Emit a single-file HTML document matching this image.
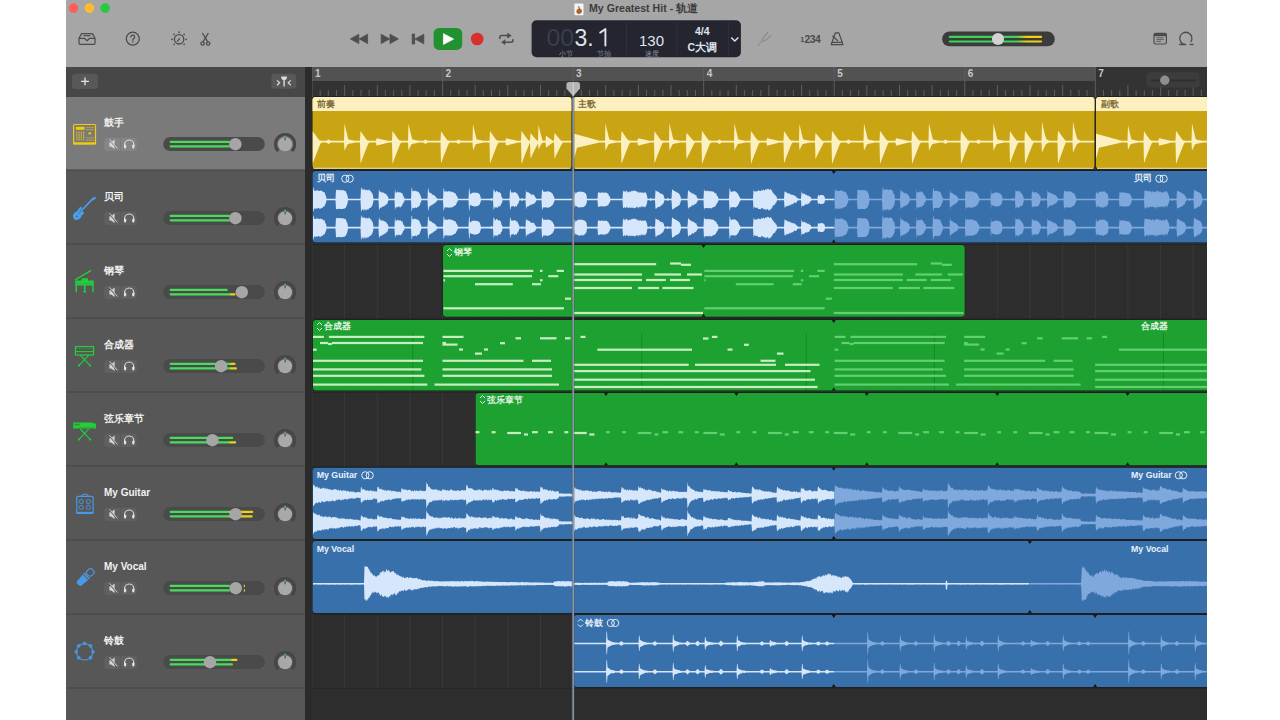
<!DOCTYPE html><html><head><meta charset="utf-8"><style>
*{margin:0;padding:0;box-sizing:border-box}
html,body{width:1280px;height:720px;overflow:hidden;background:#fff;font-family:"Liberation Sans",sans-serif}
.a{position:absolute}
</style></head><body>
<svg class="a" style="left:0;top:0" width="1280" height="720" viewBox="0 0 1280 720" font-family="Liberation Sans, sans-serif">
<defs><clipPath id="win"><rect x="66" y="0" width="1141" height="720"/></clipPath><clipPath id="arr"><rect x="312" y="67" width="895" height="653"/></clipPath></defs>
<g clip-path="url(#win)">
<rect x="66" y="0" width="1141" height="67" fill="#a6a6a6"/>
<rect x="66" y="67" width="239" height="653" fill="#575757"/>
<rect x="66" y="67" width="239" height="30" fill="#474747"/>
<rect x="305" y="67" width="7" height="653" fill="#2b2b2b"/>
<rect x="312" y="67" width="895" height="653" fill="#2d2d2d"/>
<circle cx="73.5" cy="8.1" r="4.8" fill="#fe5f57"/>
<circle cx="89.4" cy="8.1" r="4.8" fill="#febc2e"/>
<circle cx="105.1" cy="8.1" r="4.8" fill="#28c840"/>
<rect x="574.4" y="3.5" width="9.1" height="11.7" rx="1" fill="#f4f4f4"/>
<path d="M576.5 10.5Q576 13.5 578.5 14Q581.5 14 582 11Q582 9 580 8.5L579 6L578 6.2L578.6 8.8Q576.8 9.3 576.5 10.5Z" fill="#a8642a"/>
<text x="589" y="11.8" font-size="10.6" font-weight="bold" fill="#3c3c3c">My Greatest Hit - 轨道</text>
<g fill="none" stroke="#4b4b4b" stroke-width="1.25" stroke-linejoin="round"><path d="M81.6 33.6H92.4L95 38.3V43.2Q95 44.4 93.8 44.4H80.2Q79 44.4 79 43.2V38.3Z"/><path d="M79 38.3H84.3L87 40.8L89.7 38.3H95"/><path d="M83.5 35.6H90.5"/></g>
<circle cx="132.8" cy="38.7" r="6.5" fill="none" stroke="#4b4b4b" stroke-width="1.3"/>
<path d="M130.9 37.1Q130.9 35.1 132.8 35.1Q134.7 35.1 134.7 36.9Q134.7 38 133.5 38.7Q132.8 39.2 132.8 40.2" fill="none" stroke="#4b4b4b" stroke-width="1.2" stroke-linecap="round"/><circle cx="132.8" cy="41.9" r="0.75" fill="#4b4b4b"/>
<circle cx="179.1" cy="39.3" r="4.7" fill="none" stroke="#4b4b4b" stroke-width="1.3"/>
<path d="M179.8 38.5L176.9 41.6" stroke="#4b4b4b" stroke-width="1.2"/>
<circle cx="179.10" cy="32.20" r="0.85" fill="#4b4b4b"/>
<circle cx="174.08" cy="34.28" r="0.85" fill="#4b4b4b"/>
<circle cx="184.12" cy="34.28" r="0.85" fill="#4b4b4b"/>
<circle cx="172.00" cy="39.30" r="0.85" fill="#4b4b4b"/>
<circle cx="186.20" cy="39.30" r="0.85" fill="#4b4b4b"/>
<circle cx="174.08" cy="44.32" r="0.85" fill="#4b4b4b"/>
<circle cx="184.12" cy="44.32" r="0.85" fill="#4b4b4b"/>
<g fill="none" stroke="#4b4b4b" stroke-width="1.25"><path d="M202.4 33L207.6 41.6M208.4 33L203.2 41.6"/><circle cx="202.6" cy="43.5" r="1.7"/><circle cx="208.2" cy="43.5" r="1.7"/></g>
<g fill="#4e4e4e" stroke="#4e4e4e" stroke-width="0.8" stroke-linejoin="round"><path d="M350.4 38.9L358.8 34.2V43.6Z"/><path d="M359.2 38.9L367.6 34.2V43.6Z"/><path d="M398.4 38.9L390 34.2V43.6Z"/><path d="M389.6 38.9L381.2 34.2V43.6Z"/><path d="M412.2 34H414.6V44H412.2Z"/><path d="M415 39L423.8 34.2V43.8Z"/></g>
<rect x="433.6" y="27.9" width="28.6" height="22" rx="5.5" fill="#21922f"/>
<path d="M443.4 33.6L453.7 39.1L443.4 44.6Z" fill="#ffffff" stroke="#fff" stroke-width="0.6" stroke-linejoin="round"/>
<circle cx="477.2" cy="39" r="6.3" fill="#d8302a"/>
<g fill="none" stroke="#4e4e4e" stroke-width="1.5" stroke-linecap="round"><path d="M499.8 38.4V37.6Q499.8 35.6 501.8 35.6H508"/><path d="M513 39.6V40.2Q513 42.2 511 42.2H504.5"/></g>
<path d="M507.6 33.2L511.2 35.6L507.6 38Z M505 39.8L501.6 42.2L505 44.6Z" fill="#4e4e4e" stroke="#4e4e4e" stroke-width="0.6" stroke-linejoin="round"/>
<rect x="531.6" y="20.3" width="209.3" height="36.9" rx="5" fill="#24252f"/>
<rect x="626" y="22" width="1" height="33" fill="#30313b"/><rect x="676.3" y="22" width="1" height="33" fill="#30313b"/><rect x="727.8" y="22" width="1" height="33" fill="#30313b"/>
<text x="546.5" y="45.6" font-size="23" fill="#3a3d4d" textLength="27.5" lengthAdjust="spacingAndGlyphs">00</text>
<text x="574.5" y="45.6" font-size="23" fill="#dfe5ee">3.</text>
<path d="M605.4 29V45.6M600.2 32.6L605.2 29.2" fill="none" stroke="#dfe5ee" stroke-width="1.9" stroke-linecap="round"/>
<text x="566" y="56" font-size="6.5" fill="#8a90a0" text-anchor="middle">小节</text>
<text x="604" y="56" font-size="6.5" fill="#8a90a0" text-anchor="middle">节拍</text>
<text x="651.5" y="45.6" font-size="15" fill="#dfe5ee" text-anchor="middle">130</text>
<text x="651.5" y="56" font-size="6.5" fill="#8a90a0" text-anchor="middle">速度</text>
<text x="702.2" y="35.3" font-size="10.5" font-weight="bold" fill="#dfe5ee" text-anchor="middle">4/4</text>
<text x="702.2" y="51.2" font-size="10.5" font-weight="bold" fill="#dfe5ee" text-anchor="middle">C大调</text>
<path d="M731.2 37.4L734.8 41L738.4 37.4" fill="none" stroke="#dfe2ea" stroke-width="1.4"/>
<g fill="none" stroke="#8a8a8a" stroke-width="1.1" stroke-linecap="round"><path d="M758 45.5L762.3 40.6"/><path d="M767.6 32.6L762.8 38.4Q761.8 40.4 763.8 41Q765.2 41.2 766.4 39.6L771 35.6"/></g>
<text x="800.2" y="41.6" font-size="7.5" font-weight="bold" fill="#4b4b4b">1</text><text x="804.4" y="42.8" font-size="10.4" font-weight="bold" fill="#4b4b4b" letter-spacing="-0.5">234</text>
<g fill="none" stroke="#4b4b4b" stroke-width="1.2" stroke-linejoin="round"><path d="M835.4 32.8H838.8L843 44.6H831.2Z"/><path d="M831.6 42.4H842.6"/><path d="M832.4 35.8L838 41"/></g>
<rect x="942.1" y="31.6" width="112.7" height="14.7" rx="7.35" fill="#3b3b3b"/>
<defs><linearGradient id="gy" x1="948.7" x2="1042" gradientUnits="userSpaceOnUse"><stop offset="0.72" stop-color="#3fd25a"/><stop offset="0.84" stop-color="#f3cd16"/></linearGradient></defs>
<rect x="948.7" y="35.8" width="93.4" height="2.2" rx="1.1" fill="url(#gy)"/><rect x="948.7" y="40.4" width="93.4" height="2.2" rx="1.1" fill="url(#gy)"/>
<circle cx="998" cy="39" r="6.1" fill="#d2d2d2"/>
<g fill="none" stroke="#4b4b4b" stroke-width="1.2"><rect x="1154" y="33.4" width="12.4" height="10.6" rx="1.8"/></g>
<rect x="1154" y="33.4" width="12.4" height="2.8" fill="#4b4b4b"/>
<path d="M1156.4 37.8H1163.8M1156.4 39.6H1163.8M1156.4 41.4H1161" stroke="#4b4b4b" stroke-width="0.8"/>
<g fill="none" stroke="#4b4b4b" stroke-width="1.3"><path d="M1179.2 44.5H1186.2A6.1 6.1 0 1 1 1190.6 42.2"/><path d="M1189.6 44.5H1193.6"/></g>
<rect x="72" y="73.8" width="26" height="15.2" rx="3.5" fill="#585858"/>
<path d="M85 77.5V85.3M81.1 81.4H88.9" stroke="#e6e6e6" stroke-width="1.3"/>
<rect x="271.3" y="73.8" width="25" height="15" rx="3.5" fill="#585858"/>
<path d="M277 80.4L279.6 82.8L277 85.2M290.8 80.4L288.2 82.8L290.8 85.2" fill="none" stroke="#dcdcdc" stroke-width="1.2"/>
<path d="M281.2 76.4H287Q287 79.6 284.8 80.1V86.4H283.4V80.1Q281.2 79.6 281.2 76.4Z" fill="#dcdcdc"/>
<rect x="66" y="97" width="239" height="73" fill="#7a7a7a"/>
<rect x="66" y="169.5" width="239" height="1" fill="#454545"/>
<rect x="66" y="243.5" width="239" height="1" fill="#454545"/>
<rect x="66" y="317.5" width="239" height="1" fill="#454545"/>
<rect x="66" y="391.5" width="239" height="1" fill="#454545"/>
<rect x="66" y="465.5" width="239" height="1" fill="#454545"/>
<rect x="66" y="539.5" width="239" height="1" fill="#454545"/>
<rect x="66" y="613.5" width="239" height="1" fill="#454545"/>
<rect x="66" y="687.5" width="239" height="1" fill="#454545"/>
<text x="104" y="126" font-size="10" font-weight="bold" fill="#f2f2f2">鼓手</text>
<rect x="104.3" y="137.7" width="32.4" height="13.3" rx="3" fill="#858585"/>
<rect x="120.1" y="137.7" width="0.7" height="13.3" fill="#7a7a7a"/>
<path d="M109.4 142.2H111.2L114.6 139.6V149L111.2 146.4H109.4Z" fill="#e4e4e4" opacity="0.9"/>
<path d="M109.2 139.6L117.2 148.8" stroke="#858585" stroke-width="1.6"/><path d="M109.6 139.4L117.4 148.4" stroke="#e4e4e4" stroke-width="0.8"/>
<path d="M124.6 146.6V144.6A4.6 4.6 0 0 1 133.8 144.6V146.6" fill="none" stroke="#e4e4e4" stroke-width="1.1"/>
<rect x="124" y="144.8" width="2.2" height="3.6" rx="0.8" fill="#e4e4e4"/><rect x="132.2" y="144.8" width="2.2" height="3.6" rx="0.8" fill="#e4e4e4"/>
<rect x="163.2" y="137" width="101.6" height="14" rx="7" fill="#4a4a4a"/>
<rect x="169.6" y="140.8" width="60.4" height="2.3" rx="1.1" fill="#48db5c"/>
<rect x="169.6" y="145.3" width="60.4" height="2.3" rx="1.1" fill="#48db5c"/>
<circle cx="235.4" cy="144.2" r="6.2" fill="#a6a6a6"/>
<path d="M278.3 151.0A9.6 9.6 0 1 1 291.9 151.0" fill="none" stroke="#464646" stroke-width="3"/>
<circle cx="285.1" cy="144.2" r="7" fill="#a8a8a8"/>
<rect x="284.6" y="137.5" width="1" height="2.8" fill="#3a3a3a"/><circle cx="285.1" cy="136.5" r="0.9" fill="#40c050"/>
<text x="104" y="200" font-size="10" font-weight="bold" fill="#f2f2f2">贝司</text>
<rect x="104.3" y="211.7" width="32.4" height="13.3" rx="3" fill="#606060"/>
<rect x="120.1" y="211.7" width="0.7" height="13.3" fill="#575757"/>
<path d="M109.4 216.2H111.2L114.6 213.6V223L111.2 220.4H109.4Z" fill="#e4e4e4" opacity="0.9"/>
<path d="M109.2 213.6L117.2 222.8" stroke="#606060" stroke-width="1.6"/><path d="M109.6 213.4L117.4 222.4" stroke="#e4e4e4" stroke-width="0.8"/>
<path d="M124.6 220.6V218.6A4.6 4.6 0 0 1 133.8 218.6V220.6" fill="none" stroke="#e4e4e4" stroke-width="1.1"/>
<rect x="124" y="218.8" width="2.2" height="3.6" rx="0.8" fill="#e4e4e4"/><rect x="132.2" y="218.8" width="2.2" height="3.6" rx="0.8" fill="#e4e4e4"/>
<rect x="163.2" y="211" width="101.6" height="14" rx="7" fill="#4a4a4a"/>
<rect x="169.6" y="214.8" width="60.4" height="2.3" rx="1.1" fill="#48db5c"/>
<rect x="169.6" y="219.3" width="60.4" height="2.3" rx="1.1" fill="#48db5c"/>
<circle cx="235.4" cy="218.2" r="6.2" fill="#a6a6a6"/>
<path d="M278.3 225.0A9.6 9.6 0 1 1 291.9 225.0" fill="none" stroke="#464646" stroke-width="3"/>
<circle cx="285.1" cy="218.2" r="7" fill="#a8a8a8"/>
<rect x="284.6" y="211.5" width="1" height="2.8" fill="#3a3a3a"/><circle cx="285.1" cy="210.5" r="0.9" fill="#40c050"/>
<text x="104" y="274" font-size="10" font-weight="bold" fill="#f2f2f2">钢琴</text>
<rect x="104.3" y="285.7" width="32.4" height="13.3" rx="3" fill="#606060"/>
<rect x="120.1" y="285.7" width="0.7" height="13.3" fill="#575757"/>
<path d="M109.4 290.2H111.2L114.6 287.6V297L111.2 294.4H109.4Z" fill="#e4e4e4" opacity="0.9"/>
<path d="M109.2 287.6L117.2 296.8" stroke="#606060" stroke-width="1.6"/><path d="M109.6 287.4L117.4 296.4" stroke="#e4e4e4" stroke-width="0.8"/>
<path d="M124.6 294.6V292.6A4.6 4.6 0 0 1 133.8 292.6V294.6" fill="none" stroke="#e4e4e4" stroke-width="1.1"/>
<rect x="124" y="292.8" width="2.2" height="3.6" rx="0.8" fill="#e4e4e4"/><rect x="132.2" y="292.8" width="2.2" height="3.6" rx="0.8" fill="#e4e4e4"/>
<rect x="163.2" y="285" width="101.6" height="14" rx="7" fill="#4a4a4a"/>
<rect x="169.6" y="288.8" width="58.2" height="2.3" rx="1.1" fill="#48db5c"/>
<rect x="169.6" y="293.3" width="61.4" height="2.3" rx="1.1" fill="#48db5c"/>
<rect x="230.0" y="293.3" width="5.6" height="2.3" rx="1.1" fill="#e9d21a"/>
<circle cx="241.8" cy="292.2" r="6.2" fill="#a6a6a6"/>
<path d="M278.3 299.0A9.6 9.6 0 1 1 291.9 299.0" fill="none" stroke="#464646" stroke-width="3"/>
<circle cx="285.1" cy="292.2" r="7" fill="#a8a8a8"/>
<rect x="284.6" y="285.5" width="1" height="2.8" fill="#3a3a3a"/><circle cx="285.1" cy="284.5" r="0.9" fill="#40c050"/>
<text x="104" y="348" font-size="10" font-weight="bold" fill="#f2f2f2">合成器</text>
<rect x="104.3" y="359.7" width="32.4" height="13.3" rx="3" fill="#606060"/>
<rect x="120.1" y="359.7" width="0.7" height="13.3" fill="#575757"/>
<path d="M109.4 364.2H111.2L114.6 361.6V371L111.2 368.4H109.4Z" fill="#e4e4e4" opacity="0.9"/>
<path d="M109.2 361.6L117.2 370.8" stroke="#606060" stroke-width="1.6"/><path d="M109.6 361.4L117.4 370.4" stroke="#e4e4e4" stroke-width="0.8"/>
<path d="M124.6 368.6V366.6A4.6 4.6 0 0 1 133.8 366.6V368.6" fill="none" stroke="#e4e4e4" stroke-width="1.1"/>
<rect x="124" y="366.8" width="2.2" height="3.6" rx="0.8" fill="#e4e4e4"/><rect x="132.2" y="366.8" width="2.2" height="3.6" rx="0.8" fill="#e4e4e4"/>
<rect x="163.2" y="359" width="101.6" height="14" rx="7" fill="#4a4a4a"/>
<rect x="169.6" y="362.8" width="61.4" height="2.3" rx="1.1" fill="#48db5c"/>
<rect x="230.0" y="362.8" width="5.6" height="2.3" rx="1.1" fill="#e9d21a"/>
<rect x="169.6" y="367.3" width="61.4" height="2.3" rx="1.1" fill="#48db5c"/>
<rect x="230.0" y="367.3" width="7.0" height="2.3" rx="1.1" fill="#e9d21a"/>
<circle cx="221.1" cy="366.2" r="6.2" fill="#a6a6a6"/>
<path d="M278.3 373.0A9.6 9.6 0 1 1 291.9 373.0" fill="none" stroke="#464646" stroke-width="3"/>
<circle cx="285.1" cy="366.2" r="7" fill="#a8a8a8"/>
<rect x="284.6" y="359.5" width="1" height="2.8" fill="#3a3a3a"/><circle cx="285.1" cy="358.5" r="0.9" fill="#40c050"/>
<text x="104" y="422" font-size="10" font-weight="bold" fill="#f2f2f2">弦乐章节</text>
<rect x="104.3" y="433.7" width="32.4" height="13.3" rx="3" fill="#606060"/>
<rect x="120.1" y="433.7" width="0.7" height="13.3" fill="#575757"/>
<path d="M109.4 438.2H111.2L114.6 435.6V445L111.2 442.4H109.4Z" fill="#e4e4e4" opacity="0.9"/>
<path d="M109.2 435.6L117.2 444.8" stroke="#606060" stroke-width="1.6"/><path d="M109.6 435.4L117.4 444.4" stroke="#e4e4e4" stroke-width="0.8"/>
<path d="M124.6 442.6V440.6A4.6 4.6 0 0 1 133.8 440.6V442.6" fill="none" stroke="#e4e4e4" stroke-width="1.1"/>
<rect x="124" y="440.8" width="2.2" height="3.6" rx="0.8" fill="#e4e4e4"/><rect x="132.2" y="440.8" width="2.2" height="3.6" rx="0.8" fill="#e4e4e4"/>
<rect x="163.2" y="433" width="101.6" height="14" rx="7" fill="#4a4a4a"/>
<rect x="169.6" y="436.8" width="63.7" height="2.3" rx="1.1" fill="#48db5c"/>
<rect x="169.6" y="441.3" width="60.4" height="2.3" rx="1.1" fill="#48db5c"/>
<rect x="229.0" y="441.3" width="7.2" height="2.3" rx="1.1" fill="#e9d21a"/>
<circle cx="212.4" cy="440.2" r="6.2" fill="#a6a6a6"/>
<path d="M278.3 447.0A9.6 9.6 0 1 1 291.9 447.0" fill="none" stroke="#464646" stroke-width="3"/>
<circle cx="285.1" cy="440.2" r="7" fill="#a8a8a8"/>
<rect x="284.6" y="433.5" width="1" height="2.8" fill="#3a3a3a"/><circle cx="285.1" cy="432.5" r="0.9" fill="#40c050"/>
<text x="104" y="496" font-size="10" font-weight="bold" fill="#f2f2f2">My Guitar</text>
<rect x="104.3" y="507.7" width="32.4" height="13.3" rx="3" fill="#606060"/>
<rect x="120.1" y="507.7" width="0.7" height="13.3" fill="#575757"/>
<path d="M109.4 512.2H111.2L114.6 509.6V519L111.2 516.4H109.4Z" fill="#e4e4e4" opacity="0.9"/>
<path d="M109.2 509.6L117.2 518.8" stroke="#606060" stroke-width="1.6"/><path d="M109.6 509.4L117.4 518.4" stroke="#e4e4e4" stroke-width="0.8"/>
<path d="M124.6 516.6V514.6A4.6 4.6 0 0 1 133.8 514.6V516.6" fill="none" stroke="#e4e4e4" stroke-width="1.1"/>
<rect x="124" y="514.8" width="2.2" height="3.6" rx="0.8" fill="#e4e4e4"/><rect x="132.2" y="514.8" width="2.2" height="3.6" rx="0.8" fill="#e4e4e4"/>
<rect x="163.2" y="507" width="101.6" height="14" rx="7" fill="#4a4a4a"/>
<rect x="169.6" y="510.8" width="60.4" height="2.3" rx="1.1" fill="#48db5c"/>
<rect x="229.0" y="510.8" width="24.3" height="2.3" rx="1.1" fill="#e9d21a"/>
<rect x="169.6" y="515.3" width="60.4" height="2.3" rx="1.1" fill="#48db5c"/>
<rect x="229.0" y="515.3" width="23.7" height="2.3" rx="1.1" fill="#e9d21a"/>
<circle cx="235.6" cy="514.2" r="6.2" fill="#a6a6a6"/>
<path d="M278.3 521.0A9.6 9.6 0 1 1 291.9 521.0" fill="none" stroke="#464646" stroke-width="3"/>
<circle cx="285.1" cy="514.2" r="7" fill="#a8a8a8"/>
<rect x="284.6" y="507.5" width="1" height="2.8" fill="#3a3a3a"/><circle cx="285.1" cy="506.5" r="0.9" fill="#40c050"/>
<text x="104" y="570" font-size="10" font-weight="bold" fill="#f2f2f2">My Vocal</text>
<rect x="104.3" y="581.7" width="32.4" height="13.3" rx="3" fill="#606060"/>
<rect x="120.1" y="581.7" width="0.7" height="13.3" fill="#575757"/>
<path d="M109.4 586.2H111.2L114.6 583.6V593L111.2 590.4H109.4Z" fill="#e4e4e4" opacity="0.9"/>
<path d="M109.2 583.6L117.2 592.8" stroke="#606060" stroke-width="1.6"/><path d="M109.6 583.4L117.4 592.4" stroke="#e4e4e4" stroke-width="0.8"/>
<path d="M124.6 590.6V588.6A4.6 4.6 0 0 1 133.8 588.6V590.6" fill="none" stroke="#e4e4e4" stroke-width="1.1"/>
<rect x="124" y="588.8" width="2.2" height="3.6" rx="0.8" fill="#e4e4e4"/><rect x="132.2" y="588.8" width="2.2" height="3.6" rx="0.8" fill="#e4e4e4"/>
<rect x="163.2" y="581" width="101.6" height="14" rx="7" fill="#4a4a4a"/>
<rect x="169.6" y="584.8" width="60.4" height="2.3" rx="1.1" fill="#48db5c"/>
<rect x="169.6" y="589.3" width="60.4" height="2.3" rx="1.1" fill="#48db5c"/>
<rect x="243.8" y="584.8" width="1.2" height="2.3" fill="#e9c21a"/><rect x="243.8" y="589.3" width="1.2" height="2.3" fill="#e9c21a"/>
<circle cx="235.75" cy="588.2" r="6.2" fill="#a6a6a6"/>
<path d="M278.3 595.0A9.6 9.6 0 1 1 291.9 595.0" fill="none" stroke="#464646" stroke-width="3"/>
<circle cx="285.1" cy="588.2" r="7" fill="#a8a8a8"/>
<rect x="284.6" y="581.5" width="1" height="2.8" fill="#3a3a3a"/><circle cx="285.1" cy="580.5" r="0.9" fill="#40c050"/>
<text x="104" y="644" font-size="10" font-weight="bold" fill="#f2f2f2">铃鼓</text>
<rect x="104.3" y="655.7" width="32.4" height="13.3" rx="3" fill="#606060"/>
<rect x="120.1" y="655.7" width="0.7" height="13.3" fill="#575757"/>
<path d="M109.4 660.2H111.2L114.6 657.6V667L111.2 664.4H109.4Z" fill="#e4e4e4" opacity="0.9"/>
<path d="M109.2 657.6L117.2 666.8" stroke="#606060" stroke-width="1.6"/><path d="M109.6 657.4L117.4 666.4" stroke="#e4e4e4" stroke-width="0.8"/>
<path d="M124.6 664.6V662.6A4.6 4.6 0 0 1 133.8 662.6V664.6" fill="none" stroke="#e4e4e4" stroke-width="1.1"/>
<rect x="124" y="662.8" width="2.2" height="3.6" rx="0.8" fill="#e4e4e4"/><rect x="132.2" y="662.8" width="2.2" height="3.6" rx="0.8" fill="#e4e4e4"/>
<rect x="163.2" y="655" width="101.6" height="14" rx="7" fill="#4a4a4a"/>
<rect x="169.6" y="658.8" width="62.4" height="2.3" rx="1.1" fill="#48db5c"/>
<rect x="231.0" y="658.8" width="6.5" height="2.3" rx="1.1" fill="#e9d21a"/>
<rect x="169.6" y="663.3" width="63.4" height="2.3" rx="1.1" fill="#48db5c"/>
<circle cx="210" cy="662.2" r="6.2" fill="#a6a6a6"/>
<path d="M278.3 669.0A9.6 9.6 0 1 1 291.9 669.0" fill="none" stroke="#464646" stroke-width="3"/>
<circle cx="285.1" cy="662.2" r="7" fill="#a8a8a8"/>
<rect x="284.6" y="655.5" width="1" height="2.8" fill="#3a3a3a"/><circle cx="285.1" cy="654.5" r="0.9" fill="#40c050"/>
<rect x="73.6" y="124.5" width="21.9" height="19.3" rx="1" fill="none" stroke="#f2cc0c" stroke-width="1.2"/>
<rect x="73" y="142.3" width="23.1" height="2.1" fill="#f2cc0c"/>
<rect x="75.9" y="126.8" width="8.6" height="3" fill="#f2cc0c"/>
<rect x="76.2" y="131.6" width="1.2" height="1.1" fill="#f2cc0c"/><rect x="78.5" y="131.6" width="1.2" height="1.1" fill="#f2cc0c"/><rect x="80.8" y="131.6" width="1.2" height="1.1" fill="#f2cc0c"/><rect x="83.1" y="131.6" width="1.2" height="1.1" fill="#f2cc0c"/><rect x="76.2" y="133.5" width="1.2" height="1.1" fill="#f2cc0c"/><rect x="78.5" y="133.5" width="1.2" height="1.1" fill="#f2cc0c"/><rect x="80.8" y="133.5" width="1.2" height="1.1" fill="#f2cc0c"/><rect x="83.1" y="133.5" width="1.2" height="1.1" fill="#f2cc0c"/><rect x="76.2" y="135.4" width="1.2" height="1.1" fill="#f2cc0c"/><rect x="78.5" y="135.4" width="1.2" height="1.1" fill="#f2cc0c"/><rect x="80.8" y="135.4" width="1.2" height="1.1" fill="#f2cc0c"/><rect x="83.1" y="135.4" width="1.2" height="1.1" fill="#f2cc0c"/><rect x="76.2" y="137.3" width="1.2" height="1.1" fill="#f2cc0c"/><rect x="78.5" y="137.3" width="1.2" height="1.1" fill="#f2cc0c"/><rect x="80.8" y="137.3" width="1.2" height="1.1" fill="#f2cc0c"/><rect x="83.1" y="137.3" width="1.2" height="1.1" fill="#f2cc0c"/><rect x="76.2" y="139.2" width="1.2" height="1.1" fill="#f2cc0c"/><rect x="78.5" y="139.2" width="1.2" height="1.1" fill="#f2cc0c"/><rect x="80.8" y="139.2" width="1.2" height="1.1" fill="#f2cc0c"/><rect x="83.1" y="139.2" width="1.2" height="1.1" fill="#f2cc0c"/><rect x="86.6" y="126.9" width="1" height="1" fill="#f2cc0c"/><rect x="86.6" y="137.4" width="1" height="1" fill="#f2cc0c"/><rect x="88.6" y="126.9" width="1" height="1" fill="#f2cc0c"/><rect x="88.6" y="137.4" width="1" height="1" fill="#f2cc0c"/><rect x="90.6" y="126.9" width="1" height="1" fill="#f2cc0c"/><rect x="90.6" y="137.4" width="1" height="1" fill="#f2cc0c"/><rect x="92.6" y="126.9" width="1" height="1" fill="#f2cc0c"/><rect x="92.6" y="137.4" width="1" height="1" fill="#f2cc0c"/><rect x="86.6" y="129.2" width="1" height="1" fill="#f2cc0c"/><rect x="86.6" y="139.7" width="1" height="1" fill="#f2cc0c"/><rect x="88.6" y="129.2" width="1" height="1" fill="#f2cc0c"/><rect x="88.6" y="139.7" width="1" height="1" fill="#f2cc0c"/><rect x="90.6" y="129.2" width="1" height="1" fill="#f2cc0c"/><rect x="90.6" y="139.7" width="1" height="1" fill="#f2cc0c"/><rect x="92.6" y="129.2" width="1" height="1" fill="#f2cc0c"/><rect x="92.6" y="139.7" width="1" height="1" fill="#f2cc0c"/>
<ellipse cx="89.8" cy="133.3" rx="1.6" ry="1.1" fill="#f2cc0c"/>
<path d="M80.8 211.2L93.2 198.4" stroke="#4aa0f0" stroke-width="1.6" stroke-linecap="round"/>
<path d="M92 199.2L94.6 196.8Q96.4 196.4 95.6 198.4L93.4 200.4Z" fill="#4aa0f0"/>
<path d="M80.4 206.8L82.2 207.8L79.6 210.8L83.8 212L84.2 213.2L81.6 215.4Q80.4 219.8 76.4 220Q72.8 219.6 73 215.4Q73.6 212.4 76.6 211.4Q78.4 210.4 78.8 208.6Z" fill="#4aa0f0"/>
<circle cx="76.8" cy="216.3" r="0.9" fill="#575757"/><path d="M78.4 213.6L80.8 211.8" stroke="#575757" stroke-width="0.8"/>
<path d="M75.6 279.6L90.8 270.6" stroke="#22cf3a" stroke-width="1.3" stroke-linecap="round"/>
<path d="M75.2 280.4H81.6V278.2H88V280.4H93.8V285.4H75.2Z" fill="#22cf3a"/>
<rect x="75.5" y="285" width="1.5" height="7.3" fill="#22cf3a"/><rect x="84" y="285" width="1.5" height="6.6" fill="#22cf3a"/><rect x="83.2" y="291" width="3.1" height="1.4" rx="0.6" fill="#22cf3a"/><rect x="92.2" y="285" width="1.4" height="7.3" fill="#22cf3a"/>
<rect x="76.3" y="283.2" width="16.4" height="0.6" fill="#3aa04a"/>
<rect x="75.5" y="346.6" width="18" height="8.4" fill="none" stroke="#22cf3a" stroke-width="1.2"/>
<path d="M76 351.6H93" stroke="#22cf3a" stroke-width="1"/><path d="M76.6 348.4H92.4" stroke="#22cf3a" stroke-width="0.6" stroke-dasharray="1 1.2"/>
<path d="M80.4 355.3L90.3 365.6M88.6 355.3L78.8 365.6" stroke="#22cf3a" stroke-width="1.1" stroke-linecap="round"/>
<circle cx="78.9" cy="365.5" r="1" fill="#22cf3a"/><circle cx="90.2" cy="365.5" r="1" fill="#22cf3a"/>
<path d="M73.2 422.6H91.4L96 423.8V428.6H73.2Z" fill="#22cf3a"/>
<path d="M74.4 423.8H80.6L78.8 425.6H74.4Z" fill="#3c8a46"/><path d="M79 427.6H94.6" stroke="#3c8a46" stroke-width="0.6"/>
<path d="M80.4 429L90.3 439.6M88.6 429L78.8 439.6" stroke="#22cf3a" stroke-width="1.1" stroke-linecap="round"/>
<circle cx="78.9" cy="439.5" r="1" fill="#22cf3a"/><circle cx="90.2" cy="439.5" r="1" fill="#22cf3a"/>
<rect x="76.8" y="496.3" width="16.3" height="17" rx="1.2" fill="none" stroke="#4a98e6" stroke-width="1.2"/>
<rect x="76.3" y="511.8" width="17.2" height="2" fill="#4a98e6"/>
<path d="M81 496.2Q84.8 491.8 88.6 496.2" fill="none" stroke="#4a98e6" stroke-width="1.1"/>
<circle cx="81.2" cy="501.6" r="2.1" fill="none" stroke="#4a98e6" stroke-width="0.9"/>
<circle cx="81.2" cy="507.4" r="2.1" fill="none" stroke="#4a98e6" stroke-width="0.9"/>
<circle cx="88.4" cy="501.6" r="2.1" fill="none" stroke="#4a98e6" stroke-width="0.9"/>
<circle cx="88.4" cy="507.4" r="2.1" fill="none" stroke="#4a98e6" stroke-width="0.9"/>
<g transform="rotate(45 85 577.5)"><rect x="81.8" y="566.6" width="6.6" height="7.2" rx="2.6" fill="none" stroke="#4a98e6" stroke-width="1.1"/><rect x="81" y="574.6" width="8.2" height="1.6" fill="#4a98e6"/><path d="M81.2 577H89L88.2 586.4Q85.1 588.6 82 586.4Z" fill="#4a98e6"/></g>
<circle cx="84.6" cy="651.8" r="8.2" fill="none" stroke="#4a98e6" stroke-width="1.1"/>
<ellipse cx="84.60" cy="643.40" rx="1.9" ry="1.9" fill="#4a98e6" opacity="0.85"/>
<ellipse cx="90.54" cy="645.86" rx="1.9" ry="1.9" fill="#4a98e6" opacity="0.85"/>
<ellipse cx="78.66" cy="645.86" rx="1.9" ry="1.9" fill="#4a98e6" opacity="0.85"/>
<ellipse cx="93.00" cy="651.80" rx="1.9" ry="1.9" fill="#4a98e6" opacity="0.85"/>
<ellipse cx="76.20" cy="651.80" rx="1.9" ry="1.9" fill="#4a98e6" opacity="0.85"/>
<ellipse cx="90.54" cy="657.74" rx="1.9" ry="1.9" fill="#4a98e6" opacity="0.85"/>
<ellipse cx="78.66" cy="657.74" rx="1.9" ry="1.9" fill="#4a98e6" opacity="0.85"/>
</g>
<g clip-path="url(#arr)">
<rect x="312" y="67" width="895" height="14" fill="#333333"/>
<rect x="312" y="67" width="783.3" height="14" fill="#525252"/>
<rect x="312" y="81" width="895" height="16" fill="#333333"/>
<path d="M312.0 67V97 M320.2 90V96 M328.3 90V96 M336.5 90V96 M344.6 85V96 M352.8 90V96 M361.0 90V96 M369.1 90V96 M377.3 85V96 M385.4 90V96 M393.6 90V96 M401.8 90V96 M409.9 85V96 M418.1 90V96 M426.2 90V96 M434.4 90V96 M442.6 67V97 M450.7 90V96 M458.9 90V96 M467.0 90V96 M475.2 85V96 M483.3 90V96 M491.5 90V96 M499.7 90V96 M507.8 85V96 M516.0 90V96 M524.1 90V96 M532.3 90V96 M540.5 85V96 M548.6 90V96 M556.8 90V96 M564.9 90V96 M573.1 67V97 M581.3 90V96 M589.4 90V96 M597.6 90V96 M605.7 85V96 M613.9 90V96 M622.1 90V96 M630.2 90V96 M638.4 85V96 M646.5 90V96 M654.7 90V96 M662.9 90V96 M671.0 85V96 M679.2 90V96 M687.3 90V96 M695.5 90V96 M703.7 67V97 M711.8 90V96 M720.0 90V96 M728.1 90V96 M736.3 85V96 M744.4 90V96 M752.6 90V96 M760.8 90V96 M768.9 85V96 M777.1 90V96 M785.2 90V96 M793.4 90V96 M801.6 85V96 M809.7 90V96 M817.9 90V96 M826.0 90V96 M834.2 67V97 M842.4 90V96 M850.5 90V96 M858.7 90V96 M866.8 85V96 M875.0 90V96 M883.2 90V96 M891.3 90V96 M899.5 85V96 M907.6 90V96 M915.8 90V96 M924.0 90V96 M932.1 85V96 M940.3 90V96 M948.4 90V96 M956.6 90V96 M964.8 67V97 M972.9 90V96 M981.1 90V96 M989.2 90V96 M997.4 85V96 M1005.5 90V96 M1013.7 90V96 M1021.9 90V96 M1030.0 85V96 M1038.2 90V96 M1046.3 90V96 M1054.5 90V96 M1062.7 85V96 M1070.8 90V96 M1079.0 90V96 M1087.1 90V96 M1095.3 67V97 M1103.5 90V96 M1111.6 90V96 M1119.8 90V96 M1127.9 85V96 M1136.1 90V96 M1144.3 90V96 M1152.4 90V96 M1160.6 85V96 M1168.7 90V96 M1176.9 90V96 M1185.1 90V96 M1193.2 85V96 M1201.4 90V96 M1209.5 90V96" stroke="#5e5e5e" stroke-width="1"/>
<text x="315.0" y="77" font-size="10" font-weight="bold" fill="#c8c8c8">1</text>
<text x="445.6" y="77" font-size="10" font-weight="bold" fill="#c8c8c8">2</text>
<text x="576.1" y="77" font-size="10" font-weight="bold" fill="#c8c8c8">3</text>
<text x="706.7" y="77" font-size="10" font-weight="bold" fill="#c8c8c8">4</text>
<text x="837.2" y="77" font-size="10" font-weight="bold" fill="#c8c8c8">5</text>
<text x="967.8" y="77" font-size="10" font-weight="bold" fill="#c8c8c8">6</text>
<text x="1098.3" y="77" font-size="10" font-weight="bold" fill="#c8c8c8">7</text>
<path d="M312.0 97V689 M344.6 97V689 M377.3 97V689 M409.9 97V689 M442.6 97V689 M475.2 97V689 M507.8 97V689 M540.5 97V689 M573.1 97V689 M605.7 97V689 M638.4 97V689 M671.0 97V689 M703.7 97V689 M736.3 97V689 M768.9 97V689 M801.6 97V689 M834.2 97V689 M866.8 97V689 M899.5 97V689 M932.1 97V689 M964.8 97V689 M997.4 97V689 M1030.0 97V689 M1062.7 97V689 M1095.3 97V689 M1127.9 97V689 M1160.6 97V689 M1193.2 97V689" stroke="#3a3a3a" stroke-width="1"/>
<rect x="312" y="170" width="895" height="1" fill="#262626"/>
<rect x="312" y="244" width="895" height="1" fill="#262626"/>
<rect x="312" y="318" width="895" height="1" fill="#262626"/>
<rect x="312" y="392" width="895" height="1" fill="#262626"/>
<rect x="312" y="466" width="895" height="1" fill="#262626"/>
<rect x="312" y="540" width="895" height="1" fill="#262626"/>
<rect x="312" y="614" width="895" height="1" fill="#262626"/>
<rect x="312" y="688" width="895" height="1" fill="#262626"/>
<rect x="312.0" y="96.5" width="260.0" height="72.8" rx="3.5" fill="#151515"/>
<rect x="312.5" y="97.0" width="259.0" height="71.8" rx="3" fill="#c9a514"/>
<path d="M315.5 97H568.5Q571.5 97 571.5 100V111H312.5V100Q312.5 97 315.5 97Z" fill="#fdf0c0"/>
<rect x="313.5" y="167.8" width="257.0" height="1" fill="#f0e3a8"/>
<text x="317.0" y="107" font-size="8.8" font-weight="bold" fill="#7c6c34">前奏</text>
<clipPath id="dc312"><rect x="312.5" y="111" width="259.0" height="57"/></clipPath>
<path clip-path="url(#dc312)" d="M312.5 130.7L313 131.5L313.5 132.2L314 132.9L314.5 133.7L315 134.4L315.5 135.1L316 135.9L316.5 136.6L317 137.3L317.5 138L318 138.6L318.5 139.3L319 140L319.5 140.3L320 140.4L320.5 140.5L321 140.6L321.5 140.7L322 140.7L322.5 140.8L323 140.8L323.5 140.8L324 140.8L324.5 140.8L325 140.8L325.5 140.8L326 140.8L326.5 140.7L327 140.4L327.5 140.1L328 139.7L328.5 139.4L329 139.7L329.5 140.1L330 140.4L330.5 140.7L331 140.8L331.5 140.8L332 140.8L332.5 140.8L333 140.8L333.5 140.8L334 140.8L334.5 140.8L335 140.8L335.5 140.8L336 140.8L336.5 140.8L337 140.8L337.5 140.8L338 140.8L338.5 140.8L339 140.8L339.5 140.8L340 140.8L340.5 140.8L341 140.8L341.5 140.8L342 140.8L342.5 140.8L343 140.8L343.5 140.8L344 140.8L344.5 123.2L345 125.4L345.5 127.7L346 129.9L346.5 132L347 134.1L347.5 136.2L348 138.2L348.5 139.5L349 139.6L349.5 139.7L350 139.8L350.5 139.9L351 140L351.5 140.1L352 140.2L352.5 140.3L353 140.4L353.5 140.5L354 140.6L354.5 140.7L355 140.8L355.5 140.8L356 140.8L356.5 140.8L357 140.8L357.5 140.8L358 140.8L358.5 140.8L359 140.8L359.5 140.8L360 140.8L360.5 131L361 131.8L361.5 132.5L362 133.2L362.5 134L363 134.7L363.5 135.4L364 136.1L364.5 136.8L365 137.5L365.5 138.2L366 138.9L366.5 139.6L367 140.2L367.5 140.3L368 140.4L368.5 140.5L369 140.6L369.5 140.7L370 140.8L370.5 140.8L371 140.8L371.5 140.8L372 140.8L372.5 140.8L373 140.8L373.5 140.8L374 140.8L374.5 140.8L375 140.8L375.5 140.8L376 140.8L376.5 138.3L377 138.4L377.5 138.5L378 138.6L378.5 138.7L379 138.8L379.5 138.9L380 139L380.5 139.1L381 139.2L381.5 139.4L382 139.5L382.5 139.6L383 139.7L383.5 139.8L384 139.9L384.5 140L385 140.1L385.5 140.2L386 140.3L386.5 140.5L387 140.6L387.5 140.7L388 140.8L388.5 140.8L389 140.8L389.5 140.8L390 140.8L390.5 140.8L391 140.8L391.5 140.8L392 140.8L392.5 130.9L393 131.6L393.5 132.4L394 133.1L394.5 133.8L395 134.6L395.5 135.3L396 136L396.5 136.7L397 137.4L397.5 138.1L398 138.8L398.5 139.4L399 140.1L399.5 140.3L400 140.4L400.5 140.5L401 140.6L401.5 140.7L402 140.8L402.5 140.8L403 140.8L403.5 140.8L404 140.8L404.5 140.8L405 140.8L405.5 140.8L406 140.8L406.5 140.8L407 140.8L407.5 140.8L408 140.8L408.5 123.7L409 125.9L409.5 128.1L410 130.3L410.5 132.4L411 134.5L411.5 136.6L412 138.6L412.5 139.5L413 139.6L413.5 139.7L414 139.8L414.5 139.9L415 140L415.5 140.1L416 140.2L416.5 140.3L417 140.4L417.5 140.5L418 140.6L418.5 140.7L419 140.8L419.5 140.8L420 140.8L420.5 140.8L421 140.8L421.5 140.8L422 140.8L422.5 140.8L423 140.8L423.5 140.7L424 140.4L424.5 140.1L425 139.7L425.5 139.4L426 139.7L426.5 140.1L427 140.4L427.5 140.7L428 140.8L428.5 140.8L429 140.8L429.5 140.8L430 140.8L430.5 140.8L431 140.8L431.5 140.8L432 140.8L432.5 140.8L433 140.8L433.5 140.8L434 140.8L434.5 140.8L435 140.8L435.5 140.8L436 140.8L436.5 140.8L437 140.8L437.5 140.8L438 140.8L438.5 140.8L439 140.8L439.5 140.8L440 140.8L440.5 140.8L441 131.2L441.5 131.9L442 132.6L442.5 133.4L443 134.1L443.5 134.9L444 135.6L444.5 136.3L445 137L445.5 137.7L446 138.4L446.5 139L447 139.7L447.5 140.3L448 140.4L448.5 140.5L449 140.5L449.5 140.6L450 140.7L450.5 140.8L451 140.8L451.5 140.8L452 140.8L452.5 140.8L453 140.8L453.5 140.8L454 140.8L454.5 140.8L455 140.8L455.5 140.8L456 140.8L456.5 140.7L457 140.4L457.5 140.1L458 139.7L458.5 139.4L459 139.7L459.5 140.1L460 140.4L460.5 140.7L461 140.8L461.5 140.8L462 140.8L462.5 140.8L463 140.8L463.5 140.8L464 140.8L464.5 140.8L465 140.8L465.5 140.8L466 140.8L466.5 140.8L467 140.8L467.5 140.8L468 140.8L468.5 140.8L469 140.8L469.5 140.8L470 140.8L470.5 140.8L471 140.8L471.5 140.8L472 140.8L472.5 140.8L473 124.1L473.5 126.3L474 128.5L474.5 130.7L475 132.9L475.5 134.9L476 137L476.5 138.9L477 139.5L477.5 139.6L478 139.7L478.5 139.8L479 139.9L479.5 140L480 140.1L480.5 140.2L481 140.3L481.5 140.4L482 140.5L482.5 140.6L483 140.7L483.5 140.8L484 140.8L484.5 140.8L485 140.8L485.5 140.8L486 140.8L486.5 140.8L487 140.8L487.5 140.8L488 140.8L488.5 140.8L489 140.8L489.5 140.8L490 131L490.5 131.8L491 132.5L491.5 133.2L492 134L492.5 134.7L493 135.4L493.5 136.1L494 136.8L494.5 137.5L495 138.2L495.5 138.9L496 139.6L496.5 140.2L497 140.3L497.5 140.4L498 140.5L498.5 140.6L499 140.7L499.5 140.8L500 140.8L500.5 140.8L501 140.8L501.5 140.8L502 140.8L502.5 140.8L503 140.8L503.5 140.8L504 140.8L504.5 140.8L505 140.8L505.5 140.8L506 138.3L506.5 138.4L507 138.5L507.5 138.6L508 138.7L508.5 138.8L509 138.9L509.5 139.1L510 139.2L510.5 139.3L511 139.4L511.5 139.5L512 139.6L512.5 139.7L513 139.8L513.5 139.9L514 140L514.5 140.1L515 140.3L515.5 140.4L516 140.5L516.5 140.6L517 140.7L517.5 140.8L518 140.8L518.5 140.8L519 140.8L519.5 140.8L520 140.8L520.5 140.8L521 140.8L521.5 130.7L522 131.5L522.5 132.2L523 132.9L523.5 133.7L524 134.4L524.5 135.1L525 135.9L525.5 136.6L526 137.3L526.5 138L527 138.6L527.5 139.3L528 140L528.5 140.3L529 140.4L529.5 140.5L530 140.6L530.5 133.1L531 133.7L531.5 134.3L532 134.9L532.5 135.5L533 136.1L533.5 136.7L534 137.3L534.5 137.8L535 138.4L535.5 139L536 139.5L536.5 140.1L537 140.6L537.5 140.8L538 140.8L538.5 125.1L539 127.2L539.5 129.2L540 131.2L540.5 133.2L541 135.1L541.5 137L542 138.8L542.5 140.5L543 140.6L543.5 140.8L544 140.8L544.5 140.8L545 140.8L545.5 140.8L546 135.7L546.5 136.1L547 136.4L547.5 136.8L548 137.2L548.5 137.6L549 137.9L549.5 138.3L550 138.7L550.5 139.1L551 139.4L551.5 139.8L552 140.2L552.5 140.6L553 140.8L553.5 140.8L554 140.8L554.5 132.9L555 133.6L555.5 134.2L556 134.8L556.5 135.4L557 136L557.5 136.6L558 137.2L558.5 137.7L559 138.3L559.5 138.9L560 139.4L560.5 140L561 140.5L561.5 140.8L562 140.8L562.5 140.8L563 140.8L563.5 140.8L564 140.8L564.5 140.8L565 140.8L565.5 140.8L566 140.8L566.5 140.8L567 140.8L567.5 140.8L568 140.8L568.5 140.8L569 140.8L569.5 140.8L570 140.8L570.5 140.8L571 140.8L571.5 140.8L571.5 142.6L571 142.6L570.5 142.6L570 142.6L569.5 142.6L569 142.6L568.5 142.6L568 142.6L567.5 142.6L567 142.6L566.5 142.6L566 142.6L565.5 142.6L565 142.6L564.5 142.6L564 142.6L563.5 142.6L563 142.6L562.5 142.9L562 143.8L561.5 144.7L561 145.6L560.5 146.5L560 147.5L559.5 148.5L559 149.5L558.5 150.5L558 151.5L557.5 152.5L557 153.5L556.5 154.6L556 155.6L555.5 156.7L555 157.7L554.5 158.8L554 142.6L553.5 142.6L553 142.6L552.5 142.8L552 143.2L551.5 143.6L551 143.9L550.5 144.3L550 144.7L549.5 145.1L549 145.4L548.5 145.8L548 146.2L547.5 146.6L547 146.9L546.5 147.3L546 147.7L545.5 142.6L545 142.6L544.5 142.6L544 142.6L543.5 142.6L543 142.8L542.5 142.9L542 143.1L541.5 143.9L541 144.8L540.5 145.7L540 146.6L539.5 147.6L539 148.5L538.5 149.5L538 143.6L537.5 144.5L537 145.4L536.5 146.4L536 147.3L535.5 148.3L535 149.3L534.5 150.3L534 151.3L533.5 152.3L533 153.3L532.5 154.3L532 155.4L531.5 156.4L531 157.5L530.5 158.6L530 142.8L529.5 143.7L529 144.8L528.5 146L528 147.2L527.5 148.4L527 149.7L526.5 150.9L526 152.2L525.5 153.5L525 154.8L524.5 156.1L524 157.4L523.5 158.8L523 160.1L522.5 161.5L522 162.8L521.5 164.2L521 142.6L520.5 142.6L520 142.6L519.5 142.6L519 142.6L518.5 142.6L518 142.6L517.5 142.7L517 142.8L516.5 143L516 143.1L515.5 143.2L515 143.3L514.5 143.5L514 143.6L513.5 143.7L513 143.8L512.5 144L512 144.1L511.5 144.2L511 144.3L510.5 144.5L510 144.6L509.5 144.7L509 144.8L508.5 145L508 145.1L507.5 145.2L507 145.3L506.5 145.5L506 145.6L505.5 142.6L505 142.6L504.5 142.6L504 142.6L503.5 142.6L503 142.6L502.5 142.6L502 142.6L501.5 142.6L501 142.6L500.5 142.6L500 142.6L499.5 142.6L499 142.7L498.5 142.8L498 143.3L497.5 144.4L497 145.5L496.5 146.7L496 147.9L495.5 149.2L495 150.4L494.5 151.7L494 153L493.5 154.3L493 155.6L492.5 156.9L492 158.2L491.5 159.6L491 160.9L490.5 162.3L490 163.7L489.5 142.6L489 142.6L488.5 142.6L488 142.6L487.5 142.6L487 142.6L486.5 142.6L486 142.6L485.5 142.6L485 142.6L484.5 142.6L484 142.6L483.5 142.6L483 142.7L482.5 142.8L482 142.9L481.5 143L481 143.1L480.5 143.2L480 143.3L479.5 143.4L479 143.5L478.5 143.6L478 143.7L477.5 143.8L477 143.9L476.5 144L476 144.1L475.5 145L475 146L474.5 147L474 148.1L473.5 149.2L473 150.3L472.5 142.6L472 142.6L471.5 142.6L471 142.6L470.5 142.6L470 142.6L469.5 142.6L469 142.6L468.5 142.6L468 142.6L467.5 142.6L467 142.6L466.5 142.6L466 142.6L465.5 142.6L465 142.6L464.5 142.6L464 142.6L463.5 142.6L463 142.6L462.5 142.6L462 142.6L461.5 142.6L461 142.6L460.5 142.7L460 143L459.5 143.3L459 143.7L458.5 144L458 143.7L457.5 143.3L457 143L456.5 142.7L456 142.6L455.5 142.6L455 142.6L454.5 142.6L454 142.6L453.5 142.6L453 142.6L452.5 142.6L452 142.6L451.5 142.6L451 142.6L450.5 142.6L450 142.7L449.5 142.8L449 143.1L448.5 144.2L448 145.3L447.5 146.5L447 147.7L446.5 148.9L446 150.2L445.5 151.4L445 152.7L444.5 154L444 155.3L443.5 156.6L443 158L442.5 159.3L442 160.7L441.5 162L441 163.4L440.5 142.6L440 142.6L439.5 142.6L439 142.6L438.5 142.6L438 142.6L437.5 142.6L437 142.6L436.5 142.6L436 142.6L435.5 142.6L435 142.6L434.5 142.6L434 142.6L433.5 142.6L433 142.6L432.5 142.6L432 142.6L431.5 142.6L431 142.6L430.5 142.6L430 142.6L429.5 142.6L429 142.6L428.5 142.6L428 142.6L427.5 142.7L427 143L426.5 143.3L426 143.7L425.5 144L425 143.7L424.5 143.3L424 143L423.5 142.7L423 142.6L422.5 142.6L422 142.6L421.5 142.6L421 142.6L420.5 142.6L420 142.6L419.5 142.6L419 142.6L418.5 142.7L418 142.8L417.5 142.9L417 143L416.5 143.1L416 143.2L415.5 143.3L415 143.4L414.5 143.5L414 143.6L413.5 143.7L413 143.8L412.5 143.9L412 144L411.5 144.2L411 145.2L410.5 146.2L410 147.3L409.5 148.3L409 149.4L408.5 150.5L408 142.6L407.5 142.6L407 142.6L406.5 142.6L406 142.6L405.5 142.6L405 142.6L404.5 142.6L404 142.6L403.5 142.6L403 142.6L402.5 142.6L402 142.6L401.5 142.7L401 142.8L400.5 143.5L400 144.6L399.5 145.8L399 147L398.5 148.2L398 149.4L397.5 150.7L397 151.9L396.5 153.2L396 154.5L395.5 155.8L395 157.2L394.5 158.5L394 159.8L393.5 161.2L393 162.6L392.5 163.9L392 142.6L391.5 142.6L391 142.6L390.5 142.6L390 142.6L389.5 142.6L389 142.6L388.5 142.6L388 142.8L387.5 142.9L387 143L386.5 143.1L386 143.2L385.5 143.4L385 143.5L384.5 143.6L384 143.8L383.5 143.9L383 144L382.5 144.1L382 144.2L381.5 144.4L381 144.5L380.5 144.6L380 144.8L379.5 144.9L379 145L378.5 145.1L378 145.2L377.5 145.4L377 145.5L376.5 145.6L376 142.6L375.5 142.6L375 142.6L374.5 142.6L374 142.6L373.5 142.6L373 142.6L372.5 142.6L372 142.6L371.5 142.6L371 142.6L370.5 142.6L370 142.6L369.5 142.7L369 142.8L368.5 143.3L368 144.4L367.5 145.5L367 146.7L366.5 147.9L366 149.2L365.5 150.4L365 151.7L364.5 153L364 154.3L363.5 155.6L363 156.9L362.5 158.2L362 159.6L361.5 160.9L361 162.3L360.5 163.7L360 142.6L359.5 142.6L359 142.6L358.5 142.6L358 142.6L357.5 142.6L357 142.6L356.5 142.6L356 142.6L355.5 142.6L355 142.6L354.5 142.7L354 142.8L353.5 142.9L353 143L352.5 143.1L352 143.2L351.5 143.3L351 143.4L350.5 143.5L350 143.6L349.5 143.7L349 143.8L348.5 143.9L348 144L347.5 144.4L347 145.4L346.5 146.4L346 147.5L345.5 148.5L345 149.6L344.5 150.7L344 142.6L343.5 142.6L343 142.6L342.5 142.6L342 142.6L341.5 142.6L341 142.6L340.5 142.6L340 142.6L339.5 142.6L339 142.6L338.5 142.6L338 142.6L337.5 142.6L337 142.6L336.5 142.6L336 142.6L335.5 142.6L335 142.6L334.5 142.6L334 142.6L333.5 142.6L333 142.6L332.5 142.6L332 142.6L331.5 142.6L331 142.6L330.5 142.7L330 143L329.5 143.3L329 143.7L328.5 144L328 143.7L327.5 143.3L327 143L326.5 142.7L326 142.6L325.5 142.6L325 142.6L324.5 142.6L324 142.6L323.5 142.6L323 142.6L322.5 142.6L322 142.7L321.5 142.7L321 142.8L320.5 143.7L320 144.8L319.5 146L319 147.2L318.5 148.4L318 149.7L317.5 150.9L317 152.2L316.5 153.5L316 154.8L315.5 156.1L315 157.4L314.5 158.8L314 160.1L313.5 161.5L313 162.8L312.5 164.2Z" fill="#fdf0c0"/>
<rect x="573.0" y="96.5" width="522.0" height="72.8" rx="3.5" fill="#151515"/>
<rect x="573.5" y="97.0" width="521.0" height="71.8" rx="3" fill="#c9a514"/>
<path d="M576.5 97H1091.5Q1094.5 97 1094.5 100V111H573.5V100Q573.5 97 576.5 97Z" fill="#fdf0c0"/>
<rect x="574.5" y="167.8" width="519.0" height="1" fill="#f0e3a8"/>
<text x="578.0" y="107" font-size="8.8" font-weight="bold" fill="#7c6c34">主歌</text>
<clipPath id="dc573"><rect x="573.5" y="111" width="521.0" height="57"/></clipPath>
<path clip-path="url(#dc573)" d="M573.5 140.8L574 133.7L574.5 133.8L575 134L575.5 134.1L576 134.3L576.5 134.4L577 134.5L577.5 134.7L578 134.8L578.5 134.9L579 135.1L579.5 135.2L580 135.4L580.5 135.5L581 135.6L581.5 135.8L582 135.9L582.5 136L583 136.2L583.5 136.3L584 136.5L584.5 136.6L585 136.7L585.5 136.9L586 137L586.5 137.1L587 137.3L587.5 137.4L588 137.6L588.5 137.7L589 137.8L589.5 138L590 138.1L590.5 138.3L591 138.4L591.5 138.5L592 138.7L592.5 138.8L593 138.9L593.5 139.1L594 139.2L594.5 139.4L595 139.5L595.5 139.6L596 139.8L596.5 139.9L597 140L597.5 140.2L598 140.3L598.5 140.5L599 140.6L599.5 140.7L600 140.8L600.5 140.8L601 140.8L601.5 140.8L602 140.8L602.5 140.8L603 140.8L603.5 140.8L604 140.8L604.5 140.8L605 140.8L605.5 123.2L606 125.4L606.5 127.7L607 129.9L607.5 132L608 134.1L608.5 136.2L609 138.2L609.5 139.5L610 139.6L610.5 139.7L611 139.8L611.5 139.9L612 140L612.5 140.1L613 140.2L613.5 140.3L614 140.4L614.5 140.5L615 140.6L615.5 140.7L616 140.8L616.5 140.8L617 140.8L617.5 140.8L618 140.8L618.5 140.8L619 140.8L619.5 140.8L620 140.8L620.5 140.8L621 140.8L621.5 130.9L622 131.6L622.5 132.4L623 133.1L623.5 133.8L624 134.6L624.5 135.3L625 136L625.5 136.7L626 137.4L626.5 138.1L627 138.8L627.5 139.4L628 140.1L628.5 140.3L629 140.4L629.5 140.5L630 140.6L630.5 140.7L631 140.8L631.5 140.8L632 140.8L632.5 140.8L633 140.8L633.5 140.8L634 140.8L634.5 140.8L635 140.8L635.5 140.8L636 140.8L636.5 140.8L637 140.8L637.5 140.8L638 138.2L638.5 138.4L639 138.5L639.5 138.6L640 138.7L640.5 138.8L641 138.9L641.5 139L642 139.1L642.5 139.2L643 139.3L643.5 139.4L644 139.6L644.5 139.7L645 139.8L645.5 139.9L646 140L646.5 140.1L647 140.2L647.5 140.3L648 140.4L648.5 140.5L649 140.7L649.5 140.8L650 140.8L650.5 140.8L651 140.8L651.5 140.8L652 140.8L652.5 140.8L653 140.8L653.5 140.8L654 140.8L654.5 131.2L655 131.9L655.5 132.6L656 133.4L656.5 134.1L657 134.9L657.5 135.6L658 136.3L658.5 137L659 137.7L659.5 138.4L660 139L660.5 139.7L661 140.3L661.5 140.4L662 140.5L662.5 140.5L663 140.6L663.5 140.7L664 140.8L664.5 140.8L665 140.8L665.5 140.8L666 140.8L666.5 140.8L667 140.8L667.5 140.8L668 140.8L668.5 140.8L669 140.8L669.5 123.2L670 125.4L670.5 127.7L671 129.9L671.5 132L672 134.1L672.5 136.2L673 138.2L673.5 139.5L674 139.6L674.5 139.7L675 139.8L675.5 139.9L676 140L676.5 140.1L677 140.2L677.5 140.3L678 140.4L678.5 140.5L679 140.6L679.5 140.7L680 140.8L680.5 140.8L681 140.8L681.5 140.8L682 140.8L682.5 140.8L683 140.8L683.5 140.8L684 140.8L684.5 140.8L685 140.8L685.5 140.8L686 140.8L686.5 132.7L687 133.3L687.5 133.9L688 134.5L688.5 135.1L689 135.7L689.5 136.3L690 136.9L690.5 137.5L691 138.1L691.5 138.6L692 139.2L692.5 139.7L693 140.3L693.5 140.8L694 140.8L694.5 140.8L695 140.8L695.5 140.8L696 140.8L696.5 140.8L697 140.8L697.5 140.8L698 140.8L698.5 140.8L699 140.8L699.5 140.8L700 140.8L700.5 140.8L701 140.8L701.5 140.8L702 130.7L702.5 131.5L703 132.2L703.5 132.9L704 133.7L704.5 134.4L705 135.1L705.5 135.9L706 136.6L706.5 137.3L707 138L707.5 138.6L708 139.3L708.5 140L709 140.3L709.5 140.4L710 140.5L710.5 140.6L711 140.7L711.5 140.7L712 140.8L712.5 140.8L713 140.8L713.5 140.8L714 140.8L714.5 140.8L715 140.8L715.5 140.8L716 140.8L716.5 140.8L717 140.8L717.5 140.7L718 140.4L718.5 140.1L719 139.7L719.5 139.4L720 139.7L720.5 140.1L721 140.4L721.5 140.7L722 140.8L722.5 140.8L723 140.8L723.5 140.8L724 140.8L724.5 140.8L725 140.8L725.5 140.8L726 140.8L726.5 140.8L727 140.8L727.5 140.8L728 140.8L728.5 140.8L729 140.8L729.5 140.8L730 140.8L730.5 140.8L731 140.8L731.5 140.8L732 140.8L732.5 140.8L733 140.8L733.5 140.8L734 140.8L734.5 123.2L735 125.4L735.5 127.7L736 129.9L736.5 132L737 134.1L737.5 136.2L738 138.2L738.5 139.5L739 139.6L739.5 139.7L740 139.8L740.5 139.9L741 140L741.5 140.1L742 140.2L742.5 140.3L743 140.4L743.5 140.5L744 140.6L744.5 140.7L745 140.8L745.5 140.8L746 140.8L746.5 140.8L747 140.8L747.5 140.8L748 140.8L748.5 140.8L749 140.8L749.5 140.8L750 140.8L750.5 140.8L751 130.9L751.5 131.6L752 132.4L752.5 133.1L753 133.8L753.5 134.6L754 135.3L754.5 136L755 136.7L755.5 137.4L756 138.1L756.5 138.8L757 139.4L757.5 140.1L758 140.3L758.5 140.4L759 140.5L759.5 140.6L760 140.7L760.5 140.8L761 140.8L761.5 140.8L762 140.8L762.5 140.8L763 140.8L763.5 140.8L764 140.8L764.5 140.8L765 140.8L765.5 140.8L766 140.8L766.5 140.8L767 138.2L767.5 138.3L768 138.4L768.5 138.5L769 138.6L769.5 138.7L770 138.9L770.5 139L771 139.1L771.5 139.2L772 139.3L772.5 139.4L773 139.5L773.5 139.6L774 139.7L774.5 139.8L775 139.9L775.5 140.1L776 140.2L776.5 140.3L777 140.4L777.5 140.5L778 140.6L778.5 140.7L779 140.8L779.5 140.8L780 140.8L780.5 140.8L781 140.8L781.5 140.8L782 140.8L782.5 140.8L783 140.8L783.5 140.8L784 131.2L784.5 131.9L785 132.6L785.5 133.4L786 134.1L786.5 134.9L787 135.6L787.5 136.3L788 137L788.5 137.7L789 138.4L789.5 139L790 139.7L790.5 140.3L791 140.4L791.5 140.5L792 140.5L792.5 140.6L793 140.7L793.5 140.8L794 140.8L794.5 140.8L795 140.8L795.5 140.8L796 140.8L796.5 140.8L797 140.8L797.5 140.8L798 140.8L798.5 140.8L799 140.8L799.5 124.1L800 126.3L800.5 128.5L801 130.7L801.5 132.9L802 134.9L802.5 137L803 138.9L803.5 139.5L804 139.6L804.5 139.7L805 139.8L805.5 139.9L806 140L806.5 140.1L807 140.2L807.5 140.3L808 140.4L808.5 140.5L809 140.6L809.5 140.7L810 140.8L810.5 140.8L811 140.8L811.5 140.8L812 140.8L812.5 140.8L813 140.8L813.5 140.8L814 140.8L814.5 140.8L815 140.8L815.5 132.8L816 133.4L816.5 134.1L817 134.7L817.5 135.3L818 135.9L818.5 136.5L819 137L819.5 137.6L820 138.2L820.5 138.8L821 139.3L821.5 139.8L822 140.4L822.5 140.8L823 140.8L823.5 140.8L824 140.8L824.5 140.8L825 140.8L825.5 140.8L826 140.8L826.5 140.8L827 140.8L827.5 140.8L828 140.8L828.5 140.8L829 140.8L829.5 140.8L830 140.8L830.5 140.8L831 140.8L831.5 140.8L832 130.7L832.5 131.5L833 132.2L833.5 132.9L834 133.7L834.5 134.4L835 135.1L835.5 135.9L836 136.6L836.5 137.3L837 138L837.5 138.6L838 139.3L838.5 140L839 140.3L839.5 140.4L840 140.5L840.5 140.6L841 140.7L841.5 140.7L842 140.8L842.5 140.8L843 140.8L843.5 140.8L844 140.8L844.5 140.8L845 140.8L845.5 140.8L846 140.8L846.5 140.7L847 140.4L847.5 140.1L848 139.7L848.5 139.4L849 139.7L849.5 140.1L850 140.4L850.5 140.7L851 140.8L851.5 140.8L852 140.8L852.5 140.8L853 140.8L853.5 140.8L854 140.8L854.5 140.8L855 140.8L855.5 140.8L856 140.8L856.5 140.8L857 140.8L857.5 140.8L858 140.8L858.5 140.8L859 140.8L859.5 140.8L860 140.8L860.5 140.8L861 140.8L861.5 140.8L862 140.8L862.5 140.8L863 140.8L863.5 140.8L864 123.2L864.5 125.4L865 127.7L865.5 129.9L866 132L866.5 134.1L867 136.2L867.5 138.2L868 139.5L868.5 139.6L869 139.7L869.5 139.8L870 139.9L870.5 140L871 140.1L871.5 140.2L872 140.3L872.5 140.4L873 140.5L873.5 140.6L874 140.7L874.5 140.8L875 140.8L875.5 140.8L876 140.8L876.5 140.8L877 140.8L877.5 140.8L878 140.8L878.5 140.8L879 140.8L879.5 140.8L880 130.7L880.5 131.5L881 132.2L881.5 132.9L882 133.7L882.5 134.4L883 135.1L883.5 135.9L884 136.6L884.5 137.3L885 138L885.5 138.6L886 139.3L886.5 140L887 140.3L887.5 140.4L888 140.5L888.5 140.6L889 140.7L889.5 140.7L890 140.8L890.5 140.8L891 140.8L891.5 140.8L892 140.8L892.5 140.8L893 140.8L893.5 140.8L894 140.8L894.5 140.8L895 140.8L895.5 140.8L896 138.2L896.5 138.3L897 138.4L897.5 138.5L898 138.6L898.5 138.7L899 138.9L899.5 139L900 139.1L900.5 139.2L901 139.3L901.5 139.4L902 139.5L902.5 139.6L903 139.7L903.5 139.8L904 139.9L904.5 140.1L905 140.2L905.5 140.3L906 140.4L906.5 140.5L907 140.6L907.5 140.7L908 140.8L908.5 140.8L909 140.8L909.5 140.8L910 140.8L910.5 140.8L911 140.8L911.5 140.8L912 130.7L912.5 131.5L913 132.2L913.5 132.9L914 133.7L914.5 134.4L915 135.1L915.5 135.9L916 136.6L916.5 137.3L917 138L917.5 138.6L918 139.3L918.5 140L919 140.3L919.5 140.4L920 140.5L920.5 140.6L921 140.7L921.5 140.7L922 140.8L922.5 140.8L923 140.8L923.5 140.8L924 140.8L924.5 140.8L925 140.8L925.5 140.8L926 140.8L926.5 140.8L927 140.8L927.5 140.8L928 140.8L928.5 140.8L929 123.2L929.5 125.4L930 127.7L930.5 129.9L931 132L931.5 134.1L932 136.2L932.5 138.2L933 139.5L933.5 139.6L934 139.7L934.5 139.8L935 139.9L935.5 140L936 140.1L936.5 140.2L937 140.3L937.5 140.4L938 140.5L938.5 140.6L939 140.7L939.5 140.8L940 140.8L940.5 140.8L941 140.8L941.5 140.8L942 140.8L942.5 140.8L943 140.8L943.5 140.7L944 140.4L944.5 140.1L945 139.7L945.5 139.4L946 139.7L946.5 140.1L947 140.4L947.5 140.7L948 140.8L948.5 140.8L949 140.8L949.5 140.8L950 140.8L950.5 140.8L951 140.8L951.5 140.8L952 140.8L952.5 140.8L953 140.8L953.5 140.8L954 140.8L954.5 140.8L955 140.8L955.5 140.8L956 140.8L956.5 140.8L957 140.8L957.5 140.8L958 140.8L958.5 140.8L959 140.8L959.5 140.8L960 140.8L960.5 140.8L961 130.7L961.5 131.5L962 132.2L962.5 132.9L963 133.7L963.5 134.4L964 135.1L964.5 135.9L965 136.6L965.5 137.3L966 138L966.5 138.6L967 139.3L967.5 140L968 140.3L968.5 140.4L969 140.5L969.5 140.6L970 140.7L970.5 140.7L971 140.8L971.5 140.8L972 140.8L972.5 140.8L973 140.8L973.5 140.8L974 140.8L974.5 140.8L975 140.8L975.5 140.8L976 140.8L976.5 140.7L977 140.4L977.5 140.1L978 139.7L978.5 139.4L979 139.7L979.5 140.1L980 140.4L980.5 140.7L981 140.8L981.5 140.8L982 140.8L982.5 140.8L983 140.8L983.5 140.8L984 140.8L984.5 140.8L985 140.8L985.5 140.8L986 140.8L986.5 140.8L987 140.8L987.5 140.8L988 140.8L988.5 140.8L989 140.8L989.5 140.8L990 140.8L990.5 140.8L991 140.8L991.5 140.8L992 140.8L992.5 140.8L993 140.8L993.5 123.2L994 125.4L994.5 127.7L995 129.9L995.5 132L996 134.1L996.5 136.2L997 138.2L997.5 139.5L998 139.6L998.5 139.7L999 139.8L999.5 139.9L1000 140L1000.5 140.1L1001 140.2L1001.5 140.3L1002 140.4L1002.5 140.5L1003 140.6L1003.5 140.7L1004 140.8L1004.5 140.8L1005 140.8L1005.5 140.8L1006 140.8L1006.5 140.8L1007 140.8L1007.5 140.8L1008 140.8L1008.5 140.8L1009 140.8L1009.5 140.8L1010 131.3L1010.5 132.1L1011 132.8L1011.5 133.5L1012 134.3L1012.5 135L1013 135.7L1013.5 136.4L1014 137.1L1014.5 137.8L1015 138.5L1015.5 139.2L1016 139.8L1016.5 140.3L1017 140.4L1017.5 140.5L1018 140.6L1018.5 140.6L1019 140.7L1019.5 140.8L1020 140.8L1020.5 140.8L1021 140.8L1021.5 140.8L1022 140.8L1022.5 140.8L1023 140.8L1023.5 140.8L1024 140.8L1024.5 140.8L1025 130.7L1025.5 131.5L1026 132.2L1026.5 132.9L1027 133.7L1027.5 134.4L1028 135.1L1028.5 135.9L1029 136.6L1029.5 137.3L1030 138L1030.5 138.6L1031 139.3L1031.5 140L1032 140.3L1032.5 140.4L1033 140.5L1033.5 140.6L1034 140.7L1034.5 140.7L1035 140.8L1035.5 140.8L1036 140.8L1036.5 140.8L1037 140.8L1037.5 140.8L1038 140.8L1038.5 140.8L1039 140.8L1039.5 140.8L1040 140.8L1040.5 140.8L1041 140.8L1041.5 140.8L1042 121.7L1042.5 124.1L1043 126.4L1043.5 128.7L1044 130.8L1044.5 132.9L1045 134.8L1045.5 136.5L1046 138.1L1046.5 139.2L1047 139.5L1047.5 139.8L1048 140L1048.5 140.3L1049 140.6L1049.5 140.8L1050 140.8L1050.5 140.8L1051 140.8L1051.5 140.8L1052 140.8L1052.5 140.8L1053 140.8L1053.5 140.8L1054 140.8L1054.5 140.8L1055 140.8L1055.5 140.8L1056 140.8L1056.5 140.8L1057 140.8L1057.5 140.8L1058 130.7L1058.5 131.4L1059 132.1L1059.5 132.8L1060 133.4L1060.5 134.1L1061 134.8L1061.5 135.5L1062 136.2L1062.5 136.9L1063 137.6L1063.5 138.3L1064 138.9L1064.5 139.6L1065 140.3L1065.5 140.8L1066 140.8L1066.5 140.8L1067 140.8L1067.5 140.8L1068 140.8L1068.5 140.8L1069 140.8L1069.5 140.8L1070 140.8L1070.5 140.8L1071 140.8L1071.5 140.8L1072 140.8L1072.5 140.8L1073 121.7L1073.5 124.1L1074 126.4L1074.5 128.7L1075 130.8L1075.5 132.9L1076 134.8L1076.5 136.5L1077 138.1L1077.5 139.2L1078 139.5L1078.5 139.8L1079 140L1079.5 140.3L1080 140.6L1080.5 140.8L1081 140.8L1081.5 140.8L1082 140.8L1082.5 140.8L1083 140.8L1083.5 140.8L1084 140.8L1084.5 140.8L1085 140.8L1085.5 140.8L1086 140.8L1086.5 140.8L1087 140.8L1087.5 140.8L1088 140.8L1088.5 140.8L1089 140.8L1089.5 140.8L1090 140.8L1090.5 140.8L1091 140.8L1091.5 140.8L1092 140.8L1092.5 140.8L1093 140.8L1093.5 140.8L1094 140.8L1094.5 140.8L1094.5 142.6L1094 142.6L1093.5 142.6L1093 142.6L1092.5 142.6L1092 142.6L1091.5 142.6L1091 142.6L1090.5 142.6L1090 142.6L1089.5 142.6L1089 142.6L1088.5 142.6L1088 142.6L1087.5 142.6L1087 142.6L1086.5 142.6L1086 142.6L1085.5 142.6L1085 142.6L1084.5 142.6L1084 142.6L1083.5 142.6L1083 142.6L1082.5 142.6L1082 142.6L1081.5 142.6L1081 142.6L1080.5 142.6L1080 142.6L1079.5 142.8L1079 143L1078.5 143.3L1078 143.5L1077.5 143.7L1077 144.3L1076.5 145.1L1076 146L1075.5 147L1075 148.1L1074.5 149.2L1074 150.3L1073.5 151.5L1073 152.7L1072.5 142.6L1072 142.6L1071.5 142.6L1071 142.6L1070.5 142.6L1070 142.6L1069.5 142.6L1069 142.6L1068.5 142.6L1068 142.6L1067.5 142.6L1067 142.6L1066.5 142.6L1066 142.6L1065.5 143.1L1065 144.4L1064.5 145.8L1064 147.2L1063.5 148.6L1063 149.9L1062.5 151.3L1062 152.7L1061.5 154.1L1061 155.4L1060.5 156.8L1060 158.2L1059.5 159.6L1059 160.9L1058.5 162.3L1058 163.7L1057.5 142.6L1057 142.6L1056.5 142.6L1056 142.6L1055.5 142.6L1055 142.6L1054.5 142.6L1054 142.6L1053.5 142.6L1053 142.6L1052.5 142.6L1052 142.6L1051.5 142.6L1051 142.6L1050.5 142.6L1050 142.6L1049.5 142.6L1049 142.6L1048.5 142.8L1048 143L1047.5 143.3L1047 143.5L1046.5 143.7L1046 144.3L1045.5 145.1L1045 146L1044.5 147L1044 148.1L1043.5 149.2L1043 150.3L1042.5 151.5L1042 152.7L1041.5 142.6L1041 142.6L1040.5 142.6L1040 142.6L1039.5 142.6L1039 142.6L1038.5 142.6L1038 142.6L1037.5 142.6L1037 142.6L1036.5 142.6L1036 142.6L1035.5 142.6L1035 142.6L1034.5 142.7L1034 142.7L1033.5 142.8L1033 143.7L1032.5 144.8L1032 146L1031.5 147.2L1031 148.4L1030.5 149.7L1030 150.9L1029.5 152.2L1029 153.5L1028.5 154.8L1028 156.1L1027.5 157.4L1027 158.8L1026.5 160.1L1026 161.5L1025.5 162.8L1025 164.2L1024.5 142.6L1024 142.6L1023.5 142.6L1023 142.6L1022.5 142.6L1022 142.6L1021.5 142.6L1021 142.6L1020.5 142.6L1020 142.6L1019.5 142.6L1019 142.7L1018.5 142.8L1018 142.8L1017.5 143.9L1017 145.1L1016.5 146.2L1016 147.4L1015.5 148.7L1015 149.9L1014.5 151.2L1014 152.5L1013.5 153.7L1013 155.1L1012.5 156.4L1012 157.7L1011.5 159L1011 160.4L1010.5 161.7L1010 163.1L1009.5 142.6L1009 142.6L1008.5 142.6L1008 142.6L1007.5 142.6L1007 142.6L1006.5 142.6L1006 142.6L1005.5 142.6L1005 142.6L1004.5 142.6L1004 142.6L1003.5 142.7L1003 142.8L1002.5 142.9L1002 143L1001.5 143.1L1001 143.2L1000.5 143.3L1000 143.4L999.5 143.5L999 143.6L998.5 143.7L998 143.8L997.5 143.9L997 144L996.5 144.4L996 145.4L995.5 146.4L995 147.5L994.5 148.5L994 149.6L993.5 150.7L993 142.6L992.5 142.6L992 142.6L991.5 142.6L991 142.6L990.5 142.6L990 142.6L989.5 142.6L989 142.6L988.5 142.6L988 142.6L987.5 142.6L987 142.6L986.5 142.6L986 142.6L985.5 142.6L985 142.6L984.5 142.6L984 142.6L983.5 142.6L983 142.6L982.5 142.6L982 142.6L981.5 142.6L981 142.6L980.5 142.7L980 143L979.5 143.3L979 143.7L978.5 144L978 143.7L977.5 143.3L977 143L976.5 142.7L976 142.6L975.5 142.6L975 142.6L974.5 142.6L974 142.6L973.5 142.6L973 142.6L972.5 142.6L972 142.6L971.5 142.6L971 142.6L970.5 142.7L970 142.7L969.5 142.8L969 143.7L968.5 144.8L968 146L967.5 147.2L967 148.4L966.5 149.7L966 150.9L965.5 152.2L965 153.5L964.5 154.8L964 156.1L963.5 157.4L963 158.8L962.5 160.1L962 161.5L961.5 162.8L961 164.2L960.5 142.6L960 142.6L959.5 142.6L959 142.6L958.5 142.6L958 142.6L957.5 142.6L957 142.6L956.5 142.6L956 142.6L955.5 142.6L955 142.6L954.5 142.6L954 142.6L953.5 142.6L953 142.6L952.5 142.6L952 142.6L951.5 142.6L951 142.6L950.5 142.6L950 142.6L949.5 142.6L949 142.6L948.5 142.6L948 142.6L947.5 142.7L947 143L946.5 143.3L946 143.7L945.5 144L945 143.7L944.5 143.3L944 143L943.5 142.7L943 142.6L942.5 142.6L942 142.6L941.5 142.6L941 142.6L940.5 142.6L940 142.6L939.5 142.6L939 142.7L938.5 142.8L938 142.9L937.5 143L937 143.1L936.5 143.2L936 143.3L935.5 143.4L935 143.5L934.5 143.6L934 143.7L933.5 143.8L933 143.9L932.5 144L932 144.4L931.5 145.4L931 146.4L930.5 147.5L930 148.5L929.5 149.6L929 150.7L928.5 142.6L928 142.6L927.5 142.6L927 142.6L926.5 142.6L926 142.6L925.5 142.6L925 142.6L924.5 142.6L924 142.6L923.5 142.6L923 142.6L922.5 142.6L922 142.6L921.5 142.7L921 142.7L920.5 142.8L920 143.7L919.5 144.8L919 146L918.5 147.2L918 148.4L917.5 149.7L917 150.9L916.5 152.2L916 153.5L915.5 154.8L915 156.1L914.5 157.4L914 158.8L913.5 160.1L913 161.5L912.5 162.8L912 164.2L911.5 142.6L911 142.6L910.5 142.6L910 142.6L909.5 142.6L909 142.6L908.5 142.6L908 142.7L907.5 142.8L907 142.9L906.5 143.1L906 143.2L905.5 143.3L905 143.4L904.5 143.6L904 143.7L903.5 143.8L903 143.9L902.5 144.1L902 144.2L901.5 144.3L901 144.4L900.5 144.6L900 144.7L899.5 144.8L899 144.9L898.5 145.1L898 145.2L897.5 145.3L897 145.4L896.5 145.6L896 145.7L895.5 142.6L895 142.6L894.5 142.6L894 142.6L893.5 142.6L893 142.6L892.5 142.6L892 142.6L891.5 142.6L891 142.6L890.5 142.6L890 142.6L889.5 142.7L889 142.7L888.5 142.8L888 143.7L887.5 144.8L887 146L886.5 147.2L886 148.4L885.5 149.7L885 150.9L884.5 152.2L884 153.5L883.5 154.8L883 156.1L882.5 157.4L882 158.8L881.5 160.1L881 161.5L880.5 162.8L880 164.2L879.5 142.6L879 142.6L878.5 142.6L878 142.6L877.5 142.6L877 142.6L876.5 142.6L876 142.6L875.5 142.6L875 142.6L874.5 142.6L874 142.7L873.5 142.8L873 142.9L872.5 143L872 143.1L871.5 143.2L871 143.3L870.5 143.4L870 143.5L869.5 143.6L869 143.7L868.5 143.8L868 143.9L867.5 144L867 144.4L866.5 145.4L866 146.4L865.5 147.5L865 148.5L864.5 149.6L864 150.7L863.5 142.6L863 142.6L862.5 142.6L862 142.6L861.5 142.6L861 142.6L860.5 142.6L860 142.6L859.5 142.6L859 142.6L858.5 142.6L858 142.6L857.5 142.6L857 142.6L856.5 142.6L856 142.6L855.5 142.6L855 142.6L854.5 142.6L854 142.6L853.5 142.6L853 142.6L852.5 142.6L852 142.6L851.5 142.6L851 142.6L850.5 142.7L850 143L849.5 143.3L849 143.7L848.5 144L848 143.7L847.5 143.3L847 143L846.5 142.7L846 142.6L845.5 142.6L845 142.6L844.5 142.6L844 142.6L843.5 142.6L843 142.6L842.5 142.6L842 142.6L841.5 142.7L841 142.7L840.5 142.8L840 143.7L839.5 144.8L839 146L838.5 147.2L838 148.4L837.5 149.7L837 150.9L836.5 152.2L836 153.5L835.5 154.8L835 156.1L834.5 157.4L834 158.8L833.5 160.1L833 161.5L832.5 162.8L832 164.2L831.5 142.6L831 142.6L830.5 142.6L830 142.6L829.5 142.6L829 142.6L828.5 142.6L828 142.6L827.5 142.6L827 142.6L826.5 142.6L826 142.6L825.5 142.6L825 142.6L824.5 142.6L824 142.6L823.5 143.1L823 144L822.5 144.9L822 145.8L821.5 146.7L821 147.7L820.5 148.7L820 149.7L819.5 150.7L819 151.7L818.5 152.7L818 153.7L817.5 154.8L817 155.8L816.5 156.9L816 157.9L815.5 159L815 142.6L814.5 142.6L814 142.6L813.5 142.6L813 142.6L812.5 142.6L812 142.6L811.5 142.6L811 142.6L810.5 142.6L810 142.6L809.5 142.7L809 142.8L808.5 142.9L808 143L807.5 143.1L807 143.2L806.5 143.3L806 143.4L805.5 143.5L805 143.6L804.5 143.7L804 143.8L803.5 143.9L803 144L802.5 144.1L802 145L801.5 146L801 147L800.5 148.1L800 149.2L799.5 150.3L799 142.6L798.5 142.6L798 142.6L797.5 142.6L797 142.6L796.5 142.6L796 142.6L795.5 142.6L795 142.6L794.5 142.6L794 142.6L793.5 142.6L793 142.7L792.5 142.8L792 143.1L791.5 144.2L791 145.3L790.5 146.5L790 147.7L789.5 148.9L789 150.2L788.5 151.4L788 152.7L787.5 154L787 155.3L786.5 156.6L786 158L785.5 159.3L785 160.7L784.5 162L784 163.4L783.5 142.6L783 142.6L782.5 142.6L782 142.6L781.5 142.6L781 142.6L780.5 142.6L780 142.6L779.5 142.6L779 142.7L778.5 142.8L778 142.9L777.5 143.1L777 143.2L776.5 143.3L776 143.4L775.5 143.6L775 143.7L774.5 143.8L774 143.9L773.5 144.1L773 144.2L772.5 144.3L772 144.4L771.5 144.6L771 144.7L770.5 144.8L770 144.9L769.5 145.1L769 145.2L768.5 145.3L768 145.4L767.5 145.6L767 145.7L766.5 142.6L766 142.6L765.5 142.6L765 142.6L764.5 142.6L764 142.6L763.5 142.6L763 142.6L762.5 142.6L762 142.6L761.5 142.6L761 142.6L760.5 142.6L760 142.7L759.5 142.8L759 143.5L758.5 144.6L758 145.8L757.5 147L757 148.2L756.5 149.4L756 150.7L755.5 151.9L755 153.2L754.5 154.5L754 155.8L753.5 157.2L753 158.5L752.5 159.8L752 161.2L751.5 162.6L751 163.9L750.5 142.6L750 142.6L749.5 142.6L749 142.6L748.5 142.6L748 142.6L747.5 142.6L747 142.6L746.5 142.6L746 142.6L745.5 142.6L745 142.6L744.5 142.7L744 142.8L743.5 142.9L743 143L742.5 143.1L742 143.2L741.5 143.3L741 143.4L740.5 143.5L740 143.6L739.5 143.7L739 143.8L738.5 143.9L738 144L737.5 144.4L737 145.4L736.5 146.4L736 147.5L735.5 148.5L735 149.6L734.5 150.7L734 142.6L733.5 142.6L733 142.6L732.5 142.6L732 142.6L731.5 142.6L731 142.6L730.5 142.6L730 142.6L729.5 142.6L729 142.6L728.5 142.6L728 142.6L727.5 142.6L727 142.6L726.5 142.6L726 142.6L725.5 142.6L725 142.6L724.5 142.6L724 142.6L723.5 142.6L723 142.6L722.5 142.6L722 142.6L721.5 142.7L721 143L720.5 143.3L720 143.7L719.5 144L719 143.7L718.5 143.3L718 143L717.5 142.7L717 142.6L716.5 142.6L716 142.6L715.5 142.6L715 142.6L714.5 142.6L714 142.6L713.5 142.6L713 142.6L712.5 142.6L712 142.6L711.5 142.7L711 142.7L710.5 142.8L710 143.7L709.5 144.8L709 146L708.5 147.2L708 148.4L707.5 149.7L707 150.9L706.5 152.2L706 153.5L705.5 154.8L705 156.1L704.5 157.4L704 158.8L703.5 160.1L703 161.5L702.5 162.8L702 164.2L701.5 142.6L701 142.6L700.5 142.6L700 142.6L699.5 142.6L699 142.6L698.5 142.6L698 142.6L697.5 142.6L697 142.6L696.5 142.6L696 142.6L695.5 142.6L695 142.6L694.5 143.3L694 144.1L693.5 145L693 146L692.5 146.9L692 147.9L691.5 148.9L691 149.9L690.5 150.9L690 151.9L689.5 152.9L689 153.9L688.5 155L688 156L687.5 157.1L687 158.1L686.5 159.2L686 142.6L685.5 142.6L685 142.6L684.5 142.6L684 142.6L683.5 142.6L683 142.6L682.5 142.6L682 142.6L681.5 142.6L681 142.6L680.5 142.6L680 142.6L679.5 142.7L679 142.8L678.5 142.9L678 143L677.5 143.1L677 143.2L676.5 143.3L676 143.4L675.5 143.5L675 143.6L674.5 143.7L674 143.8L673.5 143.9L673 144L672.5 144.4L672 145.4L671.5 146.4L671 147.5L670.5 148.5L670 149.6L669.5 150.7L669 142.6L668.5 142.6L668 142.6L667.5 142.6L667 142.6L666.5 142.6L666 142.6L665.5 142.6L665 142.6L664.5 142.6L664 142.6L663.5 142.7L663 142.8L662.5 143.1L662 144.2L661.5 145.3L661 146.5L660.5 147.7L660 148.9L659.5 150.2L659 151.4L658.5 152.7L658 154L657.5 155.3L657 156.6L656.5 158L656 159.3L655.5 160.7L655 162L654.5 163.4L654 142.6L653.5 142.6L653 142.6L652.5 142.6L652 142.6L651.5 142.6L651 142.6L650.5 142.6L650 142.6L649.5 142.8L649 142.9L648.5 143L648 143.1L647.5 143.3L647 143.4L646.5 143.5L646 143.6L645.5 143.8L645 143.9L644.5 144L644 144.1L643.5 144.3L643 144.4L642.5 144.5L642 144.6L641.5 144.8L641 144.9L640.5 145L640 145.1L639.5 145.3L639 145.4L638.5 145.5L638 145.6L637.5 142.6L637 142.6L636.5 142.6L636 142.6L635.5 142.6L635 142.6L634.5 142.6L634 142.6L633.5 142.6L633 142.6L632.5 142.6L632 142.6L631.5 142.6L631 142.6L630.5 142.7L630 142.8L629.5 143.5L629 144.6L628.5 145.8L628 147L627.5 148.2L627 149.4L626.5 150.7L626 151.9L625.5 153.2L625 154.5L624.5 155.8L624 157.2L623.5 158.5L623 159.8L622.5 161.2L622 162.6L621.5 163.9L621 142.6L620.5 142.6L620 142.6L619.5 142.6L619 142.6L618.5 142.6L618 142.6L617.5 142.6L617 142.6L616.5 142.6L616 142.6L615.5 142.7L615 142.8L614.5 142.9L614 143L613.5 143.1L613 143.2L612.5 143.3L612 143.4L611.5 143.5L611 143.6L610.5 143.7L610 143.8L609.5 143.9L609 144L608.5 144.4L608 145.4L607.5 146.4L607 147.5L606.5 148.5L606 149.6L605.5 150.7L605 142.6L604.5 142.6L604 142.6L603.5 142.6L603 142.6L602.5 142.6L602 142.6L601.5 142.6L601 142.6L600.5 142.6L600 142.6L599.5 142.6L599 142.6L598.5 142.7L598 142.9L597.5 143L597 143.1L596.5 143.2L596 143.3L595.5 143.4L595 143.5L594.5 143.7L594 143.8L593.5 143.9L593 144L592.5 144.1L592 144.2L591.5 144.4L591 144.5L590.5 144.6L590 144.7L589.5 144.8L589 144.9L588.5 145L588 145.2L587.5 145.3L587 145.4L586.5 145.5L586 145.6L585.5 145.7L585 145.9L584.5 146L584 146.1L583.5 146.2L583 146.3L582.5 146.4L582 146.5L581.5 146.7L581 146.8L580.5 146.9L580 147L579.5 147.1L579 147.2L578.5 147.4L578 147.5L577.5 147.6L577 147.7L576.5 149.5L576 151.4L575.5 153.2L575 155L574.5 156.9L574 158.7L573.5 142.6Z" fill="#fdf0c0"/>
<rect x="1095.5" y="96.5" width="205.0" height="72.8" rx="3.5" fill="#151515"/>
<rect x="1096.0" y="97.0" width="204.0" height="71.8" rx="3" fill="#c9a514"/>
<path d="M1099 97H1297Q1300 97 1300 100V111H1096V100Q1096 97 1099 97Z" fill="#fdf0c0"/>
<rect x="1097" y="167.8" width="202" height="1" fill="#f0e3a8"/>
<text x="1100.5" y="107" font-size="8.8" font-weight="bold" fill="#7c6c34">副歌</text>
<clipPath id="dc1096"><rect x="1096" y="111" width="204" height="57"/></clipPath>
<path clip-path="url(#dc1096)" d="M1096 133.7L1096.5 133.8L1097 134L1097.5 134.1L1098 134.3L1098.5 134.4L1099 134.5L1099.5 134.7L1100 134.8L1100.5 134.9L1101 135.1L1101.5 135.2L1102 135.4L1102.5 135.5L1103 135.6L1103.5 135.8L1104 135.9L1104.5 136L1105 136.2L1105.5 136.3L1106 136.5L1106.5 136.6L1107 136.7L1107.5 136.9L1108 137L1108.5 137.1L1109 137.3L1109.5 137.4L1110 137.6L1110.5 137.7L1111 137.8L1111.5 138L1112 138.1L1112.5 138.3L1113 138.4L1113.5 138.5L1114 138.7L1114.5 138.8L1115 138.9L1115.5 139.1L1116 139.2L1116.5 139.4L1117 139.5L1117.5 139.6L1118 139.8L1118.5 139.9L1119 140L1119.5 140.2L1120 140.3L1120.5 140.5L1121 140.6L1121.5 140.7L1122 140.8L1122.5 140.8L1123 140.8L1123.5 140.8L1124 140.8L1124.5 140.8L1125 140.8L1125.5 140.8L1126 140.8L1126.5 140.8L1127 140.8L1127.5 140.8L1128 125L1128.5 127.2L1129 129.4L1129.5 131.6L1130 133.7L1130.5 135.8L1131 137.8L1131.5 139.5L1132 139.6L1132.5 139.7L1133 139.8L1133.5 139.9L1134 140L1134.5 140.1L1135 140.2L1135.5 140.3L1136 140.4L1136.5 140.5L1137 140.6L1137.5 140.7L1138 140.8L1138.5 140.8L1139 140.8L1139.5 140.8L1140 140.8L1140.5 140.8L1141 140.8L1141.5 140.8L1142 140.8L1142.5 140.8L1143 140.8L1143.5 140.8L1144 131.3L1144.5 132.1L1145 132.8L1145.5 133.5L1146 134.3L1146.5 135L1147 135.7L1147.5 136.4L1148 137.1L1148.5 137.8L1149 138.5L1149.5 139.2L1150 139.8L1150.5 140.3L1151 140.4L1151.5 140.5L1152 140.6L1152.5 140.6L1153 140.7L1153.5 140.8L1154 140.8L1154.5 140.8L1155 140.8L1155.5 140.8L1156 140.8L1156.5 140.8L1157 140.8L1157.5 140.8L1158 140.8L1158.5 140.8L1159 138.2L1159.5 138.3L1160 138.4L1160.5 138.5L1161 138.6L1161.5 138.7L1162 138.9L1162.5 139L1163 139.1L1163.5 139.2L1164 139.3L1164.5 139.4L1165 139.5L1165.5 139.6L1166 139.7L1166.5 139.8L1167 139.9L1167.5 140.1L1168 140.2L1168.5 140.3L1169 140.4L1169.5 140.5L1170 140.6L1170.5 140.7L1171 140.8L1171.5 140.8L1172 140.8L1172.5 140.8L1173 140.8L1173.5 140.8L1174 140.8L1174.5 140.8L1175 140.8L1175.5 140.8L1176 130.7L1176.5 131.5L1177 132.2L1177.5 132.9L1178 133.7L1178.5 134.4L1179 135.1L1179.5 135.9L1180 136.6L1180.5 137.3L1181 138L1181.5 138.6L1182 139.3L1182.5 140L1183 140.3L1183.5 140.4L1184 140.5L1184.5 140.6L1185 140.7L1185.5 140.7L1186 140.8L1186.5 140.8L1187 140.8L1187.5 140.8L1188 140.8L1188.5 140.8L1189 140.8L1189.5 140.8L1190 140.8L1190.5 140.8L1191 140.8L1191.5 140.8L1192 123.2L1192.5 125.4L1193 127.7L1193.5 129.9L1194 132L1194.5 134.1L1195 136.2L1195.5 138.2L1196 139.5L1196.5 139.6L1197 139.7L1197.5 139.8L1198 139.9L1198.5 140L1199 140.1L1199.5 140.2L1200 140.3L1200.5 140.4L1201 140.5L1201.5 140.6L1202 140.7L1202.5 140.8L1203 140.8L1203.5 140.8L1204 140.8L1204.5 140.8L1205 140.8L1205.5 140.8L1206 140.8L1206.5 140.8L1207 140.8L1207.5 140.8L1208 140.8L1208.5 140.8L1209 140.8L1209.5 140.8L1210 140.8L1210 142.6L1209.5 142.6L1209 142.6L1208.5 142.6L1208 142.6L1207.5 142.6L1207 142.6L1206.5 142.6L1206 142.6L1205.5 142.6L1205 142.6L1204.5 142.6L1204 142.6L1203.5 142.6L1203 142.6L1202.5 142.6L1202 142.7L1201.5 142.8L1201 142.9L1200.5 143L1200 143.1L1199.5 143.2L1199 143.3L1198.5 143.4L1198 143.5L1197.5 143.6L1197 143.7L1196.5 143.8L1196 143.9L1195.5 144L1195 144.4L1194.5 145.4L1194 146.4L1193.5 147.5L1193 148.5L1192.5 149.6L1192 150.7L1191.5 142.6L1191 142.6L1190.5 142.6L1190 142.6L1189.5 142.6L1189 142.6L1188.5 142.6L1188 142.6L1187.5 142.6L1187 142.6L1186.5 142.6L1186 142.6L1185.5 142.7L1185 142.7L1184.5 142.8L1184 143.7L1183.5 144.8L1183 146L1182.5 147.2L1182 148.4L1181.5 149.7L1181 150.9L1180.5 152.2L1180 153.5L1179.5 154.8L1179 156.1L1178.5 157.4L1178 158.8L1177.5 160.1L1177 161.5L1176.5 162.8L1176 164.2L1175.5 142.6L1175 142.6L1174.5 142.6L1174 142.6L1173.5 142.6L1173 142.6L1172.5 142.6L1172 142.6L1171.5 142.6L1171 142.7L1170.5 142.8L1170 142.9L1169.5 143.1L1169 143.2L1168.5 143.3L1168 143.4L1167.5 143.6L1167 143.7L1166.5 143.8L1166 143.9L1165.5 144.1L1165 144.2L1164.5 144.3L1164 144.4L1163.5 144.6L1163 144.7L1162.5 144.8L1162 144.9L1161.5 145.1L1161 145.2L1160.5 145.3L1160 145.4L1159.5 145.6L1159 145.7L1158.5 142.6L1158 142.6L1157.5 142.6L1157 142.6L1156.5 142.6L1156 142.6L1155.5 142.6L1155 142.6L1154.5 142.6L1154 142.6L1153.5 142.6L1153 142.7L1152.5 142.8L1152 142.8L1151.5 143.9L1151 145.1L1150.5 146.2L1150 147.4L1149.5 148.7L1149 149.9L1148.5 151.2L1148 152.5L1147.5 153.7L1147 155.1L1146.5 156.4L1146 157.7L1145.5 159L1145 160.4L1144.5 161.7L1144 163.1L1143.5 142.6L1143 142.6L1142.5 142.6L1142 142.6L1141.5 142.6L1141 142.6L1140.5 142.6L1140 142.6L1139.5 142.6L1139 142.6L1138.5 142.6L1138 142.6L1137.5 142.7L1137 142.8L1136.5 142.9L1136 143L1135.5 143.1L1135 143.2L1134.5 143.3L1134 143.4L1133.5 143.5L1133 143.6L1132.5 143.7L1132 143.8L1131.5 143.9L1131 144L1130.5 144.6L1130 145.6L1129.5 146.6L1129 147.7L1128.5 148.7L1128 149.8L1127.5 142.6L1127 142.6L1126.5 142.6L1126 142.6L1125.5 142.6L1125 142.6L1124.5 142.6L1124 142.6L1123.5 142.6L1123 142.6L1122.5 142.6L1122 142.6L1121.5 142.6L1121 142.6L1120.5 142.7L1120 142.9L1119.5 143L1119 143.1L1118.5 143.2L1118 143.3L1117.5 143.4L1117 143.5L1116.5 143.7L1116 143.8L1115.5 143.9L1115 144L1114.5 144.1L1114 144.2L1113.5 144.4L1113 144.5L1112.5 144.6L1112 144.7L1111.5 144.8L1111 144.9L1110.5 145L1110 145.2L1109.5 145.3L1109 145.4L1108.5 145.5L1108 145.6L1107.5 145.7L1107 145.9L1106.5 146L1106 146.1L1105.5 146.2L1105 146.3L1104.5 146.4L1104 146.5L1103.5 146.7L1103 146.8L1102.5 146.9L1102 147L1101.5 147.1L1101 147.2L1100.5 147.4L1100 147.5L1099.5 147.6L1099 147.7L1098.5 149.5L1098 151.4L1097.5 153.2L1097 155L1096.5 156.9L1096 158.7Z" fill="#fdf0c0"/>
<rect x="312.0" y="170.5" width="988.5" height="72.5" rx="3.5" fill="#151515"/>
<rect x="312.5" y="171.0" width="987.5" height="71.5" rx="3" fill="#3770aa"/>
<clipPath id="bc"><rect x="312.5" y="186" width="895" height="56"/></clipPath>
<path clip-path="url(#bc)" d="M313 187.5L313.5 187.5L314 190.5L314.5 190.9L315 190.3L315.5 191L316 191L316.5 190.3L317 189.9L317.5 190.3L318 190.9L318.5 190.5L319 190.9L319.5 191.1L320 190.6L320.5 190.5L321 190.8L321.5 191.1L322 190.7L322.5 191.2L323 192L323.5 192.3L324 192L324.5 192.3L325 193.4L325.5 195.6L326 195.5L326.5 198.7L327 198.7L327.5 198.7L328 198.7L328.5 198.7L329 198.7L329.5 198.7L330 198.7L330.5 198.7L331 198.7L331.5 198.7L332 198.7L332.5 198.7L333 198.7L333.5 198.7L334 198.7L334.5 198.7L335 198.7L335.5 198.7L336 189.5L336.5 190.3L337 189.8L337.5 190.2L338 189.7L338.5 190.2L339 190.2L339.5 189.8L340 190L340.5 190.2L341 190.2L341.5 190.2L342 190.2L342.5 189.8L343 190.3L343.5 190.5L344 190.3L344.5 190.9L345 190.9L345.5 190.7L346 191.8L346.5 193.2L347 194.4L347.5 195.5L348 198.7L348.5 198.7L349 198.7L349.5 198.7L350 198.7L350.5 198.7L351 198.7L351.5 198.7L352 198.7L352.5 198.7L353 198.7L353.5 198.7L354 198.7L354.5 198.7L355 198.7L355.5 198.7L356 198.7L356.5 198.7L357 198.7L357.5 198.7L358 198.7L358.5 198.7L359 198.7L359.5 198.7L360 198.7L360.5 198.7L361 187.5L361.5 187.5L362 190.3L362.5 188.5L363 190.1L363.5 188.9L364 190.2L364.5 188.6L365 189.7L365.5 190.6L366 190.1L366.5 190.1L367 189.3L367.5 190.3L368 190.7L368.5 189.7L369 189.8L369.5 189.2L370 191.6L370.5 190.7L371 191.5L371.5 192L372 193.8L372.5 193.5L373 195.4L373.5 198.7L374 198.7L374.5 198.7L375 198.7L375.5 198.7L376 198.7L376.5 198.7L377 198.7L377.5 198.7L378 198.7L378.5 198.7L379 188.5L379.5 191.7L380 190.9L380.5 192.3L381 191.8L381.5 192.3L382 193L382.5 192.2L383 192.4L383.5 192.6L384 193.5L384.5 192.9L385 194L385.5 193.5L386 194.2L386.5 194.5L387 196L387.5 195.5L388 196.8L388.5 198.7L389 198.7L389.5 198.7L390 198.7L390.5 198.7L391 198.7L391.5 198.7L392 198.7L392.5 198.7L393 198.7L393.5 198.7L394 198.7L394.5 198.7L395 188.5L395.5 192.1L396 192.8L396.5 192.9L397 192L397.5 191.6L398 191.8L398.5 192.5L399 192.4L399.5 192.6L400 191.3L400.5 192.5L401 193.1L401.5 193.6L402 192.7L402.5 193.7L403 195.3L403.5 197.1L404 196.6L404.5 198.7L405 198.7L405.5 198.7L406 198.7L406.5 198.7L407 198.7L407.5 198.7L408 198.7L408.5 198.7L409 198.7L409.5 198.7L410 198.7L410.5 198.7L411 198.7L411.5 188L412 188L412.5 191.1L413 191.3L413.5 190.8L414 191.2L414.5 190.4L415 191.5L415.5 190.6L416 190.7L416.5 191.2L417 191.8L417.5 191.5L418 191.4L418.5 192.5L419 192.2L419.5 193.4L420 194.4L420.5 195.6L421 196.8L421.5 198.7L422 198.7L422.5 198.7L423 198.7L423.5 198.7L424 198.7L424.5 198.7L425 198.7L425.5 198.7L426 198.7L426.5 198.7L427 198.7L427.5 198.7L428 188.5L428.5 188.5L429 192.4L429.5 192.3L430 192.7L430.5 193.3L431 193.1L431.5 193.4L432 194.5L432.5 194.4L433 195L433.5 194.8L434 195.1L434.5 195.7L435 195.9L435.5 196.4L436 197.6L436.5 197.5L437 198.5L437.5 198.7L438 198.7L438.5 198.7L439 198.7L439.5 198.7L440 198.7L440.5 198.7L441 198.7L441.5 198.7L442 198.7L442.5 198.7L443 198.7L443.5 188.5L444 188.5L444.5 191.8L445 191.5L445.5 191.5L446 191.3L446.5 191.3L447 191.6L447.5 191.8L448 191.5L448.5 191.2L449 191.1L449.5 191.1L450 191.7L450.5 191.7L451 191.4L451.5 191.4L452 192L452.5 191.8L453 192.6L453.5 192.2L454 192.8L454.5 193L455 193.2L455.5 193.2L456 194.7L456.5 195.5L457 196.3L457.5 197.2L458 198.7L458.5 198.7L459 198.7L459.5 198.7L460 198.7L460.5 198.7L461 198.7L461.5 198.7L462 198.7L462.5 198.7L463 198.7L463.5 198.7L464 198.7L464.5 198.7L465 198.7L465.5 198.7L466 198.7L466.5 198.7L467 198.7L467.5 198.7L468 198.7L468.5 198.7L469 188.5L469.5 188.5L470 194.8L470.5 193.8L471 193.6L471.5 193.5L472 192.8L472.5 192.7L473 192.9L473.5 192.5L474 192.6L474.5 192.7L475 192.7L475.5 192.7L476 192.6L476.5 192.8L477 192.8L477.5 193.2L478 193.1L478.5 193.3L479 193.7L479.5 194.3L480 195L480.5 197.1L481 198.7L481.5 198.7L482 198.7L482.5 198.7L483 198.7L483.5 198.7L484 198.7L484.5 198.7L485 198.7L485.5 198.7L486 198.7L486.5 198.7L487 198.7L487.5 198.7L488 198.7L488.5 198.7L489 198.7L489.5 198.7L490 198.7L490.5 198.7L491 198.2L491.5 198L492 198.5L492.5 198.7L493 198.7L493.5 189.5L494 189.5L494.5 190.8L495 191.7L495.5 192.7L496 191.1L496.5 190.4L497 191.5L497.5 191.5L498 192.2L498.5 192.6L499 191.8L499.5 192L500 193.2L500.5 192.8L501 193.7L501.5 196.9L502 196.9L502.5 198.7L503 198.7L503.5 198.7L504 198.7L504.5 198.7L505 198.7L505.5 198.7L506 198.7L506.5 198.7L507 198.7L507.5 198.7L508 198.7L508.5 198.7L509 198.7L509.5 198.7L510 189.5L510.5 189.5L511 192.3L511.5 192.2L512 193L512.5 192.1L513 193L513.5 192.5L514 191.9L514.5 192.2L515 192.3L515.5 192.6L516 192.2L516.5 193.7L517 193.1L517.5 194L518 194.9L518.5 196.1L519 196.8L519.5 198.7L520 198.7L520.5 198.7L521 198.7L521.5 198.3L522 198L522.5 198.3L523 198.7L523.5 198.7L524 198.7L524.5 198.7L525 198.7L525.5 198.7L526 189.5L526.5 192.2L527 192L527.5 192.2L528 192.6L528.5 192.3L529 192.9L529.5 192.8L530 193.4L530.5 194.1L531 194.6L531.5 194.4L532 194.8L532.5 194.7L533 194.4L533.5 194.6L534 195.1L534.5 195.6L535 196.8L535.5 197.4L536 198.1L536.5 198.7L537 198.7L537.5 198.7L538 198.7L538.5 198.7L539 198.7L539.5 198.7L540 198.7L540.5 198.7L541 198.7L541.5 198.7L542 189.5L542.5 189.5L543 191.5L543.5 191.6L544 191.4L544.5 191.7L545 191.7L545.5 191.7L546 191.8L546.5 191.6L547 191.3L547.5 191.1L548 191.8L548.5 191.6L549 191.2L549.5 191.8L550 192L550.5 192L551 192.6L551.5 192.8L552 193.4L552.5 193.6L553 194.7L553.5 195.7L554 196.5L554.5 198.7L555 198.7L555.5 198.7L556 198.7L556.5 198.7L557 198.7L557.5 198.7L558 198.7L558.5 198.7L559 198.7L559.5 198.7L560 198.7L560.5 198.7L561 198.7L561.5 198.7L562 198.7L562.5 198.7L563 198.7L563.5 198.7L564 198.7L564.5 198.7L565 198.7L565.5 198.7L566 198.7L566.5 198.7L567 198.7L567.5 198.7L568 198.7L568.5 198.7L569 198.7L569.5 198.7L570 198.7L570.5 198.7L571 198.7L571.5 198.7L572 198.7L572.5 198.7L573 198.7L573.5 198.7L574 198.7L574.5 191.5L575 191.5L575.5 193.6L576 193.6L576.5 192.5L577 192.6L577.5 192L578 191.9L578.5 191.5L579 191.9L579.5 191.2L580 192L580.5 191.7L581 191.4L581.5 191.5L582 192L582.5 191.7L583 192L583.5 192.3L584 192L584.5 193L585 192.6L585.5 193.2L586 194.2L586.5 194.9L587 198.7L587.5 198.7L588 198.7L588.5 198.7L589 198.7L589.5 198.7L590 198.7L590.5 198.7L591 198.7L591.5 198.7L592 198.7L592.5 198.7L593 198.7L593.5 198.7L594 198.7L594.5 198.7L595 198.7L595.5 198.7L596 198.7L596.5 198.7L597 198.7L597.5 198.7L598 192L598.5 192.7L599 192.2L599.5 192.6L600 193L600.5 193L601 192.4L601.5 192.3L602 192.2L602.5 192.8L603 193L603.5 192.2L604 192.8L604.5 192.7L605 192.8L605.5 192.6L606 192.5L606.5 192.7L607 193L607.5 193.8L608 193.2L608.5 194.7L609 195.4L609.5 196.3L610 197.3L610.5 198.7L611 198.7L611.5 198.7L612 198.7L612.5 198.7L613 198.7L613.5 198.7L614 198.7L614.5 198.7L615 198.7L615.5 198.7L616 198.7L616.5 198.7L617 198.7L617.5 198.7L618 198.7L618.5 198.7L619 198.7L619.5 198.7L620 198.7L620.5 198.7L621 198.7L621.5 198.7L622 198.7L622.5 198.7L623 190.5L623.5 190.7L624 192.3L624.5 190.6L625 192.6L625.5 191.4L626 190.4L626.5 190.8L627 191.4L627.5 192.5L628 190.9L628.5 192.5L629 192.4L629.5 191.1L630 192.2L630.5 191.4L631 191.8L631.5 190.4L632 191.5L632.5 191L633 190.5L633.5 190.7L634 190.7L634.5 190.7L635 190.4L635.5 191.4L636 190.8L636.5 191.7L637 191L637.5 191.9L638 192.4L638.5 192.2L639 192.8L639.5 192.7L640 191.2L640.5 192.9L641 191.7L641.5 193.1L642 192.8L642.5 192.7L643 191.9L643.5 192.9L644 193L644.5 192.7L645 191.5L645.5 193.1L646 192.6L646.5 194.4L647 195.6L647.5 198.7L648 198.7L648.5 198.7L649 198.7L649.5 198.7L650 198.7L650.5 198L651 198.1L651.5 198.7L652 198.7L652.5 198.7L653 198.7L653.5 198.7L654 198.7L654.5 198.7L655 198.7L655.5 190L656 191.1L656.5 191L657 190.9L657.5 191.8L658 191.9L658.5 191.6L659 192.1L659.5 192.9L660 193.3L660.5 193.8L661 193.1L661.5 194.3L662 193.8L662.5 194.4L663 194.3L663.5 195.4L664 196.5L664.5 198.7L665 198.7L665.5 198.7L666 198.7L666.5 198.7L667 198.7L667.5 198L668 198.1L668.5 198.7L669 198.7L669.5 198.7L670 198.7L670.5 198.7L671 198.7L671.5 198.7L672 189.5L672.5 189.5L673 190.1L673.5 190.5L674 191L674.5 191L675 190.9L675.5 191.9L676 191.6L676.5 192L677 192.7L677.5 192.4L678 192.8L678.5 193.3L679 193.6L679.5 194.2L680 195.5L680.5 196.2L681 198.7L681.5 198.7L682 198.7L682.5 198.7L683 198.7L683.5 198.7L684 198.7L684.5 198.7L685 198.7L685.5 198.7L686 198.7L686.5 198.7L687 198.7L687.5 198.7L688 190.5L688.5 190.5L689 190.7L689.5 192.1L690 191.5L690.5 192.6L691 191.9L691.5 193.4L692 193.6L692.5 193.5L693 192.9L693.5 193.9L694 193.8L694.5 194.7L695 195L695.5 195.3L696 194.7L696.5 195.9L697 197.8L697.5 198L698 198.7L698.5 198.7L699 198.7L699.5 198.7L700 198.7L700.5 198.7L701 198.7L701.5 198.7L702 198.7L702.5 198.7L703 198.7L703.5 198.7L704 188.5L704.5 191L705 190.7L705.5 191.3L706 190.6L706.5 191.1L707 191.4L707.5 190.5L708 190.8L708.5 191.3L709 190.9L709.5 191.4L710 190.9L710.5 191.2L711 191.1L711.5 191.4L712 191.6L712.5 191.5L713 191.7L713.5 191.6L714 192L714.5 193L715 193.1L715.5 193.4L716 193.1L716.5 194.4L717 195.9L717.5 195.9L718 197.1L718.5 198.7L719 198.7L719.5 198.7L720 198.7L720.5 198.7L721 198.7L721.5 198.7L722 198.7L722.5 198.7L723 198.7L723.5 198.7L724 198.7L724.5 198.7L725 198.7L725.5 198.7L726 198.7L726.5 198.7L727 198.7L727.5 198.7L728 198.7L728.5 198.7L729 198.7L729.5 188.5L730 188.5L730.5 191.1L731 191.9L731.5 191.9L732 191.4L732.5 191.5L733 191.4L733.5 191.3L734 191.3L734.5 190.9L735 191.5L735.5 191.6L736 191.8L736.5 192.6L737 192.6L737.5 193.5L738 193.7L738.5 194.9L739 196.1L739.5 197.1L740 197.4L740.5 198.7L741 198.7L741.5 198.7L742 198.7L742.5 198.7L743 198.7L743.5 198.7L744 198.7L744.5 198.7L745 198.7L745.5 198.7L746 198.7L746.5 198.7L747 198.7L747.5 198.7L748 198.7L748.5 198.7L749 198.7L749.5 198.7L750 198.7L750.5 198.7L751 198.7L751.5 198.7L752 198.7L752.5 198.7L753 198.7L753.5 189.5L754 190.9L754.5 191.1L755 192L755.5 191.1L756 192L756.5 191L757 191.3L757.5 191.4L758 190L758.5 190.4L759 190.8L759.5 191.1L760 190.4L760.5 191.2L761 191.1L761.5 189.4L762 190.7L762.5 190.5L763 189.3L763.5 190.2L764 189.7L764.5 190.8L765 190.1L765.5 188.8L766 189.7L766.5 190L767 188.7L767.5 188.7L768 189.4L768.5 188.5L769 189.8L769.5 189.7L770 189.9L770.5 188.9L771 189.2L771.5 190.2L772 190.8L772.5 192L773 193L773.5 192.7L774 194.4L774.5 194L775 195.3L775.5 194.9L776 196.8L776.5 196L777 198.7L777.5 198.7L778 198.7L778.5 198.7L779 198.7L779.5 198.7L780 198.7L780.5 198.7L781 198.7L781.5 198.7L782 198.7L782.5 198.7L783 198.7L783.5 198.7L784 198.7L784.5 191.5L785 191.5L785.5 192.1L786 192.2L786.5 192.3L787 193L787.5 193.5L788 192.7L788.5 193.6L789 194L789.5 193L790 194L790.5 194.4L791 194.4L791.5 194.5L792 195.1L792.5 194.6L793 195.3L793.5 195.2L794 195L794.5 195.5L795 196L795.5 196.5L796 196.1L796.5 197.2L797 197.8L797.5 197.9L798 198.3L798.5 198.7L799 198.7L799.5 198.7L800 198.7L800.5 198.7L801 198.7L801.5 190.5L802 193.3L802.5 193.8L803 193.3L803.5 193.8L804 194.3L804.5 193.7L805 193.6L805.5 194.8L806 195.2L806.5 194.5L807 195.2L807.5 195.7L808 195.8L808.5 196L809 195.2L809.5 196.6L810 196.9L810.5 196.6L811 198L811.5 198.7L812 198.7L812.5 198.7L813 198.7L813.5 198.7L814 198.7L814.5 198.7L815 198.7L815.5 198.7L816 198.7L816.5 198.7L817 198.7L817.5 198.7L818 195L818.5 195L819 195.9L819.5 195.5L820 195.3L820.5 195.1L821 195L821.5 195L822 195L822.5 195.1L823 195.3L823.5 195.5L824 195.9L824.5 196.5L825 198.7L825.5 198.7L826 198.7L826.5 198.7L827 198.7L827.5 198.7L828 198.7L828.5 198.7L829 198.7L829.5 198.7L830 198.7L830.5 198.7L831 198.7L831.5 198.7L832 198.7L832.5 198.7L833 198.7L833.5 198.7L834 198.7L834 200.3L833.5 200.3L833 200.3L832.5 200.3L832 200.3L831.5 200.3L831 200.3L830.5 200.3L830 200.3L829.5 200.3L829 200.3L828.5 200.3L828 200.3L827.5 200.3L827 200.3L826.5 200.3L826 200.3L825.5 200.3L825 200.3L824.5 202.5L824 203.1L823.5 203.5L823 203.7L822.5 203.9L822 204L821.5 204L821 204L820.5 203.9L820 203.7L819.5 203.5L819 203.1L818.5 204L818 204L817.5 200.3L817 200.3L816.5 200.3L816 200.3L815.5 200.3L815 200.3L814.5 200.3L814 200.3L813.5 200.3L813 200.3L812.5 200.3L812 200.3L811.5 200.3L811 201.4L810.5 200.9L810 201.9L809.5 203L809 203.8L808.5 203.8L808 203.3L807.5 204.4L807 204.3L806.5 204.4L806 204.3L805.5 204.5L805 204.5L804.5 205.2L804 206L803.5 206.1L803 205.7L802.5 206L802 205.6L801.5 208.5L801 200.3L800.5 200.3L800 200.3L799.5 200.3L799 200.3L798.5 200.3L798 200.9L797.5 200.3L797 201.8L796.5 202.2L796 202.9L795.5 203.1L795 202.4L794.5 202.5L794 202.8L793.5 203.5L793 204.3L792.5 204L792 204.4L791.5 204.6L791 204.1L790.5 205.5L790 205.4L789.5 204.5L789 206.1L788.5 205.8L788 205.5L787.5 205.8L787 206.8L786.5 206.2L786 206.1L785.5 207.1L785 207.5L784.5 207.5L784 200.3L783.5 200.3L783 200.3L782.5 200.3L782 200.3L781.5 200.3L781 200.3L780.5 200.3L780 200.3L779.5 200.3L779 200.3L778.5 200.3L778 200.3L777.5 200.3L777 200.3L776.5 202.4L776 202.3L775.5 203.5L775 204.3L774.5 205.2L774 204.7L773.5 205.3L773 206.1L772.5 206.3L772 208.7L771.5 207.7L771 209.8L770.5 209.3L770 209.2L769.5 210.7L769 210.1L768.5 210.7L768 209L767.5 209.3L767 208.9L766.5 210.3L766 208.8L765.5 210.3L765 209.2L764.5 210L764 208.2L763.5 208.7L763 209.6L762.5 208L762 208.4L761.5 207.7L761 208.7L760.5 209.2L760 209.3L759.5 208.9L759 209L758.5 209L758 209.1L757.5 207.3L757 207.9L756.5 207.5L756 208.3L755.5 207.6L755 207.7L754.5 206.8L754 207.2L753.5 209.5L753 200.3L752.5 200.3L752 200.3L751.5 200.3L751 200.3L750.5 200.3L750 200.3L749.5 200.3L749 200.3L748.5 200.3L748 200.3L747.5 200.3L747 200.3L746.5 200.3L746 200.3L745.5 200.3L745 200.3L744.5 200.3L744 200.3L743.5 200.3L743 200.3L742.5 200.3L742 200.3L741.5 200.3L741 200.3L740.5 200.3L740 201.8L739.5 201.6L739 203.5L738.5 204.1L738 205.7L737.5 205.5L737 206.4L736.5 207L736 207.2L735.5 207.5L735 207.4L734.5 207.6L734 207.1L733.5 206.9L733 207.3L732.5 207.2L732 207.1L731.5 207.4L731 207.5L730.5 206.9L730 210.5L729.5 210.5L729 200.3L728.5 200.3L728 200.3L727.5 200.3L727 200.3L726.5 200.3L726 200.3L725.5 200.3L725 200.3L724.5 200.3L724 200.3L723.5 200.3L723 200.3L722.5 200.3L722 200.3L721.5 200.3L721 200.3L720.5 200.3L720 200.3L719.5 200.3L719 200.3L718.5 200.3L718 201.6L717.5 203L717 203.2L716.5 204.1L716 205.3L715.5 205.9L715 206.5L714.5 206.7L714 206.8L713.5 207.4L713 207L712.5 207.6L712 208.2L711.5 208.5L711 208L710.5 208.4L710 208.2L709.5 207.7L709 207.7L708.5 208.4L708 208.3L707.5 208L707 208.2L706.5 208L706 208L705.5 208.3L705 208.1L704.5 208.3L704 210.5L703.5 200.3L703 200.3L702.5 200.3L702 200.3L701.5 200.3L701 200.3L700.5 200.3L700 200.3L699.5 200.3L699 200.3L698.5 200.3L698 200.3L697.5 201.5L697 201.7L696.5 203L696 204L695.5 204.2L695 203.4L694.5 204.2L694 205.3L693.5 205.3L693 205.3L692.5 205L692 205.4L691.5 205.9L691 206.8L690.5 206.8L690 207.5L689.5 206.9L689 207.2L688.5 208.5L688 208.5L687.5 200.3L687 200.3L686.5 200.3L686 200.3L685.5 200.3L685 200.3L684.5 200.3L684 200.3L683.5 200.3L683 200.3L682.5 200.3L682 200.3L681.5 200.3L681 200.3L680.5 202.5L680 203.4L679.5 205L679 205.4L678.5 205.8L678 205.9L677.5 206.1L677 207.1L676.5 206.9L676 207L675.5 207.4L675 207.9L674.5 208.5L674 208.3L673.5 208.8L673 209.1L672.5 209.5L672 209.5L671.5 200.3L671 200.3L670.5 200.3L670 200.3L669.5 200.3L669 200.3L668.5 200.3L668 200.9L667.5 201L667 200.3L666.5 200.3L666 200.3L665.5 200.3L665 200.3L664.5 200.3L664 202.1L663.5 202.9L663 204.3L662.5 204.6L662 204.4L661.5 204.9L661 205.9L660.5 206.2L660 206.4L659.5 206.4L659 207.3L658.5 207L658 207L657.5 207.2L657 208L656.5 208.5L656 208.4L655.5 209L655 200.3L654.5 200.3L654 200.3L653.5 200.3L653 200.3L652.5 200.3L652 200.3L651.5 200.3L651 200.9L650.5 201L650 200.3L649.5 200.3L649 200.3L648.5 200.3L648 200.3L647.5 200.3L647 202.8L646.5 205.5L646 205.1L645.5 207.4L645 206.7L644.5 206.9L644 207.4L643.5 206.3L643 206.2L642.5 207.5L642 206.3L641.5 206.1L641 208.1L640.5 207L640 206.4L639.5 207.6L639 206.8L638.5 208.4L638 207.2L637.5 206.6L637 208.6L636.5 206.6L636 207.3L635.5 208L635 207.8L634.5 208.4L634 208.2L633.5 207.9L633 207.3L632.5 208L632 207.6L631.5 207.9L631 207.1L630.5 208.1L630 208.1L629.5 206.9L629 208.1L628.5 207.8L628 208.5L627.5 206.5L627 208.2L626.5 206.5L626 207.9L625.5 207.7L625 207.5L624.5 207L624 208.1L623.5 207.7L623 208.5L622.5 200.3L622 200.3L621.5 200.3L621 200.3L620.5 200.3L620 200.3L619.5 200.3L619 200.3L618.5 200.3L618 200.3L617.5 200.3L617 200.3L616.5 200.3L616 200.3L615.5 200.3L615 200.3L614.5 200.3L614 200.3L613.5 200.3L613 200.3L612.5 200.3L612 200.3L611.5 200.3L611 200.3L610.5 200.3L610 202.1L609.5 202.7L609 203.6L608.5 204.5L608 205.8L607.5 205.3L607 205.4L606.5 205.7L606 206.5L605.5 206.3L605 205.9L604.5 206.8L604 206.1L603.5 206.7L603 206.3L602.5 206.7L602 206L601.5 206.3L601 206.5L600.5 206L600 207L599.5 206.3L599 207L598.5 206.6L598 207L597.5 200.3L597 200.3L596.5 200.3L596 200.3L595.5 200.3L595 200.3L594.5 200.3L594 200.3L593.5 200.3L593 200.3L592.5 200.3L592 200.3L591.5 200.3L591 200.3L590.5 200.3L590 200.3L589.5 200.3L589 200.3L588.5 200.3L588 200.3L587.5 200.3L587 200.3L586.5 203.6L586 204.6L585.5 205.3L585 206.2L584.5 206.1L584 207.1L583.5 206.8L583 207.1L582.5 207.4L582 207.6L581.5 207L581 207.1L580.5 207.4L580 207L579.5 207.8L579 207.8L578.5 206.9L578 207.2L577.5 206.9L577 206.3L576.5 206.3L576 206.2L575.5 204.9L575 207.5L574.5 207.5L574 200.3L573.5 200.3L573 200.3L572.5 200.3L572 200.3L571.5 200.3L571 200.3L570.5 200.3L570 200.3L569.5 200.3L569 200.3L568.5 200.3L568 200.3L567.5 200.3L567 200.3L566.5 200.3L566 200.3L565.5 200.3L565 200.3L564.5 200.3L564 200.3L563.5 200.3L563 200.3L562.5 200.3L562 200.3L561.5 200.3L561 200.3L560.5 200.3L560 200.3L559.5 200.3L559 200.3L558.5 200.3L558 200.3L557.5 200.3L557 200.3L556.5 200.3L556 200.3L555.5 200.3L555 200.3L554.5 200.3L554 202.4L553.5 203.1L553 204.4L552.5 205.1L552 205.4L551.5 206L551 206L550.5 206.9L550 206.8L549.5 207.5L549 207.2L548.5 207.5L548 207.8L547.5 207.9L547 207.1L546.5 207.8L546 207.7L545.5 207.1L545 207.1L544.5 207.7L544 207.5L543.5 207.3L543 207.6L542.5 209.5L542 209.5L541.5 200.3L541 200.3L540.5 200.3L540 200.3L539.5 200.3L539 200.3L538.5 200.3L538 200.3L537.5 200.3L537 200.3L536.5 200.3L536 201.3L535.5 202L535 203.3L534.5 203.6L534 203L533.5 204L533 204.1L532.5 204.3L532 205L531.5 204.2L531 204.6L530.5 205.1L530 205.7L529.5 205.1L529 206.2L528.5 206.3L528 206.2L527.5 206.7L527 206.6L526.5 207.6L526 209.5L525.5 200.3L525 200.3L524.5 200.3L524 200.3L523.5 200.3L523 200.3L522.5 200.7L522 201L521.5 200.7L521 200.3L520.5 200.3L520 200.3L519.5 200.3L519 201.6L518.5 203L518 204.1L517.5 204.3L517 205.9L516.5 206.4L516 206.5L515.5 206.2L515 206.3L514.5 207.1L514 207L513.5 205.7L513 206L512.5 206.3L512 206.4L511.5 207.1L511 205.7L510.5 209.5L510 209.5L509.5 200.3L509 200.3L508.5 200.3L508 200.3L507.5 200.3L507 200.3L506.5 200.3L506 200.3L505.5 200.3L505 200.3L504.5 200.3L504 200.3L503.5 200.3L503 200.3L502.5 200.3L502 202.8L501.5 204.3L501 203.3L500.5 206.5L500 205.8L499.5 206L499 207.1L498.5 206.2L498 206.5L497.5 207.9L497 208.1L496.5 206.6L496 208.5L495.5 206.8L495 207.9L494.5 206.6L494 209.5L493.5 209.5L493 200.3L492.5 200.3L492 200.5L491.5 201L491 200.8L490.5 200.3L490 200.3L489.5 200.3L489 200.3L488.5 200.3L488 200.3L487.5 200.3L487 200.3L486.5 200.3L486 200.3L485.5 200.3L485 200.3L484.5 200.3L484 200.3L483.5 200.3L483 200.3L482.5 200.3L482 200.3L481.5 200.3L481 200.3L480.5 202.3L480 203.7L479.5 204.8L479 204.9L478.5 205.6L478 205.8L477.5 206.1L477 206L476.5 206.3L476 206.4L475.5 206.3L475 206.5L474.5 206.6L474 206.5L473.5 206.3L473 206.1L472.5 205.9L472 205.7L471.5 205.8L471 205.3L470.5 205.3L470 204.4L469.5 210.5L469 210.5L468.5 200.3L468 200.3L467.5 200.3L467 200.3L466.5 200.3L466 200.3L465.5 200.3L465 200.3L464.5 200.3L464 200.3L463.5 200.3L463 200.3L462.5 200.3L462 200.3L461.5 200.3L461 200.3L460.5 200.3L460 200.3L459.5 200.3L459 200.3L458.5 200.3L458 200.3L457.5 201.7L457 202.2L456.5 203.5L456 204.7L455.5 205.5L455 205.3L454.5 205.9L454 205.9L453.5 206.4L453 206.9L452.5 207.2L452 207L451.5 207.4L451 207.5L450.5 207.7L450 207.5L449.5 207.2L449 207.5L448.5 207.7L448 207.7L447.5 207.2L447 207.7L446.5 207.2L446 207.2L445.5 207.1L445 207.7L444.5 207.5L444 210.5L443.5 210.5L443 200.3L442.5 200.3L442 200.3L441.5 200.3L441 200.3L440.5 200.3L440 200.3L439.5 200.3L439 200.3L438.5 200.3L438 200.3L437.5 200.3L437 200.8L436.5 201.5L436 202.1L435.5 202.7L435 203.2L434.5 202.9L434 203.5L433.5 204.1L433 204.2L432.5 204.9L432 204.8L431.5 205.4L431 205.1L430.5 206.1L430 206.4L429.5 206.5L429 206.7L428.5 210.5L428 210.5L427.5 200.3L427 200.3L426.5 200.3L426 200.3L425.5 200.3L425 200.3L424.5 200.3L424 200.3L423.5 200.3L423 200.3L422.5 200.3L422 200.3L421.5 200.3L421 201.8L420.5 202.8L420 204.8L419.5 205.6L419 206.6L418.5 206.4L418 206.9L417.5 206.9L417 207.4L416.5 208.3L416 208.1L415.5 207.4L415 207.4L414.5 207.9L414 208.4L413.5 208L413 207.9L412.5 207.7L412 211L411.5 211L411 200.3L410.5 200.3L410 200.3L409.5 200.3L409 200.3L408.5 200.3L408 200.3L407.5 200.3L407 200.3L406.5 200.3L406 200.3L405.5 200.3L405 200.3L404.5 200.3L404 202.4L403.5 202.6L403 203.2L402.5 204.3L402 206.5L401.5 205.8L401 206.6L400.5 207.4L400 207.2L399.5 206.3L399 207.4L398.5 206L398 207.8L397.5 207L397 206.5L396.5 207.2L396 207.5L395.5 207.7L395 210.5L394.5 200.3L394 200.3L393.5 200.3L393 200.3L392.5 200.3L392 200.3L391.5 200.3L391 200.3L390.5 200.3L390 200.3L389.5 200.3L389 200.3L388.5 200.3L388 201.6L387.5 203.3L387 203.9L386.5 204.6L386 204.5L385.5 205L385 205.6L384.5 206L384 206L383.5 206.6L383 206.5L382.5 207.1L382 206.8L381.5 207.8L381 207.6L380.5 207.7L380 208.5L379.5 208.7L379 210.5L378.5 200.3L378 200.3L377.5 200.3L377 200.3L376.5 200.3L376 200.3L375.5 200.3L375 200.3L374.5 200.3L374 200.3L373.5 200.3L373 203.3L372.5 204.7L372 206.5L371.5 206L371 207.9L370.5 207.4L370 208L369.5 208.1L369 208.4L368.5 210L368 208.7L367.5 210L367 209L366.5 210.3L366 210L365.5 210.6L365 208.5L364.5 209.7L364 210.6L363.5 210.6L363 208.8L362.5 210.3L362 208.7L361.5 211.5L361 211.5L360.5 200.3L360 200.3L359.5 200.3L359 200.3L358.5 200.3L358 200.3L357.5 200.3L357 200.3L356.5 200.3L356 200.3L355.5 200.3L355 200.3L354.5 200.3L354 200.3L353.5 200.3L353 200.3L352.5 200.3L352 200.3L351.5 200.3L351 200.3L350.5 200.3L350 200.3L349.5 200.3L349 200.3L348.5 200.3L348 200.3L347.5 203.5L347 204.8L346.5 206L346 207L345.5 208L345 208.1L344.5 208.7L344 208.6L343.5 208.6L343 209L342.5 209.1L342 208.9L341.5 209L341 209.1L340.5 209.1L340 209L339.5 208.8L339 208.7L338.5 208.8L338 209.2L337.5 208.9L337 208.9L336.5 209.1L336 209.5L335.5 200.3L335 200.3L334.5 200.3L334 200.3L333.5 200.3L333 200.3L332.5 200.3L332 200.3L331.5 200.3L331 200.3L330.5 200.3L330 200.3L329.5 200.3L329 200.3L328.5 200.3L328 200.3L327.5 200.3L327 200.3L326.5 200.3L326 202.9L325.5 203.6L325 205.5L324.5 206.1L324 206.6L323.5 206.4L323 206.9L322.5 207.7L322 208.3L321.5 207.7L321 208.4L320.5 208.6L320 208.9L319.5 208.5L319 208.2L318.5 208L318 207.9L317.5 208.6L317 209.1L316.5 208L316 208.9L315.5 208.3L315 208.9L314.5 208.5L314 208.6L313.5 211.5L313 211.5Z" fill="#d6e6fb"/>
<path clip-path="url(#bc)" d="M834 198.7L834.5 198.7L835 187.5L835.5 190.3L836 191.1L836.5 190.8L837 190.3L837.5 190.4L838 190.9L838.5 190.9L839 191L839.5 191L840 190.7L840.5 190.1L841 191L841.5 190.5L842 189.9L842.5 191.2L843 191.5L843.5 191.1L844 191.3L844.5 192.2L845 192.1L845.5 192.1L846 192.6L846.5 193.4L847 194.2L847.5 196L848 196.6L848.5 198.7L849 198.7L849.5 198.7L850 198.7L850.5 198.7L851 198.7L851.5 198.7L852 198.7L852.5 198.7L853 198.7L853.5 198.7L854 198.7L854.5 198.7L855 198.7L855.5 198.7L856 198.7L856.5 198.7L857 198.7L857.5 189.5L858 190.1L858.5 189.8L859 190.3L859.5 190L860 190.2L860.5 190.1L861 190.2L861.5 190.2L862 190.3L862.5 190.1L863 190.3L863.5 190.2L864 190L864.5 190.2L865 190.5L865.5 190.5L866 190.4L866.5 191L867 190.7L867.5 191.6L868 193L868.5 193.7L869 195.2L869.5 198.7L870 198.7L870.5 198.7L871 198.7L871.5 198.7L872 198.7L872.5 198.7L873 198.7L873.5 198.7L874 198.7L874.5 198.7L875 198.7L875.5 198.7L876 198.7L876.5 198.7L877 198.7L877.5 198.7L878 198.7L878.5 198.7L879 198.7L879.5 198.7L880 198.7L880.5 198.7L881 198.7L881.5 198.7L882 198.7L882.5 187.5L883 187.5L883.5 190.1L884 189.6L884.5 190.1L885 188.6L885.5 190L886 190L886.5 189.5L887 189L887.5 190L888 189.1L888.5 190.4L889 189.7L889.5 189.8L890 189.7L890.5 189L891 189.6L891.5 190.2L892 189.9L892.5 191.1L893 191.3L893.5 194.3L894 193.5L894.5 194.7L895 198.7L895.5 198.7L896 198.7L896.5 198.7L897 198.7L897.5 198.7L898 198.7L898.5 198.7L899 198.7L899.5 198.7L900 198.7L900.5 188.5L901 191.1L901.5 191.4L902 190.7L902.5 191.6L903 192.6L903.5 191.9L904 192.9L904.5 193L905 193.6L905.5 193.6L906 193.1L906.5 193.1L907 194.8L907.5 194.4L908 194.3L908.5 195.6L909 195.4L909.5 197.2L910 198.7L910.5 198.7L911 198.7L911.5 198.7L912 198.7L912.5 198.7L913 198.7L913.5 198.7L914 198.7L914.5 198.7L915 198.7L915.5 198.7L916 198.7L916.5 188.5L917 192.6L917.5 192L918 192.7L918.5 191.8L919 192.5L919.5 191.3L920 192.5L920.5 191.5L921 191.7L921.5 191.1L922 192L922.5 192.2L923 193L923.5 193.6L924 194.8L924.5 195.7L925 195.6L925.5 196.2L926 198.7L926.5 198.7L927 198.7L927.5 198.7L928 198.7L928.5 198.7L929 198.7L929.5 198.7L930 198.7L930.5 198.7L931 198.7L931.5 198.7L932 198.7L932.5 198.7L933 188L933.5 188L934 191.4L934.5 190.6L935 190.7L935.5 190.9L936 191.1L936.5 191.1L937 190.6L937.5 191.4L938 190.4L938.5 191.7L939 191L939.5 191.9L940 192.2L940.5 191.9L941 193.7L941.5 195.1L942 196.2L942.5 197L943 198.7L943.5 198.7L944 198.7L944.5 198.7L945 198.7L945.5 198.7L946 198.7L946.5 198.7L947 198.7L947.5 198.7L948 198.7L948.5 198.7L949 198.7L949.5 198.7L950 188.5L950.5 192.4L951 192.1L951.5 193.2L952 193.1L952.5 193.4L953 193.5L953.5 194L954 194.3L954.5 194.9L955 194.9L955.5 195L956 195.4L956.5 195.6L957 196.5L957.5 197L958 197.5L958.5 198.7L959 198.7L959.5 198.7L960 198.7L960.5 198.7L961 198.7L961.5 198.7L962 198.7L962.5 198.7L963 198.7L963.5 198.7L964 198.7L964.5 198.7L965 198.7L965.5 188.5L966 191.9L966.5 191.8L967 191.4L967.5 191.1L968 191.1L968.5 191.7L969 191.5L969.5 191.3L970 191.5L970.5 191.7L971 191.4L971.5 191.1L972 191.2L972.5 191.7L973 191.5L973.5 192.2L974 192.1L974.5 192L975 192.7L975.5 192.5L976 193L976.5 193.2L977 193.6L977.5 194.5L978 195.6L978.5 195.9L979 197.3L979.5 198.7L980 198.7L980.5 198.7L981 198.7L981.5 198.7L982 198.7L982.5 198.7L983 198.7L983.5 198.7L984 198.7L984.5 198.7L985 198.7L985.5 198.7L986 198.7L986.5 198.7L987 198.7L987.5 198.7L988 198.7L988.5 198.7L989 198.7L989.5 198.7L990 198.7L990.5 198.7L991 188.5L991.5 194.6L992 194.1L992.5 193.6L993 193.4L993.5 192.8L994 192.9L994.5 192.9L995 192.8L995.5 192.6L996 192.2L996.5 192.6L997 192.6L997.5 192.5L998 192.6L998.5 192.9L999 192.7L999.5 193.4L1000 193.6L1000.5 194L1001 194.2L1001.5 195L1002 196.1L1002.5 198.7L1003 198.7L1003.5 198.7L1004 198.7L1004.5 198.7L1005 198.7L1005.5 198.7L1006 198.7L1006.5 198.7L1007 198.7L1007.5 198.7L1008 198.7L1008.5 198.7L1009 198.7L1009.5 198.7L1010 198.7L1010.5 198.7L1011 198.7L1011.5 198.7L1012 198.7L1012.5 198.3L1013 198L1013.5 198.3L1014 198.7L1014.5 198.7L1015 198.7L1015.5 189.5L1016 191L1016.5 191.1L1017 191L1017.5 192L1018 190.6L1018.5 191.8L1019 190.5L1019.5 190.7L1020 192.1L1020.5 192.1L1021 193.2L1021.5 192.9L1022 194.3L1022.5 194.8L1023 195.4L1023.5 197.5L1024 198.7L1024.5 198.7L1025 198.7L1025.5 198.7L1026 198.7L1026.5 198.7L1027 198.7L1027.5 198.7L1028 198.7L1028.5 198.7L1029 198.7L1029.5 198.7L1030 198.7L1030.5 198.7L1031 198.7L1031.5 198.7L1032 189.5L1032.5 191.8L1033 192.7L1033.5 191.8L1034 192.4L1034.5 192.9L1035 191.8L1035.5 192.3L1036 192L1036.5 192.3L1037 193.5L1037.5 193.2L1038 193.9L1038.5 193.4L1039 193.8L1039.5 195.2L1040 195.7L1040.5 196.4L1041 198.7L1041.5 198.7L1042 198.7L1042.5 198.7L1043 198.5L1043.5 198L1044 198.2L1044.5 198.7L1045 198.7L1045.5 198.7L1046 198.7L1046.5 198.7L1047 198.7L1047.5 189.5L1048 191.8L1048.5 191.9L1049 192.2L1049.5 192.8L1050 193.3L1050.5 192.5L1051 193.2L1051.5 193L1052 194.1L1052.5 193.6L1053 194.6L1053.5 194.3L1054 194.6L1054.5 194.6L1055 194.9L1055.5 195.1L1056 196L1056.5 195.9L1057 197.3L1057.5 197.7L1058 198.7L1058.5 198.7L1059 198.7L1059.5 198.7L1060 198.7L1060.5 198.7L1061 198.7L1061.5 198.7L1062 198.7L1062.5 198.7L1063 198.7L1063.5 198.7L1064 189.5L1064.5 191.5L1065 191.2L1065.5 191.2L1066 191.2L1066.5 191.6L1067 191.4L1067.5 191.7L1068 191.1L1068.5 191.8L1069 191.2L1069.5 191.1L1070 191.6L1070.5 191.7L1071 191.4L1071.5 192L1072 192.6L1072.5 193L1073 192.9L1073.5 192.8L1074 193.3L1074.5 194.3L1075 195.1L1075.5 196.3L1076 197.5L1076.5 198.7L1077 198.7L1077.5 198.7L1078 198.7L1078.5 198.7L1079 198.7L1079.5 198.7L1080 198.7L1080.5 198.7L1081 198.7L1081.5 198.7L1082 198.7L1082.5 198.7L1083 198.7L1083.5 198.7L1084 198.7L1084.5 198.7L1085 198.7L1085.5 198.7L1086 198.7L1086.5 198.7L1087 198.7L1087.5 198.7L1088 198.7L1088.5 198.7L1089 198.7L1089.5 198.7L1090 198.7L1090.5 198.7L1091 198.7L1091.5 198.7L1092 198.7L1092.5 198.7L1093 198.7L1093.5 198.7L1094 198.7L1094.5 198.7L1095 198.7L1095.5 198.7L1096 191.5L1096.5 191.5L1097 194.3L1097.5 193.5L1098 192.7L1098.5 192.6L1099 192.5L1099.5 191.6L1100 191.7L1100.5 191.7L1101 191.8L1101.5 191.9L1102 191.3L1102.5 191.1L1103 191.9L1103.5 191.5L1104 191.6L1104.5 191.3L1105 191.6L1105.5 192.4L1106 192.8L1106.5 193.1L1107 193.7L1107.5 193.5L1108 194.8L1108.5 198.7L1109 198.7L1109.5 198.7L1110 198.7L1110.5 198.7L1111 198.7L1111.5 198.7L1112 198.7L1112.5 198.7L1113 198.7L1113.5 198.7L1114 198.7L1114.5 198.7L1115 198.7L1115.5 198.7L1116 198.7L1116.5 198.7L1117 198.7L1117.5 198.7L1118 198.7L1118.5 198.7L1119 198.7L1119.5 192L1120 192L1120.5 192.9L1121 192L1121.5 192.2L1122 192.7L1122.5 192.6L1123 192.1L1123.5 193L1124 192.7L1124.5 192L1125 192.7L1125.5 192.9L1126 192.8L1126.5 192.9L1127 193.3L1127.5 193.4L1128 192.9L1128.5 193.4L1129 193.6L1129.5 193.2L1130 194.6L1130.5 194.9L1131 196.3L1131.5 196.8L1132 198.7L1132.5 198.7L1133 198.7L1133.5 198.7L1134 198.7L1134.5 198.7L1135 198.7L1135.5 198.7L1136 198.7L1136.5 198.7L1137 198.7L1137.5 198.7L1138 198.7L1138.5 198.7L1139 198.7L1139.5 198.7L1140 198.7L1140.5 198.7L1141 198.7L1141.5 198.7L1142 198.7L1142.5 198.7L1143 198.7L1143.5 198.7L1144 198.7L1144.5 190.5L1145 190.5L1145.5 191.1L1146 190.5L1146.5 191L1147 191L1147.5 190.6L1148 191.6L1148.5 190.9L1149 192L1149.5 191L1150 190.6L1150.5 191.8L1151 191L1151.5 192.4L1152 192.4L1152.5 190.3L1153 191.6L1153.5 192L1154 192.4L1154.5 192.1L1155 192.4L1155.5 191L1156 190.7L1156.5 192.2L1157 190.3L1157.5 191L1158 190.8L1158.5 192.5L1159 190.5L1159.5 192.6L1160 191.1L1160.5 191.8L1161 192.5L1161.5 192L1162 192.7L1162.5 192.8L1163 192L1163.5 191.4L1164 191.6L1164.5 192.9L1165 192.3L1165.5 191.3L1166 191.1L1166.5 191.1L1167 191.4L1167.5 192.7L1168 194L1168.5 194.5L1169 196.2L1169.5 198.7L1170 198.7L1170.5 198.7L1171 198.7L1171.5 198.7L1172 198.1L1172.5 198L1173 198.7L1173.5 198.7L1174 198.7L1174.5 198.7L1175 198.7L1175.5 198.7L1176 198.7L1176.5 198.7L1177 190L1177.5 191L1178 191.1L1178.5 191.5L1179 190.9L1179.5 192L1180 192.1L1180.5 192.6L1181 192.7L1181.5 192.8L1182 192.6L1182.5 194L1183 194.2L1183.5 193.7L1184 194.1L1184.5 194.7L1185 195.7L1185.5 196.4L1186 197.3L1186.5 198.7L1187 198.7L1187.5 198.7L1188 198.7L1188.5 198.7L1189 198.1L1189.5 198L1190 198.7L1190.5 198.7L1191 198.7L1191.5 198.7L1192 198.7L1192.5 198.7L1193 198.7L1193.5 198.7L1194 189.5L1194.5 189.9L1195 190.3L1195.5 190.7L1196 191.2L1196.5 191.5L1197 191.3L1197.5 191.7L1198 192.2L1198.5 191.9L1199 192.6L1199.5 192.6L1200 192.9L1200.5 193.4L1201 193.8L1201.5 194.9L1202 196.5L1202.5 198.7L1203 198.7L1203.5 198.7L1204 198.7L1204.5 198.7L1205 198.7L1205.5 198.7L1206 198.7L1206.5 198.7L1207 198.7L1207.5 198.7L1208 198.7L1208 200.3L1207.5 200.3L1207 200.3L1206.5 200.3L1206 200.3L1205.5 200.3L1205 200.3L1204.5 200.3L1204 200.3L1203.5 200.3L1203 200.3L1202.5 200.3L1202 202.7L1201.5 203.8L1201 205L1200.5 205.3L1200 206L1199.5 206.4L1199 206.4L1198.5 206.5L1198 206.8L1197.5 207.4L1197 207.4L1196.5 208L1196 208.5L1195.5 208.2L1195 208.9L1194.5 208.6L1194 209.5L1193.5 200.3L1193 200.3L1192.5 200.3L1192 200.3L1191.5 200.3L1191 200.3L1190.5 200.3L1190 200.3L1189.5 201L1189 200.9L1188.5 200.3L1188 200.3L1187.5 200.3L1187 200.3L1186.5 200.3L1186 201.7L1185.5 201.8L1185 203.5L1184.5 204.5L1184 204.8L1183.5 204.7L1183 205.8L1182.5 206.1L1182 206.4L1181.5 206.4L1181 207L1180.5 207L1180 207L1179.5 207.5L1179 207.6L1178.5 208L1178 208.4L1177.5 208.1L1177 209L1176.5 200.3L1176 200.3L1175.5 200.3L1175 200.3L1174.5 200.3L1174 200.3L1173.5 200.3L1173 200.3L1172.5 201L1172 200.9L1171.5 200.3L1171 200.3L1170.5 200.3L1170 200.3L1169.5 200.3L1169 202.4L1168.5 203.8L1168 204.6L1167.5 205.8L1167 207.8L1166.5 205.7L1166 207.2L1165.5 205.7L1165 205.8L1164.5 206.7L1164 208L1163.5 207.6L1163 206L1162.5 206L1162 207L1161.5 206.4L1161 207.2L1160.5 206.4L1160 207L1159.5 206.4L1159 207.7L1158.5 206.8L1158 207.6L1157.5 206.6L1157 207.9L1156.5 206.6L1156 208.1L1155.5 208.7L1155 208.5L1154.5 206.4L1154 207.3L1153.5 207.1L1153 207.2L1152.5 206.3L1152 207.8L1151.5 206.5L1151 206.7L1150.5 207.1L1150 207.1L1149.5 206.4L1149 207L1148.5 208.3L1148 208L1147.5 206.7L1147 206.5L1146.5 207.9L1146 207.2L1145.5 208.4L1145 208.5L1144.5 208.5L1144 200.3L1143.5 200.3L1143 200.3L1142.5 200.3L1142 200.3L1141.5 200.3L1141 200.3L1140.5 200.3L1140 200.3L1139.5 200.3L1139 200.3L1138.5 200.3L1138 200.3L1137.5 200.3L1137 200.3L1136.5 200.3L1136 200.3L1135.5 200.3L1135 200.3L1134.5 200.3L1134 200.3L1133.5 200.3L1133 200.3L1132.5 200.3L1132 200.3L1131.5 201.6L1131 203.4L1130.5 204.4L1130 204.6L1129.5 205.9L1129 206L1128.5 206.3L1128 206.3L1127.5 206.1L1127 206.4L1126.5 206.6L1126 207L1125.5 206L1125 207.1L1124.5 205.9L1124 206.9L1123.5 206.1L1123 206.5L1122.5 207L1122 206.1L1121.5 206.1L1121 205.9L1120.5 206L1120 207L1119.5 207L1119 200.3L1118.5 200.3L1118 200.3L1117.5 200.3L1117 200.3L1116.5 200.3L1116 200.3L1115.5 200.3L1115 200.3L1114.5 200.3L1114 200.3L1113.5 200.3L1113 200.3L1112.5 200.3L1112 200.3L1111.5 200.3L1111 200.3L1110.5 200.3L1110 200.3L1109.5 200.3L1109 200.3L1108.5 200.3L1108 204L1107.5 205.4L1107 205.4L1106.5 205.7L1106 206.9L1105.5 206.8L1105 206.6L1104.5 207.2L1104 207L1103.5 207.6L1103 207.9L1102.5 207.2L1102 207.5L1101.5 207.2L1101 207.5L1100.5 207L1100 206.8L1099.5 207.1L1099 207.2L1098.5 206.4L1098 206.2L1097.5 206.2L1097 205.2L1096.5 207.5L1096 207.5L1095.5 200.3L1095 200.3L1094.5 200.3L1094 200.3L1093.5 200.3L1093 200.3L1092.5 200.3L1092 200.3L1091.5 200.3L1091 200.3L1090.5 200.3L1090 200.3L1089.5 200.3L1089 200.3L1088.5 200.3L1088 200.3L1087.5 200.3L1087 200.3L1086.5 200.3L1086 200.3L1085.5 200.3L1085 200.3L1084.5 200.3L1084 200.3L1083.5 200.3L1083 200.3L1082.5 200.3L1082 200.3L1081.5 200.3L1081 200.3L1080.5 200.3L1080 200.3L1079.5 200.3L1079 200.3L1078.5 200.3L1078 200.3L1077.5 200.3L1077 200.3L1076.5 200.3L1076 201.7L1075.5 202.7L1075 203.8L1074.5 204.7L1074 205.5L1073.5 205.9L1073 206.4L1072.5 206.1L1072 206.4L1071.5 206.9L1071 207.5L1070.5 207.1L1070 207.8L1069.5 207.7L1069 207.6L1068.5 207.4L1068 207.2L1067.5 207.2L1067 207.7L1066.5 207.8L1066 207.1L1065.5 207.4L1065 207.3L1064.5 207.9L1064 209.5L1063.5 200.3L1063 200.3L1062.5 200.3L1062 200.3L1061.5 200.3L1061 200.3L1060.5 200.3L1060 200.3L1059.5 200.3L1059 200.3L1058.5 200.3L1058 200.3L1057.5 201.2L1057 202.2L1056.5 202.8L1056 202.8L1055.5 203.5L1055 203.6L1054.5 204.5L1054 204.5L1053.5 204.3L1053 204.7L1052.5 205.6L1052 205.6L1051.5 205.5L1051 205.3L1050.5 205.5L1050 205.6L1049.5 205.9L1049 206.5L1048.5 207.3L1048 207.5L1047.5 209.5L1047 200.3L1046.5 200.3L1046 200.3L1045.5 200.3L1045 200.3L1044.5 200.3L1044 200.8L1043.5 201L1043 200.5L1042.5 200.3L1042 200.3L1041.5 200.3L1041 200.3L1040.5 201.2L1040 202.6L1039.5 203.7L1039 205.3L1038.5 205.6L1038 206.5L1037.5 205.9L1037 206.3L1036.5 206.4L1036 207L1035.5 206L1035 205.9L1034.5 206.6L1034 207L1033.5 206.9L1033 206L1032.5 206.5L1032 209.5L1031.5 200.3L1031 200.3L1030.5 200.3L1030 200.3L1029.5 200.3L1029 200.3L1028.5 200.3L1028 200.3L1027.5 200.3L1027 200.3L1026.5 200.3L1026 200.3L1025.5 200.3L1025 200.3L1024.5 200.3L1024 200.3L1023.5 201.7L1023 204.4L1022.5 204.4L1022 206.4L1021.5 205.8L1021 205.9L1020.5 206L1020 206.8L1019.5 207.3L1019 206.7L1018.5 208.6L1018 208.2L1017.5 206.4L1017 207.2L1016.5 207.8L1016 207.5L1015.5 209.5L1015 200.3L1014.5 200.3L1014 200.3L1013.5 200.7L1013 201L1012.5 200.7L1012 200.3L1011.5 200.3L1011 200.3L1010.5 200.3L1010 200.3L1009.5 200.3L1009 200.3L1008.5 200.3L1008 200.3L1007.5 200.3L1007 200.3L1006.5 200.3L1006 200.3L1005.5 200.3L1005 200.3L1004.5 200.3L1004 200.3L1003.5 200.3L1003 200.3L1002.5 200.3L1002 202.6L1001.5 204L1001 204.8L1000.5 205L1000 205.8L999.5 205.8L999 206.1L998.5 206.4L998 206.1L997.5 206.2L997 206.5L996.5 206.6L996 206.4L995.5 206.4L995 206.3L994.5 206.2L994 206.1L993.5 205.8L993 205.6L992.5 205.3L992 205L991.5 204.1L991 210.5L990.5 200.3L990 200.3L989.5 200.3L989 200.3L988.5 200.3L988 200.3L987.5 200.3L987 200.3L986.5 200.3L986 200.3L985.5 200.3L985 200.3L984.5 200.3L984 200.3L983.5 200.3L983 200.3L982.5 200.3L982 200.3L981.5 200.3L981 200.3L980.5 200.3L980 200.3L979.5 200.3L979 201.8L978.5 202.9L978 203.7L977.5 204.7L977 205.3L976.5 205.8L976 205.7L975.5 206.6L975 206.4L974.5 206.9L974 207.1L973.5 206.9L973 207.5L972.5 207.8L972 207.4L971.5 207.7L971 207.9L970.5 207.2L970 207.4L969.5 207.4L969 207.3L968.5 207.8L968 207.1L967.5 207.7L967 207.9L966.5 207.6L966 207.3L965.5 210.5L965 200.3L964.5 200.3L964 200.3L963.5 200.3L963 200.3L962.5 200.3L962 200.3L961.5 200.3L961 200.3L960.5 200.3L960 200.3L959.5 200.3L959 200.3L958.5 200.3L958 200.8L957.5 202.1L957 202.5L956.5 203.1L956 203.4L955.5 203.6L955 203.7L954.5 204.2L954 204.5L953.5 204.9L953 205.2L952.5 205.7L952 205.8L951.5 206.4L951 206.7L950.5 206.7L950 210.5L949.5 200.3L949 200.3L948.5 200.3L948 200.3L947.5 200.3L947 200.3L946.5 200.3L946 200.3L945.5 200.3L945 200.3L944.5 200.3L944 200.3L943.5 200.3L943 200.3L942.5 202.7L942 203L941.5 204.3L941 206.1L940.5 207.1L940 206.6L939.5 207.6L939 207.9L938.5 208.3L938 208L937.5 207.7L937 207.6L936.5 207.9L936 207.9L935.5 207.7L935 207.9L934.5 208.1L934 208.2L933.5 211L933 211L932.5 200.3L932 200.3L931.5 200.3L931 200.3L930.5 200.3L930 200.3L929.5 200.3L929 200.3L928.5 200.3L928 200.3L927.5 200.3L927 200.3L926.5 200.3L926 200.3L925.5 202.1L925 202.4L924.5 202.8L924 204.9L923.5 205L923 205.8L922.5 206L922 206.3L921.5 207L921 207.3L920.5 206.8L920 207.1L919.5 207.7L919 206.9L918.5 207.7L918 206.9L917.5 207.4L917 207.8L916.5 210.5L916 200.3L915.5 200.3L915 200.3L914.5 200.3L914 200.3L913.5 200.3L913 200.3L912.5 200.3L912 200.3L911.5 200.3L911 200.3L910.5 200.3L910 200.3L909.5 201.6L909 202.1L908.5 203.6L908 204.2L907.5 204.2L907 204.9L906.5 205L906 205.7L905.5 206.1L905 205.3L904.5 206.6L904 206.4L903.5 206.6L903 207.1L902.5 207.5L902 207.9L901.5 207.5L901 207.4L900.5 210.5L900 200.3L899.5 200.3L899 200.3L898.5 200.3L898 200.3L897.5 200.3L897 200.3L896.5 200.3L896 200.3L895.5 200.3L895 200.3L894.5 204.3L894 205.3L893.5 206.3L893 207.3L892.5 207.9L892 208.6L891.5 209.6L891 208.6L890.5 210.1L890 209.5L889.5 210.5L889 208.9L888.5 210.4L888 210L887.5 208.9L887 208.8L886.5 210L886 210.6L885.5 210.4L885 208.7L884.5 210.6L884 209.8L883.5 209.6L883 211.5L882.5 211.5L882 200.3L881.5 200.3L881 200.3L880.5 200.3L880 200.3L879.5 200.3L879 200.3L878.5 200.3L878 200.3L877.5 200.3L877 200.3L876.5 200.3L876 200.3L875.5 200.3L875 200.3L874.5 200.3L874 200.3L873.5 200.3L873 200.3L872.5 200.3L872 200.3L871.5 200.3L871 200.3L870.5 200.3L870 200.3L869.5 200.3L869 203.5L868.5 205.3L868 206.3L867.5 207.2L867 208L866.5 208.1L866 208.7L865.5 208.4L865 208.9L864.5 209.1L864 209.2L863.5 208.9L863 209L862.5 209.1L862 208.9L861.5 209.1L861 209L860.5 209.2L860 209L859.5 209L859 209.2L858.5 209L858 209L857.5 209.5L857 200.3L856.5 200.3L856 200.3L855.5 200.3L855 200.3L854.5 200.3L854 200.3L853.5 200.3L853 200.3L852.5 200.3L852 200.3L851.5 200.3L851 200.3L850.5 200.3L850 200.3L849.5 200.3L849 200.3L848.5 200.3L848 202.4L847.5 203L847 204.4L846.5 205.9L846 205.9L845.5 206.7L845 206.9L844.5 207.6L844 207L843.5 207.3L843 207.8L842.5 208.1L842 209L841.5 208L841 209L840.5 207.9L840 208.4L839.5 208.7L839 208.9L838.5 209L838 208.4L837.5 208.7L837 208.6L836.5 208.9L836 208.3L835.5 208.1L835 211.5L834.5 200.3L834 200.3Z" fill="#7fa8dc"/>
<path clip-path="url(#bc)" d="M313 215.6L313.5 215.6L314 218.6L314.5 219L315 218.4L315.5 219.1L316 219.1L316.5 218.4L317 218L317.5 218.4L318 219L318.5 218.6L319 219L319.5 219.2L320 218.7L320.5 218.6L321 218.9L321.5 219.2L322 218.8L322.5 219.3L323 220.1L323.5 220.4L324 220.1L324.5 220.4L325 221.5L325.5 223.7L326 223.6L326.5 226.8L327 226.8L327.5 226.8L328 226.8L328.5 226.8L329 226.8L329.5 226.8L330 226.8L330.5 226.8L331 226.8L331.5 226.8L332 226.8L332.5 226.8L333 226.8L333.5 226.8L334 226.8L334.5 226.8L335 226.8L335.5 226.8L336 217.6L336.5 218.4L337 217.9L337.5 218.3L338 217.8L338.5 218.3L339 218.3L339.5 217.9L340 218.1L340.5 218.3L341 218.3L341.5 218.3L342 218.3L342.5 217.9L343 218.4L343.5 218.6L344 218.4L344.5 219L345 219L345.5 218.8L346 219.9L346.5 221.3L347 222.5L347.5 223.6L348 226.8L348.5 226.8L349 226.8L349.5 226.8L350 226.8L350.5 226.8L351 226.8L351.5 226.8L352 226.8L352.5 226.8L353 226.8L353.5 226.8L354 226.8L354.5 226.8L355 226.8L355.5 226.8L356 226.8L356.5 226.8L357 226.8L357.5 226.8L358 226.8L358.5 226.8L359 226.8L359.5 226.8L360 226.8L360.5 226.8L361 215.6L361.5 215.6L362 218.4L362.5 216.6L363 218.2L363.5 217L364 218.3L364.5 216.7L365 217.8L365.5 218.7L366 218.2L366.5 218.2L367 217.4L367.5 218.4L368 218.8L368.5 217.8L369 217.9L369.5 217.3L370 219.7L370.5 218.8L371 219.6L371.5 220.1L372 221.9L372.5 221.6L373 223.5L373.5 226.8L374 226.8L374.5 226.8L375 226.8L375.5 226.8L376 226.8L376.5 226.8L377 226.8L377.5 226.8L378 226.8L378.5 226.8L379 216.6L379.5 219.8L380 219L380.5 220.4L381 219.9L381.5 220.4L382 221.1L382.5 220.3L383 220.5L383.5 220.7L384 221.6L384.5 221L385 222.1L385.5 221.6L386 222.3L386.5 222.6L387 224.1L387.5 223.6L388 224.9L388.5 226.8L389 226.8L389.5 226.8L390 226.8L390.5 226.8L391 226.8L391.5 226.8L392 226.8L392.5 226.8L393 226.8L393.5 226.8L394 226.8L394.5 226.8L395 216.6L395.5 220.2L396 220.9L396.5 221L397 220.1L397.5 219.7L398 219.9L398.5 220.6L399 220.5L399.5 220.7L400 219.4L400.5 220.6L401 221.2L401.5 221.7L402 220.8L402.5 221.8L403 223.4L403.5 225.2L404 224.7L404.5 226.8L405 226.8L405.5 226.8L406 226.8L406.5 226.8L407 226.8L407.5 226.8L408 226.8L408.5 226.8L409 226.8L409.5 226.8L410 226.8L410.5 226.8L411 226.8L411.5 216.1L412 216.1L412.5 219.2L413 219.4L413.5 218.9L414 219.3L414.5 218.5L415 219.6L415.5 218.7L416 218.8L416.5 219.3L417 219.9L417.5 219.6L418 219.5L418.5 220.6L419 220.3L419.5 221.5L420 222.5L420.5 223.7L421 224.9L421.5 226.8L422 226.8L422.5 226.8L423 226.8L423.5 226.8L424 226.8L424.5 226.8L425 226.8L425.5 226.8L426 226.8L426.5 226.8L427 226.8L427.5 226.8L428 216.6L428.5 216.6L429 220.5L429.5 220.4L430 220.8L430.5 221.4L431 221.2L431.5 221.5L432 222.6L432.5 222.5L433 223.1L433.5 222.9L434 223.2L434.5 223.8L435 224L435.5 224.5L436 225.7L436.5 225.6L437 226.6L437.5 226.8L438 226.8L438.5 226.8L439 226.8L439.5 226.8L440 226.8L440.5 226.8L441 226.8L441.5 226.8L442 226.8L442.5 226.8L443 226.8L443.5 216.6L444 216.6L444.5 219.9L445 219.6L445.5 219.6L446 219.4L446.5 219.4L447 219.7L447.5 219.9L448 219.6L448.5 219.3L449 219.2L449.5 219.2L450 219.8L450.5 219.8L451 219.5L451.5 219.5L452 220.1L452.5 219.9L453 220.7L453.5 220.3L454 220.9L454.5 221.1L455 221.3L455.5 221.3L456 222.8L456.5 223.6L457 224.4L457.5 225.3L458 226.8L458.5 226.8L459 226.8L459.5 226.8L460 226.8L460.5 226.8L461 226.8L461.5 226.8L462 226.8L462.5 226.8L463 226.8L463.5 226.8L464 226.8L464.5 226.8L465 226.8L465.5 226.8L466 226.8L466.5 226.8L467 226.8L467.5 226.8L468 226.8L468.5 226.8L469 216.6L469.5 216.6L470 222.9L470.5 221.9L471 221.7L471.5 221.6L472 220.9L472.5 220.8L473 221L473.5 220.6L474 220.7L474.5 220.8L475 220.8L475.5 220.8L476 220.7L476.5 220.9L477 220.9L477.5 221.3L478 221.2L478.5 221.4L479 221.8L479.5 222.4L480 223.1L480.5 225.2L481 226.8L481.5 226.8L482 226.8L482.5 226.8L483 226.8L483.5 226.8L484 226.8L484.5 226.8L485 226.8L485.5 226.8L486 226.8L486.5 226.8L487 226.8L487.5 226.8L488 226.8L488.5 226.8L489 226.8L489.5 226.8L490 226.8L490.5 226.8L491 226.3L491.5 226.1L492 226.6L492.5 226.8L493 226.8L493.5 217.6L494 217.6L494.5 218.9L495 219.8L495.5 220.8L496 219.2L496.5 218.5L497 219.6L497.5 219.6L498 220.3L498.5 220.7L499 219.9L499.5 220.1L500 221.3L500.5 220.9L501 221.8L501.5 225L502 225L502.5 226.8L503 226.8L503.5 226.8L504 226.8L504.5 226.8L505 226.8L505.5 226.8L506 226.8L506.5 226.8L507 226.8L507.5 226.8L508 226.8L508.5 226.8L509 226.8L509.5 226.8L510 217.6L510.5 217.6L511 220.4L511.5 220.3L512 221.1L512.5 220.2L513 221.1L513.5 220.6L514 220L514.5 220.3L515 220.4L515.5 220.7L516 220.3L516.5 221.8L517 221.2L517.5 222.1L518 223L518.5 224.2L519 224.9L519.5 226.8L520 226.8L520.5 226.8L521 226.8L521.5 226.4L522 226.1L522.5 226.4L523 226.8L523.5 226.8L524 226.8L524.5 226.8L525 226.8L525.5 226.8L526 217.6L526.5 220.3L527 220.1L527.5 220.3L528 220.7L528.5 220.4L529 221L529.5 220.9L530 221.5L530.5 222.2L531 222.7L531.5 222.5L532 222.9L532.5 222.8L533 222.5L533.5 222.7L534 223.2L534.5 223.7L535 224.9L535.5 225.5L536 226.2L536.5 226.8L537 226.8L537.5 226.8L538 226.8L538.5 226.8L539 226.8L539.5 226.8L540 226.8L540.5 226.8L541 226.8L541.5 226.8L542 217.6L542.5 217.6L543 219.6L543.5 219.7L544 219.5L544.5 219.8L545 219.8L545.5 219.8L546 219.9L546.5 219.7L547 219.4L547.5 219.2L548 219.9L548.5 219.7L549 219.3L549.5 219.9L550 220.1L550.5 220.1L551 220.7L551.5 220.9L552 221.5L552.5 221.7L553 222.8L553.5 223.8L554 224.6L554.5 226.8L555 226.8L555.5 226.8L556 226.8L556.5 226.8L557 226.8L557.5 226.8L558 226.8L558.5 226.8L559 226.8L559.5 226.8L560 226.8L560.5 226.8L561 226.8L561.5 226.8L562 226.8L562.5 226.8L563 226.8L563.5 226.8L564 226.8L564.5 226.8L565 226.8L565.5 226.8L566 226.8L566.5 226.8L567 226.8L567.5 226.8L568 226.8L568.5 226.8L569 226.8L569.5 226.8L570 226.8L570.5 226.8L571 226.8L571.5 226.8L572 226.8L572.5 226.8L573 226.8L573.5 226.8L574 226.8L574.5 219.6L575 219.6L575.5 221.7L576 221.7L576.5 220.6L577 220.7L577.5 220.1L578 220L578.5 219.6L579 220L579.5 219.3L580 220.1L580.5 219.8L581 219.5L581.5 219.6L582 220.1L582.5 219.8L583 220.1L583.5 220.4L584 220.1L584.5 221.1L585 220.7L585.5 221.3L586 222.3L586.5 223L587 226.8L587.5 226.8L588 226.8L588.5 226.8L589 226.8L589.5 226.8L590 226.8L590.5 226.8L591 226.8L591.5 226.8L592 226.8L592.5 226.8L593 226.8L593.5 226.8L594 226.8L594.5 226.8L595 226.8L595.5 226.8L596 226.8L596.5 226.8L597 226.8L597.5 226.8L598 220.1L598.5 220.8L599 220.3L599.5 220.7L600 221.1L600.5 221.1L601 220.5L601.5 220.4L602 220.3L602.5 220.9L603 221.1L603.5 220.3L604 220.9L604.5 220.8L605 220.9L605.5 220.7L606 220.6L606.5 220.8L607 221.1L607.5 221.9L608 221.3L608.5 222.8L609 223.5L609.5 224.4L610 225.4L610.5 226.8L611 226.8L611.5 226.8L612 226.8L612.5 226.8L613 226.8L613.5 226.8L614 226.8L614.5 226.8L615 226.8L615.5 226.8L616 226.8L616.5 226.8L617 226.8L617.5 226.8L618 226.8L618.5 226.8L619 226.8L619.5 226.8L620 226.8L620.5 226.8L621 226.8L621.5 226.8L622 226.8L622.5 226.8L623 218.6L623.5 218.8L624 220.4L624.5 218.7L625 220.7L625.5 219.5L626 218.5L626.5 218.9L627 219.5L627.5 220.6L628 219L628.5 220.6L629 220.5L629.5 219.2L630 220.3L630.5 219.5L631 219.9L631.5 218.5L632 219.6L632.5 219.1L633 218.6L633.5 218.8L634 218.8L634.5 218.8L635 218.5L635.5 219.5L636 218.9L636.5 219.8L637 219.1L637.5 220L638 220.5L638.5 220.3L639 220.9L639.5 220.8L640 219.3L640.5 221L641 219.8L641.5 221.2L642 220.9L642.5 220.8L643 220L643.5 221L644 221.1L644.5 220.8L645 219.6L645.5 221.2L646 220.7L646.5 222.5L647 223.7L647.5 226.8L648 226.8L648.5 226.8L649 226.8L649.5 226.8L650 226.8L650.5 226.1L651 226.2L651.5 226.8L652 226.8L652.5 226.8L653 226.8L653.5 226.8L654 226.8L654.5 226.8L655 226.8L655.5 218.1L656 219.2L656.5 219.1L657 219L657.5 219.9L658 220L658.5 219.7L659 220.2L659.5 221L660 221.4L660.5 221.9L661 221.2L661.5 222.4L662 221.9L662.5 222.5L663 222.4L663.5 223.5L664 224.6L664.5 226.8L665 226.8L665.5 226.8L666 226.8L666.5 226.8L667 226.8L667.5 226.1L668 226.2L668.5 226.8L669 226.8L669.5 226.8L670 226.8L670.5 226.8L671 226.8L671.5 226.8L672 217.6L672.5 217.6L673 218.2L673.5 218.6L674 219.1L674.5 219.1L675 219L675.5 220L676 219.7L676.5 220.1L677 220.8L677.5 220.5L678 220.9L678.5 221.4L679 221.7L679.5 222.3L680 223.6L680.5 224.3L681 226.8L681.5 226.8L682 226.8L682.5 226.8L683 226.8L683.5 226.8L684 226.8L684.5 226.8L685 226.8L685.5 226.8L686 226.8L686.5 226.8L687 226.8L687.5 226.8L688 218.6L688.5 218.6L689 218.8L689.5 220.2L690 219.6L690.5 220.7L691 220L691.5 221.5L692 221.7L692.5 221.6L693 221L693.5 222L694 221.9L694.5 222.8L695 223.1L695.5 223.4L696 222.8L696.5 224L697 225.9L697.5 226.1L698 226.8L698.5 226.8L699 226.8L699.5 226.8L700 226.8L700.5 226.8L701 226.8L701.5 226.8L702 226.8L702.5 226.8L703 226.8L703.5 226.8L704 216.6L704.5 219.1L705 218.8L705.5 219.4L706 218.7L706.5 219.2L707 219.5L707.5 218.6L708 218.9L708.5 219.4L709 219L709.5 219.5L710 219L710.5 219.3L711 219.2L711.5 219.5L712 219.7L712.5 219.6L713 219.8L713.5 219.7L714 220.1L714.5 221.1L715 221.2L715.5 221.5L716 221.2L716.5 222.5L717 224L717.5 224L718 225.2L718.5 226.8L719 226.8L719.5 226.8L720 226.8L720.5 226.8L721 226.8L721.5 226.8L722 226.8L722.5 226.8L723 226.8L723.5 226.8L724 226.8L724.5 226.8L725 226.8L725.5 226.8L726 226.8L726.5 226.8L727 226.8L727.5 226.8L728 226.8L728.5 226.8L729 226.8L729.5 216.6L730 216.6L730.5 219.2L731 220L731.5 220L732 219.5L732.5 219.6L733 219.5L733.5 219.4L734 219.4L734.5 219L735 219.6L735.5 219.7L736 219.9L736.5 220.7L737 220.7L737.5 221.6L738 221.8L738.5 223L739 224.2L739.5 225.2L740 225.5L740.5 226.8L741 226.8L741.5 226.8L742 226.8L742.5 226.8L743 226.8L743.5 226.8L744 226.8L744.5 226.8L745 226.8L745.5 226.8L746 226.8L746.5 226.8L747 226.8L747.5 226.8L748 226.8L748.5 226.8L749 226.8L749.5 226.8L750 226.8L750.5 226.8L751 226.8L751.5 226.8L752 226.8L752.5 226.8L753 226.8L753.5 217.6L754 219L754.5 219.2L755 220.1L755.5 219.2L756 220.1L756.5 219.1L757 219.4L757.5 219.5L758 218.1L758.5 218.5L759 218.9L759.5 219.2L760 218.5L760.5 219.3L761 219.2L761.5 217.5L762 218.8L762.5 218.6L763 217.4L763.5 218.3L764 217.8L764.5 218.9L765 218.2L765.5 216.9L766 217.8L766.5 218.1L767 216.8L767.5 216.8L768 217.5L768.5 216.6L769 217.9L769.5 217.8L770 218L770.5 217L771 217.3L771.5 218.3L772 218.9L772.5 220.1L773 221.1L773.5 220.8L774 222.5L774.5 222.1L775 223.4L775.5 223L776 224.9L776.5 224.1L777 226.8L777.5 226.8L778 226.8L778.5 226.8L779 226.8L779.5 226.8L780 226.8L780.5 226.8L781 226.8L781.5 226.8L782 226.8L782.5 226.8L783 226.8L783.5 226.8L784 226.8L784.5 219.6L785 219.6L785.5 220.2L786 220.3L786.5 220.4L787 221.1L787.5 221.6L788 220.8L788.5 221.7L789 222.1L789.5 221.1L790 222.1L790.5 222.5L791 222.5L791.5 222.6L792 223.2L792.5 222.7L793 223.4L793.5 223.3L794 223.1L794.5 223.6L795 224.1L795.5 224.6L796 224.2L796.5 225.3L797 225.9L797.5 226L798 226.4L798.5 226.8L799 226.8L799.5 226.8L800 226.8L800.5 226.8L801 226.8L801.5 218.6L802 221.4L802.5 221.9L803 221.4L803.5 221.9L804 222.4L804.5 221.8L805 221.7L805.5 222.9L806 223.3L806.5 222.6L807 223.3L807.5 223.8L808 223.9L808.5 224.1L809 223.3L809.5 224.7L810 225L810.5 224.7L811 226.1L811.5 226.8L812 226.8L812.5 226.8L813 226.8L813.5 226.8L814 226.8L814.5 226.8L815 226.8L815.5 226.8L816 226.8L816.5 226.8L817 226.8L817.5 226.8L818 223.1L818.5 223.1L819 224L819.5 223.6L820 223.4L820.5 223.2L821 223.1L821.5 223.1L822 223.1L822.5 223.2L823 223.4L823.5 223.6L824 224L824.5 224.6L825 226.8L825.5 226.8L826 226.8L826.5 226.8L827 226.8L827.5 226.8L828 226.8L828.5 226.8L829 226.8L829.5 226.8L830 226.8L830.5 226.8L831 226.8L831.5 226.8L832 226.8L832.5 226.8L833 226.8L833.5 226.8L834 226.8L834 228.4L833.5 228.4L833 228.4L832.5 228.4L832 228.4L831.5 228.4L831 228.4L830.5 228.4L830 228.4L829.5 228.4L829 228.4L828.5 228.4L828 228.4L827.5 228.4L827 228.4L826.5 228.4L826 228.4L825.5 228.4L825 228.4L824.5 230.6L824 231.2L823.5 231.6L823 231.8L822.5 232L822 232.1L821.5 232.1L821 232.1L820.5 232L820 231.8L819.5 231.6L819 231.2L818.5 232.1L818 232.1L817.5 228.4L817 228.4L816.5 228.4L816 228.4L815.5 228.4L815 228.4L814.5 228.4L814 228.4L813.5 228.4L813 228.4L812.5 228.4L812 228.4L811.5 228.4L811 229.5L810.5 229L810 230L809.5 231.1L809 231.9L808.5 231.9L808 231.4L807.5 232.5L807 232.4L806.5 232.5L806 232.4L805.5 232.6L805 232.6L804.5 233.3L804 234.1L803.5 234.2L803 233.8L802.5 234.1L802 233.7L801.5 236.6L801 228.4L800.5 228.4L800 228.4L799.5 228.4L799 228.4L798.5 228.4L798 229L797.5 228.4L797 229.9L796.5 230.3L796 231L795.5 231.2L795 230.5L794.5 230.6L794 230.9L793.5 231.6L793 232.4L792.5 232.1L792 232.5L791.5 232.7L791 232.2L790.5 233.6L790 233.5L789.5 232.6L789 234.2L788.5 233.9L788 233.6L787.5 233.9L787 234.9L786.5 234.3L786 234.2L785.5 235.2L785 235.6L784.5 235.6L784 228.4L783.5 228.4L783 228.4L782.5 228.4L782 228.4L781.5 228.4L781 228.4L780.5 228.4L780 228.4L779.5 228.4L779 228.4L778.5 228.4L778 228.4L777.5 228.4L777 228.4L776.5 230.5L776 230.4L775.5 231.6L775 232.4L774.5 233.3L774 232.8L773.5 233.4L773 234.2L772.5 234.4L772 236.8L771.5 235.8L771 237.9L770.5 237.4L770 237.3L769.5 238.8L769 238.2L768.5 238.8L768 237.1L767.5 237.4L767 237L766.5 238.4L766 236.9L765.5 238.4L765 237.3L764.5 238.1L764 236.3L763.5 236.8L763 237.7L762.5 236.1L762 236.5L761.5 235.8L761 236.8L760.5 237.3L760 237.4L759.5 237L759 237.1L758.5 237.1L758 237.2L757.5 235.4L757 236L756.5 235.6L756 236.4L755.5 235.7L755 235.8L754.5 234.9L754 235.3L753.5 237.6L753 228.4L752.5 228.4L752 228.4L751.5 228.4L751 228.4L750.5 228.4L750 228.4L749.5 228.4L749 228.4L748.5 228.4L748 228.4L747.5 228.4L747 228.4L746.5 228.4L746 228.4L745.5 228.4L745 228.4L744.5 228.4L744 228.4L743.5 228.4L743 228.4L742.5 228.4L742 228.4L741.5 228.4L741 228.4L740.5 228.4L740 229.9L739.5 229.7L739 231.6L738.5 232.2L738 233.8L737.5 233.6L737 234.5L736.5 235.1L736 235.3L735.5 235.6L735 235.5L734.5 235.7L734 235.2L733.5 235L733 235.4L732.5 235.3L732 235.2L731.5 235.5L731 235.6L730.5 235L730 238.6L729.5 238.6L729 228.4L728.5 228.4L728 228.4L727.5 228.4L727 228.4L726.5 228.4L726 228.4L725.5 228.4L725 228.4L724.5 228.4L724 228.4L723.5 228.4L723 228.4L722.5 228.4L722 228.4L721.5 228.4L721 228.4L720.5 228.4L720 228.4L719.5 228.4L719 228.4L718.5 228.4L718 229.7L717.5 231.1L717 231.3L716.5 232.2L716 233.4L715.5 234L715 234.6L714.5 234.8L714 234.9L713.5 235.5L713 235.1L712.5 235.7L712 236.3L711.5 236.6L711 236.1L710.5 236.5L710 236.3L709.5 235.8L709 235.8L708.5 236.5L708 236.4L707.5 236.1L707 236.3L706.5 236.1L706 236.1L705.5 236.4L705 236.2L704.5 236.4L704 238.6L703.5 228.4L703 228.4L702.5 228.4L702 228.4L701.5 228.4L701 228.4L700.5 228.4L700 228.4L699.5 228.4L699 228.4L698.5 228.4L698 228.4L697.5 229.6L697 229.8L696.5 231.1L696 232.1L695.5 232.3L695 231.5L694.5 232.3L694 233.4L693.5 233.4L693 233.4L692.5 233.1L692 233.5L691.5 234L691 234.9L690.5 234.9L690 235.6L689.5 235L689 235.3L688.5 236.6L688 236.6L687.5 228.4L687 228.4L686.5 228.4L686 228.4L685.5 228.4L685 228.4L684.5 228.4L684 228.4L683.5 228.4L683 228.4L682.5 228.4L682 228.4L681.5 228.4L681 228.4L680.5 230.6L680 231.5L679.5 233.1L679 233.5L678.5 233.9L678 234L677.5 234.2L677 235.2L676.5 235L676 235.1L675.5 235.5L675 236L674.5 236.6L674 236.4L673.5 236.9L673 237.2L672.5 237.6L672 237.6L671.5 228.4L671 228.4L670.5 228.4L670 228.4L669.5 228.4L669 228.4L668.5 228.4L668 229L667.5 229.1L667 228.4L666.5 228.4L666 228.4L665.5 228.4L665 228.4L664.5 228.4L664 230.2L663.5 231L663 232.4L662.5 232.7L662 232.5L661.5 233L661 234L660.5 234.3L660 234.5L659.5 234.5L659 235.4L658.5 235.1L658 235.1L657.5 235.3L657 236.1L656.5 236.6L656 236.5L655.5 237.1L655 228.4L654.5 228.4L654 228.4L653.5 228.4L653 228.4L652.5 228.4L652 228.4L651.5 228.4L651 229L650.5 229.1L650 228.4L649.5 228.4L649 228.4L648.5 228.4L648 228.4L647.5 228.4L647 230.9L646.5 233.6L646 233.2L645.5 235.5L645 234.8L644.5 235L644 235.5L643.5 234.4L643 234.3L642.5 235.6L642 234.4L641.5 234.2L641 236.2L640.5 235.1L640 234.5L639.5 235.7L639 234.9L638.5 236.5L638 235.3L637.5 234.7L637 236.7L636.5 234.7L636 235.4L635.5 236.1L635 235.9L634.5 236.5L634 236.3L633.5 236L633 235.4L632.5 236.1L632 235.7L631.5 236L631 235.2L630.5 236.2L630 236.2L629.5 235L629 236.2L628.5 235.9L628 236.6L627.5 234.6L627 236.3L626.5 234.6L626 236L625.5 235.8L625 235.6L624.5 235.1L624 236.2L623.5 235.8L623 236.6L622.5 228.4L622 228.4L621.5 228.4L621 228.4L620.5 228.4L620 228.4L619.5 228.4L619 228.4L618.5 228.4L618 228.4L617.5 228.4L617 228.4L616.5 228.4L616 228.4L615.5 228.4L615 228.4L614.5 228.4L614 228.4L613.5 228.4L613 228.4L612.5 228.4L612 228.4L611.5 228.4L611 228.4L610.5 228.4L610 230.2L609.5 230.8L609 231.7L608.5 232.6L608 233.9L607.5 233.4L607 233.5L606.5 233.8L606 234.6L605.5 234.4L605 234L604.5 234.9L604 234.2L603.5 234.8L603 234.4L602.5 234.8L602 234.1L601.5 234.4L601 234.6L600.5 234.1L600 235.1L599.5 234.4L599 235.1L598.5 234.7L598 235.1L597.5 228.4L597 228.4L596.5 228.4L596 228.4L595.5 228.4L595 228.4L594.5 228.4L594 228.4L593.5 228.4L593 228.4L592.5 228.4L592 228.4L591.5 228.4L591 228.4L590.5 228.4L590 228.4L589.5 228.4L589 228.4L588.5 228.4L588 228.4L587.5 228.4L587 228.4L586.5 231.7L586 232.7L585.5 233.4L585 234.3L584.5 234.2L584 235.2L583.5 234.9L583 235.2L582.5 235.5L582 235.7L581.5 235.1L581 235.2L580.5 235.5L580 235.1L579.5 235.9L579 235.9L578.5 235L578 235.3L577.5 235L577 234.4L576.5 234.4L576 234.3L575.5 233L575 235.6L574.5 235.6L574 228.4L573.5 228.4L573 228.4L572.5 228.4L572 228.4L571.5 228.4L571 228.4L570.5 228.4L570 228.4L569.5 228.4L569 228.4L568.5 228.4L568 228.4L567.5 228.4L567 228.4L566.5 228.4L566 228.4L565.5 228.4L565 228.4L564.5 228.4L564 228.4L563.5 228.4L563 228.4L562.5 228.4L562 228.4L561.5 228.4L561 228.4L560.5 228.4L560 228.4L559.5 228.4L559 228.4L558.5 228.4L558 228.4L557.5 228.4L557 228.4L556.5 228.4L556 228.4L555.5 228.4L555 228.4L554.5 228.4L554 230.5L553.5 231.2L553 232.5L552.5 233.2L552 233.5L551.5 234.1L551 234.1L550.5 235L550 234.9L549.5 235.6L549 235.3L548.5 235.6L548 235.9L547.5 236L547 235.2L546.5 235.9L546 235.8L545.5 235.2L545 235.2L544.5 235.8L544 235.6L543.5 235.4L543 235.7L542.5 237.6L542 237.6L541.5 228.4L541 228.4L540.5 228.4L540 228.4L539.5 228.4L539 228.4L538.5 228.4L538 228.4L537.5 228.4L537 228.4L536.5 228.4L536 229.4L535.5 230.1L535 231.4L534.5 231.7L534 231.1L533.5 232.1L533 232.2L532.5 232.4L532 233.1L531.5 232.3L531 232.7L530.5 233.2L530 233.8L529.5 233.2L529 234.3L528.5 234.4L528 234.3L527.5 234.8L527 234.7L526.5 235.7L526 237.6L525.5 228.4L525 228.4L524.5 228.4L524 228.4L523.5 228.4L523 228.4L522.5 228.8L522 229.1L521.5 228.8L521 228.4L520.5 228.4L520 228.4L519.5 228.4L519 229.7L518.5 231.1L518 232.2L517.5 232.4L517 234L516.5 234.5L516 234.6L515.5 234.3L515 234.4L514.5 235.2L514 235.1L513.5 233.8L513 234.1L512.5 234.4L512 234.5L511.5 235.2L511 233.8L510.5 237.6L510 237.6L509.5 228.4L509 228.4L508.5 228.4L508 228.4L507.5 228.4L507 228.4L506.5 228.4L506 228.4L505.5 228.4L505 228.4L504.5 228.4L504 228.4L503.5 228.4L503 228.4L502.5 228.4L502 230.9L501.5 232.4L501 231.4L500.5 234.6L500 233.9L499.5 234.1L499 235.2L498.5 234.3L498 234.6L497.5 236L497 236.2L496.5 234.7L496 236.6L495.5 234.9L495 236L494.5 234.7L494 237.6L493.5 237.6L493 228.4L492.5 228.4L492 228.6L491.5 229.1L491 228.9L490.5 228.4L490 228.4L489.5 228.4L489 228.4L488.5 228.4L488 228.4L487.5 228.4L487 228.4L486.5 228.4L486 228.4L485.5 228.4L485 228.4L484.5 228.4L484 228.4L483.5 228.4L483 228.4L482.5 228.4L482 228.4L481.5 228.4L481 228.4L480.5 230.4L480 231.8L479.5 232.9L479 233L478.5 233.7L478 233.9L477.5 234.2L477 234.1L476.5 234.4L476 234.5L475.5 234.4L475 234.6L474.5 234.7L474 234.6L473.5 234.4L473 234.2L472.5 234L472 233.8L471.5 233.9L471 233.4L470.5 233.4L470 232.5L469.5 238.6L469 238.6L468.5 228.4L468 228.4L467.5 228.4L467 228.4L466.5 228.4L466 228.4L465.5 228.4L465 228.4L464.5 228.4L464 228.4L463.5 228.4L463 228.4L462.5 228.4L462 228.4L461.5 228.4L461 228.4L460.5 228.4L460 228.4L459.5 228.4L459 228.4L458.5 228.4L458 228.4L457.5 229.8L457 230.3L456.5 231.6L456 232.8L455.5 233.6L455 233.4L454.5 234L454 234L453.5 234.5L453 235L452.5 235.3L452 235.1L451.5 235.5L451 235.6L450.5 235.8L450 235.6L449.5 235.3L449 235.6L448.5 235.8L448 235.8L447.5 235.3L447 235.8L446.5 235.3L446 235.3L445.5 235.2L445 235.8L444.5 235.6L444 238.6L443.5 238.6L443 228.4L442.5 228.4L442 228.4L441.5 228.4L441 228.4L440.5 228.4L440 228.4L439.5 228.4L439 228.4L438.5 228.4L438 228.4L437.5 228.4L437 228.9L436.5 229.6L436 230.2L435.5 230.8L435 231.3L434.5 231L434 231.6L433.5 232.2L433 232.3L432.5 233L432 232.9L431.5 233.5L431 233.2L430.5 234.2L430 234.5L429.5 234.6L429 234.8L428.5 238.6L428 238.6L427.5 228.4L427 228.4L426.5 228.4L426 228.4L425.5 228.4L425 228.4L424.5 228.4L424 228.4L423.5 228.4L423 228.4L422.5 228.4L422 228.4L421.5 228.4L421 229.9L420.5 230.9L420 232.9L419.5 233.7L419 234.7L418.5 234.5L418 235L417.5 235L417 235.5L416.5 236.4L416 236.2L415.5 235.5L415 235.5L414.5 236L414 236.5L413.5 236.1L413 236L412.5 235.8L412 239.1L411.5 239.1L411 228.4L410.5 228.4L410 228.4L409.5 228.4L409 228.4L408.5 228.4L408 228.4L407.5 228.4L407 228.4L406.5 228.4L406 228.4L405.5 228.4L405 228.4L404.5 228.4L404 230.5L403.5 230.7L403 231.3L402.5 232.4L402 234.6L401.5 233.9L401 234.7L400.5 235.5L400 235.3L399.5 234.4L399 235.5L398.5 234.1L398 235.9L397.5 235.1L397 234.6L396.5 235.3L396 235.6L395.5 235.8L395 238.6L394.5 228.4L394 228.4L393.5 228.4L393 228.4L392.5 228.4L392 228.4L391.5 228.4L391 228.4L390.5 228.4L390 228.4L389.5 228.4L389 228.4L388.5 228.4L388 229.7L387.5 231.4L387 232L386.5 232.7L386 232.6L385.5 233.1L385 233.7L384.5 234.1L384 234.1L383.5 234.7L383 234.6L382.5 235.2L382 234.9L381.5 235.9L381 235.7L380.5 235.8L380 236.6L379.5 236.8L379 238.6L378.5 228.4L378 228.4L377.5 228.4L377 228.4L376.5 228.4L376 228.4L375.5 228.4L375 228.4L374.5 228.4L374 228.4L373.5 228.4L373 231.4L372.5 232.8L372 234.6L371.5 234.1L371 236L370.5 235.5L370 236.1L369.5 236.2L369 236.5L368.5 238.1L368 236.8L367.5 238.1L367 237.1L366.5 238.4L366 238.1L365.5 238.7L365 236.6L364.5 237.8L364 238.7L363.5 238.7L363 236.9L362.5 238.4L362 236.8L361.5 239.6L361 239.6L360.5 228.4L360 228.4L359.5 228.4L359 228.4L358.5 228.4L358 228.4L357.5 228.4L357 228.4L356.5 228.4L356 228.4L355.5 228.4L355 228.4L354.5 228.4L354 228.4L353.5 228.4L353 228.4L352.5 228.4L352 228.4L351.5 228.4L351 228.4L350.5 228.4L350 228.4L349.5 228.4L349 228.4L348.5 228.4L348 228.4L347.5 231.6L347 232.9L346.5 234.1L346 235.1L345.5 236.1L345 236.2L344.5 236.8L344 236.7L343.5 236.7L343 237.1L342.5 237.2L342 237L341.5 237.1L341 237.2L340.5 237.2L340 237.1L339.5 236.9L339 236.8L338.5 236.9L338 237.3L337.5 237L337 237L336.5 237.2L336 237.6L335.5 228.4L335 228.4L334.5 228.4L334 228.4L333.5 228.4L333 228.4L332.5 228.4L332 228.4L331.5 228.4L331 228.4L330.5 228.4L330 228.4L329.5 228.4L329 228.4L328.5 228.4L328 228.4L327.5 228.4L327 228.4L326.5 228.4L326 231L325.5 231.7L325 233.6L324.5 234.2L324 234.7L323.5 234.5L323 235L322.5 235.8L322 236.4L321.5 235.8L321 236.5L320.5 236.7L320 237L319.5 236.6L319 236.3L318.5 236.1L318 236L317.5 236.7L317 237.2L316.5 236.1L316 237L315.5 236.4L315 237L314.5 236.6L314 236.7L313.5 239.6L313 239.6Z" fill="#d6e6fb"/>
<path clip-path="url(#bc)" d="M834 226.8L834.5 226.8L835 215.6L835.5 218.4L836 219.2L836.5 218.9L837 218.4L837.5 218.5L838 219L838.5 219L839 219.1L839.5 219.1L840 218.8L840.5 218.2L841 219.1L841.5 218.6L842 218L842.5 219.3L843 219.6L843.5 219.2L844 219.4L844.5 220.3L845 220.2L845.5 220.2L846 220.7L846.5 221.5L847 222.3L847.5 224.1L848 224.7L848.5 226.8L849 226.8L849.5 226.8L850 226.8L850.5 226.8L851 226.8L851.5 226.8L852 226.8L852.5 226.8L853 226.8L853.5 226.8L854 226.8L854.5 226.8L855 226.8L855.5 226.8L856 226.8L856.5 226.8L857 226.8L857.5 217.6L858 218.2L858.5 217.9L859 218.4L859.5 218.1L860 218.3L860.5 218.2L861 218.3L861.5 218.3L862 218.4L862.5 218.2L863 218.4L863.5 218.3L864 218.1L864.5 218.3L865 218.6L865.5 218.6L866 218.5L866.5 219.1L867 218.8L867.5 219.7L868 221.1L868.5 221.8L869 223.3L869.5 226.8L870 226.8L870.5 226.8L871 226.8L871.5 226.8L872 226.8L872.5 226.8L873 226.8L873.5 226.8L874 226.8L874.5 226.8L875 226.8L875.5 226.8L876 226.8L876.5 226.8L877 226.8L877.5 226.8L878 226.8L878.5 226.8L879 226.8L879.5 226.8L880 226.8L880.5 226.8L881 226.8L881.5 226.8L882 226.8L882.5 215.6L883 215.6L883.5 218.2L884 217.7L884.5 218.2L885 216.7L885.5 218.1L886 218.1L886.5 217.6L887 217.1L887.5 218.1L888 217.2L888.5 218.5L889 217.8L889.5 217.9L890 217.8L890.5 217.1L891 217.7L891.5 218.3L892 218L892.5 219.2L893 219.4L893.5 222.4L894 221.6L894.5 222.8L895 226.8L895.5 226.8L896 226.8L896.5 226.8L897 226.8L897.5 226.8L898 226.8L898.5 226.8L899 226.8L899.5 226.8L900 226.8L900.5 216.6L901 219.2L901.5 219.5L902 218.8L902.5 219.7L903 220.7L903.5 220L904 221L904.5 221.1L905 221.7L905.5 221.7L906 221.2L906.5 221.2L907 222.9L907.5 222.5L908 222.4L908.5 223.7L909 223.5L909.5 225.3L910 226.8L910.5 226.8L911 226.8L911.5 226.8L912 226.8L912.5 226.8L913 226.8L913.5 226.8L914 226.8L914.5 226.8L915 226.8L915.5 226.8L916 226.8L916.5 216.6L917 220.7L917.5 220.1L918 220.8L918.5 219.9L919 220.6L919.5 219.4L920 220.6L920.5 219.6L921 219.8L921.5 219.2L922 220.1L922.5 220.3L923 221.1L923.5 221.7L924 222.9L924.5 223.8L925 223.7L925.5 224.3L926 226.8L926.5 226.8L927 226.8L927.5 226.8L928 226.8L928.5 226.8L929 226.8L929.5 226.8L930 226.8L930.5 226.8L931 226.8L931.5 226.8L932 226.8L932.5 226.8L933 216.1L933.5 216.1L934 219.5L934.5 218.7L935 218.8L935.5 219L936 219.2L936.5 219.2L937 218.7L937.5 219.5L938 218.5L938.5 219.8L939 219.1L939.5 220L940 220.3L940.5 220L941 221.8L941.5 223.2L942 224.3L942.5 225.1L943 226.8L943.5 226.8L944 226.8L944.5 226.8L945 226.8L945.5 226.8L946 226.8L946.5 226.8L947 226.8L947.5 226.8L948 226.8L948.5 226.8L949 226.8L949.5 226.8L950 216.6L950.5 220.5L951 220.2L951.5 221.3L952 221.2L952.5 221.5L953 221.6L953.5 222.1L954 222.4L954.5 223L955 223L955.5 223.1L956 223.5L956.5 223.7L957 224.6L957.5 225.1L958 225.6L958.5 226.8L959 226.8L959.5 226.8L960 226.8L960.5 226.8L961 226.8L961.5 226.8L962 226.8L962.5 226.8L963 226.8L963.5 226.8L964 226.8L964.5 226.8L965 226.8L965.5 216.6L966 220L966.5 219.9L967 219.5L967.5 219.2L968 219.2L968.5 219.8L969 219.6L969.5 219.4L970 219.6L970.5 219.8L971 219.5L971.5 219.2L972 219.3L972.5 219.8L973 219.6L973.5 220.3L974 220.2L974.5 220.1L975 220.8L975.5 220.6L976 221.1L976.5 221.3L977 221.7L977.5 222.6L978 223.7L978.5 224L979 225.4L979.5 226.8L980 226.8L980.5 226.8L981 226.8L981.5 226.8L982 226.8L982.5 226.8L983 226.8L983.5 226.8L984 226.8L984.5 226.8L985 226.8L985.5 226.8L986 226.8L986.5 226.8L987 226.8L987.5 226.8L988 226.8L988.5 226.8L989 226.8L989.5 226.8L990 226.8L990.5 226.8L991 216.6L991.5 222.7L992 222.2L992.5 221.7L993 221.5L993.5 220.9L994 221L994.5 221L995 220.9L995.5 220.7L996 220.3L996.5 220.7L997 220.7L997.5 220.6L998 220.7L998.5 221L999 220.8L999.5 221.5L1000 221.7L1000.5 222.1L1001 222.3L1001.5 223.1L1002 224.2L1002.5 226.8L1003 226.8L1003.5 226.8L1004 226.8L1004.5 226.8L1005 226.8L1005.5 226.8L1006 226.8L1006.5 226.8L1007 226.8L1007.5 226.8L1008 226.8L1008.5 226.8L1009 226.8L1009.5 226.8L1010 226.8L1010.5 226.8L1011 226.8L1011.5 226.8L1012 226.8L1012.5 226.4L1013 226.1L1013.5 226.4L1014 226.8L1014.5 226.8L1015 226.8L1015.5 217.6L1016 219.1L1016.5 219.2L1017 219.1L1017.5 220.1L1018 218.7L1018.5 219.9L1019 218.6L1019.5 218.8L1020 220.2L1020.5 220.2L1021 221.3L1021.5 221L1022 222.4L1022.5 222.9L1023 223.5L1023.5 225.6L1024 226.8L1024.5 226.8L1025 226.8L1025.5 226.8L1026 226.8L1026.5 226.8L1027 226.8L1027.5 226.8L1028 226.8L1028.5 226.8L1029 226.8L1029.5 226.8L1030 226.8L1030.5 226.8L1031 226.8L1031.5 226.8L1032 217.6L1032.5 219.9L1033 220.8L1033.5 219.9L1034 220.5L1034.5 221L1035 219.9L1035.5 220.4L1036 220.1L1036.5 220.4L1037 221.6L1037.5 221.3L1038 222L1038.5 221.5L1039 221.9L1039.5 223.3L1040 223.8L1040.5 224.5L1041 226.8L1041.5 226.8L1042 226.8L1042.5 226.8L1043 226.6L1043.5 226.1L1044 226.3L1044.5 226.8L1045 226.8L1045.5 226.8L1046 226.8L1046.5 226.8L1047 226.8L1047.5 217.6L1048 219.9L1048.5 220L1049 220.3L1049.5 220.9L1050 221.4L1050.5 220.6L1051 221.3L1051.5 221.1L1052 222.2L1052.5 221.7L1053 222.7L1053.5 222.4L1054 222.7L1054.5 222.7L1055 223L1055.5 223.2L1056 224.1L1056.5 224L1057 225.4L1057.5 225.8L1058 226.8L1058.5 226.8L1059 226.8L1059.5 226.8L1060 226.8L1060.5 226.8L1061 226.8L1061.5 226.8L1062 226.8L1062.5 226.8L1063 226.8L1063.5 226.8L1064 217.6L1064.5 219.6L1065 219.3L1065.5 219.3L1066 219.3L1066.5 219.7L1067 219.5L1067.5 219.8L1068 219.2L1068.5 219.9L1069 219.3L1069.5 219.2L1070 219.7L1070.5 219.8L1071 219.5L1071.5 220.1L1072 220.7L1072.5 221.1L1073 221L1073.5 220.9L1074 221.4L1074.5 222.4L1075 223.2L1075.5 224.4L1076 225.6L1076.5 226.8L1077 226.8L1077.5 226.8L1078 226.8L1078.5 226.8L1079 226.8L1079.5 226.8L1080 226.8L1080.5 226.8L1081 226.8L1081.5 226.8L1082 226.8L1082.5 226.8L1083 226.8L1083.5 226.8L1084 226.8L1084.5 226.8L1085 226.8L1085.5 226.8L1086 226.8L1086.5 226.8L1087 226.8L1087.5 226.8L1088 226.8L1088.5 226.8L1089 226.8L1089.5 226.8L1090 226.8L1090.5 226.8L1091 226.8L1091.5 226.8L1092 226.8L1092.5 226.8L1093 226.8L1093.5 226.8L1094 226.8L1094.5 226.8L1095 226.8L1095.5 226.8L1096 219.6L1096.5 219.6L1097 222.4L1097.5 221.6L1098 220.8L1098.5 220.7L1099 220.6L1099.5 219.7L1100 219.8L1100.5 219.8L1101 219.9L1101.5 220L1102 219.4L1102.5 219.2L1103 220L1103.5 219.6L1104 219.7L1104.5 219.4L1105 219.7L1105.5 220.5L1106 220.9L1106.5 221.2L1107 221.8L1107.5 221.6L1108 222.9L1108.5 226.8L1109 226.8L1109.5 226.8L1110 226.8L1110.5 226.8L1111 226.8L1111.5 226.8L1112 226.8L1112.5 226.8L1113 226.8L1113.5 226.8L1114 226.8L1114.5 226.8L1115 226.8L1115.5 226.8L1116 226.8L1116.5 226.8L1117 226.8L1117.5 226.8L1118 226.8L1118.5 226.8L1119 226.8L1119.5 220.1L1120 220.1L1120.5 221L1121 220.1L1121.5 220.3L1122 220.8L1122.5 220.7L1123 220.2L1123.5 221.1L1124 220.8L1124.5 220.1L1125 220.8L1125.5 221L1126 220.9L1126.5 221L1127 221.4L1127.5 221.5L1128 221L1128.5 221.5L1129 221.7L1129.5 221.3L1130 222.7L1130.5 223L1131 224.4L1131.5 224.9L1132 226.8L1132.5 226.8L1133 226.8L1133.5 226.8L1134 226.8L1134.5 226.8L1135 226.8L1135.5 226.8L1136 226.8L1136.5 226.8L1137 226.8L1137.5 226.8L1138 226.8L1138.5 226.8L1139 226.8L1139.5 226.8L1140 226.8L1140.5 226.8L1141 226.8L1141.5 226.8L1142 226.8L1142.5 226.8L1143 226.8L1143.5 226.8L1144 226.8L1144.5 218.6L1145 218.6L1145.5 219.2L1146 218.6L1146.5 219.1L1147 219.1L1147.5 218.7L1148 219.7L1148.5 219L1149 220.1L1149.5 219.1L1150 218.7L1150.5 219.9L1151 219.1L1151.5 220.5L1152 220.5L1152.5 218.4L1153 219.7L1153.5 220.1L1154 220.5L1154.5 220.2L1155 220.5L1155.5 219.1L1156 218.8L1156.5 220.3L1157 218.4L1157.5 219.1L1158 218.9L1158.5 220.6L1159 218.6L1159.5 220.7L1160 219.2L1160.5 219.9L1161 220.6L1161.5 220.1L1162 220.8L1162.5 220.9L1163 220.1L1163.5 219.5L1164 219.7L1164.5 221L1165 220.4L1165.5 219.4L1166 219.2L1166.5 219.2L1167 219.5L1167.5 220.8L1168 222.1L1168.5 222.6L1169 224.3L1169.5 226.8L1170 226.8L1170.5 226.8L1171 226.8L1171.5 226.8L1172 226.2L1172.5 226.1L1173 226.8L1173.5 226.8L1174 226.8L1174.5 226.8L1175 226.8L1175.5 226.8L1176 226.8L1176.5 226.8L1177 218.1L1177.5 219.1L1178 219.2L1178.5 219.6L1179 219L1179.5 220.1L1180 220.2L1180.5 220.7L1181 220.8L1181.5 220.9L1182 220.7L1182.5 222.1L1183 222.3L1183.5 221.8L1184 222.2L1184.5 222.8L1185 223.8L1185.5 224.5L1186 225.4L1186.5 226.8L1187 226.8L1187.5 226.8L1188 226.8L1188.5 226.8L1189 226.2L1189.5 226.1L1190 226.8L1190.5 226.8L1191 226.8L1191.5 226.8L1192 226.8L1192.5 226.8L1193 226.8L1193.5 226.8L1194 217.6L1194.5 218L1195 218.4L1195.5 218.8L1196 219.3L1196.5 219.6L1197 219.4L1197.5 219.8L1198 220.3L1198.5 220L1199 220.7L1199.5 220.7L1200 221L1200.5 221.5L1201 221.9L1201.5 223L1202 224.6L1202.5 226.8L1203 226.8L1203.5 226.8L1204 226.8L1204.5 226.8L1205 226.8L1205.5 226.8L1206 226.8L1206.5 226.8L1207 226.8L1207.5 226.8L1208 226.8L1208 228.4L1207.5 228.4L1207 228.4L1206.5 228.4L1206 228.4L1205.5 228.4L1205 228.4L1204.5 228.4L1204 228.4L1203.5 228.4L1203 228.4L1202.5 228.4L1202 230.8L1201.5 231.9L1201 233.1L1200.5 233.4L1200 234.1L1199.5 234.5L1199 234.5L1198.5 234.6L1198 234.9L1197.5 235.5L1197 235.5L1196.5 236.1L1196 236.6L1195.5 236.3L1195 237L1194.5 236.7L1194 237.6L1193.5 228.4L1193 228.4L1192.5 228.4L1192 228.4L1191.5 228.4L1191 228.4L1190.5 228.4L1190 228.4L1189.5 229.1L1189 229L1188.5 228.4L1188 228.4L1187.5 228.4L1187 228.4L1186.5 228.4L1186 229.8L1185.5 229.9L1185 231.6L1184.5 232.6L1184 232.9L1183.5 232.8L1183 233.9L1182.5 234.2L1182 234.5L1181.5 234.5L1181 235.1L1180.5 235.1L1180 235.1L1179.5 235.6L1179 235.7L1178.5 236.1L1178 236.5L1177.5 236.2L1177 237.1L1176.5 228.4L1176 228.4L1175.5 228.4L1175 228.4L1174.5 228.4L1174 228.4L1173.5 228.4L1173 228.4L1172.5 229.1L1172 229L1171.5 228.4L1171 228.4L1170.5 228.4L1170 228.4L1169.5 228.4L1169 230.5L1168.5 231.9L1168 232.7L1167.5 233.9L1167 235.9L1166.5 233.8L1166 235.3L1165.5 233.8L1165 233.9L1164.5 234.8L1164 236.1L1163.5 235.7L1163 234.1L1162.5 234.1L1162 235.1L1161.5 234.5L1161 235.3L1160.5 234.5L1160 235.1L1159.5 234.5L1159 235.8L1158.5 234.9L1158 235.7L1157.5 234.7L1157 236L1156.5 234.7L1156 236.2L1155.5 236.8L1155 236.6L1154.5 234.5L1154 235.4L1153.5 235.2L1153 235.3L1152.5 234.4L1152 235.9L1151.5 234.6L1151 234.8L1150.5 235.2L1150 235.2L1149.5 234.5L1149 235.1L1148.5 236.4L1148 236.1L1147.5 234.8L1147 234.6L1146.5 236L1146 235.3L1145.5 236.5L1145 236.6L1144.5 236.6L1144 228.4L1143.5 228.4L1143 228.4L1142.5 228.4L1142 228.4L1141.5 228.4L1141 228.4L1140.5 228.4L1140 228.4L1139.5 228.4L1139 228.4L1138.5 228.4L1138 228.4L1137.5 228.4L1137 228.4L1136.5 228.4L1136 228.4L1135.5 228.4L1135 228.4L1134.5 228.4L1134 228.4L1133.5 228.4L1133 228.4L1132.5 228.4L1132 228.4L1131.5 229.7L1131 231.5L1130.5 232.5L1130 232.7L1129.5 234L1129 234.1L1128.5 234.4L1128 234.4L1127.5 234.2L1127 234.5L1126.5 234.7L1126 235.1L1125.5 234.1L1125 235.2L1124.5 234L1124 235L1123.5 234.2L1123 234.6L1122.5 235.1L1122 234.2L1121.5 234.2L1121 234L1120.5 234.1L1120 235.1L1119.5 235.1L1119 228.4L1118.5 228.4L1118 228.4L1117.5 228.4L1117 228.4L1116.5 228.4L1116 228.4L1115.5 228.4L1115 228.4L1114.5 228.4L1114 228.4L1113.5 228.4L1113 228.4L1112.5 228.4L1112 228.4L1111.5 228.4L1111 228.4L1110.5 228.4L1110 228.4L1109.5 228.4L1109 228.4L1108.5 228.4L1108 232.1L1107.5 233.5L1107 233.5L1106.5 233.8L1106 235L1105.5 234.9L1105 234.7L1104.5 235.3L1104 235.1L1103.5 235.7L1103 236L1102.5 235.3L1102 235.6L1101.5 235.3L1101 235.6L1100.5 235.1L1100 234.9L1099.5 235.2L1099 235.3L1098.5 234.5L1098 234.3L1097.5 234.3L1097 233.3L1096.5 235.6L1096 235.6L1095.5 228.4L1095 228.4L1094.5 228.4L1094 228.4L1093.5 228.4L1093 228.4L1092.5 228.4L1092 228.4L1091.5 228.4L1091 228.4L1090.5 228.4L1090 228.4L1089.5 228.4L1089 228.4L1088.5 228.4L1088 228.4L1087.5 228.4L1087 228.4L1086.5 228.4L1086 228.4L1085.5 228.4L1085 228.4L1084.5 228.4L1084 228.4L1083.5 228.4L1083 228.4L1082.5 228.4L1082 228.4L1081.5 228.4L1081 228.4L1080.5 228.4L1080 228.4L1079.5 228.4L1079 228.4L1078.5 228.4L1078 228.4L1077.5 228.4L1077 228.4L1076.5 228.4L1076 229.8L1075.5 230.8L1075 231.9L1074.5 232.8L1074 233.6L1073.5 234L1073 234.5L1072.5 234.2L1072 234.5L1071.5 235L1071 235.6L1070.5 235.2L1070 235.9L1069.5 235.8L1069 235.7L1068.5 235.5L1068 235.3L1067.5 235.3L1067 235.8L1066.5 235.9L1066 235.2L1065.5 235.5L1065 235.4L1064.5 236L1064 237.6L1063.5 228.4L1063 228.4L1062.5 228.4L1062 228.4L1061.5 228.4L1061 228.4L1060.5 228.4L1060 228.4L1059.5 228.4L1059 228.4L1058.5 228.4L1058 228.4L1057.5 229.3L1057 230.3L1056.5 230.9L1056 230.9L1055.5 231.6L1055 231.7L1054.5 232.6L1054 232.6L1053.5 232.4L1053 232.8L1052.5 233.7L1052 233.7L1051.5 233.6L1051 233.4L1050.5 233.6L1050 233.7L1049.5 234L1049 234.6L1048.5 235.4L1048 235.6L1047.5 237.6L1047 228.4L1046.5 228.4L1046 228.4L1045.5 228.4L1045 228.4L1044.5 228.4L1044 228.9L1043.5 229.1L1043 228.6L1042.5 228.4L1042 228.4L1041.5 228.4L1041 228.4L1040.5 229.3L1040 230.7L1039.5 231.8L1039 233.4L1038.5 233.7L1038 234.6L1037.5 234L1037 234.4L1036.5 234.5L1036 235.1L1035.5 234.1L1035 234L1034.5 234.7L1034 235.1L1033.5 235L1033 234.1L1032.5 234.6L1032 237.6L1031.5 228.4L1031 228.4L1030.5 228.4L1030 228.4L1029.5 228.4L1029 228.4L1028.5 228.4L1028 228.4L1027.5 228.4L1027 228.4L1026.5 228.4L1026 228.4L1025.5 228.4L1025 228.4L1024.5 228.4L1024 228.4L1023.5 229.8L1023 232.5L1022.5 232.5L1022 234.5L1021.5 233.9L1021 234L1020.5 234.1L1020 234.9L1019.5 235.4L1019 234.8L1018.5 236.7L1018 236.3L1017.5 234.5L1017 235.3L1016.5 235.9L1016 235.6L1015.5 237.6L1015 228.4L1014.5 228.4L1014 228.4L1013.5 228.8L1013 229.1L1012.5 228.8L1012 228.4L1011.5 228.4L1011 228.4L1010.5 228.4L1010 228.4L1009.5 228.4L1009 228.4L1008.5 228.4L1008 228.4L1007.5 228.4L1007 228.4L1006.5 228.4L1006 228.4L1005.5 228.4L1005 228.4L1004.5 228.4L1004 228.4L1003.5 228.4L1003 228.4L1002.5 228.4L1002 230.7L1001.5 232.1L1001 232.9L1000.5 233.1L1000 233.9L999.5 233.9L999 234.2L998.5 234.5L998 234.2L997.5 234.3L997 234.6L996.5 234.7L996 234.5L995.5 234.5L995 234.4L994.5 234.3L994 234.2L993.5 233.9L993 233.7L992.5 233.4L992 233.1L991.5 232.2L991 238.6L990.5 228.4L990 228.4L989.5 228.4L989 228.4L988.5 228.4L988 228.4L987.5 228.4L987 228.4L986.5 228.4L986 228.4L985.5 228.4L985 228.4L984.5 228.4L984 228.4L983.5 228.4L983 228.4L982.5 228.4L982 228.4L981.5 228.4L981 228.4L980.5 228.4L980 228.4L979.5 228.4L979 229.9L978.5 231L978 231.8L977.5 232.8L977 233.4L976.5 233.9L976 233.8L975.5 234.7L975 234.5L974.5 235L974 235.2L973.5 235L973 235.6L972.5 235.9L972 235.5L971.5 235.8L971 236L970.5 235.3L970 235.5L969.5 235.5L969 235.4L968.5 235.9L968 235.2L967.5 235.8L967 236L966.5 235.7L966 235.4L965.5 238.6L965 228.4L964.5 228.4L964 228.4L963.5 228.4L963 228.4L962.5 228.4L962 228.4L961.5 228.4L961 228.4L960.5 228.4L960 228.4L959.5 228.4L959 228.4L958.5 228.4L958 228.9L957.5 230.2L957 230.6L956.5 231.2L956 231.5L955.5 231.7L955 231.8L954.5 232.3L954 232.6L953.5 233L953 233.3L952.5 233.8L952 233.9L951.5 234.5L951 234.8L950.5 234.8L950 238.6L949.5 228.4L949 228.4L948.5 228.4L948 228.4L947.5 228.4L947 228.4L946.5 228.4L946 228.4L945.5 228.4L945 228.4L944.5 228.4L944 228.4L943.5 228.4L943 228.4L942.5 230.8L942 231.1L941.5 232.4L941 234.2L940.5 235.2L940 234.7L939.5 235.7L939 236L938.5 236.4L938 236.1L937.5 235.8L937 235.7L936.5 236L936 236L935.5 235.8L935 236L934.5 236.2L934 236.3L933.5 239.1L933 239.1L932.5 228.4L932 228.4L931.5 228.4L931 228.4L930.5 228.4L930 228.4L929.5 228.4L929 228.4L928.5 228.4L928 228.4L927.5 228.4L927 228.4L926.5 228.4L926 228.4L925.5 230.2L925 230.5L924.5 230.9L924 233L923.5 233.1L923 233.9L922.5 234.1L922 234.4L921.5 235.1L921 235.4L920.5 234.9L920 235.2L919.5 235.8L919 235L918.5 235.8L918 235L917.5 235.5L917 235.9L916.5 238.6L916 228.4L915.5 228.4L915 228.4L914.5 228.4L914 228.4L913.5 228.4L913 228.4L912.5 228.4L912 228.4L911.5 228.4L911 228.4L910.5 228.4L910 228.4L909.5 229.7L909 230.2L908.5 231.7L908 232.3L907.5 232.3L907 233L906.5 233.1L906 233.8L905.5 234.2L905 233.4L904.5 234.7L904 234.5L903.5 234.7L903 235.2L902.5 235.6L902 236L901.5 235.6L901 235.5L900.5 238.6L900 228.4L899.5 228.4L899 228.4L898.5 228.4L898 228.4L897.5 228.4L897 228.4L896.5 228.4L896 228.4L895.5 228.4L895 228.4L894.5 232.4L894 233.4L893.5 234.4L893 235.4L892.5 236L892 236.7L891.5 237.7L891 236.7L890.5 238.2L890 237.6L889.5 238.6L889 237L888.5 238.5L888 238.1L887.5 237L887 236.9L886.5 238.1L886 238.7L885.5 238.5L885 236.8L884.5 238.7L884 237.9L883.5 237.7L883 239.6L882.5 239.6L882 228.4L881.5 228.4L881 228.4L880.5 228.4L880 228.4L879.5 228.4L879 228.4L878.5 228.4L878 228.4L877.5 228.4L877 228.4L876.5 228.4L876 228.4L875.5 228.4L875 228.4L874.5 228.4L874 228.4L873.5 228.4L873 228.4L872.5 228.4L872 228.4L871.5 228.4L871 228.4L870.5 228.4L870 228.4L869.5 228.4L869 231.6L868.5 233.4L868 234.4L867.5 235.3L867 236.1L866.5 236.2L866 236.8L865.5 236.5L865 237L864.5 237.2L864 237.3L863.5 237L863 237.1L862.5 237.2L862 237L861.5 237.2L861 237.1L860.5 237.3L860 237.1L859.5 237.1L859 237.3L858.5 237.1L858 237.1L857.5 237.6L857 228.4L856.5 228.4L856 228.4L855.5 228.4L855 228.4L854.5 228.4L854 228.4L853.5 228.4L853 228.4L852.5 228.4L852 228.4L851.5 228.4L851 228.4L850.5 228.4L850 228.4L849.5 228.4L849 228.4L848.5 228.4L848 230.5L847.5 231.1L847 232.5L846.5 234L846 234L845.5 234.8L845 235L844.5 235.7L844 235.1L843.5 235.4L843 235.9L842.5 236.2L842 237.1L841.5 236.1L841 237.1L840.5 236L840 236.5L839.5 236.8L839 237L838.5 237.1L838 236.5L837.5 236.8L837 236.7L836.5 237L836 236.4L835.5 236.2L835 239.6L834.5 228.4L834 228.4Z" fill="#7fa8dc"/>
<path d="M831.8 171L835.8 171L833.8 174Z M831.8 242.5L835.8 242.5L833.8 239.5Z" fill="#151515"/>
<text x="317" y="180.8" font-size="8.8" font-weight="bold" fill="#e9f0fa">贝司</text>
<text x="1133.8" y="180.8" font-size="8.8" font-weight="bold" fill="#e9f0fa">贝司</text>
<g fill="none" stroke="#e8eef8" stroke-width="1"><circle cx="345.3" cy="178.7" r="3.6"/><circle cx="349.7" cy="178.7" r="3.6"/></g>
<g fill="none" stroke="#e8eef8" stroke-width="1"><circle cx="1159.3" cy="178.7" r="3.6"/><circle cx="1163.7" cy="178.7" r="3.6"/></g>
<rect x="442.5" y="244.5" width="522.7" height="72.7" rx="3.5" fill="#151515"/>
<rect x="443.0" y="245.0" width="521.7" height="71.7" rx="3" fill="#1da232"/>
<rect x="443.5" y="269.8" width="89.8" height="2.2" fill="#c8eec0"/>
<rect x="704.3" y="269.8" width="89.8" height="2.2" fill="#62cf70"/>
<rect x="540.0" y="269.8" width="2.5" height="2.2" fill="#c8eec0"/>
<rect x="800.8" y="269.8" width="2.5" height="2.2" fill="#62cf70"/>
<rect x="556.7" y="269.8" width="7.2" height="2.2" fill="#c8eec0"/>
<rect x="817.5" y="269.8" width="7.2" height="2.2" fill="#62cf70"/>
<rect x="443.5" y="275.1" width="88.5" height="2.2" fill="#c8eec0"/>
<rect x="704.3" y="275.1" width="88.5" height="2.2" fill="#62cf70"/>
<rect x="548.3" y="275.1" width="10.0" height="2.2" fill="#c8eec0"/>
<rect x="809.1" y="275.1" width="10.0" height="2.2" fill="#62cf70"/>
<rect x="443.5" y="279.2" width="1.5" height="2.2" fill="#c8eec0"/>
<rect x="704.3" y="279.2" width="1.5" height="2.2" fill="#62cf70"/>
<rect x="540.0" y="279.2" width="2.5" height="2.2" fill="#c8eec0"/>
<rect x="800.8" y="279.2" width="2.5" height="2.2" fill="#62cf70"/>
<rect x="475.0" y="283.1" width="37.8" height="2.2" fill="#c8eec0"/>
<rect x="735.8" y="283.1" width="37.8" height="2.2" fill="#62cf70"/>
<rect x="532.0" y="283.1" width="8.9" height="2.2" fill="#c8eec0"/>
<rect x="792.8" y="283.1" width="8.9" height="2.2" fill="#62cf70"/>
<rect x="565.0" y="297.6" width="6.0" height="2.2" fill="#c8eec0"/>
<rect x="825.8" y="297.6" width="6.0" height="2.2" fill="#62cf70"/>
<rect x="443.5" y="307.2" width="120.4" height="2.2" fill="#c8eec0"/>
<rect x="704.3" y="307.2" width="120.4" height="2.2" fill="#62cf70"/>
<rect x="573.0" y="263.1" width="83.2" height="2.2" fill="#c8eec0"/>
<rect x="833.8" y="263.1" width="83.2" height="2.2" fill="#62cf70"/>
<rect x="670.0" y="262.4" width="11.0" height="2.2" fill="#c8eec0"/>
<rect x="930.8" y="262.4" width="11.0" height="2.2" fill="#62cf70"/>
<rect x="681.0" y="263.7" width="10.0" height="2.2" fill="#c8eec0"/>
<rect x="941.8" y="263.7" width="10.0" height="2.2" fill="#62cf70"/>
<rect x="573.0" y="273.4" width="69.0" height="2.2" fill="#c8eec0"/>
<rect x="833.8" y="273.4" width="69.0" height="2.2" fill="#62cf70"/>
<rect x="654.5" y="273.4" width="26.5" height="2.2" fill="#c8eec0"/>
<rect x="915.3" y="273.4" width="26.5" height="2.2" fill="#62cf70"/>
<rect x="687.0" y="273.4" width="15.0" height="2.2" fill="#c8eec0"/>
<rect x="947.8" y="273.4" width="15.0" height="2.2" fill="#62cf70"/>
<rect x="573.0" y="278.9" width="69.0" height="2.2" fill="#c8eec0"/>
<rect x="833.8" y="278.9" width="69.0" height="2.2" fill="#62cf70"/>
<rect x="646.0" y="278.9" width="19.8" height="2.2" fill="#c8eec0"/>
<rect x="906.8" y="278.9" width="19.8" height="2.2" fill="#62cf70"/>
<rect x="670.0" y="278.9" width="20.0" height="2.2" fill="#c8eec0"/>
<rect x="930.8" y="278.9" width="20.0" height="2.2" fill="#62cf70"/>
<rect x="573.0" y="286.9" width="59.0" height="2.2" fill="#c8eec0"/>
<rect x="833.8" y="286.9" width="59.0" height="2.2" fill="#62cf70"/>
<rect x="638.0" y="286.9" width="21.0" height="2.2" fill="#c8eec0"/>
<rect x="898.8" y="286.9" width="21.0" height="2.2" fill="#62cf70"/>
<rect x="662.5" y="286.9" width="31.0" height="2.2" fill="#c8eec0"/>
<rect x="923.3" y="286.9" width="31.0" height="2.2" fill="#62cf70"/>
<rect x="573.0" y="311.9" width="130.0" height="2.2" fill="#c8eec0"/>
<rect x="833.8" y="311.9" width="129.7" height="2.2" fill="#62cf70"/>
<path d="M701.5 245L705.5 245L703.5 248Z M701.5 316.7L705.5 316.7L703.5 313.7Z" fill="#151515"/>
<path d="M447 251.0L449.5 248.5L452 251.0M447 254.0L449.5 256.5L452 254.0" fill="none" stroke="#eaf5ea" stroke-width="1"/>
<text x="454" y="255" font-size="8.8" font-weight="bold" fill="#e6f4e6">钢琴</text>
<rect x="312.5" y="319.4" width="988.0" height="71.5" rx="3.5" fill="#151515"/>
<rect x="313.0" y="319.9" width="987.0" height="70.5" rx="3" fill="#1da232"/>
<rect x="412.3" y="333" width="1" height="57" fill="#118a25"/>
<rect x="933.9000000000001" y="333" width="1" height="57" fill="#118a25"/>
<rect x="641.3" y="333" width="1" height="57" fill="#118a25"/>
<rect x="1162.9" y="333" width="1" height="57" fill="#118a25"/>
<rect x="805.75" y="333" width="1" height="57" fill="#118a25"/>
<rect x="1327.35" y="333" width="1" height="57" fill="#118a25"/>
<rect x="313.0" y="335.8" width="10.9" height="2.2" fill="#c8eec0"/>
<rect x="834.6" y="335.8" width="10.9" height="2.2" fill="#62cf70"/>
<rect x="328.9" y="335.8" width="95.5" height="2.2" fill="#c8eec0"/>
<rect x="850.5" y="335.8" width="95.5" height="2.2" fill="#62cf70"/>
<rect x="320.0" y="341.9" width="8.0" height="2.2" fill="#c8eec0"/>
<rect x="841.6" y="341.9" width="8.0" height="2.2" fill="#62cf70"/>
<rect x="328.0" y="342.9" width="4.0" height="2.2" fill="#c8eec0"/>
<rect x="849.6" y="342.9" width="4.0" height="2.2" fill="#62cf70"/>
<rect x="332.0" y="341.9" width="91.0" height="2.2" fill="#c8eec0"/>
<rect x="853.6" y="341.9" width="91.0" height="2.2" fill="#62cf70"/>
<rect x="313.0" y="348.6" width="3.7" height="2.2" fill="#c8eec0"/>
<rect x="834.6" y="348.6" width="3.7" height="2.2" fill="#62cf70"/>
<rect x="313.0" y="359.7" width="110.0" height="2.2" fill="#c8eec0"/>
<rect x="834.6" y="359.7" width="110.0" height="2.2" fill="#62cf70"/>
<rect x="313.0" y="368.3" width="108.3" height="2.2" fill="#c8eec0"/>
<rect x="834.6" y="368.3" width="108.3" height="2.2" fill="#62cf70"/>
<rect x="313.0" y="374.7" width="111.4" height="2.2" fill="#c8eec0"/>
<rect x="834.6" y="374.7" width="111.4" height="2.2" fill="#62cf70"/>
<rect x="313.0" y="383.5" width="114.3" height="2.2" fill="#c8eec0"/>
<rect x="834.6" y="383.5" width="114.3" height="2.2" fill="#62cf70"/>
<rect x="442.5" y="335.8" width="21.0" height="2.2" fill="#c8eec0"/>
<rect x="964.1" y="335.8" width="21.0" height="2.2" fill="#62cf70"/>
<rect x="515.5" y="337.2" width="5.5" height="2.2" fill="#c8eec0"/>
<rect x="1037.1" y="337.2" width="5.5" height="2.2" fill="#62cf70"/>
<rect x="540.0" y="337.2" width="16.5" height="2.2" fill="#c8eec0"/>
<rect x="1061.6" y="337.2" width="16.5" height="2.2" fill="#62cf70"/>
<rect x="565.0" y="337.2" width="5.5" height="2.2" fill="#c8eec0"/>
<rect x="1086.6" y="337.2" width="5.5" height="2.2" fill="#62cf70"/>
<rect x="580.5" y="335.8" width="5.0" height="2.2" fill="#c8eec0"/>
<rect x="1102.1" y="335.8" width="5.0" height="2.2" fill="#62cf70"/>
<rect x="442.5" y="343.5" width="15.0" height="2.2" fill="#c8eec0"/>
<rect x="964.1" y="343.5" width="15.0" height="2.2" fill="#62cf70"/>
<rect x="442.5" y="341.9" width="3.5" height="2.2" fill="#c8eec0"/>
<rect x="964.1" y="341.9" width="3.5" height="2.2" fill="#62cf70"/>
<rect x="500.0" y="342.1" width="5.0" height="2.2" fill="#c8eec0"/>
<rect x="1021.6" y="342.1" width="5.0" height="2.2" fill="#62cf70"/>
<rect x="459.0" y="348.4" width="4.0" height="2.2" fill="#c8eec0"/>
<rect x="980.6" y="348.4" width="4.0" height="2.2" fill="#62cf70"/>
<rect x="484.0" y="348.4" width="4.0" height="2.2" fill="#c8eec0"/>
<rect x="1005.6" y="348.4" width="4.0" height="2.2" fill="#62cf70"/>
<rect x="475.0" y="352.5" width="7.0" height="2.2" fill="#c8eec0"/>
<rect x="996.6" y="352.5" width="7.0" height="2.2" fill="#62cf70"/>
<rect x="442.5" y="359.7" width="81.0" height="2.2" fill="#c8eec0"/>
<rect x="964.1" y="359.7" width="81.0" height="2.2" fill="#62cf70"/>
<rect x="532.0" y="359.7" width="19.0" height="2.2" fill="#c8eec0"/>
<rect x="1053.6" y="359.7" width="19.0" height="2.2" fill="#62cf70"/>
<rect x="442.5" y="368.3" width="109.5" height="2.2" fill="#c8eec0"/>
<rect x="964.1" y="368.3" width="109.5" height="2.2" fill="#62cf70"/>
<rect x="442.5" y="374.7" width="109.5" height="2.2" fill="#c8eec0"/>
<rect x="964.1" y="374.7" width="109.5" height="2.2" fill="#62cf70"/>
<rect x="434.5" y="383.5" width="124.5" height="2.2" fill="#c8eec0"/>
<rect x="956.1" y="383.5" width="124.5" height="2.2" fill="#62cf70"/>
<rect x="597.3" y="348.6" width="94.7" height="2.2" fill="#c8eec0"/>
<rect x="1118.9" y="348.6" width="94.7" height="2.2" fill="#62cf70"/>
<rect x="573.5" y="363.7" width="115.2" height="2.2" fill="#c8eec0"/>
<rect x="1095.1" y="363.7" width="115.2" height="2.2" fill="#62cf70"/>
<rect x="573.5" y="370.0" width="237.0" height="2.2" fill="#c8eec0"/>
<rect x="1095.1" y="370.0" width="237.0" height="2.2" fill="#62cf70"/>
<rect x="573.5" y="378.6" width="241.5" height="2.2" fill="#c8eec0"/>
<rect x="1095.1" y="378.6" width="241.5" height="2.2" fill="#62cf70"/>
<rect x="573.5" y="385.9" width="244.0" height="2.2" fill="#c8eec0"/>
<rect x="1095.1" y="385.9" width="244.0" height="2.2" fill="#62cf70"/>
<rect x="703.0" y="337.4" width="5.5" height="2.2" fill="#c8eec0"/>
<rect x="1224.6" y="337.4" width="5.5" height="2.2" fill="#62cf70"/>
<rect x="711.9" y="335.8" width="5.5" height="2.2" fill="#c8eec0"/>
<rect x="1233.5" y="335.8" width="5.5" height="2.2" fill="#62cf70"/>
<rect x="744.0" y="343.7" width="4.8" height="2.2" fill="#c8eec0"/>
<rect x="1265.6" y="343.7" width="4.8" height="2.2" fill="#62cf70"/>
<rect x="727.5" y="348.5" width="5.0" height="2.2" fill="#c8eec0"/>
<rect x="1249.1" y="348.5" width="5.0" height="2.2" fill="#62cf70"/>
<rect x="777.0" y="352.5" width="6.5" height="2.2" fill="#c8eec0"/>
<rect x="1298.6" y="352.5" width="6.5" height="2.2" fill="#62cf70"/>
<rect x="760.5" y="359.7" width="15.0" height="2.2" fill="#c8eec0"/>
<rect x="1282.1" y="359.7" width="15.0" height="2.2" fill="#62cf70"/>
<rect x="695.0" y="363.7" width="81.0" height="2.2" fill="#c8eec0"/>
<rect x="1216.6" y="363.7" width="81.0" height="2.2" fill="#62cf70"/>
<rect x="785.0" y="363.7" width="34.5" height="2.2" fill="#c8eec0"/>
<rect x="1306.6" y="363.7" width="34.5" height="2.2" fill="#62cf70"/>
<path d="M831.8 319.9L835.8 319.9L833.8 322.9Z M831.8 390.4L835.8 390.4L833.8 387.4Z" fill="#151515"/>
<path d="M317 325.0L319.5 322.5L322 325.0M317 328.0L319.5 330.5L322 328.0" fill="none" stroke="#eaf5ea" stroke-width="1"/>
<text x="324" y="329" font-size="8.8" font-weight="bold" fill="#e6f4e6">合成器</text>
<text x="1141" y="329" font-size="8.8" font-weight="bold" fill="#e6f4e6">合成器</text>
<rect x="475.1" y="392.6" width="825.4" height="73.2" rx="3.5" fill="#151515"/>
<rect x="475.6" y="393.1" width="824.4" height="72.2" rx="3" fill="#1da232"/>
<rect x="475.6" y="431.1" width="3.8" height="2.2" fill="#c8eec0"/>
<rect x="491.7" y="431.1" width="3.9" height="2.2" fill="#c8eec0"/>
<rect x="507.2" y="431.9" width="13.8" height="2.2" fill="#c8eec0"/>
<rect x="524.0" y="433.4" width="4.0" height="2.2" fill="#c8eec0"/>
<rect x="532.0" y="431.1" width="5.8" height="2.2" fill="#c8eec0"/>
<rect x="548.0" y="431.1" width="4.8" height="2.2" fill="#c8eec0"/>
<rect x="564.4" y="431.1" width="3.9" height="2.2" fill="#c8eec0"/>
<rect x="573.0" y="431.9" width="13.7" height="2.2" fill="#c8eec0"/>
<rect x="589.4" y="433.4" width="5.0" height="2.2" fill="#c8eec0"/>
<rect x="606.0" y="431.1" width="3.8" height="2.2" fill="#62cf70"/>
<rect x="622.1" y="431.1" width="3.9" height="2.2" fill="#62cf70"/>
<rect x="637.6" y="431.9" width="13.8" height="2.2" fill="#62cf70"/>
<rect x="654.4" y="433.4" width="4.0" height="2.2" fill="#62cf70"/>
<rect x="662.4" y="431.1" width="5.8" height="2.2" fill="#62cf70"/>
<rect x="678.4" y="431.1" width="4.8" height="2.2" fill="#62cf70"/>
<rect x="694.8" y="431.1" width="3.9" height="2.2" fill="#62cf70"/>
<rect x="703.4" y="431.9" width="13.7" height="2.2" fill="#62cf70"/>
<rect x="719.8" y="433.4" width="5.0" height="2.2" fill="#62cf70"/>
<path d="M604.0 393.1L608.0 393.1L606.0 396.1Z M604.0 465.3L608.0 465.3L606.0 462.3Z" fill="#151515"/>
<rect x="736.4" y="431.1" width="3.8" height="2.2" fill="#62cf70"/>
<rect x="752.5" y="431.1" width="3.9" height="2.2" fill="#62cf70"/>
<rect x="768.0" y="431.9" width="13.8" height="2.2" fill="#62cf70"/>
<rect x="784.8" y="433.4" width="4.0" height="2.2" fill="#62cf70"/>
<rect x="792.8" y="431.1" width="5.8" height="2.2" fill="#62cf70"/>
<rect x="808.8" y="431.1" width="4.8" height="2.2" fill="#62cf70"/>
<rect x="825.2" y="431.1" width="3.9" height="2.2" fill="#62cf70"/>
<rect x="833.8" y="431.9" width="13.7" height="2.2" fill="#62cf70"/>
<rect x="850.2" y="433.4" width="5.0" height="2.2" fill="#62cf70"/>
<path d="M734.4 393.1L738.4 393.1L736.4 396.1Z M734.4 465.3L738.4 465.3L736.4 462.3Z" fill="#151515"/>
<rect x="866.8" y="431.1" width="3.8" height="2.2" fill="#62cf70"/>
<rect x="882.9" y="431.1" width="3.9" height="2.2" fill="#62cf70"/>
<rect x="898.4" y="431.9" width="13.8" height="2.2" fill="#62cf70"/>
<rect x="915.2" y="433.4" width="4.0" height="2.2" fill="#62cf70"/>
<rect x="923.2" y="431.1" width="5.8" height="2.2" fill="#62cf70"/>
<rect x="939.2" y="431.1" width="4.8" height="2.2" fill="#62cf70"/>
<rect x="955.6" y="431.1" width="3.9" height="2.2" fill="#62cf70"/>
<rect x="964.2" y="431.9" width="13.7" height="2.2" fill="#62cf70"/>
<rect x="980.6" y="433.4" width="5.0" height="2.2" fill="#62cf70"/>
<path d="M864.8 393.1L868.8 393.1L866.8 396.1Z M864.8 465.3L868.8 465.3L866.8 462.3Z" fill="#151515"/>
<rect x="997.2" y="431.1" width="3.8" height="2.2" fill="#62cf70"/>
<rect x="1013.3" y="431.1" width="3.9" height="2.2" fill="#62cf70"/>
<rect x="1028.8" y="431.9" width="13.8" height="2.2" fill="#62cf70"/>
<rect x="1045.6" y="433.4" width="4.0" height="2.2" fill="#62cf70"/>
<rect x="1053.6" y="431.1" width="5.8" height="2.2" fill="#62cf70"/>
<rect x="1069.6" y="431.1" width="4.8" height="2.2" fill="#62cf70"/>
<rect x="1086.0" y="431.1" width="3.9" height="2.2" fill="#62cf70"/>
<rect x="1094.6" y="431.9" width="13.7" height="2.2" fill="#62cf70"/>
<rect x="1111.0" y="433.4" width="5.0" height="2.2" fill="#62cf70"/>
<path d="M995.2 393.1L999.2 393.1L997.2 396.1Z M995.2 465.3L999.2 465.3L997.2 462.3Z" fill="#151515"/>
<rect x="1127.6" y="431.1" width="3.8" height="2.2" fill="#62cf70"/>
<rect x="1143.7" y="431.1" width="3.9" height="2.2" fill="#62cf70"/>
<rect x="1159.2" y="431.9" width="13.8" height="2.2" fill="#62cf70"/>
<rect x="1176.0" y="433.4" width="4.0" height="2.2" fill="#62cf70"/>
<rect x="1184.0" y="431.1" width="5.8" height="2.2" fill="#62cf70"/>
<rect x="1200.0" y="431.1" width="4.8" height="2.2" fill="#62cf70"/>
<rect x="1216.4" y="431.1" width="3.9" height="2.2" fill="#62cf70"/>
<rect x="1225.0" y="431.9" width="13.7" height="2.2" fill="#62cf70"/>
<rect x="1241.4" y="433.4" width="5.0" height="2.2" fill="#62cf70"/>
<path d="M1125.6 393.1L1129.6 393.1L1127.6 396.1Z M1125.6 465.3L1129.6 465.3L1127.6 462.3Z" fill="#151515"/>
<path d="M480 398.0L482.5 395.5L485 398.0M480 401.0L482.5 403.5L485 401.0" fill="none" stroke="#eaf5ea" stroke-width="1"/>
<text x="487" y="402.5" font-size="8.8" font-weight="bold" fill="#e6f4e6">弦乐章节</text>
<rect x="312.0" y="467.3" width="988.5" height="72.1" rx="3.5" fill="#151515"/>
<rect x="312.5" y="467.8" width="987.5" height="71.1" rx="3" fill="#3770aa"/>
<clipPath id="gc"><rect x="312.5" y="481" width="895" height="57"/></clipPath>
<path clip-path="url(#gc)" d="M313 484.4L313.5 484.4L314 486.1L314.5 485.3L315 486.3L315.5 487.6L316 486.7L316.5 486.5L317 487.8L317.5 486.5L318 486.9L318.5 488.7L319 487.9L319.5 487L320 488.7L320.5 488.9L321 488.3L321.5 488.6L322 489L322.5 487.7L323 487.9L323.5 487.6L324 488.1L324.5 488.5L325 489.5L325.5 488.1L326 488L326.5 489.1L327 489.1L327.5 488L328 490L328.5 488.7L329 489.2L329.5 489.1L330 489.8L330.5 489.2L331 490L331.5 489.7L332 489.8L332.5 489.9L333 490.5L333.5 489.1L334 489.3L334.5 489L335 490L335.5 488.9L336 489.1L336.5 490.2L337 489.3L337.5 490.9L338 489.6L338.5 489.5L339 490.7L339.5 490.4L340 491.1L340.5 489.7L341 490L341.5 490.9L342 490.5L342.5 491.4L343 490.1L343.5 490L344 490.9L344.5 490.2L345 490.8L345.5 490.5L346 490.7L346.5 491.8L347 490.8L347.5 491L348 491.3L348.5 490.6L349 491.9L349.5 492L350 491.9L350.5 491.2L351 491.4L351.5 491.6L352 492.1L352.5 491.8L353 491.6L353.5 491.5L354 491.5L354.5 492.5L355 492.5L355.5 492.4L356 492.3L356.5 492.3L357 492.2L357.5 491.7L358 492.2L358.5 491.8L359 492.2L359.5 492.1L360 492.6L360.5 492.5L361 487L361.5 487.1L362 488.8L362.5 489.5L363 489.9L363.5 488.8L364 489.3L364.5 489.5L365 489.8L365.5 490.2L366 491L366.5 490.7L367 489.8L367.5 490.5L368 490.7L368.5 490.4L369 491.4L369.5 490.7L370 490.1L370.5 490.6L371 490.6L371.5 490.6L372 491.4L372.5 491.2L373 490.6L373.5 490.4L374 491.5L374.5 491.4L375 491.2L375.5 491.6L376 491L376.5 492L377 491.2L377.5 486.5L378 486.9L378.5 486.8L379 488.5L379.5 489L380 489.1L380.5 489.2L381 488L381.5 489.2L382 489.7L382.5 489.6L383 490.1L383.5 490.5L384 488.8L384.5 490.7L385 490.8L385.5 489.6L386 491L386.5 490.9L387 490.3L387.5 490.5L388 489.8L388.5 490.3L389 491L389.5 490.4L390 490.1L390.5 489.9L391 491.5L391.5 491.5L392 490.4L392.5 491.4L393 490.5L393.5 490.9L394 490.6L394.5 491.5L395 491.5L395.5 490.7L396 492L396.5 491.2L397 491.8L397.5 492.2L398 491.4L398.5 492.1L399 491.2L399.5 491.9L400 491.6L400.5 492.4L401 492.3L401.5 488L402 488.5L402.5 488.7L403 490L403.5 489L404 489.5L404.5 489.4L405 490L405.5 489.3L406 489.5L406.5 489.8L407 490.6L407.5 490.2L408 490.2L408.5 489.8L409 489.9L409.5 489.7L410 490.1L410.5 490L411 491.4L411.5 491.2L412 490.1L412.5 491.3L413 490.8L413.5 491.5L414 491.2L414.5 490L415 490.1L415.5 491.4L416 490.9L416.5 490.3L417 490.6L417.5 490.9L418 490.9L418.5 490.8L419 491.6L419.5 490.7L420 490.5L420.5 490.1L421 491.1L421.5 490.6L422 490.8L422.5 491.4L423 490.6L423.5 491L424 491.2L424.5 491L425 491.2L425.5 490.8L426 490.4L426.5 481.7L427 483.4L427.5 484.1L428 485.1L428.5 487.3L429 486.7L429.5 486.8L430 487.5L430.5 488.7L431 488.4L431.5 489.2L432 489.2L432.5 489.3L433 489.9L433.5 488.9L434 490.2L434.5 489.2L435 489.2L435.5 489.8L436 488.9L436.5 489.6L437 490.2L437.5 489.5L438 490.1L438.5 490.6L439 491.1L439.5 490.3L440 490.1L440.5 491.1L441 491L441.5 490.7L442 491L442.5 489L443 489L443.5 490L444 489.5L444.5 489.8L445 490.3L445.5 489.7L446 490.4L446.5 490.7L447 489.8L447.5 490L448 491L448.5 490.4L449 490.4L449.5 491L450 489.4L450.5 490L451 489.3L451.5 489.3L452 489.8L452.5 490.8L453 489.9L453.5 490.4L454 491.1L454.5 491L455 489.7L455.5 490.9L456 491L456.5 490.4L457 490.5L457.5 490.5L458 490.1L458.5 490.2L459 490.9L459.5 490.7L460 491L460.5 490.5L461 491.3L461.5 489.7L462 490.1L462.5 490.1L463 490L463.5 490.7L464 490.3L464.5 490.1L465 490.8L465.5 489.9L466 490.2L466.5 484.6L467 485.2L467.5 485.6L468 487.4L468.5 488.3L469 487.8L469.5 488.8L470 488.3L470.5 488.2L471 488.2L471.5 488.2L472 488.8L472.5 488.4L473 489.6L473.5 489.9L474 489.8L474.5 490.6L475 489.8L475.5 490.6L476 490.6L476.5 490.2L477 489.4L477.5 490.1L478 490.7L478.5 489.5L479 489L479.5 489.7L480 489.6L480.5 490.8L481 489.2L481.5 489.8L482 490.5L482.5 491.1L483 490.8L483.5 490.7L484 489.6L484.5 490.1L485 489.5L485.5 490L486 489.8L486.5 489.5L487 490.8L487.5 490.5L488 489.7L488.5 489.9L489 490.7L489.5 490.5L490 489.5L490.5 489.6L491 490.5L491.5 489.9L492 490.3L492.5 488L493 488L493.5 488.8L494 489.7L494.5 490L495 489L495.5 490L496 489.5L496.5 490.7L497 489.1L497.5 489.9L498 489.9L498.5 490.3L499 490.9L499.5 489.9L500 491.2L500.5 491.1L501 490.8L501.5 490.8L502 491.3L502.5 491.4L503 491.2L503.5 491L504 490.2L504.5 490.8L505 490.5L505.5 490.7L506 490.8L506.5 490.7L507 491.3L507.5 490.2L508 490.4L508.5 490.7L509 490.7L509.5 491.1L510 491.5L510.5 491L511 491.8L511.5 490.5L512 491.2L512.5 491.3L513 490.7L513.5 491.8L514 491.5L514.5 491.2L515 491.2L515.5 487.4L516 488.4L516.5 488.4L517 488.3L517.5 488.7L518 489.5L518.5 490.6L519 490.2L519.5 490.3L520 490L520.5 490.9L521 490.8L521.5 491.1L522 491.2L522.5 490.4L523 491.5L523.5 490.3L524 490.4L524.5 491.5L525 490.5L525.5 491.8L526 491.6L526.5 490.9L527 491.3L527.5 491.4L528 491.7L528.5 491.7L529 491.5L529.5 491.5L530 491.3L530.5 491.4L531 491.1L531.5 491.1L532 491.5L532.5 491.7L533 491.8L533.5 491.7L534 491.2L534.5 491.1L535 491.8L535.5 492.3L536 491.5L536.5 491.8L537 491.4L537.5 491.5L538 491.5L538.5 492.1L539 491.4L539.5 492.1L540 491.7L540.5 486L541 487.7L541.5 487.2L542 487.1L542.5 487.9L543 489.1L543.5 489.5L544 490L544.5 488.8L545 489.5L545.5 489L546 490L546.5 489.7L547 489.7L547.5 489.5L548 490.4L548.5 491L549 491.1L549.5 490.2L550 490.5L550.5 490.3L551 490.1L551.5 491.5L552 491.3L552.5 490.3L553 490.5L553.5 491.1L554 491.3L554.5 491.2L555 491.9L555.5 491.8L556 491.2L556.5 491.6L557 491L557.5 491.3L558 491.2L558.5 491.1L559 493.5L559.5 493.5L560 493.8L560.5 493.3L561 493.5L561.5 493.3L562 493.4L562.5 493.4L563 493.6L563.5 493.7L564 493.5L564.5 493.8L565 493.8L565.5 493.6L566 493.6L566.5 493.8L567 493.7L567.5 493.4L568 493.8L568.5 493.6L569 493.8L569.5 493.6L570 493.5L570.5 493.8L571 493.9L571.5 493.8L572 493.9L572.5 493.9L573 493.9L573.5 493.9L574 487L574.5 487L575 487.9L575.5 488.2L576 489.4L576.5 488.8L577 488.7L577.5 489.1L578 489.6L578.5 489.7L579 489.6L579.5 489.3L580 490.9L580.5 489.3L581 490.4L581.5 489.5L582 491.2L582.5 490.4L583 491.2L583.5 490.1L584 491.1L584.5 490.7L585 490.6L585.5 490.6L586 490.1L586.5 490.7L587 490.9L587.5 490.1L588 490.3L588.5 490.7L589 490.9L589.5 491.6L590 490.8L590.5 490.9L591 491.2L591.5 490.5L592 491.8L592.5 491.8L593 491.7L593.5 491.6L594 491.8L594.5 490.9L595 491.9L595.5 491.4L596 491.9L596.5 491.9L597 491.3L597.5 491.9L598 490.8L598.5 491L599 490.7L599.5 491.3L600 491.1L600.5 491.3L601 490.9L601.5 492.1L602 491.8L602.5 491.3L603 491.6L603.5 491.9L604 491.8L604.5 492.2L605 491.6L605.5 492.3L606 491.5L606.5 491.6L607 492.4L607.5 492.2L608 491.6L608.5 491.5L609 491.6L609.5 492L610 491.6L610.5 491.9L611 492.3L611.5 492.6L612 492.5L612.5 492.6L613 492.1L613.5 492.7L614 492.2L614.5 491.8L615 492.4L615.5 492.5L616 492L616.5 492.6L617 492.5L617.5 492.5L618 492.7L618.5 492.3L619 492.7L619.5 492.8L620 492.9L620.5 492.6L621 492.3L621.5 487L622 487L622.5 488.6L623 487.8L623.5 488.3L624 489.9L624.5 489L625 490.3L625.5 488.6L626 490.6L626.5 490.6L627 489.8L627.5 489.1L628 490.6L628.5 489.9L629 490.4L629.5 489.3L630 489.4L630.5 490.9L631 489.6L631.5 490.2L632 489.4L632.5 491L633 489.6L633.5 491L634 490.6L634.5 490.3L635 490.4L635.5 490.3L636 490.6L636.5 490.5L637 490.7L637.5 490.5L638 490.3L638.5 486.1L639 486.5L639.5 488L640 488.1L640.5 486.6L641 488.3L641.5 488L642 489L642.5 487.7L643 488.3L643.5 489.8L644 488.4L644.5 488.7L645 490L645.5 490.1L646 490.4L646.5 489.6L647 490.3L647.5 490.8L648 489L648.5 489.6L649 490L649.5 489.3L650 490.5L650.5 489.7L651 489.9L651.5 490.6L652 490.6L652.5 491.3L653 491.4L653.5 490.7L654 490.8L654.5 490.6L655 491.4L655.5 491.1L656 491.5L656.5 491.5L657 491.7L657.5 492.4L658 491.4L658.5 492.6L659 491.7L659.5 492L660 492.8L660.5 492.9L661 492.6L661.5 487.5L662 488.7L662.5 489.5L663 489.5L663.5 489.3L664 490.2L664.5 489.4L665 490L665.5 489.7L666 490.7L666.5 490.9L667 490.6L667.5 490.2L668 491.3L668.5 491.6L669 491.5L669.5 490.6L670 490.5L670.5 490.7L671 491.5L671.5 491L672 492L672.5 490.8L673 490.7L673.5 490.6L674 491.2L674.5 490.9L675 491.5L675.5 491.8L676 490.9L676.5 491L677 491.7L677.5 491.1L678 492L678.5 491.6L679 492.2L679.5 492L680 491.9L680.5 491.4L681 492.2L681.5 491.9L682 492.3L682.5 491.6L683 491.9L683.5 491.8L684 492.4L684.5 491.3L685 491.9L685.5 492.3L686 491.6L686.5 492.3L687 491.4L687.5 481.7L688 485L688.5 486.2L689 486.6L689.5 486.3L690 487.2L690.5 488.4L691 488.8L691.5 488.6L692 488.8L692.5 489.3L693 489.8L693.5 490.1L694 489.8L694.5 490.2L695 491.5L695.5 491.5L696 491L696.5 491.6L697 490.7L697.5 492L698 491L698.5 492.1L699 491.5L699.5 492.3L700 491.8L700.5 491.6L701 491.7L701.5 492.3L702 492.1L702.5 491.9L703 492.4L703.5 488.4L704 489.8L704.5 489.7L705 488.9L705.5 490.2L706 489.2L706.5 490.5L707 489.5L707.5 490.3L708 490.4L708.5 490.6L709 490.7L709.5 490L710 490L710.5 490.7L711 490.6L711.5 491.3L712 491.5L712.5 490.9L713 490.7L713.5 491.5L714 490.7L714.5 491L715 491.9L715.5 490.8L716 491.1L716.5 491.5L717 491.5L717.5 491L718 492L718.5 490.9L719 491.5L719.5 491.3L720 491.2L720.5 492.3L721 491.7L721.5 491.8L722 492L722.5 491.7L723 491.6L723.5 492.4L724 491.9L724.5 492.2L725 492.1L725.5 491.9L726 492.6L726.5 492L727 491.9L727.5 493L728 490L728.5 490L729 490.2L729.5 491.4L730 491.6L730.5 490.8L731 491L731.5 491.4L732 492L732.5 492.2L733 491.7L733.5 492.2L734 491.9L734.5 492L735 491.7L735.5 491.7L736 492.6L736.5 492.4L737 492.1L737.5 492.5L738 492.1L738.5 492.1L739 492.2L739.5 492.4L740 492.1L740.5 492.3L741 492.3L741.5 492.9L742 492.4L742.5 492.9L743 492.3L743.5 493L744 492.9L744.5 492.8L745 492.9L745.5 492.9L746 493.2L746.5 493.4L747 493.2L747.5 493L748 493L748.5 492.9L749 493.4L749.5 493.5L750 493.4L750.5 493.3L751 493.7L751.5 493.4L752 486.8L752.5 486.8L753 486.8L753.5 488.3L754 488.8L754.5 488.2L755 489.8L755.5 489.4L756 490.2L756.5 488.8L757 489.3L757.5 489.4L758 490.3L758.5 490.6L759 489.1L759.5 489.2L760 489.8L760.5 490L761 490.4L761.5 489.8L762 491.4L762.5 490.6L763 491.5L763.5 490.5L764 491.2L764.5 491.7L765 491.5L765.5 491.5L766 491.2L766.5 491.3L767 491.4L767.5 491.9L768 491.3L768.5 491.2L769 491.8L769.5 491.6L770 492.1L770.5 491.7L771 491.7L771.5 491.8L772 492.5L772.5 492.4L773 492.5L773.5 492.9L774 492.1L774.5 492.7L775 492.8L775.5 493L776 492.7L776.5 492.9L777 487L777.5 486.9L778 487.2L778.5 489.1L779 488.3L779.5 488.5L780 488.4L780.5 489.8L781 489.8L781.5 488.7L782 490L782.5 489.5L783 489.9L783.5 490.7L784 490L784.5 489.7L785 491L785.5 490.3L786 490.2L786.5 491.2L787 490.2L787.5 491.3L788 489.9L788.5 490L789 491.4L789.5 490.9L790 491L790.5 491.4L791 491.5L791.5 491.8L792 491.9L792.5 492L793 491.5L793.5 491.6L794 491.2L794.5 491.2L795 491.5L795.5 492.2L796 491.8L796.5 491.3L797 491.5L797.5 492.5L798 492.5L798.5 492.2L799 491.8L799.5 491.9L800 492.8L800.5 492.5L801 487L801.5 488.5L802 488.9L802.5 488.5L803 488.7L803.5 488.3L804 489.1L804.5 489.8L805 490.7L805.5 490.7L806 490.8L806.5 490.1L807 491L807.5 490.6L808 491.2L808.5 490L809 490.2L809.5 490.2L810 490.1L810.5 490L811 490.7L811.5 491.5L812 490.7L812.5 491.5L813 491.6L813.5 491.6L814 490.7L814.5 490.9L815 490.6L815.5 491.2L816 491.6L816.5 491.2L817 491.3L817.5 491L818 486.5L818.5 486.7L819 487.2L819.5 488.2L820 488.4L820.5 489.2L821 488.6L821.5 490.1L822 490.1L822.5 489.9L823 490.2L823.5 490.3L824 489.8L824.5 489.6L825 490L825.5 490.3L826 489.9L826.5 489.9L827 491L827.5 490.4L828 491.2L828.5 490.9L829 491L829.5 491.8L830 491L830.5 491L831 491.3L831.5 490.8L832 491.2L832.5 491.6L833 491.4L833.5 492L834 490.8L834 499.3L833.5 498.8L833 498.8L832.5 498.6L832 499.4L831.5 499L831 499.7L830.5 499.4L830 499.4L829.5 498.7L829 499.4L828.5 499L828 499.1L827.5 499.3L827 498.9L826.5 498.9L826 499.7L825.5 499.7L825 500.1L824.5 499.4L824 500.7L823.5 500.6L823 499.8L822.5 499.9L822 500.2L821.5 501.6L821 500.5L820.5 501.7L820 501.5L819.5 501.6L819 502.2L818.5 503.2L818 503.9L817.5 498.1L817 498.5L816.5 499.4L816 498.4L815.5 498.2L815 499L814.5 498.9L814 499.6L813.5 498.4L813 498.8L812.5 499.2L812 498.8L811.5 498.6L811 499.9L810.5 499.3L810 499.3L809.5 500L809 498.9L808.5 499L808 499.3L807.5 499.2L807 499.9L806.5 499.2L806 500.4L805.5 500.9L805 500.7L804.5 500.5L804 500.4L803.5 500.1L803 502.1L802.5 500.8L802 502.3L801.5 502.7L801 503.4L800.5 497.2L800 497.3L799.5 498.3L799 497.4L798.5 498.3L798 498L797.5 498.2L797 498.3L796.5 497.9L796 498.3L795.5 498.4L795 498.4L794.5 498.7L794 498.5L793.5 499.2L793 499.4L792.5 499.2L792 499.1L791.5 498.4L791 499.6L790.5 499.7L790 499.8L789.5 498.7L789 498.9L788.5 500.3L788 500L787.5 499.9L787 499.3L786.5 500.5L786 499.7L785.5 500.5L785 500.5L784.5 499.6L784 499.5L783.5 499.7L783 499.7L782.5 501.5L782 500.8L781.5 501.8L781 500.7L780.5 500.8L780 502L779.5 502.5L779 501L778.5 501.8L778 501.7L777.5 501.8L777 503.4L776.5 497L776 497.2L775.5 497.6L775 497.4L774.5 497.5L774 497.7L773.5 497.4L773 497.4L772.5 497.3L772 498.1L771.5 498L771 498.3L770.5 498L770 498L769.5 498L769 498.9L768.5 498.1L768 498.3L767.5 498.5L767 498.9L766.5 499L766 498.2L765.5 498.6L765 498.4L764.5 499.8L764 498.5L763.5 499.5L763 499.2L762.5 499.8L762 499.8L761.5 499L761 499.7L760.5 499.4L760 499.3L759.5 500.5L759 499.4L758.5 499.6L758 500.1L757.5 500.2L757 500.2L756.5 501.6L756 501.3L755.5 500.4L755 501.3L754.5 501.6L754 501.3L753.5 502.3L753 502.7L752.5 503.6L752 503.6L751.5 496.6L751 496.5L750.5 496.6L750 496.9L749.5 496.5L749 497L748.5 496.9L748 497.3L747.5 497.3L747 496.8L746.5 497.2L746 496.8L745.5 497.5L745 497.5L744.5 497.1L744 497L743.5 497.3L743 497.8L742.5 497.6L742 497.4L741.5 497.6L741 497.6L740.5 497.3L740 497.6L739.5 497.8L739 498L738.5 497.4L738 498.4L737.5 497.5L737 497.9L736.5 497.8L736 497.7L735.5 498.1L735 498.5L734.5 498.5L734 498.7L733.5 497.9L733 498L732.5 498.3L732 498.5L731.5 498.1L731 498.8L730.5 499.5L730 499.7L729.5 498.9L729 499.6L728.5 500.5L728 500.2L727.5 497.8L727 497.8L726.5 497.9L726 498L725.5 498.1L725 497.5L724.5 498.4L724 497.6L723.5 498.5L723 498.2L722.5 498.4L722 498.3L721.5 498.1L721 498.9L720.5 498.8L720 498.6L719.5 498.8L719 498.2L718.5 498.3L718 498.5L717.5 498.8L717 499.3L716.5 499.4L716 498.8L715.5 498.5L715 498.6L714.5 499.3L714 498.5L713.5 499.1L713 499.9L712.5 500.1L712 499.3L711.5 499.1L711 500L710.5 498.9L710 499.5L709.5 500.4L709 499.8L708.5 500.7L708 500.6L707.5 499.4L707 500.1L706.5 500.7L706 500.4L705.5 500.5L705 501.9L704.5 501.6L704 501.9L703.5 501.9L703 498L702.5 497.7L702 497.5L701.5 498.1L701 498.4L700.5 497.7L700 498.1L699.5 497.9L699 497.9L698.5 498.1L698 499.2L697.5 498.2L697 499.4L696.5 499.4L696 499.7L695.5 498.6L695 499.5L694.5 499.1L694 500.5L693.5 499.8L693 500.9L692.5 499.8L692 500.4L691.5 500.9L691 501L690.5 502.4L690 502L689.5 503.2L689 504.3L688.5 506.1L688 506.5L687.5 509L687 498.5L686.5 498.2L686 498.3L685.5 498.1L685 498.7L684.5 497.8L684 497.7L683.5 497.8L683 497.8L682.5 498.7L682 497.9L681.5 499L681 497.9L680.5 499L680 498.1L679.5 498.8L679 498.2L678.5 499.3L678 498L677.5 498L677 498.1L676.5 498.5L676 499.2L675.5 498.5L675 499.2L674.5 498.7L674 499.3L673.5 498.8L673 498.4L672.5 498.2L672 498.3L671.5 499.6L671 499L670.5 498.7L670 499.7L669.5 498.6L669 498.9L668.5 499L668 499.1L667.5 499.8L667 500.1L666.5 500.1L666 499.9L665.5 500.1L665 500.7L664.5 501L664 501.1L663.5 500.7L663 501.8L662.5 502.1L662 502.8L661.5 502.9L661 497.3L660.5 497.2L660 497.8L659.5 498.1L659 497.4L658.5 498L658 498.1L657.5 498.8L657 499L656.5 498.1L656 498.5L655.5 498.2L655 498.7L654.5 498.5L654 498.8L653.5 499L653 498.6L652.5 499.1L652 498.7L651.5 499.6L651 499.9L650.5 499.1L650 499.8L649.5 500.6L649 499.7L648.5 500.1L648 499.4L647.5 499.7L647 499.7L646.5 500.3L646 500.8L645.5 500.6L645 501.1L644.5 501.1L644 502.2L643.5 500.6L643 502.1L642.5 501.4L642 501.5L641.5 503.2L641 502.2L640.5 502.3L640 503.4L639.5 504.1L639 503.6L638.5 504.3L638 500.2L637.5 500.6L637 499.3L636.5 499.5L636 500.4L635.5 500.5L635 499L634.5 500.5L634 500.3L633.5 500.8L633 500.5L632.5 499.4L632 499.9L631.5 499.9L631 499.5L630.5 499.1L630 501L629.5 501L629 500.4L628.5 500.1L628 500.8L627.5 499.6L627 500.6L626.5 501.1L626 500.5L625.5 500.3L625 499.8L624.5 501.4L624 500.6L623.5 501L623 502.6L622.5 501.9L622 502.3L621.5 503.4L621 497.7L620.5 497.6L620 497.6L619.5 497.6L619 497.7L618.5 497.5L618 497.5L617.5 497.2L617 497.5L616.5 497.8L616 497.3L615.5 497.5L615 497.6L614.5 497.7L614 497.5L613.5 497.8L613 497.8L612.5 498.4L612 498.2L611.5 497.8L611 498L610.5 498.4L610 498.3L609.5 498L609 497.7L608.5 498L608 498.7L607.5 498.2L607 498.7L606.5 498.3L606 498.1L605.5 498.5L605 498.3L604.5 498.9L604 499.1L603.5 498.7L603 498.4L602.5 498.2L602 498.4L601.5 498.2L601 499L600.5 498.8L600 498.4L599.5 498.5L599 498.8L598.5 499.3L598 498.4L597.5 499.1L597 499L596.5 499.5L596 498.2L595.5 499.1L595 499.2L594.5 499.7L594 498.6L593.5 499.4L593 499.5L592.5 498.8L592 499.4L591.5 499.4L591 499.5L590.5 499.7L590 499.8L589.5 499.1L589 500.2L588.5 500.2L588 500L587.5 500L587 498.8L586.5 499.7L586 499.9L585.5 500.4L585 500.2L584.5 500L584 500.1L583.5 499.5L583 499.5L582.5 500.2L582 499.4L581.5 499.6L581 499.6L580.5 501L580 500.1L579.5 500.3L579 499.7L578.5 500.4L578 501.3L577.5 500.7L577 500.4L576.5 501.4L576 500.6L575.5 501.5L575 502.1L574.5 503.4L574 503.4L573.5 496.3L573 496.5L572.5 496.4L572 496.2L571.5 496.5L571 496.2L570.5 496.5L570 496.5L569.5 496.2L569 496.6L568.5 496.5L568 496.1L567.5 496.2L567 496.3L566.5 496.4L566 496.7L565.5 496.5L565 496.3L564.5 496.6L564 496.7L563.5 496.5L563 496.7L562.5 496.4L562 496.7L561.5 496.4L561 496.7L560.5 496.5L560 496.4L559.5 496.6L559 496.6L558.5 498.4L558 498.1L557.5 498.5L557 499.5L556.5 499.2L556 499.1L555.5 499.7L555 499.1L554.5 499.3L554 498.9L553.5 499L553 498.8L552.5 499.6L552 500.1L551.5 499.5L551 499.1L550.5 499.6L550 499.7L549.5 498.8L549 499.1L548.5 499.3L548 499.7L547.5 500.7L547 499.8L546.5 499.5L546 501L545.5 500.4L545 500.6L544.5 500.2L544 501L543.5 501.7L543 501L542.5 502.8L542 502.3L541.5 503.7L541 503.1L540.5 504.4L540 497.9L539.5 498.6L539 497.9L538.5 498.8L538 498.2L537.5 498.9L537 498.3L536.5 498.1L536 498.1L535.5 498.8L535 498.7L534.5 498.9L534 498.9L533.5 498.8L533 498.1L532.5 498.6L532 498.3L531.5 499.4L531 498.6L530.5 498.2L530 499.2L529.5 499.1L529 498.3L528.5 498.3L528 499L527.5 499.2L527 499.7L526.5 499L526 499.2L525.5 498.6L525 499.1L524.5 499.1L524 499.4L523.5 499.3L523 500.1L522.5 499.7L522 499.7L521.5 500.1L521 500.2L520.5 499.3L520 500.7L519.5 499.3L519 500L518.5 500.2L518 501.3L517.5 500.9L517 501.5L516.5 502.5L516 501.6L515.5 503L515 498.6L514.5 498.4L514 499L513.5 498.7L513 499.2L512.5 498.9L512 499.2L511.5 498.5L511 498.7L510.5 499.2L510 499.6L509.5 498.7L509 499L508.5 498.8L508 498.5L507.5 499.3L507 499.5L506.5 500L506 499.7L505.5 499.8L505 499.1L504.5 499.9L504 499.7L503.5 499.2L503 499.1L502.5 498.9L502 499.7L501.5 499.8L501 499.3L500.5 499.6L500 500.6L499.5 499.4L499 499.6L498.5 500.5L498 499.9L497.5 499.9L497 500.2L496.5 501.3L496 500.8L495.5 500L495 499.9L494.5 501.6L494 501.4L493.5 502.4L493 502.4L492.5 502.4L492 500.6L491.5 499.2L491 500.1L490.5 500.6L490 499.1L489.5 500.5L489 499.5L488.5 499.4L488 500.4L487.5 500.5L487 499.4L486.5 499.6L486 499.2L485.5 499.4L485 500.7L484.5 500.2L484 499.4L483.5 499.2L483 499.8L482.5 499.8L482 500.7L481.5 500.8L481 499.9L480.5 499.9L480 500.9L479.5 499.9L479 499.8L478.5 501L478 500L477.5 500.8L477 500.2L476.5 500.3L476 500.5L475.5 500.8L475 501.1L474.5 499.8L474 500L473.5 500L473 501.2L472.5 501.2L472 501.1L471.5 501.2L471 502L470.5 502.3L470 502.2L469.5 502.6L469 501.9L468.5 502.5L468 504.2L467.5 503.4L467 504L466.5 505.9L466 500.2L465.5 499.1L465 500.5L464.5 499.7L464 500.4L463.5 499.4L463 499.8L462.5 499.7L462 499.3L461.5 499.5L461 499.3L460.5 499.3L460 500.6L459.5 499.6L459 499.9L458.5 499.6L458 499.9L457.5 500.3L457 500.6L456.5 499.4L456 500.3L455.5 499.6L455 500.5L454.5 499.7L454 499.6L453.5 500.6L453 500.3L452.5 499.7L452 500.1L451.5 500.6L451 499.3L450.5 499.5L450 500.7L449.5 500.1L449 500.7L448.5 501L448 499.8L447.5 500.6L447 500.9L446.5 499.8L446 500.6L445.5 499.6L445 500.9L444.5 501.1L444 500L443.5 500.1L443 501.7L442.5 501.3L442 498.9L441.5 499.5L441 500.4L440.5 499.9L440 500.1L439.5 499.5L439 500.4L438.5 500.7L438 500.2L437.5 500.5L437 500L436.5 500.7L436 500.2L435.5 500.6L435 500.8L434.5 499.8L434 501.6L433.5 500.8L433 500.2L432.5 500.7L432 501.7L431.5 502L431 502.3L430.5 501.6L430 502.1L429.5 502.5L429 502.7L428.5 503.6L428 505.5L427.5 504.9L427 507.1L426.5 509L426 499.6L425.5 499.5L425 499.4L424.5 499.2L424 499.8L423.5 498.5L423 499.8L422.5 498.8L422 500.1L421.5 499.4L421 498.5L420.5 499.1L420 499.7L419.5 499.8L419 499.9L418.5 499.3L418 499L417.5 499.2L417 499L416.5 499.8L416 499.7L415.5 499L415 499.5L414.5 499.5L414 498.8L413.5 499.8L413 499.6L412.5 498.7L412 499.3L411.5 499.6L411 499.4L410.5 499.4L410 500L409.5 499.7L409 499.2L408.5 499.8L408 499.2L407.5 500.2L407 500L406.5 499.1L406 500.8L405.5 499.9L405 500.9L404.5 501L404 500L403.5 501.4L403 501.5L402.5 501.2L402 501L401.5 502.4L401 497.6L400.5 498.6L400 498.3L399.5 498.6L399 498.5L398.5 498L398 498.8L397.5 498.6L397 498.1L396.5 498.3L396 498.8L395.5 498.3L395 499.1L394.5 498.8L394 498.8L393.5 499.1L393 499.4L392.5 498.6L392 499.8L391.5 500.1L391 499.6L390.5 500.2L390 500.2L389.5 499.2L389 499.6L388.5 499L388 500.5L387.5 499.3L387 500.8L386.5 499.8L386 500.3L385.5 499.8L385 500.6L384.5 500.5L384 501L383.5 501.3L383 501.7L382.5 500.5L382 500.4L381.5 501.4L381 501.3L380.5 501.3L380 502L379.5 502.4L379 503L378.5 502.3L378 502.6L377.5 503.9L377 498.3L376.5 499.4L376 498.7L375.5 499.5L375 498.3L374.5 498.4L374 498.7L373.5 498.3L373 499.8L372.5 499.3L372 499.9L371.5 499.5L371 499.9L370.5 499.8L370 499.9L369.5 499.9L369 499.5L368.5 500.4L368 499.7L367.5 499.3L367 500.3L366.5 500.4L366 500L365.5 499.7L365 500.2L364.5 500.4L364 499.8L363.5 500.9L363 501.8L362.5 500.7L362 502.9L361.5 502.1L361 503.4L360.5 497.7L360 497.9L359.5 498.2L359 497.8L358.5 497.4L358 498L357.5 497.7L357 497.8L356.5 497.5L356 498.4L355.5 498.4L355 498.6L354.5 498.3L354 498.7L353.5 498.9L353 497.9L352.5 498.8L352 498.1L351.5 498.2L351 498.4L350.5 498.2L350 499.3L349.5 498.8L349 498.3L348.5 498.4L348 499.7L347.5 498.7L347 499.7L346.5 499.3L346 500L345.5 498.5L345 499L344.5 499.1L344 499.6L343.5 499.7L343 500.1L342.5 499.1L342 500.1L341.5 500.6L341 499.7L340.5 500.7L340 499.6L339.5 499.3L339 499.6L338.5 499.2L338 500.1L337.5 500.8L337 499.6L336.5 499.8L336 500.3L335.5 500.6L335 501.4L334.5 501.4L334 500.9L333.5 500.4L333 501.3L332.5 499.9L332 501L331.5 501.7L331 500.2L330.5 501.2L330 501.2L329.5 501.6L329 501.1L328.5 502.2L328 500.4L327.5 501.1L327 501.1L326.5 501.1L326 502.2L325.5 500.9L325 501.5L324.5 502.1L324 502.2L323.5 502.6L323 501.2L322.5 501.4L322 501L321.5 502L321 502.2L320.5 503.1L320 502.9L319.5 502.1L319 501.7L318.5 502.3L318 503L317.5 503.4L317 502.2L316.5 502.8L316 502.7L315.5 503.5L315 503.6L314.5 504.5L314 505.5L313.5 506.1L313 506.1Z" fill="#d6e6fb"/>
<path clip-path="url(#gc)" d="M834 492.1L834.5 491.6L835 484.4L835.5 486L836 486.6L836.5 485.9L837 486.5L837.5 487L838 487.9L838.5 486.4L839 488L839.5 487.8L840 488.3L840.5 487.7L841 487L841.5 488.3L842 487.4L842.5 489.1L843 487.5L843.5 488.9L844 488L844.5 488.2L845 489.5L845.5 488.9L846 488.4L846.5 487.8L847 487.8L847.5 489.2L848 488.6L848.5 488.6L849 489.6L849.5 488.9L850 489.9L850.5 488.3L851 488.2L851.5 489.4L852 489.4L852.5 489.3L853 490.2L853.5 490.2L854 489.9L854.5 488.9L855 489.6L855.5 490.1L856 489.5L856.5 490.7L857 490.6L857.5 489.5L858 489.4L858.5 489.5L859 490.4L859.5 490.4L860 490.8L860.5 490.9L861 491.1L861.5 490.9L862 489.8L862.5 491L863 490.1L863.5 489.9L864 490.5L864.5 490.7L865 490.8L865.5 491.4L866 490.4L866.5 490.5L867 491.5L867.5 491.6L868 491.6L868.5 491.4L869 490.8L869.5 491.6L870 490.9L870.5 492L871 490.7L871.5 491.8L872 491.6L872.5 491L873 492L873.5 491.8L874 491.8L874.5 492.3L875 491.6L875.5 491.8L876 492.1L876.5 492.5L877 492.2L877.5 492.6L878 492.2L878.5 492.3L879 492.1L879.5 491.9L880 492.2L880.5 492.3L881 492.8L881.5 492.7L882 492.4L882.5 487L883 487.2L883.5 488.6L884 488.6L884.5 489.2L885 489.8L885.5 490.3L886 489.3L886.5 489L887 490.8L887.5 490.1L888 490.9L888.5 490.7L889 490.6L889.5 490.6L890 491.4L890.5 490.7L891 490.7L891.5 490.1L892 490.5L892.5 491.4L893 490.4L893.5 490.9L894 491.3L894.5 491.2L895 490.9L895.5 491.9L896 491.3L896.5 490.8L897 490.7L897.5 490.8L898 491.3L898.5 491.5L899 486.5L899.5 486.5L900 487.8L900.5 488.3L901 488.4L901.5 488.9L902 488.4L902.5 489.5L903 489.5L903.5 489.9L904 490.1L904.5 489.9L905 489.7L905.5 490.5L906 489.7L906.5 490.1L907 490L907.5 489.8L908 489.4L908.5 489.6L909 489.8L909.5 489.7L910 490.3L910.5 490L911 490.4L911.5 490.4L912 490L912.5 491.1L913 490.6L913.5 490.1L914 490.8L914.5 490.4L915 491.1L915.5 491.2L916 490.6L916.5 491.4L917 490.8L917.5 491.3L918 491.9L918.5 491L919 491.2L919.5 491.5L920 491.2L920.5 492.3L921 491.6L921.5 492.3L922 491.5L922.5 492.2L923 488L923.5 489.1L924 489.4L924.5 490.1L925 489.5L925.5 490.6L926 490.5L926.5 489.4L927 489.4L927.5 490.7L928 490.1L928.5 490.6L929 490L929.5 491.1L930 491.4L930.5 489.8L931 491.2L931.5 490.3L932 489.9L932.5 490.7L933 491.2L933.5 490.9L934 490.4L934.5 489.9L935 490.8L935.5 491L936 490.6L936.5 491.5L937 491.1L937.5 490L938 491.5L938.5 490.7L939 490.4L939.5 490.8L940 491.6L940.5 490.5L941 490.1L941.5 490.1L942 491L942.5 490.7L943 490.6L943.5 491.5L944 490.8L944.5 491.7L945 490.6L945.5 491.6L946 491.1L946.5 490.9L947 490.3L947.5 490.7L948 481.7L948.5 484.1L949 484.6L949.5 484.9L950 486.8L950.5 486.5L951 487.7L951.5 488.3L952 487.6L952.5 487.6L953 488.5L953.5 489.6L954 489.8L954.5 489.9L955 488.6L955.5 490.2L956 488.9L956.5 490.5L957 489.8L957.5 489.7L958 490.4L958.5 489.5L959 489.9L959.5 489.4L960 489.5L960.5 489.9L961 490.7L961.5 489.5L962 490.1L962.5 490L963 490.3L963.5 490.9L964 489L964.5 489.1L965 489.7L965.5 490.4L966 488.8L966.5 490.2L967 489.3L967.5 490.1L968 490.5L968.5 490.9L969 489.7L969.5 490.4L970 489.6L970.5 490.4L971 489.8L971.5 490.5L972 490.6L972.5 489.6L973 489.6L973.5 489.8L974 491.1L974.5 490.5L975 490.5L975.5 490.7L976 490.4L976.5 490L977 490.1L977.5 490.4L978 491.1L978.5 490.7L979 490.6L979.5 489.9L980 490L980.5 491.1L981 490.7L981.5 490L982 490.2L982.5 489.8L983 489.8L983.5 490.9L984 491L984.5 490.3L985 490.5L985.5 491.1L986 490.4L986.5 489.7L987 489.6L987.5 490.9L988 484.6L988.5 486.2L989 485.8L989.5 487.1L990 487.3L990.5 488.5L991 489.2L991.5 488.2L992 488.9L992.5 488.8L993 489L993.5 489L994 490.2L994.5 489L995 488.7L995.5 489.1L996 490.4L996.5 490.6L997 489.2L997.5 490.7L998 488.9L998.5 490.2L999 490.1L999.5 489.6L1000 490L1000.5 489.4L1001 489.3L1001.5 490.5L1002 489.2L1002.5 490.8L1003 490.1L1003.5 490.6L1004 489.6L1004.5 490.5L1005 490.6L1005.5 489.4L1006 491.1L1006.5 491L1007 490.5L1007.5 489.7L1008 489.8L1008.5 489.9L1009 490.6L1009.5 489.6L1010 490.6L1010.5 491L1011 490.8L1011.5 490.4L1012 491.1L1012.5 490L1013 491.1L1013.5 490.3L1014 491.4L1014.5 488L1015 488.4L1015.5 489.2L1016 490.1L1016.5 488.6L1017 489.9L1017.5 488.8L1018 489.2L1018.5 489.1L1019 489.2L1019.5 489.8L1020 490L1020.5 490L1021 490.1L1021.5 489.5L1022 490.7L1022.5 491L1023 489.7L1023.5 490.6L1024 490.1L1024.5 490.8L1025 491.1L1025.5 490.5L1026 491.4L1026.5 491.1L1027 491.2L1027.5 491.1L1028 490.4L1028.5 490.3L1029 490.4L1029.5 491L1030 491.3L1030.5 490.9L1031 491.7L1031.5 491.4L1032 490.5L1032.5 491.4L1033 490.5L1033.5 490.8L1034 491L1034.5 491.7L1035 491.5L1035.5 491.1L1036 491.4L1036.5 492L1037 487.4L1037.5 487.4L1038 488.3L1038.5 488.2L1039 488.9L1039.5 489.4L1040 489.9L1040.5 489.2L1041 490.1L1041.5 489.6L1042 489.9L1042.5 490.7L1043 490.9L1043.5 491.2L1044 489.9L1044.5 490.2L1045 490.2L1045.5 491L1046 491.2L1046.5 490.9L1047 490.3L1047.5 490.9L1048 490.4L1048.5 490.8L1049 491.4L1049.5 491.6L1050 491.2L1050.5 491.7L1051 491.6L1051.5 491.4L1052 491.6L1052.5 490.7L1053 491.3L1053.5 492L1054 492L1054.5 491.9L1055 491.1L1055.5 491.8L1056 491L1056.5 491L1057 491.6L1057.5 491.4L1058 492.3L1058.5 492.3L1059 491.8L1059.5 492.4L1060 491.3L1060.5 491.3L1061 492.4L1061.5 491.7L1062 486L1062.5 486L1063 488.1L1063.5 488.2L1064 487.6L1064.5 488.9L1065 489.2L1065.5 489.6L1066 488.7L1066.5 490.6L1067 489.5L1067.5 489.6L1068 490.9L1068.5 490.7L1069 490.9L1069.5 489.8L1070 490.2L1070.5 491L1071 489.8L1071.5 490.2L1072 491.6L1072.5 491.5L1073 491.2L1073.5 491.4L1074 491.1L1074.5 491.3L1075 491.3L1075.5 491.2L1076 490.5L1076.5 491.6L1077 491.7L1077.5 492L1078 490.6L1078.5 491.6L1079 491.8L1079.5 492L1080 491.9L1080.5 492L1081 493.5L1081.5 493.8L1082 493.3L1082.5 493.8L1083 493.7L1083.5 493.8L1084 493.5L1084.5 493.4L1085 493.6L1085.5 493.8L1086 493.3L1086.5 493.5L1087 493.5L1087.5 493.5L1088 493.7L1088.5 493.7L1089 493.6L1089.5 493.6L1090 493.5L1090.5 493.6L1091 493.9L1091.5 493.6L1092 493.8L1092.5 493.9L1093 493.7L1093.5 493.5L1094 494L1094.5 493.9L1095 493.6L1095.5 493.8L1096 487L1096.5 487.3L1097 488L1097.5 488.6L1098 489.4L1098.5 490L1099 488.6L1099.5 490.3L1100 489.2L1100.5 489.9L1101 490.9L1101.5 489.2L1102 489.8L1102.5 490.6L1103 489.7L1103.5 491L1104 490L1104.5 491.2L1105 489.7L1105.5 490.1L1106 491.1L1106.5 490.7L1107 491.4L1107.5 491.5L1108 491L1108.5 490.3L1109 491.5L1109.5 490.6L1110 491.2L1110.5 491.1L1111 490.1L1111.5 490.2L1112 491.6L1112.5 490.2L1113 491.3L1113.5 491.8L1114 491.6L1114.5 490.3L1115 490.6L1115.5 491.1L1116 491.2L1116.5 490.9L1117 491.6L1117.5 491.2L1118 492L1118.5 491.4L1119 490.6L1119.5 491.5L1120 491.5L1120.5 491.1L1121 491.3L1121.5 491.9L1122 491.5L1122.5 491.7L1123 491.1L1123.5 491.5L1124 491.5L1124.5 492L1125 492.1L1125.5 491.1L1126 491.4L1126.5 491.9L1127 491.8L1127.5 492L1128 491.3L1128.5 491.9L1129 491.8L1129.5 492.3L1130 492L1130.5 492.3L1131 492.2L1131.5 491.6L1132 492.1L1132.5 491.9L1133 491.8L1133.5 492.3L1134 492.3L1134.5 492.3L1135 492L1135.5 492.1L1136 491.9L1136.5 492.9L1137 492.8L1137.5 492.9L1138 492.1L1138.5 492.3L1139 492.7L1139.5 492.2L1140 492.5L1140.5 493L1141 492.8L1141.5 492.8L1142 492.8L1142.5 492.8L1143 487L1143.5 487.5L1144 488.3L1144.5 489.1L1145 488.1L1145.5 489.6L1146 488.3L1146.5 488.7L1147 489L1147.5 489.6L1148 489.6L1148.5 489.8L1149 489.5L1149.5 490.7L1150 489.4L1150.5 490.2L1151 490.4L1151.5 490.3L1152 490.3L1152.5 489.4L1153 490.1L1153.5 489.4L1154 489.8L1154.5 490.7L1155 489.6L1155.5 489.7L1156 491.1L1156.5 490.8L1157 490.6L1157.5 490L1158 490.5L1158.5 490.6L1159 491.1L1159.5 489.7L1160 486.1L1160.5 486.1L1161 486.2L1161.5 486.8L1162 487.5L1162.5 488.6L1163 487.2L1163.5 489L1164 488.3L1164.5 487.9L1165 488L1165.5 488.4L1166 488.2L1166.5 489.3L1167 489.6L1167.5 490.3L1168 488.8L1168.5 490.2L1169 489.1L1169.5 489.1L1170 489.7L1170.5 489.4L1171 490.1L1171.5 489.6L1172 491.2L1172.5 491.3L1173 491.1L1173.5 489.9L1174 490.8L1174.5 490.3L1175 491.7L1175.5 491L1176 490.7L1176.5 491.1L1177 490.9L1177.5 491.4L1178 492L1178.5 491.7L1179 492.2L1179.5 492.4L1180 492L1180.5 492.4L1181 492.5L1181.5 491.9L1182 492.2L1182.5 492.1L1183 487.5L1183.5 487.5L1184 489L1184.5 488.5L1185 489.9L1185.5 489.2L1186 489.8L1186.5 490.5L1187 490.6L1187.5 489.8L1188 491.2L1188.5 491.4L1189 491.2L1189.5 491.4L1190 490.7L1190.5 491.7L1191 490.9L1191.5 491.6L1192 491.6L1192.5 491L1193 490.7L1193.5 491L1194 491.8L1194.5 491.5L1195 491.5L1195.5 491.6L1196 492L1196.5 490.8L1197 491.7L1197.5 491.9L1198 491.3L1198.5 491.4L1199 491.6L1199.5 491.8L1200 491.1L1200.5 491.6L1201 491.2L1201.5 491.8L1202 491.1L1202.5 491.5L1203 491.1L1203.5 491.7L1204 491.6L1204.5 491.2L1205 491.3L1205.5 492.3L1206 491.5L1206.5 491.5L1207 491.5L1207.5 491.6L1208 491.8L1208 497.9L1207.5 497.9L1207 498.4L1206.5 498.2L1206 497.7L1205.5 498L1205 498.9L1204.5 497.8L1204 497.9L1203.5 498.4L1203 498.7L1202.5 498.9L1202 498.1L1201.5 497.9L1201 498.8L1200.5 498.5L1200 498.2L1199.5 498.8L1199 498.1L1198.5 498.4L1198 498.8L1197.5 499.1L1197 498.1L1196.5 499.1L1196 498.9L1195.5 498.3L1195 498.5L1194.5 499.5L1194 499L1193.5 499L1193 498.8L1192.5 498.4L1192 499.8L1191.5 498.6L1191 498.8L1190.5 498.9L1190 498.7L1189.5 499.2L1189 498.9L1188.5 500.1L1188 500.3L1187.5 500.3L1187 500.4L1186.5 500.2L1186 500.3L1185.5 501.2L1185 500.9L1184.5 501.5L1184 501.8L1183.5 502.9L1183 502.9L1182.5 497.3L1182 497.5L1181.5 497.6L1181 498.2L1180.5 498L1180 497.9L1179.5 498.5L1179 498L1178.5 498.4L1178 499.1L1177.5 498.3L1177 498.9L1176.5 498.4L1176 499.5L1175.5 499.5L1175 498.9L1174.5 498.5L1174 499.7L1173.5 499L1173 498.7L1172.5 500L1172 499.3L1171.5 500.7L1171 499.3L1170.5 500.1L1170 501.1L1169.5 501.3L1169 499.9L1168.5 499.9L1168 500.1L1167.5 501.2L1167 500.7L1166.5 501.9L1166 500.7L1165.5 502L1165 502.3L1164.5 502.1L1164 501.8L1163.5 501.7L1163 502.9L1162.5 502.9L1162 501.8L1161.5 503.1L1161 504L1160.5 504.3L1160 504.3L1159.5 499.4L1159 500.5L1158.5 500.4L1158 499.9L1157.5 499.4L1157 500.6L1156.5 500.4L1156 500.1L1155.5 500.5L1155 499.2L1154.5 500.4L1154 499.2L1153.5 500L1153 500.7L1152.5 499.4L1152 500.8L1151.5 499.6L1151 499.4L1150.5 499.5L1150 500.8L1149.5 501L1149 499.7L1148.5 499.5L1148 500.5L1147.5 500.5L1147 500.9L1146.5 500.7L1146 501.4L1145.5 501.6L1145 502.2L1144.5 501.7L1144 501.2L1143.5 502L1143 503.4L1142.5 497.4L1142 497.8L1141.5 497.9L1141 497.6L1140.5 497.5L1140 497.9L1139.5 497.3L1139 497.4L1138.5 497.3L1138 497.9L1137.5 497.3L1137 497.8L1136.5 498.2L1136 497.9L1135.5 498.3L1135 497.7L1134.5 497.4L1134 498.3L1133.5 497.7L1133 497.8L1132.5 498.3L1132 498.1L1131.5 498.3L1131 498L1130.5 497.6L1130 498.2L1129.5 498.5L1129 497.8L1128.5 497.7L1128 498.1L1127.5 497.8L1127 498L1126.5 498.9L1126 498.1L1125.5 498.9L1125 498.7L1124.5 499L1124 498.8L1123.5 498.1L1123 499.3L1122.5 498.8L1122 498.1L1121.5 498.3L1121 498.9L1120.5 498.9L1120 498.9L1119.5 498.4L1119 498.2L1118.5 499.5L1118 498.6L1117.5 499L1117 499.2L1116.5 498.5L1116 499.5L1115.5 498.8L1115 499L1114.5 499.4L1114 498.6L1113.5 498.7L1113 499L1112.5 499.1L1112 499.5L1111.5 498.6L1111 499.7L1110.5 498.7L1110 498.8L1109.5 499.2L1109 499.3L1108.5 500L1108 499.8L1107.5 498.8L1107 498.8L1106.5 500.4L1106 499.8L1105.5 500L1105 500.2L1104.5 499.8L1104 499.8L1103.5 499.1L1103 499.2L1102.5 500.5L1102 499.9L1101.5 500.6L1101 501L1100.5 499.5L1100 500.4L1099.5 501.2L1099 500.5L1098.5 500.4L1098 501.8L1097.5 501.7L1097 501.4L1096.5 503.4L1096 503.4L1095.5 496.4L1095 496.3L1094.5 496.2L1094 496.5L1093.5 496.4L1093 496.5L1092.5 496.4L1092 496.5L1091.5 496.2L1091 496.5L1090.5 496.2L1090 496.3L1089.5 496.4L1089 496.2L1088.5 496.3L1088 496.3L1087.5 496.5L1087 496.5L1086.5 496.5L1086 496.5L1085.5 496.7L1085 496.7L1084.5 496.6L1084 496.7L1083.5 496.3L1083 496.4L1082.5 496.6L1082 496.6L1081.5 496.5L1081 496.6L1080.5 498.2L1080 499.1L1079.5 499.1L1079 499.3L1078.5 498.2L1078 499L1077.5 498.6L1077 499.5L1076.5 499L1076 499.1L1075.5 499.4L1075 499.1L1074.5 498.7L1074 498.8L1073.5 499.3L1073 499.8L1072.5 499.6L1072 499.4L1071.5 498.8L1071 500.1L1070.5 498.9L1070 499.6L1069.5 500.1L1069 499.3L1068.5 500.3L1068 500.5L1067.5 501L1067 500.4L1066.5 500.3L1066 501.6L1065.5 501.1L1065 500.9L1064.5 502.2L1064 502L1063.5 502.1L1063 502.4L1062.5 504.4L1062 504.4L1061.5 498.5L1061 497.6L1060.5 498.2L1060 497.7L1059.5 498.7L1059 498.3L1058.5 498.7L1058 498L1057.5 498.9L1057 498.6L1056.5 498.2L1056 498.5L1055.5 498.5L1055 498.4L1054.5 498.7L1054 498.3L1053.5 498.3L1053 499.4L1052.5 499.4L1052 498.7L1051.5 498.1L1051 499.1L1050.5 498.7L1050 498.5L1049.5 499.4L1049 499.3L1048.5 499.4L1048 499.8L1047.5 499L1047 498.4L1046.5 499.1L1046 499L1045.5 499.1L1045 499.9L1044.5 499.3L1044 500.2L1043.5 499.9L1043 500.4L1042.5 499.8L1042 500.5L1041.5 499.5L1041 500.9L1040.5 499.5L1040 500.7L1039.5 501L1039 500.9L1038.5 500.7L1038 502.3L1037.5 503L1037 503L1036.5 498.6L1036 498.5L1035.5 499.5L1035 499.1L1034.5 498.7L1034 499.2L1033.5 499L1033 498.5L1032.5 498.3L1032 499.6L1031.5 499.5L1031 499.1L1030.5 499.8L1030 499.9L1029.5 499.9L1029 499.4L1028.5 499.3L1028 499.4L1027.5 498.6L1027 499.4L1026.5 499.4L1026 498.9L1025.5 500.1L1025 500L1024.5 499.6L1024 498.8L1023.5 500.3L1023 499.6L1022.5 499.2L1022 499.8L1021.5 500.1L1021 500.6L1020.5 500.5L1020 499.2L1019.5 500.5L1019 500L1018.5 501.1L1018 500L1017.5 500.2L1017 501.4L1016.5 501.7L1016 501L1015.5 501.4L1015 502.5L1014.5 502.4L1014 500.6L1013.5 500L1013 499.1L1012.5 500L1012 500.7L1011.5 499.2L1011 499.5L1010.5 499.8L1010 500.7L1009.5 499.1L1009 500.7L1008.5 499L1008 499.2L1007.5 499.1L1007 500.2L1006.5 499.4L1006 499.6L1005.5 500.1L1005 500.8L1004.5 500.9L1004 500.3L1003.5 500.6L1003 501.2L1002.5 500.3L1002 500.2L1001.5 501.1L1001 501.2L1000.5 500.6L1000 501.2L999.5 499.4L999 499.8L998.5 500.4L998 501L997.5 500.5L997 500.5L996.5 500L996 499.9L995.5 500.7L995 500.1L994.5 500.9L994 501.6L993.5 500.5L993 501.6L992.5 502.1L992 502L991.5 502.3L991 502.3L990.5 502L990 502.5L989.5 503.8L989 503.7L988.5 505.1L988 505.9L987.5 499.2L987 499.8L986.5 499.6L986 499.3L985.5 500.6L985 499.4L984.5 500.7L984 499.1L983.5 499.1L983 500.3L982.5 499.1L982 500.3L981.5 499.8L981 499.7L980.5 500L980 499L979.5 499.7L979 500.8L978.5 500.7L978 500.6L977.5 500.1L977 499.4L976.5 500.6L976 500.2L975.5 500.9L975 500.5L974.5 500.5L974 499.7L973.5 500.8L973 500.2L972.5 500.8L972 499.4L971.5 500.5L971 500L970.5 499.4L970 499.6L969.5 501L969 500.1L968.5 501.1L968 501.2L967.5 500.6L967 499.9L966.5 500.5L966 501.3L965.5 500.5L965 500.6L964.5 500.8L964 501.3L963.5 499.5L963 499.1L962.5 499.7L962 500.6L961.5 500.1L961 499.2L960.5 499.6L960 501.1L959.5 500.6L959 500.9L958.5 499.8L958 500.4L957.5 501.3L957 501.6L956.5 500L956 501.8L955.5 501.4L955 500.6L954.5 500.9L954 500.4L953.5 501.6L953 501L952.5 501L952 502L951.5 503L951 502.9L950.5 503.5L950 503.3L949.5 504.1L949 505.5L948.5 507.7L948 509L947.5 499.6L947 499.2L946.5 499.1L946 499.2L945.5 499.9L945 499.5L944.5 500L944 498.9L943.5 499.5L943 500L942.5 499.1L942 498.8L941.5 499L941 499L940.5 500.1L940 498.9L939.5 499.8L939 499.3L938.5 499.7L938 499.6L937.5 499.4L937 499.9L936.5 499.4L936 500.3L935.5 499.4L935 499.9L934.5 500.3L934 499.8L933.5 499.1L933 499.5L932.5 499.3L932 499.9L931.5 498.9L931 500L930.5 499.8L930 499.8L929.5 499.3L929 500.5L928.5 499.7L928 500.7L927.5 500.7L927 499.8L926.5 500.6L926 501.2L925.5 499.8L925 500.1L924.5 500.8L924 501.8L923.5 500.8L923 502.4L922.5 497.8L922 498.7L921.5 497.8L921 498.1L920.5 499L920 498.9L919.5 498.4L919 499L918.5 498.2L918 498.2L917.5 499.1L917 498.7L916.5 499.6L916 498.8L915.5 498.5L915 498.7L914.5 498.7L914 499.8L913.5 499.3L913 498.8L912.5 498.8L912 500.4L911.5 499.7L911 500.2L910.5 499.4L910 500L909.5 500.6L909 500.2L908.5 499.3L908 500.2L907.5 499.9L907 499.4L906.5 500.8L906 500.5L905.5 501.2L905 499.9L904.5 501.4L904 501.5L903.5 501.6L903 502L902.5 500.9L902 501.3L901.5 501.7L901 501.7L900.5 503.3L900 502.2L899.5 502.4L899 503.9L898.5 498.2L898 499.2L897.5 498.7L897 499.2L896.5 499.3L896 498.8L895.5 499.4L895 499.6L894.5 499.8L894 499L893.5 499.9L893 498.6L892.5 498.7L892 499.1L891.5 500L891 499.8L890.5 499.5L890 500.2L889.5 499.1L889 499.9L888.5 499.1L888 499.2L887.5 501L887 499.8L886.5 501L886 500.3L885.5 501.6L885 501.4L884.5 501.9L884 501.1L883.5 502.3L883 502.1L882.5 503.4L882 498.1L881.5 497.6L881 497.8L880.5 497.6L880 498.2L879.5 497.6L879 497.9L878.5 498.5L878 498.4L877.5 497.5L877 498.2L876.5 498.2L876 497.9L875.5 498.9L875 498.4L874.5 498.1L874 498.9L873.5 498.9L873 498.2L872.5 498.5L872 498.6L871.5 499.3L871 498.5L870.5 499.1L870 499.5L869.5 499.5L869 499.1L868.5 499L868 499L867.5 499.1L867 499.9L866.5 499.5L866 500.2L865.5 499.9L865 498.9L864.5 500L864 500L863.5 499.5L863 499.8L862.5 499.7L862 499.5L861.5 499.3L861 500.2L860.5 500.7L860 499.2L859.5 499.7L859 499.2L858.5 501.2L858 499.8L857.5 501.3L857 500.9L856.5 499.7L856 500.8L855.5 500.3L855 501.2L854.5 500.6L854 501.2L853.5 500.2L853 501.8L852.5 500.1L852 501.5L851.5 501.6L851 500.5L850.5 501.4L850 501L849.5 501.6L849 502.1L848.5 500.5L848 501.5L847.5 500.8L847 502.1L846.5 502.5L846 502.3L845.5 501.5L845 501.5L844.5 501.3L844 501.3L843.5 502.6L843 502.4L842.5 502.6L842 503.2L841.5 501.7L841 503.1L840.5 502.6L840 502.1L839.5 503.7L839 502.6L838.5 502.9L838 502.4L837.5 504.6L837 503.8L836.5 503.5L836 505.1L835.5 505.6L835 506.1L834.5 498.9L834 498.2Z" fill="#7fa8dc"/>
<path clip-path="url(#gc)" d="M313 512.2L313.5 512.2L314 514L314.5 513.5L315 513.3L315.5 513.5L316 514.5L316.5 514.5L317 514.7L317.5 514.5L318 515.8L318.5 514.8L319 514.8L319.5 514.8L320 515.5L320.5 516.4L321 516.4L321.5 515.2L322 516.9L322.5 515.9L323 517.2L323.5 517.3L324 516.4L324.5 516.7L325 515.7L325.5 516.8L326 517.1L326.5 516.6L327 516.4L327.5 517.6L328 517.2L328.5 517.1L329 516.1L329.5 517.2L330 516.3L330.5 517L331 517.5L331.5 517.9L332 517.2L332.5 517.1L333 517L333.5 517.6L334 516.7L334.5 516.9L335 517.6L335.5 516.7L336 517.8L336.5 517.5L337 517.3L337.5 517.7L338 518.9L338.5 517.7L339 518.7L339.5 518.2L340 519L340.5 518.5L341 518.8L341.5 517.6L342 518.7L342.5 518.5L343 518.7L343.5 517.8L344 519.3L344.5 518L345 519.2L345.5 518.9L346 518.4L346.5 519.2L347 519.2L347.5 518.7L348 518.4L348.5 519.7L349 518.9L349.5 519.2L350 518.8L350.5 519.1L351 518.8L351.5 519.3L352 519.6L352.5 519L353 519.7L353.5 520L354 519.1L354.5 519.8L355 519.7L355.5 520L356 519.4L356.5 519.6L357 519.4L357.5 520.1L358 519.7L358.5 519.9L359 520.5L359.5 520.3L360 520.2L360.5 520.6L361 514.8L361.5 515.7L362 517.1L362.5 516.2L363 516.2L363.5 517.9L364 517.3L364.5 516.8L365 517.5L365.5 518.1L366 517.1L366.5 517.3L367 517.9L367.5 518.6L368 519.1L368.5 518.7L369 518.8L369.5 518.6L370 519.1L370.5 518.8L371 518.2L371.5 518.7L372 518.1L372.5 519.6L373 518.9L373.5 519.5L374 519.3L374.5 519.7L375 518.6L375.5 519.2L376 519.2L376.5 519.5L377 518.7L377.5 514.3L378 516L378.5 514.9L379 516.1L379.5 517.1L380 517L380.5 516L381 516.8L381.5 516.6L382 516.2L382.5 517.6L383 516.9L383.5 517.7L384 517.4L384.5 517.8L385 517.6L385.5 518.2L386 517.3L386.5 517.8L387 517.8L387.5 518.5L388 518.4L388.5 518.4L389 518.1L389.5 518.5L390 518L390.5 518.3L391 518L391.5 518.3L392 519.1L392.5 518.9L393 519.2L393.5 518.9L394 519.4L394.5 519L395 519.6L395.5 519.1L396 519.8L396.5 519.6L397 519.4L397.5 519.2L398 519.8L398.5 520.1L399 520.1L399.5 519.5L400 519.5L400.5 519.8L401 520.1L401.5 515.8L402 516.9L402.5 517.5L403 516.4L403.5 516.7L404 517.5L404.5 516.9L405 517.9L405.5 518.7L406 517.4L406.5 518.5L407 517.7L407.5 518.6L408 519.1L408.5 518.6L409 518.4L409.5 519.2L410 518.8L410.5 517.9L411 518.8L411.5 518.1L412 519.2L412.5 519L413 518.7L413.5 517.9L414 517.9L414.5 519.4L415 518L415.5 517.9L416 519.4L416.5 518.9L417 518.1L417.5 518.9L418 519.1L418.5 518.8L419 518.4L419.5 518L420 518.8L420.5 518.9L421 519.3L421.5 519.1L422 519L422.5 519.1L423 519.1L423.5 518.1L424 519.2L424.5 519.2L425 518.1L425.5 519.5L426 518.7L426.5 509.5L427 512.8L427.5 512.4L428 513.6L428.5 514.2L429 514.8L429.5 515.6L430 516.3L430.5 515.9L431 516.1L431.5 517L432 516.5L432.5 516.5L433 516.8L433.5 517.5L434 517.5L434.5 517.5L435 518.2L435.5 517.5L436 517.8L436.5 517.1L437 518.1L437.5 517.1L438 518.2L438.5 518.2L439 518.4L439.5 517.1L440 518.9L440.5 517.3L441 518.3L441.5 517.7L442 518.3L442.5 516.8L443 517.2L443.5 517.5L444 517.4L444.5 516.9L445 517.8L445.5 517.6L446 516.8L446.5 517.6L447 517.7L447.5 517.6L448 518L448.5 517.3L449 517.1L449.5 517L450 517.8L450.5 518.9L451 517.5L451.5 517.5L452 517.6L452.5 518.2L453 518.2L453.5 518.9L454 518.6L454.5 518L455 518.8L455.5 517.6L456 517.6L456.5 518.8L457 518.8L457.5 518.1L458 518.5L458.5 518.5L459 517.7L459.5 517.3L460 518.7L460.5 518.1L461 518.7L461.5 518.6L462 518.3L462.5 518.1L463 518.7L463.5 518.4L464 518.6L464.5 518.6L465 518L465.5 517.5L466 519L466.5 512.4L467 513.7L467.5 514.5L468 514.4L468.5 516L469 515.8L469.5 516.9L470 516.2L470.5 517.1L471 517.7L471.5 516.1L472 516.1L472.5 517L473 517.1L473.5 517.6L474 516.6L474.5 517.7L475 518.3L475.5 517L476 517.2L476.5 518L477 516.7L477.5 518.3L478 517.4L478.5 517.3L479 516.8L479.5 517.8L480 516.8L480.5 518L481 518L481.5 517.9L482 517.9L482.5 518.3L483 517.7L483.5 517.4L484 517.1L484.5 518L485 517.6L485.5 517.4L486 517.5L486.5 517.9L487 517.5L487.5 518.9L488 518.5L488.5 518.3L489 517.9L489.5 517.6L490 518.3L490.5 518.2L491 517.5L491.5 517.5L492 519.1L492.5 515.8L493 515.8L493.5 516.5L494 517.6L494.5 516.3L495 517.3L495.5 517.8L496 517.5L496.5 517L497 517.8L497.5 517.1L498 517.7L498.5 517.7L499 517.2L499.5 518.8L500 518.4L500.5 519L501 517.6L501.5 518.3L502 517.6L502.5 519L503 517.6L503.5 518.7L504 518.8L504.5 518.4L505 518.3L505.5 518.1L506 518.1L506.5 518.2L507 519.1L507.5 519.4L508 518.1L508.5 519.3L509 519.6L509.5 518.4L510 519.4L510.5 518.5L511 518.5L511.5 518.5L512 518.6L512.5 519.8L513 519.1L513.5 519.7L514 518.6L514.5 519.9L515 519.6L515.5 515.2L516 516.8L516.5 517L517 516.9L517.5 517.6L518 518.2L518.5 518.3L519 518.1L519.5 517.3L520 517.5L520.5 518.3L521 518L521.5 518.8L522 518.9L522.5 519.3L523 518.1L523.5 519.2L524 519L524.5 519.5L525 518.4L525.5 518.4L526 518.1L526.5 518.6L527 518.3L527.5 518.7L528 518.3L528.5 519.3L529 518.7L529.5 519.5L530 518.8L530.5 519.7L531 519.1L531.5 519.1L532 519.2L532.5 518.9L533 519.9L533.5 519.9L534 519.2L534.5 520.1L535 519.9L535.5 519.5L536 519.2L536.5 519.6L537 520L537.5 520.1L538 519.8L538.5 519.3L539 520L539.5 520.3L540 519.7L540.5 513.8L541 513.8L541.5 516.1L542 515.2L542.5 516L543 516.1L543.5 516.1L544 517.3L544.5 517.2L545 517.7L545.5 516.9L546 518.2L546.5 517.6L547 518.9L547.5 517.5L548 518.1L548.5 517.6L549 518L549.5 518.7L550 518.3L550.5 518.6L551 519.4L551.5 517.9L552 519.5L552.5 518.2L553 519.5L553.5 518.6L554 518.4L554.5 518.5L555 519.2L555.5 518.8L556 518.4L556.5 519.8L557 518.9L557.5 519.4L558 519.1L558.5 519.2L559 521.3L559.5 521.3L560 521.2L560.5 521.3L561 521.3L561.5 521.2L562 521.6L562.5 521.4L563 521.4L563.5 521.6L564 521.2L564.5 521.3L565 521.6L565.5 521.6L566 521.4L566.5 521.4L567 521.2L567.5 521.4L568 521.5L568.5 521.3L569 521.4L569.5 521.5L570 521.4L570.5 521.3L571 521.4L571.5 521.5L572 521.7L572.5 521.5L573 521.7L573.5 521.8L574 514.8L574.5 514.8L575 515.9L575.5 516.5L576 516.9L576.5 517L577 517.3L577.5 517.3L578 517.5L578.5 516.8L579 518.3L579.5 518L580 518.1L580.5 518.3L581 517.6L581.5 517.4L582 518.1L582.5 518.2L583 518L583.5 518.9L584 518.7L584.5 518.7L585 519.1L585.5 519L586 518.6L586.5 518.4L587 518.7L587.5 517.8L588 518.7L588.5 518.2L589 519.4L589.5 519.3L590 519L590.5 519.2L591 518.8L591.5 518.2L592 518.2L592.5 519.4L593 518.1L593.5 518.7L594 518.2L594.5 519L595 519.2L595.5 519.8L596 518.4L596.5 519.8L597 518.9L597.5 518.6L598 519.5L598.5 518.9L599 519.4L599.5 519.7L600 519.5L600.5 519.7L601 519.9L601.5 519.3L602 519.2L602.5 519.2L603 519L603.5 518.9L604 518.9L604.5 519.6L605 520.1L605.5 520.2L606 519.4L606.5 519.4L607 519.1L607.5 520.3L608 520L608.5 519.6L609 520.4L609.5 519.3L610 519.4L610.5 520.1L611 520.3L611.5 519.9L612 519.5L612.5 520.5L613 520.3L613.5 519.7L614 519.7L614.5 520.1L615 519.8L615.5 519.8L616 520.6L616.5 520L617 520L617.5 519.9L618 519.9L618.5 520.4L619 520.4L619.5 520.2L620 520.5L620.5 520L621 520.4L621.5 514.8L622 516.7L622.5 516.6L623 516.1L623.5 515.9L624 517.7L624.5 518L625 518.1L625.5 518.1L626 517.2L626.5 518L627 517.8L627.5 517.6L628 517.5L628.5 517L629 518.3L629.5 518.1L630 517L630.5 518.6L631 518.7L631.5 517.2L632 517.5L632.5 518.5L633 518.9L633.5 517.4L634 517.3L634.5 518.4L635 518.7L635.5 518.2L636 518.8L636.5 518.9L637 518.9L637.5 517.6L638 518.8L638.5 513.9L639 514L639.5 514.3L640 515L640.5 515.2L641 515.7L641.5 516.3L642 515.5L642.5 515.9L643 516.2L643.5 515.8L644 516.4L644.5 516.5L645 516.7L645.5 517.4L646 517.9L646.5 518.3L647 516.8L647.5 516.8L648 517.4L648.5 516.9L649 518.4L649.5 518.9L650 517.5L650.5 518.7L651 518.9L651.5 517.9L652 518.2L652.5 518.2L653 518.1L653.5 518.4L654 519.3L654.5 519L655 519L655.5 519.1L656 519.7L656.5 519.2L657 519.8L657.5 519.2L658 519.6L658.5 519.5L659 519.7L659.5 519.8L660 520.1L660.5 520.7L661 520.8L661.5 515.3L662 515.2L662.5 516.9L663 516.9L663.5 517.8L664 517.7L664.5 517.1L665 518.5L665.5 518.8L666 518.2L666.5 518.6L667 518L667.5 518.2L668 518.7L668.5 518.1L669 518.2L669.5 519L670 518.7L670.5 518.2L671 519.4L671.5 518.8L672 518.4L672.5 519.4L673 518.5L673.5 519.1L674 519.3L674.5 519.2L675 519.9L675.5 518.9L676 519.1L676.5 519.1L677 519.8L677.5 519.2L678 519.2L678.5 519.9L679 520.1L679.5 519.8L680 520L680.5 519.5L681 519.5L681.5 519L682 519L682.5 519.1L683 519.3L683.5 519.4L684 519.1L684.5 519.7L685 519.5L685.5 519.8L686 519.8L686.5 520.2L687 519.9L687.5 509.5L688 511.8L688.5 514L689 513.2L689.5 514.2L690 516.1L690.5 515.4L691 516.5L691.5 517.7L692 516.9L692.5 517L693 517.3L693.5 518.2L694 518.8L694.5 518L695 518L695.5 518.8L696 519.6L696.5 519.5L697 518.7L697.5 519.5L698 520L698.5 519.5L699 519.2L699.5 520L700 519.8L700.5 519.3L701 519.9L701.5 519.8L702 520.6L702.5 520.5L703 520.4L703.5 516.2L704 515.7L704.5 516.6L705 518L705.5 516.7L706 516.9L706.5 518.3L707 518.7L707.5 517.1L708 518.1L708.5 518.1L709 518.2L709.5 518.8L710 518.8L710.5 518.8L711 518.2L711.5 518.4L712 519L712.5 519.4L713 518.6L713.5 519.2L714 519.5L714.5 518.9L715 519.1L715.5 519.1L716 518.7L716.5 519.4L717 519.7L717.5 519.4L718 519.9L718.5 519.2L719 520L719.5 519.9L720 519.3L720.5 519.7L721 519L721.5 519.7L722 519.1L722.5 519.8L723 520.1L723.5 520.2L724 519.9L724.5 520L725 520.5L725.5 520.3L726 520.4L726.5 520L727 520.1L727.5 520.5L728 517.8L728.5 517.9L729 517.9L729.5 518.5L730 518.4L730.5 518.6L731 518.6L731.5 518.8L732 519.8L732.5 519.6L733 519.2L733.5 519.3L734 519.8L734.5 520L735 520.1L735.5 520.3L736 519.6L736.5 520.3L737 520.2L737.5 520.4L738 519.7L738.5 519.7L739 520.1L739.5 520.5L740 520L740.5 519.9L741 520.7L741.5 520.8L742 520.6L742.5 520.8L743 520.4L743.5 521L744 520.5L744.5 520.7L745 520.8L745.5 520.6L746 521.1L746.5 520.8L747 520.7L747.5 520.7L748 521.2L748.5 520.9L749 520.7L749.5 521L750 521.3L750.5 521.2L751 521.4L751.5 521.5L752 514.6L752.5 514.6L753 515.3L753.5 515.2L754 516.4L754.5 517L755 515.9L755.5 517.1L756 516.8L756.5 516.6L757 517.6L757.5 516.7L758 518.4L758.5 518.4L759 517.4L759.5 517.2L760 517.3L760.5 518.5L761 517.9L761.5 519.1L762 519.2L762.5 519.1L763 518.3L763.5 518.6L764 519.2L764.5 519.1L765 518.6L765.5 518.9L766 519.7L766.5 519.3L767 518.8L767.5 519.5L768 519.1L768.5 519.1L769 519.8L769.5 519.7L770 520.3L770.5 519.5L771 519.7L771.5 519.6L772 520.1L772.5 520.7L773 520.5L773.5 520.5L774 520.4L774.5 520.5L775 520.8L775.5 520.5L776 520.7L776.5 521L777 514.8L777.5 514.8L778 516.8L778.5 515.5L779 517L779.5 517.5L780 516.4L780.5 517.1L781 516.5L781.5 518.1L782 517L782.5 516.5L783 517.4L783.5 517.7L784 518L784.5 517.5L785 517.5L785.5 517.8L786 518L786.5 518.9L787 518.8L787.5 519L788 518.5L788.5 518.1L789 517.9L789.5 519.1L790 518.2L790.5 519.1L791 519.1L791.5 519.3L792 518.7L792.5 519.3L793 519.4L793.5 518.7L794 519.4L794.5 519.2L795 519.4L795.5 519.9L796 519.5L796.5 519.7L797 519.9L797.5 519.8L798 520.3L798.5 520.2L799 520.5L799.5 519.9L800 520.7L800.5 520L801 514.8L801.5 516.1L802 516.1L802.5 517L803 516.1L803.5 516.6L804 518.1L804.5 516.7L805 517.9L805.5 517.1L806 517L806.5 518.3L807 518L807.5 518.4L808 518.6L808.5 517.5L809 518.4L809.5 518L810 518L810.5 518.8L811 518.9L811.5 518.9L812 519.2L812.5 518.2L813 519.1L813.5 519.6L814 519.3L814.5 519L815 519.4L815.5 519.3L816 518.5L816.5 518.9L817 519.9L817.5 519.5L818 514.3L818.5 515.1L819 516.3L819.5 515.4L820 515.9L820.5 516.2L821 517.7L821.5 518.3L822 518L822.5 517.9L823 517.9L823.5 517.1L824 518L824.5 517.9L825 517.6L825.5 518.3L826 518.4L826.5 517.9L827 519.1L827.5 519.2L828 518.1L828.5 518.3L829 518.6L829.5 519.4L830 518.4L830.5 518.4L831 519.2L831.5 519.5L832 518.5L832.5 519.5L833 518.7L833.5 518.6L834 519.5L834 526.8L833.5 526.1L833 526.8L832.5 526.1L832 526.9L831.5 526.7L831 527.4L830.5 526.6L830 526.2L829.5 526.4L829 526.6L828.5 526.4L828 527.8L827.5 527.2L827 526.7L826.5 527.3L826 527.1L825.5 526.8L825 526.8L824.5 527.5L824 528.3L823.5 527.3L823 527.3L822.5 528.4L822 527.7L821.5 528.6L821 528.8L820.5 528.9L820 530.1L819.5 530.5L819 530.8L818.5 529.7L818 531.7L817.5 525.8L817 527.1L816.5 527.3L816 527.2L815.5 527.2L815 526.4L814.5 526.9L814 526.5L813.5 527.1L813 527.4L812.5 527.4L812 526.6L811.5 527L811 527.1L810.5 526.5L810 527.5L809.5 527.4L809 526.7L808.5 527.2L808 527.3L807.5 528.4L807 528.3L806.5 527.8L806 527.1L805.5 527.2L805 527.6L804.5 528.8L804 528.1L803.5 529.8L803 528.5L802.5 530.1L802 530.3L801.5 531L801 531.2L800.5 525.7L800 525.8L799.5 526L799 525.2L798.5 525.5L798 525.5L797.5 526.4L797 525.6L796.5 525.5L796 525.8L795.5 525.8L795 526.4L794.5 526.4L794 526.3L793.5 527.2L793 526.7L792.5 527.4L792 526.8L791.5 526.5L791 526.4L790.5 527.3L790 526.3L789.5 527.6L789 527.7L788.5 526.7L788 527.3L787.5 527.6L787 527.1L786.5 526.8L786 528.2L785.5 527.6L785 527.7L784.5 528L784 528.1L783.5 528.2L783 528.9L782.5 528.5L782 528.6L781.5 527.7L781 528.4L780.5 529.8L780 528.9L779.5 528.6L779 529.5L778.5 529.4L778 530.6L777.5 530.8L777 531.2L776.5 525.3L776 525.1L775.5 525.1L775 525.2L774.5 525.1L774 525.5L773.5 525.9L773 525L772.5 525.5L772 525.3L771.5 526L771 525.5L770.5 525.8L770 526.1L769.5 525.8L769 526.4L768.5 526.8L768 525.8L767.5 526.8L767 526.5L766.5 527.1L766 526.6L765.5 527.1L765 526.8L764.5 526.6L764 527.6L763.5 527.9L763 527.3L762.5 527.9L762 526.9L761.5 528.2L761 527L760.5 527.8L760 528.4L759.5 527.7L759 527.7L758.5 527.6L758 527.9L757.5 527.7L757 527.8L756.5 528.6L756 529.7L755.5 529.8L755 529.9L754.5 529.6L754 530.4L753.5 531L753 530.6L752.5 531.4L752 531.4L751.5 524.4L751 524.6L750.5 524.2L750 524.4L749.5 524.3L749 524.3L748.5 524.6L748 525L747.5 524.5L747 524.9L746.5 524.7L746 524.7L745.5 525L745 524.6L744.5 524.7L744 524.9L743.5 525.4L743 525.4L742.5 525L742 525.5L741.5 525L741 525L740.5 525.9L740 525.1L739.5 525.7L739 526L738.5 526L738 525.9L737.5 525.2L737 525.4L736.5 526.2L736 525.5L735.5 525.8L735 525.7L734.5 525.9L734 526.3L733.5 526.6L733 526L732.5 526.7L732 526.1L731.5 526.3L731 526.7L730.5 527.1L730 527.4L729.5 526.7L729 527L728.5 527.1L728 528L727.5 525.6L727 525.9L726.5 525.4L726 526.1L725.5 525.8L725 525.4L724.5 525.3L724 526.1L723.5 525.7L723 526.4L722.5 526.4L722 526.6L721.5 525.6L721 525.6L720.5 526.7L720 525.9L719.5 526.8L719 526.6L718.5 526.8L718 525.9L717.5 527L717 526.5L716.5 526.7L716 527.2L715.5 527L715 526.1L714.5 527L714 527.4L713.5 527.8L713 527.3L712.5 526.5L712 527.5L711.5 527.6L711 527.4L710.5 527.2L710 526.9L709.5 527.8L709 527.1L708.5 526.9L708 526.9L707.5 527.3L707 528.5L706.5 528.9L706 529.2L705.5 528L705 529.3L704.5 529.2L704 529.6L703.5 529.7L703 525.5L702.5 525.8L702 525.2L701.5 525.5L701 526.2L700.5 525.8L700 525.8L699.5 526.7L699 526.2L698.5 526L698 526.8L697.5 526L697 526.6L696.5 526.6L696 527L695.5 526.7L695 526.7L694.5 526.6L694 527.4L693.5 527.7L693 528.4L692.5 528.3L692 529L691.5 529.6L691 528.8L690.5 529.5L690 530.4L689.5 532L689 532.5L688.5 532.9L688 534.8L687.5 536.8L687 526.1L686.5 525.9L686 525.4L685.5 525.5L685 526.2L684.5 526.6L684 525.7L683.5 526.7L683 526.6L682.5 526.6L682 526.5L681.5 526.3L681 525.7L680.5 526.7L680 525.8L679.5 526.5L679 526.1L678.5 525.9L678 526.6L677.5 526.6L677 526.8L676.5 526.8L676 526.2L675.5 527.2L675 526.8L674.5 527.1L674 526.4L673.5 527.2L673 526L672.5 527.3L672 527.3L671.5 526.9L671 527.2L670.5 526.6L670 526.5L669.5 526.9L669 526.3L668.5 526.3L668 526.5L667.5 527.2L667 526.9L666.5 526.9L666 527.2L665.5 527.5L665 528.6L664.5 527.4L664 528.4L663.5 528.8L663 528.3L662.5 529.6L662 530.4L661.5 530.7L661 524.9L660.5 525.6L660 525L659.5 525.5L659 525.6L658.5 526.2L658 526.4L657.5 526.3L657 526.7L656.5 525.9L656 525.9L655.5 526.5L655 526.1L654.5 526.1L654 526.2L653.5 526.3L653 526.5L652.5 526.9L652 527.9L651.5 527.3L651 527.7L650.5 527.2L650 527L649.5 528.1L649 528.1L648.5 527.9L648 527.5L647.5 528.2L647 527.6L646.5 528.6L646 527.7L645.5 529.6L645 529.6L644.5 529.4L644 529.5L643.5 529.6L643 529.9L642.5 528.7L642 528.9L641.5 530.2L641 530.1L640.5 531.1L640 531.7L639.5 531.9L639 530.6L638.5 532.1L638 527.6L637.5 527.7L637 527.8L636.5 527L636 527L635.5 527.6L635 526.8L634.5 528L634 527.3L633.5 527.4L633 528L632.5 527.7L632 527.9L631.5 527.2L631 527.7L630.5 527.3L630 528.3L629.5 528.8L629 527L628.5 528.2L628 528.7L627.5 527.7L627 528.3L626.5 528.2L626 528.2L625.5 528.3L625 529L624.5 528.3L624 528.2L623.5 529L623 528.5L622.5 530.4L622 530L621.5 531.2L621 525.1L620.5 525.5L620 525.4L619.5 525.1L619 525.3L618.5 525.3L618 525.5L617.5 525.3L617 525.9L616.5 526L616 525.7L615.5 525.6L615 525.9L614.5 526L614 525.9L613.5 526L613 526.1L612.5 525.3L612 526.1L611.5 525.7L611 525.4L610.5 525.3L610 525.3L609.5 525.4L609 526.3L608.5 526.6L608 525.7L607.5 526.1L607 526.4L606.5 525.6L606 526.3L605.5 525.6L605 526.5L604.5 525.6L604 526.6L603.5 526.2L603 525.6L602.5 526.7L602 526.4L601.5 526.5L601 526.3L600.5 526.2L600 526.8L599.5 526L599 525.9L598.5 526.4L598 526.3L597.5 527.3L597 527.3L596.5 526.9L596 526.7L595.5 526.4L595 527.2L594.5 526.6L594 526.1L593.5 526.7L593 526.4L592.5 527.3L592 526.9L591.5 527.3L591 527.3L590.5 527L590 526.6L589.5 526.3L589 527.8L588.5 527.4L588 527.8L587.5 527.6L587 527.1L586.5 528L586 527.9L585.5 527.8L585 527.7L584.5 526.7L584 526.7L583.5 526.8L583 527.8L582.5 527.7L582 528.1L581.5 527.1L581 528.5L580.5 528.8L580 527.5L579.5 528.2L579 527.8L578.5 528.5L578 528.2L577.5 528.9L577 529.6L576.5 529.9L576 528.7L575.5 529.2L575 529.9L574.5 531.2L574 531.2L573.5 524L573 523.9L572.5 523.9L572 524.3L571.5 523.9L571 524.2L570.5 524.1L570 524.4L569.5 524.1L569 524L568.5 524L568 524.3L567.5 524.2L567 523.9L566.5 524.4L566 524.2L565.5 524.1L565 524.2L564.5 524.4L564 524.4L563.5 524.4L563 524.4L562.5 524.5L562 524.4L561.5 524.3L561 524.6L560.5 524.5L560 524.1L559.5 524.4L559 524.4L558.5 526.1L558 526.1L557.5 526L557 527.1L556.5 526.6L556 527.1L555.5 527.3L555 527.1L554.5 526.5L554 527L553.5 526.5L553 527.2L552.5 526.9L552 527.3L551.5 526.5L551 527.3L550.5 527.2L550 527.4L549.5 528.1L549 526.7L548.5 527.1L548 528.1L547.5 527.6L547 528.3L546.5 528.4L546 527.4L545.5 527.3L545 528.2L544.5 528L544 528.4L543.5 528.3L543 529.1L542.5 529.7L542 529.2L541.5 530.4L541 531.3L540.5 532.2L540 526.6L539.5 526.3L539 526.2L538.5 525.5L538 525.6L537.5 526.5L537 526.3L536.5 525.9L536 526L535.5 526.2L535 526.3L534.5 526.4L534 526.6L533.5 526.4L533 526.5L532.5 526.8L532 526.5L531.5 526L531 526.3L530.5 526.7L530 526.1L529.5 527L529 527.3L528.5 526.9L528 527.1L527.5 527.2L527 526.7L526.5 526.8L526 526.5L525.5 527.2L525 527.4L524.5 526.6L524 526.3L523.5 527L523 526.6L522.5 527L522 527.1L521.5 527.8L521 527.5L520.5 527.6L520 528.5L519.5 527.3L519 528.9L518.5 528.8L518 527.9L517.5 528.6L517 528.8L516.5 529.3L516 530.4L515.5 530.8L515 527L514.5 526.8L514 525.9L513.5 527.2L513 526.1L512.5 526.9L512 526.8L511.5 527.1L511 527.4L510.5 526.3L510 527.5L509.5 527.4L509 527.1L508.5 526.8L508 526.3L507.5 527.5L507 526.2L506.5 527.5L506 526.6L505.5 527.6L505 527.1L504.5 526.8L504 526.6L503.5 527.1L503 526.9L502.5 527.5L502 527.9L501.5 527L501 527.6L500.5 528.3L500 527.2L499.5 528.1L499 528.7L498.5 528.6L498 528.2L497.5 528L497 528.6L496.5 527.6L496 529L495.5 528.3L495 528.8L494.5 528.6L494 528.6L493.5 529.4L493 530.1L492.5 530.1L492 527.8L491.5 528L491 527.5L490.5 528.3L490 527.2L489.5 528.3L489 528.3L488.5 528.6L488 527.6L487.5 528.1L487 527L486.5 527.6L486 526.9L485.5 527.8L485 527.6L484.5 527.1L484 527.2L483.5 528.6L483 528L482.5 527.8L482 528.4L481.5 527.4L481 527.3L480.5 528.3L480 527.3L479.5 527.2L479 527.5L478.5 528.9L478 528.7L477.5 528.5L477 528.6L476.5 528.5L476 528.8L475.5 528.3L475 528.5L474.5 528.2L474 528.8L473.5 527.9L473 529.3L472.5 528.6L472 529.5L471.5 528.8L471 528.7L470.5 528.5L470 529.7L469.5 529.9L469 530.6L468.5 529.6L468 530.9L467.5 531.9L467 531.5L466.5 533.7L466 527.4L465.5 527.8L465 527.8L464.5 527.9L464 527.1L463.5 527.2L463 527.3L462.5 527.3L462 528.2L461.5 527L461 527.8L460.5 528.1L460 527.7L459.5 528.3L459 528.4L458.5 528.6L458 528.4L457.5 528.4L457 526.9L456.5 528.3L456 527.8L455.5 528.7L455 527L454.5 526.9L454 527.3L453.5 527.2L453 527.8L452.5 528.5L452 527.4L451.5 527L451 528.3L450.5 528.2L450 527.7L449.5 528.3L449 528.4L448.5 527.7L448 527.9L447.5 528.2L447 529.1L446.5 528.5L446 528.8L445.5 528.6L445 528.3L444.5 527.6L444 528.6L443.5 529.3L443 528L442.5 529.1L442 528.5L441.5 528.1L441 528.1L440.5 528.3L440 528.2L439.5 527.4L439 528.4L438.5 527.2L438 527.5L437.5 528.8L437 528.3L436.5 527.4L436 527.8L435.5 529.1L435 527.7L434.5 529.2L434 527.9L433.5 529.4L433 528L432.5 529.1L432 529.6L431.5 528.7L431 529.7L430.5 529.5L430 529.4L429.5 529.8L429 530.7L428.5 531.1L428 532.4L427.5 533.9L427 534.8L426.5 536.8L426 526.4L425.5 527L425 526.6L424.5 527.8L424 526.5L423.5 526.6L423 526.9L422.5 526.4L422 527.4L421.5 527.5L421 526.8L420.5 526.7L420 527.6L419.5 527.1L419 526.7L418.5 526.6L418 526.9L417.5 526.5L417 526.6L416.5 527.8L416 526.6L415.5 527.2L415 527.3L414.5 527.9L414 527.7L413.5 526.9L413 526.6L412.5 526.8L412 527.3L411.5 527.1L411 527.6L410.5 527.6L410 527.9L409.5 526.8L409 526.9L408.5 528.1L408 528.1L407.5 527.8L407 527.1L406.5 527.9L406 527.6L405.5 528.1L405 527.8L404.5 528.9L404 527.7L403.5 528.8L403 528.7L402.5 529.7L402 529.4L401.5 530.1L401 526.3L400.5 526.3L400 525.9L399.5 526.7L399 526.7L398.5 525.8L398 526.8L397.5 526.1L397 526.8L396.5 526.5L396 526.6L395.5 526.2L395 526.6L394.5 526.3L394 527.6L393.5 527.4L393 526.2L392.5 527.3L392 526.5L391.5 527.6L391 526.7L390.5 527L390 526.6L389.5 526.8L389 527.1L388.5 528.5L388 528.3L387.5 527.9L387 528.1L386.5 528.3L386 527.5L385.5 528.8L385 528.8L384.5 529.1L384 527.7L383.5 528.3L383 529.5L382.5 528.2L382 529L381.5 528L381 529.4L380.5 528.8L380 529.5L379.5 529L379 529.7L378.5 530.8L378 531.3L377.5 531.7L377 526.6L376.5 526.4L376 526L375.5 527.1L375 526.1L374.5 527.5L374 526.2L373.5 526.4L373 526.5L372.5 527.7L372 526.8L371.5 527.7L371 526.8L370.5 526.9L370 527.2L369.5 527L369 526.7L368.5 526.6L368 528.2L367.5 527.1L367 527.4L366.5 528.3L366 528.3L365.5 528.9L365 528.6L364.5 528.2L364 529.4L363.5 528.2L363 528.3L362.5 529.9L362 530.6L361.5 530.7L361 531.2L360.5 525.5L360 526L359.5 525.3L359 525.1L358.5 525.3L358 525.6L357.5 526.2L357 525.5L356.5 526.2L356 525.9L355.5 525.6L355 525.7L354.5 526.5L354 526.2L353.5 526.6L353 526.4L352.5 525.7L352 526.9L351.5 525.9L351 526.1L350.5 527.2L350 525.9L349.5 526L349 526L348.5 526.8L348 527L347.5 526.3L347 526.2L346.5 526.6L346 527L345.5 527.5L345 527.1L344.5 526.4L344 527L343.5 527.9L343 527.8L342.5 526.9L342 526.8L341.5 527L341 527.1L340.5 526.9L340 528.6L339.5 527.3L339 528.2L338.5 527.6L338 527.9L337.5 528.8L337 528.7L336.5 527.8L336 528.6L335.5 528.7L335 528.4L334.5 528.3L334 528.3L333.5 529.1L333 527.6L332.5 527.9L332 529.2L331.5 527.7L331 528.4L330.5 528.4L330 528.1L329.5 528.1L329 528.9L328.5 529.8L328 528.9L327.5 530.1L327 529.2L326.5 529.1L326 529.5L325.5 529.5L325 529L324.5 529.8L324 529.5L323.5 530.4L323 529.7L322.5 529.1L322 530.4L321.5 530.1L321 530.5L320.5 530.9L320 530.3L319.5 530.3L319 530.9L318.5 530.6L318 529.9L317.5 530.9L317 530L316.5 531.9L316 532.2L315.5 531.2L315 531.4L314.5 532L314 532L313.5 533.9L313 533.9Z" fill="#d6e6fb"/>
<path clip-path="url(#gc)" d="M834 519.8L834.5 519.6L835 512.2L835.5 514L836 513L836.5 513.2L837 514.6L837.5 514.1L838 515.8L838.5 514.4L839 514.3L839.5 516.2L840 514.6L840.5 516.3L841 516.6L841.5 516.1L842 516.3L842.5 516.7L843 515.6L843.5 516L844 516L844.5 516.6L845 516.5L845.5 516.6L846 516.5L846.5 516.6L847 517.4L847.5 516.3L848 517.1L848.5 517.4L849 517.8L849.5 516.5L850 516.9L850.5 516.2L851 517L851.5 517.6L852 516.7L852.5 516.5L853 517L853.5 517L854 517.8L854.5 518.3L855 517.3L855.5 516.9L856 516.6L856.5 517.7L857 518L857.5 518L858 517.3L858.5 518.4L859 517.7L859.5 517.1L860 517.3L860.5 517.1L861 519L861.5 517.7L862 517.7L862.5 518.9L863 517.5L863.5 518.8L864 518.5L864.5 519.3L865 518.9L865.5 519.2L866 518L866.5 517.9L867 518.3L867.5 518.6L868 518.8L868.5 519.4L869 518.2L869.5 519.2L870 519L870.5 518.3L871 519.3L871.5 519.2L872 519.7L872.5 519L873 519.5L873.5 519.2L874 519.9L874.5 519.9L875 520.1L875.5 520L876 519.9L876.5 519.3L877 520.2L877.5 519.8L878 520.3L878.5 519.6L879 520.2L879.5 520.2L880 519.9L880.5 520.2L881 519.9L881.5 520.7L882 520L882.5 514.8L883 514.7L883.5 516.1L884 516.6L884.5 516.1L885 517.3L885.5 516.6L886 516.7L886.5 518.4L887 517.6L887.5 517.5L888 517.8L888.5 518L889 518.1L889.5 519L890 517.8L890.5 518.2L891 518.2L891.5 518.2L892 518.4L892.5 518.8L893 519.3L893.5 518.1L894 518.3L894.5 519L895 519.6L895.5 518.2L896 519.5L896.5 519.2L897 518.4L897.5 519L898 519.1L898.5 519.8L899 514.3L899.5 515.8L900 514.7L900.5 516.5L901 515.7L901.5 516.5L902 517.2L902.5 516.2L903 517.5L903.5 517.6L904 516.7L904.5 517.1L905 517.3L905.5 517.6L906 518.5L906.5 517.8L907 517.9L907.5 518.7L908 517L908.5 518.1L909 517.2L909.5 517.3L910 517.4L910.5 518.6L911 518.3L911.5 518.8L912 519.2L912.5 518.9L913 519.3L913.5 518.8L914 519.2L914.5 519.5L915 519.6L915.5 519.6L916 519.6L916.5 519.6L917 519.5L917.5 518.9L918 519.6L918.5 518.8L919 518.7L919.5 519.5L920 519.9L920.5 519.6L921 520L921.5 519.4L922 519.6L922.5 520.2L923 515.8L923.5 516L924 517.5L924.5 518L925 518.1L925.5 516.9L926 518.4L926.5 517.4L927 518L927.5 517.5L928 519L928.5 518.1L929 518.1L929.5 518.3L930 518.2L930.5 517.8L931 517.9L931.5 518.5L932 518.8L932.5 518.5L933 518.8L933.5 518.7L934 519.2L934.5 517.8L935 518.4L935.5 518.7L936 518.4L936.5 518.9L937 518.6L937.5 519.1L938 518.3L938.5 518.2L939 518.3L939.5 518L940 519.2L940.5 519.2L941 518.3L941.5 519.2L942 518.4L942.5 518.1L943 518.1L943.5 518.7L944 518.9L944.5 518.6L945 519.1L945.5 518.4L946 518.1L946.5 518.8L947 518.3L947.5 519.1L948 509.5L948.5 512.1L949 512.9L949.5 513.5L950 514.7L950.5 514L951 514.5L951.5 516.2L952 515L952.5 515.6L953 515.9L953.5 516.3L954 516.9L954.5 517.5L955 517.4L955.5 517.5L956 517L956.5 517.6L957 516.8L957.5 518.2L958 518.2L958.5 518.1L959 518.7L959.5 518L960 517.1L960.5 518L961 517.8L961.5 517.9L962 517.6L962.5 517.6L963 517.3L963.5 517.8L964 516.8L964.5 517.3L965 517.8L965.5 517.3L966 517.1L966.5 517.3L967 517.6L967.5 517.8L968 517.5L968.5 518.3L969 517.4L969.5 518.7L970 518L970.5 517.8L971 517.7L971.5 517.9L972 517.1L972.5 518.5L973 517.4L973.5 518.7L974 517.7L974.5 517.9L975 517.6L975.5 518.3L976 518.6L976.5 517.8L977 518.3L977.5 518.9L978 517.4L978.5 518.6L979 517.4L979.5 518.1L980 518.7L980.5 517.6L981 517.4L981.5 518.8L982 518.5L982.5 518.4L983 518L983.5 518L984 518.8L984.5 517.8L985 517.7L985.5 517.6L986 518.7L986.5 518.3L987 517.6L987.5 519.1L988 512.4L988.5 513.2L989 513.7L989.5 515.5L990 516.2L990.5 515.2L991 516.5L991.5 516.5L992 517.4L992.5 517.5L993 517.4L993.5 517.9L994 517.6L994.5 516.7L995 516.7L995.5 516.5L996 517.1L996.5 518.4L997 517.5L997.5 518L998 517.4L998.5 516.9L999 517.9L999.5 518.2L1000 517.7L1000.5 518.4L1001 518.2L1001.5 518.7L1002 517.5L1002.5 518.6L1003 518L1003.5 517L1004 517.7L1004.5 518.3L1005 517.7L1005.5 518.6L1006 517.4L1006.5 517.4L1007 518.1L1007.5 517.6L1008 518.3L1008.5 517.7L1009 518.4L1009.5 518.4L1010 519L1010.5 517.7L1011 519.1L1011.5 517.9L1012 518.8L1012.5 517.7L1013 517.9L1013.5 518.1L1014 518.5L1014.5 515.8L1015 515.9L1015.5 517.7L1016 516.4L1016.5 517.8L1017 517.6L1017.5 517.3L1018 517.1L1018.5 517.7L1019 518.3L1019.5 518.5L1020 517.3L1020.5 517.7L1021 517.6L1021.5 518L1022 518.1L1022.5 518.1L1023 518.6L1023.5 518.3L1024 518.4L1024.5 517.9L1025 518.5L1025.5 518.5L1026 518.6L1026.5 518.6L1027 518.8L1027.5 519.4L1028 518.5L1028.5 518.1L1029 519.1L1029.5 518.1L1030 518.1L1030.5 518.4L1031 519.3L1031.5 519L1032 519.1L1032.5 518.7L1033 519L1033.5 518.9L1034 519.3L1034.5 519.2L1035 519.3L1035.5 519.4L1036 518.9L1036.5 519L1037 515.2L1037.5 515.2L1038 515.9L1038.5 517.6L1039 517.6L1039.5 516.7L1040 516.8L1040.5 517.1L1041 517.2L1041.5 518.3L1042 518.1L1042.5 517.5L1043 517.7L1043.5 517.9L1044 517.7L1044.5 519.1L1045 519.3L1045.5 518.5L1046 518.1L1046.5 518.2L1047 519.2L1047.5 519.7L1048 519.2L1048.5 518.4L1049 518.9L1049.5 518.4L1050 519.2L1050.5 518.7L1051 518.7L1051.5 518.6L1052 519.2L1052.5 519.5L1053 519.5L1053.5 519.9L1054 518.9L1054.5 520L1055 519.7L1055.5 519.7L1056 519.9L1056.5 519.3L1057 519.7L1057.5 519.1L1058 519.6L1058.5 520.1L1059 519.8L1059.5 519.7L1060 519.8L1060.5 519.6L1061 519.2L1061.5 520L1062 513.8L1062.5 513.8L1063 514.7L1063.5 516.7L1064 516.5L1064.5 517L1065 516.4L1065.5 517.5L1066 518.2L1066.5 517.2L1067 518.5L1067.5 518.5L1068 517.5L1068.5 517.6L1069 517.7L1069.5 518L1070 518.1L1070.5 518.3L1071 518L1071.5 517.8L1072 519L1072.5 518.2L1073 519.3L1073.5 518.2L1074 518.6L1074.5 519L1075 518.3L1075.5 519.4L1076 518.2L1076.5 518.9L1077 518.6L1077.5 518.6L1078 519.7L1078.5 518.5L1079 518.6L1079.5 519.2L1080 519.2L1080.5 519.2L1081 521.3L1081.5 521.4L1082 521.1L1082.5 521.3L1083 521.2L1083.5 521.4L1084 521.4L1084.5 521.2L1085 521.5L1085.5 521.6L1086 521.5L1086.5 521.4L1087 521.2L1087.5 521.7L1088 521.4L1088.5 521.7L1089 521.7L1089.5 521.7L1090 521.6L1090.5 521.6L1091 521.3L1091.5 521.6L1092 521.6L1092.5 521.7L1093 521.3L1093.5 521.7L1094 521.5L1094.5 521.8L1095 521.5L1095.5 521.8L1096 514.8L1096.5 515.5L1097 515.9L1097.5 516.9L1098 516.7L1098.5 516.2L1099 517.7L1099.5 516.7L1100 517.3L1100.5 518.1L1101 517.7L1101.5 518.4L1102 518.7L1102.5 518.6L1103 517.8L1103.5 518.5L1104 517.8L1104.5 518.2L1105 517.4L1105.5 518.2L1106 518.1L1106.5 519.1L1107 519L1107.5 518.7L1108 517.7L1108.5 519.2L1109 517.7L1109.5 518.2L1110 518.3L1110.5 518.9L1111 518.1L1111.5 519.3L1112 518.7L1112.5 519.4L1113 518.5L1113.5 519.2L1114 518.2L1114.5 518.5L1115 518.5L1115.5 519.5L1116 519L1116.5 518.3L1117 519.1L1117.5 519.6L1118 518.4L1118.5 519.1L1119 518.9L1119.5 519L1120 518.9L1120.5 519.6L1121 519.7L1121.5 519.3L1122 519.5L1122.5 518.7L1123 519.7L1123.5 518.7L1124 519L1124.5 519L1125 519.8L1125.5 519.2L1126 520.1L1126.5 520L1127 520.2L1127.5 519.4L1128 520.3L1128.5 519.8L1129 520L1129.5 520L1130 519.6L1130.5 520.4L1131 519.4L1131.5 520.2L1132 519.9L1132.5 519.4L1133 520.3L1133.5 519.8L1134 519.7L1134.5 519.9L1135 519.7L1135.5 520.4L1136 520.2L1136.5 519.8L1137 520.4L1137.5 520.6L1138 520.4L1138.5 520.1L1139 519.8L1139.5 520.8L1140 520L1140.5 520.9L1141 520.4L1141.5 520.4L1142 520.1L1142.5 520.9L1143 514.8L1143.5 515L1144 516.2L1144.5 516.2L1145 517.1L1145.5 516.7L1146 517.5L1146.5 517.9L1147 517.6L1147.5 517L1148 517L1148.5 517.8L1149 517.3L1149.5 517.3L1150 518.7L1150.5 518.3L1151 517.6L1151.5 518.4L1152 517.2L1152.5 517.3L1153 517.7L1153.5 518.7L1154 519L1154.5 518.6L1155 517.6L1155.5 518.9L1156 518L1156.5 518L1157 518.6L1157.5 518L1158 518.2L1158.5 517.5L1159 517.7L1159.5 518.7L1160 513.9L1160.5 513.9L1161 514.2L1161.5 514.3L1162 515.7L1162.5 515.4L1163 516.6L1163.5 516.4L1164 516.5L1164.5 515.6L1165 515.8L1165.5 515.8L1166 517.6L1166.5 516.1L1167 516.3L1167.5 517.3L1168 516.8L1168.5 517.6L1169 517.3L1169.5 517.9L1170 518.4L1170.5 517.1L1171 518.7L1171.5 518L1172 518.3L1172.5 519.1L1173 519.1L1173.5 518.8L1174 519.3L1174.5 518.1L1175 518.4L1175.5 518.4L1176 518.8L1176.5 519.4L1177 519.6L1177.5 520.1L1178 519.4L1178.5 519L1179 519.6L1179.5 519.6L1180 519.5L1180.5 519.9L1181 520.5L1181.5 520.1L1182 520.2L1182.5 520.2L1183 515.3L1183.5 515.3L1184 515.6L1184.5 516.8L1185 516.6L1185.5 517.6L1186 517.1L1186.5 518.4L1187 517.7L1187.5 518.5L1188 518.3L1188.5 518.8L1189 518.6L1189.5 518.6L1190 519L1190.5 518.2L1191 518.5L1191.5 518.9L1192 518.6L1192.5 518.7L1193 518.5L1193.5 519.3L1194 518.5L1194.5 518.4L1195 518.4L1195.5 519.2L1196 518.7L1196.5 518.9L1197 519L1197.5 519.8L1198 519.6L1198.5 519.6L1199 520L1199.5 518.7L1200 519.3L1200.5 519.4L1201 519L1201.5 519.2L1202 519.5L1202.5 519.7L1203 519.2L1203.5 519.6L1204 519.9L1204.5 519.9L1205 519.5L1205.5 519.2L1206 519.3L1206.5 519.6L1207 519.5L1207.5 520L1208 519.8L1208 526.3L1207.5 526.2L1207 526.1L1206.5 526.1L1206 525.5L1205.5 526.7L1205 526.3L1204.5 525.7L1204 526.3L1203.5 525.9L1203 526.7L1202.5 525.9L1202 526.8L1201.5 525.9L1201 526.6L1200.5 527L1200 526.6L1199.5 527.1L1199 526.3L1198.5 527.1L1198 526.1L1197.5 526.3L1197 527L1196.5 526.8L1196 526.3L1195.5 527.3L1195 526.5L1194.5 526.9L1194 526.7L1193.5 526.2L1193 526.1L1192.5 526.4L1192 526.7L1191.5 526.3L1191 527L1190.5 526.3L1190 526.8L1189.5 527L1189 527.7L1188.5 527.5L1188 527L1187.5 527.2L1187 527L1186.5 527.4L1186 528.1L1185.5 528.7L1185 529.2L1184.5 528.9L1184 528.9L1183.5 530.7L1183 530.7L1182.5 525.7L1182 525.6L1181.5 525.3L1181 525.2L1180.5 526.1L1180 525.5L1179.5 525.7L1179 525.9L1178.5 526.5L1178 525.8L1177.5 527.1L1177 526.8L1176.5 525.9L1176 526.4L1175.5 526.3L1175 527.5L1174.5 527.3L1174 526.3L1173.5 527L1173 527.2L1172.5 528L1172 527.3L1171.5 527.8L1171 527.2L1170.5 528.6L1170 527.4L1169.5 528L1169 528.1L1168.5 529L1168 528.6L1167.5 529.4L1167 528.9L1166.5 529.1L1166 528.2L1165.5 529.5L1165 529.7L1164.5 528.7L1164 529L1163.5 529.4L1163 529.3L1162.5 531.3L1162 530.4L1161.5 531.1L1161 531.6L1160.5 532.1L1160 532.1L1159.5 528.4L1159 528L1158.5 528L1158 527.3L1157.5 528.5L1157 527.1L1156.5 527.9L1156 528.4L1155.5 528.1L1155 527L1154.5 528L1154 528.4L1153.5 528.6L1153 528.1L1152.5 528.3L1152 527.8L1151.5 528L1151 527.8L1150.5 528.8L1150 528.6L1149.5 527.9L1149 528.9L1148.5 528.2L1148 528.5L1147.5 529.2L1147 527.8L1146.5 529L1146 529L1145.5 528.4L1145 530L1144.5 530.5L1144 530.5L1143.5 530.7L1143 531.2L1142.5 525L1142 525.4L1141.5 525L1141 525.5L1140.5 525.6L1140 525.7L1139.5 525.1L1139 525.7L1138.5 525.1L1138 525.3L1137.5 525.9L1137 525.7L1136.5 525.4L1136 525.2L1135.5 525.9L1135 526.1L1134.5 525.9L1134 525.4L1133.5 526L1133 526.1L1132.5 525.3L1132 526.4L1131.5 525.3L1131 526.4L1130.5 525.5L1130 525.6L1129.5 525.9L1129 526.5L1128.5 526.5L1128 525.6L1127.5 526.5L1127 526.2L1126.5 526L1126 526.7L1125.5 526.7L1125 526.9L1124.5 526.3L1124 526.1L1123.5 525.8L1123 525.9L1122.5 526.4L1122 526.4L1121.5 527.1L1121 527L1120.5 525.9L1120 526.4L1119.5 526.2L1119 526.6L1118.5 526.9L1118 526.1L1117.5 526.1L1117 527.2L1116.5 526.3L1116 527.4L1115.5 527.2L1115 526.9L1114.5 526.7L1114 526.6L1113.5 527L1113 527L1112.5 526.3L1112 527.8L1111.5 527.6L1111 526.9L1110.5 527.5L1110 527.5L1109.5 527.4L1109 526.5L1108.5 528L1108 527.5L1107.5 527.4L1107 526.8L1106.5 527.1L1106 526.8L1105.5 527.4L1105 526.9L1104.5 526.9L1104 528.4L1103.5 527.9L1103 528.4L1102.5 528.7L1102 528.6L1101.5 528.5L1101 527.5L1100.5 527.3L1100 527.4L1099.5 529.2L1099 528.2L1098.5 528.5L1098 528.4L1097.5 529.7L1097 529.4L1096.5 530.1L1096 531.2L1095.5 523.9L1095 523.9L1094.5 524.1L1094 524.3L1093.5 524.2L1093 524.2L1092.5 524.2L1092 524L1091.5 523.9L1091 524.1L1090.5 524.3L1090 524.2L1089.5 524L1089 524.5L1088.5 524.1L1088 524.2L1087.5 524.3L1087 524.4L1086.5 524.1L1086 524L1085.5 524.4L1085 524.3L1084.5 524.6L1084 524.5L1083.5 524L1083 524.4L1082.5 524.2L1082 524.3L1081.5 524.3L1081 524.4L1080.5 526.4L1080 526L1079.5 526.3L1079 526.9L1078.5 527.1L1078 526.8L1077.5 527.5L1077 526.6L1076.5 526.6L1076 526.4L1075.5 526.5L1075 526.7L1074.5 527.3L1074 526.8L1073.5 526.3L1073 527.4L1072.5 526.8L1072 527L1071.5 527L1071 528L1070.5 528L1070 526.9L1069.5 527.1L1069 528.1L1068.5 527L1068 528.6L1067.5 527.6L1067 527.7L1066.5 527.5L1066 529.4L1065.5 528.5L1065 528.5L1064.5 528.9L1064 529.8L1063.5 529.3L1063 530.2L1062.5 532.2L1062 532.2L1061.5 526.1L1061 526.6L1060.5 526.1L1060 525.7L1059.5 525.6L1059 525.7L1058.5 526.8L1058 525.9L1057.5 526.4L1057 526.2L1056.5 525.9L1056 526L1055.5 527L1055 526.7L1054.5 527L1054 526L1053.5 526L1053 526.6L1052.5 526.3L1052 526.5L1051.5 526.8L1051 526.2L1050.5 526.5L1050 526L1049.5 527.1L1049 526.3L1048.5 526.8L1048 527L1047.5 526.3L1047 526.9L1046.5 526.7L1046 527.4L1045.5 527.5L1045 526.4L1044.5 527.2L1044 526.6L1043.5 527.5L1043 527.9L1042.5 528.2L1042 527.2L1041.5 527.4L1041 528.1L1040.5 528.3L1040 528.6L1039.5 528.5L1039 528.4L1038.5 529.7L1038 530.1L1037.5 530.8L1037 530.8L1036.5 526.9L1036 526.4L1035.5 527L1035 526.6L1034.5 526L1034 527.4L1033.5 527L1033 526.3L1032.5 527.1L1032 526.8L1031.5 526.3L1031 527.5L1030.5 526.3L1030 527.3L1029.5 527.6L1029 526.6L1028.5 526.6L1028 526.3L1027.5 526.9L1027 526.5L1026.5 526.7L1026 526.4L1025.5 527L1025 527.2L1024.5 527.3L1024 527.1L1023.5 527.3L1023 527.1L1022.5 527.1L1022 528.2L1021.5 527.9L1021 527.3L1020.5 527.5L1020 527.3L1019.5 528.6L1019 527.5L1018.5 529L1018 528.9L1017.5 527.6L1017 528.6L1016.5 527.8L1016 529.1L1015.5 528.6L1015 529.1L1014.5 530.1L1014 527.1L1013.5 527.3L1013 527.9L1012.5 527.6L1012 528.3L1011.5 527.3L1011 527.6L1010.5 527.6L1010 526.8L1009.5 527.6L1009 527.3L1008.5 527.2L1008 528.5L1007.5 527.6L1007 528.5L1006.5 527.3L1006 528.1L1005.5 528.5L1005 527.4L1004.5 528.7L1004 527.2L1003.5 528.2L1003 528.8L1002.5 528.5L1002 528.9L1001.5 528.2L1001 529L1000.5 527.3L1000 528.9L999.5 527.5L999 528.4L998.5 527.3L998 527.5L997.5 528.7L997 527.7L996.5 528.7L996 527.7L995.5 528L995 529.4L994.5 528.6L994 528.3L993.5 528.5L993 529.1L992.5 528.5L992 529.6L991.5 528.8L991 530.2L990.5 529.4L990 530.8L989.5 532L989 532.6L988.5 533L988 533.7L987.5 527.4L987 526.8L986.5 528.1L986 526.8L985.5 527.9L985 528.3L984.5 527.3L984 526.9L983.5 526.8L983 528.2L982.5 528.3L982 527.7L981.5 527.4L981 527.7L980.5 527.8L980 528L979.5 528.6L979 527.4L978.5 528.2L978 528.2L977.5 528.3L977 527.2L976.5 528.4L976 528.6L975.5 527.1L975 527.1L974.5 528L974 527.7L973.5 528L973 527.3L972.5 528.1L972 528.5L971.5 527.7L971 527.5L970.5 528.6L970 527.1L969.5 528.9L969 527.5L968.5 528.7L968 527.3L967.5 527.3L967 527.3L966.5 528L966 528.9L965.5 528.3L965 529.2L964.5 529.1L964 529.1L963.5 527.9L963 528.1L962.5 528.2L962 528.6L961.5 528.6L961 527.7L960.5 527.5L960 528.8L959.5 528.2L959 527.9L958.5 527.4L958 527.6L957.5 528.1L957 527.6L956.5 528.8L956 528.2L955.5 529.1L955 528L954.5 529.4L954 529.2L953.5 528.6L953 530.3L952.5 530L952 530L951.5 531.1L951 530.9L950.5 532.1L950 532.9L949.5 533.3L949 534.4L948.5 534.9L948 536.8L947.5 526.3L947 526.9L946.5 527.1L946 527.3L945.5 526.3L945 527.1L944.5 526.7L944 527.1L943.5 526.8L943 527.8L942.5 527.4L942 526.4L941.5 527L941 527.2L940.5 527.7L940 526.7L939.5 527.9L939 527.8L938.5 526.8L938 527.9L937.5 527.6L937 526.7L936.5 527.7L936 526.8L935.5 526.7L935 527.8L934.5 527.7L934 527.4L933.5 527.4L933 527.3L932.5 526.7L932 527.2L931.5 526.9L931 527L930.5 526.6L930 528L929.5 527.6L929 527.8L928.5 527.5L928 527.9L927.5 527.6L927 528.4L926.5 527.2L926 528.4L925.5 527.6L925 528.7L924.5 529.5L924 529.5L923.5 528.9L923 530.1L922.5 526L922 525.5L921.5 526.3L921 526.4L920.5 526.8L920 526.2L919.5 526.1L919 526.7L918.5 527L918 525.9L917.5 526.4L917 526.3L916.5 526.3L916 526.5L915.5 526.4L915 527.2L914.5 526.8L914 526.4L913.5 527.9L913 526.6L912.5 527.9L912 526.6L911.5 527.2L911 527.9L910.5 526.9L910 528.1L909.5 528.2L909 528.6L908.5 528.5L908 528.3L907.5 528.4L907 528.1L906.5 527.4L906 527.8L905.5 527.8L905 528.9L904.5 527.8L904 528.2L903.5 528.4L903 529L902.5 528.5L902 528.9L901.5 528.8L901 529.6L900.5 530.3L900 530.3L899.5 531.5L899 531.7L898.5 527L898 527.2L897.5 526.5L897 526.2L896.5 526.8L896 526.2L895.5 527L895 526.3L894.5 527.3L894 527.3L893.5 526.3L893 527.3L892.5 527.4L892 526.9L891.5 526.5L891 527.9L890.5 527.6L890 527.1L889.5 527.7L889 527.2L888.5 526.8L888 528.1L887.5 528.2L887 528.6L886.5 527.9L886 528.1L885.5 529L885 529.5L884.5 529.1L884 528.5L883.5 529.8L883 529.9L882.5 531.2L882 525.6L881.5 526L881 525.5L880.5 525.2L880 525.1L879.5 526.3L879 526.3L878.5 525.8L878 525.9L877.5 526L877 526.1L876.5 525.8L876 526.7L875.5 526.6L875 526.1L874.5 525.9L874 526L873.5 526.4L873 526.4L872.5 527.1L872 526L871.5 527L871 526L870.5 526.9L870 526.3L869.5 527.2L869 526.5L868.5 527.7L868 526.3L867.5 527.8L867 526.4L866.5 527.8L866 527.2L865.5 526.6L865 527.4L864.5 528L864 528.1L863.5 527.4L863 528.4L862.5 527.3L862 527.4L861.5 528L861 528.5L860.5 527.2L860 527L859.5 527.7L859 527.9L858.5 528.6L858 529.1L857.5 527.3L857 527.5L856.5 527.4L856 529.2L855.5 528L855 529.4L854.5 529.4L854 527.5L853.5 527.9L853 529.3L852.5 528.7L852 528.1L851.5 528.6L851 528.9L850.5 529.2L850 529.9L849.5 529.9L849 530L848.5 528.2L848 529L847.5 528.4L847 528.5L846.5 529.8L846 530.1L845.5 528.7L845 530.6L844.5 529.1L844 529.2L843.5 530.3L843 530L842.5 530.6L842 530.9L841.5 529.4L841 529.3L840.5 529.4L840 529.7L839.5 529.8L839 530.2L838.5 531.6L838 531.6L837.5 530.6L837 530.7L836.5 532.8L836 532.4L835.5 532.9L835 533.9L834.5 527.1L834 526.1Z" fill="#7fa8dc"/>
<path d="M831.8 467.8L835.8 467.8L833.8 470.8Z M831.8 538.9L835.8 538.9L833.8 535.9Z" fill="#151515"/>
<text x="316.7" y="477.8" font-size="8.8" font-weight="bold" fill="#e9f0fa">My Guitar</text>
<text x="1131" y="477.8" font-size="8.8" font-weight="bold" fill="#e9f0fa">My Guitar</text>
<g fill="none" stroke="#e8eef8" stroke-width="1"><circle cx="365.3" cy="475.3" r="3.6"/><circle cx="369.7" cy="475.3" r="3.6"/></g>
<g fill="none" stroke="#e8eef8" stroke-width="1"><circle cx="1178.8" cy="475.3" r="3.6"/><circle cx="1183.2" cy="475.3" r="3.6"/></g>
<rect x="312.0" y="540.5" width="988.5" height="73.0" rx="3.5" fill="#151515"/>
<rect x="312.5" y="541.0" width="987.5" height="72.0" rx="3" fill="#3770aa"/>
<path d="M313 583L313.5 583L314 583L314.5 583L315 582.9L315.5 582.9L316 582.9L316.5 583L317 582.9L317.5 583L318 583L318.5 583L319 582.9L319.5 582.9L320 583L320.5 583L321 583L321.5 583L322 583L322.5 583L323 582.9L323.5 583L324 583L324.5 583L325 583L325.5 583L326 583L326.5 583L327 583L327.5 583L328 583L328.5 582.9L329 583L329.5 583L330 583L330.5 583L331 582.9L331.5 583L332 582.9L332.5 583L333 582.9L333.5 583L334 583L334.5 583L335 583L335.5 582.9L336 583L336.5 583L337 583L337.5 583L338 583L338.5 583L339 583L339.5 583L340 583L340.5 582.9L341 582.9L341.5 583L342 583L342.5 583L343 582.9L343.5 583L344 583L344.5 583L345 582.9L345.5 583L346 583L346.5 582.9L347 583L347.5 582.9L348 583L348.5 583L349 583L349.5 583L350 582.9L350.5 583L351 582.9L351.5 583L352 583L352.5 583L353 583L353.5 583L354 583L354.5 583L355 583L355.5 583L356 582.9L356.5 583L357 583L357.5 583L358 583L358.5 583L359 583L359.5 582.9L360 583L360.5 583L361 583L361.5 582.9L362 582.9L362.5 582.9L363 583L363.5 582.9L364 583L364.5 566.2L365 566.2L365.5 566.5L366 566.4L366.5 566.7L367 566.7L367.5 566.7L368 567.2L368.5 569.6L369 568.6L369.5 570.5L370 571.5L370.5 571.6L371 573.7L371.5 572.4L372 573.6L372.5 574.6L373 574.5L373.5 575.8L374 576L374.5 574.7L375 576.3L375.5 575.9L376 577.4L376.5 576.5L377 575.7L377.5 575.3L378 576.2L378.5 575.1L379 575.2L379.5 575.1L380 572L380.5 572.7L381 572.1L381.5 572.7L382 571.2L382.5 571.2L383 571L383.5 570.3L384 573.2L384.5 571.2L385 571.5L385.5 572.6L386 570.5L386.5 569.3L387 569.3L387.5 571L388 571.2L388.5 569.6L389 571.1L389.5 570.7L390 572.5L390.5 572.4L391 571.8L391.5 571.9L392 571.1L392.5 571.3L393 571.5L393.5 571.2L394 571.2L394.5 573.4L395 573.1L395.5 573.2L396 572.7L396.5 575.2L397 574.6L397.5 575.5L398 573.4L398.5 575.8L399 575.1L399.5 576.2L400 575.7L400.5 576.4L401 576.6L401.5 575.9L402 577.7L402.5 577.5L403 576.6L403.5 576.7L404 577.9L404.5 578.2L405 577.9L405.5 577.8L406 577.5L406.5 577.5L407 577.2L407.5 576.7L408 577.6L408.5 578.4L409 577.9L409.5 576.8L410 577.8L410.5 577.9L411 576.9L411.5 577.4L412 578.3L412.5 578L413 578.3L413.5 578.5L414 577.7L414.5 578.3L415 578.2L415.5 578.1L416 578.2L416.5 577.5L417 578.5L417.5 578L418 578.7L418.5 579.4L419 579.6L419.5 578.6L420 579L420.5 579.5L421 579.7L421.5 579.7L422 580.3L422.5 580.4L423 580.1L423.5 579.9L424 580.8L424.5 580.1L425 580L425.5 580.6L426 581L426.5 581L427 580.5L427.5 581L428 580.3L428.5 580.5L429 580.5L429.5 580.3L430 581.3L430.5 581.3L431 580.5L431.5 580.6L432 580.7L432.5 580.6L433 581.3L433.5 581.5L434 581.1L434.5 580.7L435 581.3L435.5 581.6L436 581.1L436.5 581.1L437 581.2L437.5 581L438 581.2L438.5 581.4L439 581.1L439.5 581.5L440 581.8L440.5 581.4L441 581.3L441.5 581.6L442 581.2L442.5 581.4L443 581.1L443.5 581.4L444 581.6L444.5 581.3L445 581.5L445.5 581.4L446 581.1L446.5 581.4L447 581.1L447.5 581.6L448 581.3L448.5 581.5L449 581.6L449.5 581.2L450 581.3L450.5 581.2L451 581L451.5 581.6L452 581.1L452.5 581.1L453 581.4L453.5 581.1L454 581.5L454.5 581.2L455 581.3L455.5 581.2L456 581.3L456.5 581.5L457 581.1L457.5 581.2L458 581.1L458.5 581.7L459 581.1L459.5 581.3L460 581.6L460.5 581.6L461 581.6L461.5 580.9L462 580.8L462.5 581.1L463 581.5L463.5 581.5L464 581.5L464.5 580.8L465 581.1L465.5 581.5L466 581L466.5 580.9L467 581.4L467.5 581.2L468 581L468.5 581L469 580.9L469.5 581.5L470 580.8L470.5 581.1L471 581.4L471.5 580.8L472 580.9L472.5 581L473 581.1L473.5 581.3L474 581.3L474.5 581.7L475 581.4L475.5 581.3L476 581L476.5 581L477 581L477.5 581.5L478 581.1L478.5 581.2L479 581.7L479.5 581.3L480 581.3L480.5 581.6L481 581.6L481.5 581.8L482 581.2L482.5 581.9L483 581.7L483.5 581.7L484 581.7L484.5 581.7L485 581.8L485.5 582L486 581.4L486.5 581.9L487 581.6L487.5 581.5L488 581.4L488.5 581.5L489 582L489.5 582L490 581.6L490.5 581.6L491 581.9L491.5 581.7L492 582L492.5 581.8L493 582.1L493.5 581.8L494 581.6L494.5 582L495 581.9L495.5 581.7L496 581.9L496.5 581.7L497 581.9L497.5 581.8L498 582L498.5 582.1L499 581.9L499.5 582.1L500 582.1L500.5 581.9L501 581.9L501.5 582.2L502 581.7L502.5 582.1L503 582.1L503.5 582L504 582.1L504.5 581.8L505 582.2L505.5 581.9L506 582.1L506.5 582.2L507 581.9L507.5 582.3L508 582.3L508.5 582.3L509 582.2L509.5 582.3L510 581.8L510.5 582.1L511 581.9L511.5 582.1L512 582L512.5 581.9L513 582.2L513.5 581.9L514 582.2L514.5 582L515 582L515.5 582L516 582.2L516.5 582.2L517 582.3L517.5 582L518 582.4L518.5 582.3L519 582.4L519.5 582.4L520 582L520.5 582.4L521 582.3L521.5 582L522 582L522.5 582.1L523 582L523.5 582.2L524 582.4L524.5 582.4L525 582.3L525.5 582.1L526 582.1L526.5 582.4L527 582.2L527.5 582.3L528 582.3L528.5 582.4L529 582.3L529.5 582.4L530 582.4L530.5 582.5L531 582.6L531.5 582.4L532 582.3L532.5 582.4L533 582.5L533.5 582.4L534 582.5L534.5 582.5L535 582.4L535.5 582.3L536 582.3L536.5 582.4L537 582.5L537.5 582.5L538 582.5L538.5 582.3L539 582.3L539.5 582.4L540 582.4L540.5 582.6L541 582.4L541.5 582.4L542 582.6L542.5 582.7L543 582.4L543.5 582.4L544 582.6L544.5 582.7L545 582.8L545.5 582.8L546 582.7L546.5 582.8L547 582.7L547.5 582.7L548 582.5L548.5 582.7L549 582.8L549.5 582.7L550 582.8L550.5 582.8L551 582.8L551.5 582.7L552 582.9L552.5 582.9L553 582.8L553.5 582.6L554 582.1L554.5 581.6L555 581.6L555.5 581.2L556 581.6L556.5 581.5L557 581.5L557.5 581.1L558 581.1L558.5 581.2L559 581.3L559.5 581L560 581.3L560.5 581.5L561 581.5L561.5 581.2L562 581L562.5 581.1L563 581.6L563.5 581L564 581.5L564.5 581.2L565 581L565.5 581.6L566 581.3L566.5 581L567 581.7L567.5 580.9L568 581.3L568.5 581.1L569 581L569.5 581.5L570 581.5L570.5 581.5L571 581L571.5 581.3L572 581.7L572.5 581.7L573 582.2L573.5 582.5L574 582.9L574.5 583L575 582.9L575.5 582.8L576 582.7L576.5 582.8L577 582.7L577.5 582.7L578 582.8L578.5 582.7L579 582.7L579.5 582.7L580 582.9L580.5 582.7L581 582.8L581.5 583L582 582.9L582.5 582.9L583 582.9L583.5 582.8L584 582.9L584.5 582.7L585 582.8L585.5 582.9L586 582.8L586.5 582.8L587 582.7L587.5 582.9L588 582.8L588.5 582.9L589 582.8L589.5 583L590 582.8L590.5 582.8L591 582.8L591.5 582.8L592 582.8L592.5 582.9L593 582.8L593.5 582.7L594 582.7L594.5 582.8L595 582.7L595.5 582.8L596 582.7L596.5 582.8L597 582.7L597.5 582.9L598 582.7L598.5 582.7L599 582.7L599.5 582.8L600 582.8L600.5 582.9L601 582.7L601.5 582.9L602 582.8L602.5 582.6L603 582.8L603.5 582.7L604 582.7L604.5 582.9L605 582.8L605.5 582.6L606 582.9L606.5 582.9L607 582.8L607.5 582.3L608 581.8L608.5 581.8L609 581L609.5 581.2L610 581.4L610.5 581.2L611 581.5L611.5 581.1L612 581L612.5 581.6L613 580.9L613.5 581.2L614 581.1L614.5 581.7L615 581.4L615.5 581.5L616 581.5L616.5 581.2L617 581.2L617.5 581.2L618 581.4L618.5 581.3L619 581L619.5 581L620 581L620.5 581.3L621 581.7L621.5 581.4L622 581.4L622.5 581.2L623 580.9L623.5 581.2L624 581.2L624.5 581.4L625 581.6L625.5 581.5L626 580.9L626.5 581.5L627 581.7L627.5 581.7L628 581.7L628.5 582.1L629 582.4L629.5 582.7L630 583L630.5 582.8L631 582.7L631.5 582.7L632 582.8L632.5 582.7L633 582.5L633.5 582.6L634 582.8L634.5 582.8L635 582.7L635.5 582.5L636 582.6L636.5 582.7L637 582.6L637.5 582.5L638 582.3L638.5 582.6L639 582.6L639.5 582.6L640 582.3L640.5 582.4L641 582.3L641.5 582.1L642 582.1L642.5 582.4L643 582.3L643.5 582.1L644 582.2L644.5 582.5L645 582.1L645.5 582.5L646 582.2L646.5 582.4L647 582.1L647.5 582.3L648 582.3L648.5 582.5L649 582.4L649.5 582.4L650 582.3L650.5 582.3L651 582.4L651.5 582.3L652 582.3L652.5 582.1L653 582.5L653.5 582.1L654 582.2L654.5 582.5L655 582.1L655.5 582.3L656 582.2L656.5 582.5L657 582.3L657.5 582.2L658 582.5L658.5 582.7L659 582.6L659.5 582.8L660 583L660.5 582.9L661 583L661.5 583L662 583L662.5 582.9L663 582.9L663.5 583L664 583L664.5 583L665 583L665.5 583L666 583L666.5 583L667 583L667.5 583L668 582.9L668.5 582.9L669 582.9L669.5 583L670 583L670.5 583L671 583L671.5 583L672 583L672.5 583L673 583L673.5 583L674 583L674.5 583L675 582.9L675.5 582.9L676 582.9L676.5 583L677 583L677.5 583L678 583L678.5 583L679 582.9L679.5 582.9L680 583L680.5 582.9L681 582.9L681.5 582.9L682 583L682.5 583L683 583L683.5 582.9L684 583L684.5 583L685 583L685.5 583L686 583L686.5 582.9L687 582.9L687.5 582.9L688 583L688.5 583L689 583L689.5 583L690 582.9L690.5 583L691 583L691.5 583L692 583L692.5 583L693 582.9L693.5 582.9L694 583L694.5 583L695 583L695.5 583L696 582.9L696.5 583L697 583L697.5 582.9L698 582.9L698.5 583L699 583L699.5 582.9L700 583L700.5 582.9L701 583L701.5 583L702 583L702.5 582.9L703 583L703.5 582.9L704 582.9L704.5 583L705 583L705.5 583L706 582.9L706.5 582.9L707 583L707.5 583L708 582.9L708.5 582.9L709 582.9L709.5 583L710 583L710.5 583L711 582.9L711.5 583L712 583L712.5 583L713 582.9L713.5 583L714 583L714.5 583L715 583L715.5 583L716 583L716.5 582.9L717 583L717.5 583L718 583L718.5 582.9L719 583L719.5 583L720 583L720.5 582.9L721 582.9L721.5 582.9L722 583L722.5 583L723 583L723.5 582.9L724 583L724.5 583L725 583L725.5 582.7L726 582.5L726.5 582.6L727 582.5L727.5 582.6L728 582.5L728.5 582.4L729 582.3L729.5 582.7L730 582.2L730.5 582.4L731 582.6L731.5 582.3L732 582.3L732.5 582.4L733 582.1L733.5 582.2L734 582.2L734.5 582.3L735 582.3L735.5 582.4L736 582.4L736.5 582.4L737 582L737.5 582.3L738 581.9L738.5 582.2L739 581.9L739.5 582L740 582.1L740.5 582.2L741 581.9L741.5 581.8L742 581.9L742.5 582.3L743 582.2L743.5 582.2L744 582.3L744.5 582.3L745 582L745.5 582L746 582.4L746.5 582.1L747 582.2L747.5 582.1L748 582.5L748.5 582.5L749 582.4L749.5 582.1L750 582.5L750.5 582.4L751 582.3L751.5 582.1L752 582.3L752.5 582.4L753 581.9L753.5 582L754 581.9L754.5 582L755 582.1L755.5 581.8L756 582.1L756.5 581.9L757 582.1L757.5 581.9L758 581.4L758.5 581.8L759 581.3L759.5 581.4L760 581.8L760.5 581.4L761 581.1L761.5 581.7L762 581.6L762.5 581.1L763 581L763.5 581.2L764 581.9L764.5 582.2L765 582.3L765.5 582.3L766 582.7L766.5 582.6L767 582.6L767.5 582.5L768 582.4L768.5 582.5L769 582.4L769.5 582.5L770 582.3L770.5 582.6L771 582.7L771.5 582.3L772 582.6L772.5 582.4L773 582.4L773.5 582.5L774 582.6L774.5 582.6L775 582.2L775.5 582.2L776 582.4L776.5 582.4L777 582.1L777.5 582.5L778 582.4L778.5 582.2L779 582.4L779.5 582.2L780 582.5L780.5 582.2L781 582.4L781.5 582.4L782 582.6L782.5 582.3L783 582.4L783.5 582.7L784 582.7L784.5 582.4L785 582.5L785.5 582.6L786 582.6L786.5 582.6L787 582.4L787.5 582.7L788 582.7L788.5 582.7L789 582.4L789.5 582.6L790 582.7L790.5 582.4L791 582.4L791.5 582.7L792 582.4L792.5 582.3L793 582.3L793.5 582.5L794 582.3L794.5 582.4L795 582.4L795.5 582.3L796 582.4L796.5 582.3L797 582.4L797.5 582.3L798 582.5L798.5 582.4L799 582.5L799.5 582.4L800 582.3L800.5 582.2L801 582.1L801.5 582.3L802 582.2L802.5 581.8L803 582.1L803.5 581.9L804 581.5L804.5 582L805 581.5L805.5 581.2L806 581.4L806.5 581.3L807 580.9L807.5 580.8L808 581.3L808.5 581.2L809 580.6L809.5 581L810 580.9L810.5 580.6L811 580.2L811.5 580.5L812 579.5L812.5 579.3L813 579.3L813.5 578.9L814 578.4L814.5 578.7L815 579.1L815.5 577.7L816 578.6L816.5 578.4L817 576.5L817.5 577.5L818 576.5L818.5 576.4L819 576.4L819.5 576.3L820 575.8L820.5 577.5L821 577L821.5 575.8L822 576.9L822.5 575.6L823 576L823.5 575.1L824 575.2L824.5 576.6L825 574.7L825.5 574.5L826 575.1L826.5 575.9L827 573.6L827.5 575.3L828 574.1L828.5 573.6L829 573.6L829.5 574.1L830 575.6L830.5 573.7L831 573.7L831.5 576.5L832 575.2L832.5 575.6L833 575.1L833.5 575.8L834 574.8L834.5 576.7L835 575.1L835.5 575.6L836 576L836.5 575.7L837 577L837.5 576.1L838 576.5L838.5 577.6L839 577.2L839.5 577L840 576.3L840.5 577.8L841 578L841.5 578L842 577.4L842.5 577.2L843 576.4L843.5 576.8L844 576.6L844.5 577.4L845 575.6L845.5 575.9L846 576.7L846.5 576.9L847 576.2L847.5 576.5L848 577.5L848.5 576.6L849 577.8L849.5 578.2L850 578.3L850.5 579L851 579.8L851.5 580.6L852 581.3L852.5 582.3L853 583L853.5 583L854 582.9L854.5 583L855 583L855.5 583L856 582.9L856.5 583L857 582.9L857.5 582.9L858 583L858.5 583L859 583L859.5 582.9L860 583L860.5 583L861 583L861.5 583L862 583L862.5 583L863 582.9L863.5 583L864 583L864.5 583L865 583L865.5 583L866 583L866.5 583L867 583L867.5 582.9L868 583L868.5 582.9L869 582.9L869.5 583L870 583L870.5 583L871 583L871.5 583L872 583L872.5 583L873 583L873.5 582.9L874 583L874.5 583L875 583L875.5 583L876 582.9L876.5 582.9L877 583L877.5 582.9L878 582.9L878.5 583L879 582.9L879.5 582.9L880 583L880.5 583L881 582.9L881.5 583L882 583L882.5 583L883 583L883.5 583L884 583L884.5 582.9L885 583L885.5 583L886 582.9L886.5 583L887 583L887.5 582.9L888 583L888.5 583L889 583L889.5 583L890 583L890.5 582.9L891 583L891.5 583L892 583L892.5 583L893 583L893.5 583L894 582.9L894.5 583L895 583L895.5 583L896 583L896.5 582.9L897 583L897.5 583L898 582.9L898.5 582.9L899 583L899.5 583L900 583L900.5 582.9L901 583L901.5 583L902 583L902.5 582.9L903 583L903.5 583L904 582.9L904.5 583L905 582.9L905.5 582.9L906 583L906.5 583L907 583L907.5 583L908 583L908.5 583L909 582.9L909.5 583L910 582.9L910.5 583L911 583L911.5 583L912 582.9L912.5 583L913 583L913.5 582.9L914 583L914.5 583L915 583L915.5 582.9L916 583L916.5 582.9L917 583L917.5 583L918 582.9L918.5 583L919 583L919.5 583L920 583L920.5 583L921 583L921.5 583L922 583L922.5 583L923 583L923.5 583L924 582.9L924.5 583L925 582.9L925.5 582.9L926 583L926.5 582.9L927 582.9L927.5 583L928 582.9L928.5 582.9L929 582.9L929.5 582.9L930 583L930.5 583L931 583L931.5 583L932 583L932.5 583L933 583L933.5 582.9L934 583L934.5 582.9L935 583L935.5 582.9L936 583L936.5 583L937 583L937.5 582.9L938 583L938.5 583L939 583L939.5 583L940 583L940.5 583L941 583L941.5 583L942 583L942.5 583L943 582.9L943.5 583L944 582.9L944.5 582.9L945 582.9L945.5 583L946 580.8L946.5 580.8L947 580.8L947.5 582.9L948 583L948.5 582.9L949 583L949.5 582.9L950 583L950.5 582.9L951 583L951.5 583L952 583L952.5 583L953 583L953.5 583L954 583L954.5 582.9L955 583L955.5 582.9L956 583L956.5 583L957 582.9L957.5 583L958 583L958.5 583L959 583L959.5 583L960 583L960.5 582.9L961 582.9L961.5 583L962 583L962.5 582.9L963 583L963.5 583L964 582.9L964.5 583L965 583L965.5 583L966 583L966.5 583L967 583L967.5 582.9L968 582.9L968.5 583L969 583L969.5 583L970 582.9L970.5 583L971 583L971.5 582.9L972 583L972.5 583L973 583L973.5 583L974 583L974.5 583L975 583L975.5 582.9L976 582.9L976.5 582.9L977 582.9L977.5 583L978 583L978.5 582.9L979 583L979.5 583L980 582.9L980.5 583L981 583L981.5 583L982 582.9L982.5 583L983 583L983.5 583L984 583L984.5 582.9L985 582.9L985.5 583L986 583L986.5 582.9L987 583L987.5 583L988 583L988.5 583L989 583L989.5 583L990 583L990.5 583L991 583L991.5 583L992 583L992.5 583L993 583L993.5 583L994 583L994.5 583L995 583L995.5 583L996 582.9L996.5 583L997 582.9L997.5 583L998 583L998.5 582.9L999 583L999.5 582.9L1000 582.9L1000.5 583L1001 583L1001.5 583L1002 582.9L1002.5 583L1003 583L1003.5 582.9L1004 582.9L1004.5 582.9L1005 582.9L1005.5 582.9L1006 583L1006.5 583L1007 582.9L1007.5 583L1008 583L1008.5 583L1009 582.9L1009.5 582.9L1010 582.9L1010.5 583L1011 583L1011.5 582.9L1012 583L1012.5 583L1013 583L1013.5 583L1014 583L1014.5 583L1015 582.9L1015.5 582.9L1016 583L1016.5 583L1017 583L1017.5 582.9L1018 583L1018.5 583L1019 583L1019.5 583L1020 583L1020.5 583L1021 582.9L1021.5 583L1022 583L1022.5 583L1023 583L1023.5 583L1024 583L1024.5 582.9L1025 583L1025.5 583L1026 583L1026.5 583L1027 583L1027.5 582.9L1028 583L1028.5 583L1029 583L1029 584.6L1028.5 584.6L1028 584.6L1027.5 584.7L1027 584.6L1026.5 584.7L1026 584.6L1025.5 584.6L1025 584.6L1024.5 584.6L1024 584.7L1023.5 584.6L1023 584.6L1022.5 584.7L1022 584.6L1021.5 584.6L1021 584.7L1020.5 584.6L1020 584.7L1019.5 584.6L1019 584.6L1018.5 584.7L1018 584.6L1017.5 584.6L1017 584.6L1016.5 584.7L1016 584.6L1015.5 584.6L1015 584.6L1014.5 584.7L1014 584.6L1013.5 584.7L1013 584.6L1012.5 584.7L1012 584.7L1011.5 584.6L1011 584.7L1010.5 584.7L1010 584.6L1009.5 584.7L1009 584.6L1008.5 584.6L1008 584.6L1007.5 584.6L1007 584.6L1006.5 584.6L1006 584.7L1005.5 584.6L1005 584.6L1004.5 584.6L1004 584.7L1003.5 584.7L1003 584.7L1002.5 584.7L1002 584.6L1001.5 584.7L1001 584.7L1000.5 584.7L1000 584.6L999.5 584.7L999 584.7L998.5 584.6L998 584.7L997.5 584.7L997 584.6L996.5 584.6L996 584.6L995.5 584.6L995 584.6L994.5 584.6L994 584.6L993.5 584.7L993 584.7L992.5 584.6L992 584.7L991.5 584.6L991 584.7L990.5 584.6L990 584.7L989.5 584.6L989 584.6L988.5 584.7L988 584.6L987.5 584.7L987 584.6L986.5 584.7L986 584.6L985.5 584.6L985 584.6L984.5 584.6L984 584.7L983.5 584.6L983 584.6L982.5 584.6L982 584.6L981.5 584.6L981 584.7L980.5 584.7L980 584.6L979.5 584.6L979 584.6L978.5 584.7L978 584.6L977.5 584.6L977 584.6L976.5 584.6L976 584.6L975.5 584.6L975 584.6L974.5 584.7L974 584.6L973.5 584.7L973 584.7L972.5 584.6L972 584.7L971.5 584.6L971 584.6L970.5 584.7L970 584.7L969.5 584.6L969 584.7L968.5 584.6L968 584.6L967.5 584.6L967 584.6L966.5 584.6L966 584.7L965.5 584.6L965 584.6L964.5 584.7L964 584.6L963.5 584.6L963 584.7L962.5 584.6L962 584.6L961.5 584.6L961 584.7L960.5 584.7L960 584.7L959.5 584.6L959 584.6L958.5 584.7L958 584.6L957.5 584.7L957 584.6L956.5 584.7L956 584.6L955.5 584.6L955 584.6L954.5 584.6L954 584.7L953.5 584.6L953 584.6L952.5 584.6L952 584.6L951.5 584.6L951 584.6L950.5 584.7L950 584.6L949.5 584.7L949 584.6L948.5 584.6L948 584.7L947.5 584.7L947 589.8L946.5 589.8L946 589.8L945.5 584.6L945 584.7L944.5 584.6L944 584.7L943.5 584.6L943 584.6L942.5 584.7L942 584.7L941.5 584.6L941 584.6L940.5 584.6L940 584.6L939.5 584.6L939 584.7L938.5 584.7L938 584.6L937.5 584.7L937 584.7L936.5 584.6L936 584.6L935.5 584.6L935 584.6L934.5 584.7L934 584.6L933.5 584.7L933 584.6L932.5 584.6L932 584.6L931.5 584.6L931 584.6L930.5 584.6L930 584.7L929.5 584.6L929 584.6L928.5 584.6L928 584.7L927.5 584.7L927 584.6L926.5 584.6L926 584.6L925.5 584.6L925 584.6L924.5 584.6L924 584.6L923.5 584.6L923 584.6L922.5 584.6L922 584.7L921.5 584.6L921 584.6L920.5 584.6L920 584.7L919.5 584.6L919 584.6L918.5 584.6L918 584.6L917.5 584.6L917 584.6L916.5 584.6L916 584.6L915.5 584.6L915 584.6L914.5 584.7L914 584.7L913.5 584.7L913 584.6L912.5 584.7L912 584.6L911.5 584.6L911 584.7L910.5 584.7L910 584.6L909.5 584.7L909 584.7L908.5 584.6L908 584.7L907.5 584.6L907 584.6L906.5 584.7L906 584.6L905.5 584.6L905 584.6L904.5 584.6L904 584.6L903.5 584.6L903 584.7L902.5 584.7L902 584.6L901.5 584.7L901 584.6L900.5 584.6L900 584.6L899.5 584.6L899 584.6L898.5 584.7L898 584.6L897.5 584.6L897 584.7L896.5 584.6L896 584.6L895.5 584.7L895 584.6L894.5 584.6L894 584.6L893.5 584.6L893 584.6L892.5 584.7L892 584.6L891.5 584.6L891 584.6L890.5 584.6L890 584.6L889.5 584.6L889 584.6L888.5 584.6L888 584.6L887.5 584.7L887 584.6L886.5 584.6L886 584.6L885.5 584.7L885 584.6L884.5 584.7L884 584.6L883.5 584.6L883 584.6L882.5 584.6L882 584.6L881.5 584.7L881 584.6L880.5 584.6L880 584.6L879.5 584.7L879 584.6L878.5 584.6L878 584.6L877.5 584.7L877 584.7L876.5 584.7L876 584.6L875.5 584.6L875 584.6L874.5 584.7L874 584.6L873.5 584.7L873 584.6L872.5 584.6L872 584.6L871.5 584.6L871 584.6L870.5 584.6L870 584.6L869.5 584.7L869 584.6L868.5 584.6L868 584.6L867.5 584.7L867 584.7L866.5 584.7L866 584.7L865.5 584.7L865 584.7L864.5 584.7L864 584.6L863.5 584.6L863 584.6L862.5 584.6L862 584.6L861.5 584.6L861 584.7L860.5 584.6L860 584.7L859.5 584.6L859 584.6L858.5 584.7L858 584.7L857.5 584.6L857 584.6L856.5 584.6L856 584.7L855.5 584.6L855 584.6L854.5 584.6L854 584.6L853.5 584.6L853 584.6L852.5 585.3L852 585.9L851.5 587L851 588L850.5 588.3L850 589.5L849.5 588.9L849 589.7L848.5 591.2L848 592.2L847.5 592.8L847 590.5L846.5 592.5L846 591.4L845.5 591.7L845 591.9L844.5 589.5L844 590.5L843.5 590.8L843 590L842.5 590.4L842 590.1L841.5 590.4L841 590.9L840.5 591.5L840 590L839.5 589.4L839 591.3L838.5 591.5L838 591.3L837.5 591.2L837 590.4L836.5 590.1L836 590.2L835.5 592L835 591L834.5 592.8L834 590.6L833.5 590.7L833 592L832.5 593.2L832 593.6L831.5 592.4L831 593L830.5 591.3L830 594.2L829.5 592L829 592.9L828.5 592.5L828 593.6L827.5 591.7L827 592.7L826.5 591.8L826 593.3L825.5 591.7L825 593.7L824.5 592.4L824 593.3L823.5 593.2L823 591L822.5 591.3L822 590.6L821.5 590.8L821 592.6L820.5 591.5L820 591.4L819.5 590.1L819 591.5L818.5 591.6L818 591.6L817.5 591.5L817 590.1L816.5 589.8L816 589.8L815.5 588.9L815 590.2L814.5 589.2L814 588.8L813.5 588.7L813 588.1L812.5 588L812 588.1L811.5 587.1L811 587.7L810.5 586.7L810 587.3L809.5 587L809 587.1L808.5 587L808 586.9L807.5 586.8L807 586.4L806.5 585.8L806 586.5L805.5 586.4L805 586.1L804.5 586L804 586L803.5 585.8L803 586.1L802.5 585.4L802 585.9L801.5 585.4L801 585.6L800.5 585.1L800 585.2L799.5 585.3L799 585.4L798.5 585.2L798 585L797.5 585.3L797 585L796.5 585.1L796 585.1L795.5 585.3L795 585.3L794.5 585L794 585.4L793.5 585L793 585.1L792.5 585.3L792 584.9L791.5 585L791 585.2L790.5 585L790 585.1L789.5 584.9L789 584.8L788.5 584.8L788 584.9L787.5 584.8L787 584.8L786.5 585L786 585.2L785.5 585L785 585.2L784.5 585L784 585.1L783.5 585L783 585.1L782.5 585L782 585.2L781.5 585.4L781 585.1L780.5 585.4L780 585.4L779.5 585.1L779 585.2L778.5 585.2L778 585.4L777.5 585.5L777 585.5L776.5 585L776 585.2L775.5 585.3L775 585.5L774.5 585L774 585.3L773.5 585.2L773 585.3L772.5 584.9L772 585.3L771.5 585.2L771 585.2L770.5 584.9L770 585.1L769.5 584.9L769 584.9L768.5 585.2L768 585.2L767.5 585.1L767 584.9L766.5 585.2L766 584.8L765.5 585.4L765 585.4L764.5 585.5L764 585.6L763.5 586.5L763 586L762.5 586.2L762 586.5L761.5 585.9L761 586.3L760.5 585.9L760 586.5L759.5 586.3L759 586.3L758.5 586L758 586.2L757.5 585.9L757 586.1L756.5 585.9L756 586L755.5 585.6L755 585.8L754.5 585.5L754 585.7L753.5 585.4L753 585.7L752.5 585.4L752 585.3L751.5 585.5L751 585.6L750.5 585.1L750 585.3L749.5 585.3L749 585.2L748.5 585.4L748 585.4L747.5 585.3L747 585.6L746.5 585.3L746 585.4L745.5 585.6L745 585.2L744.5 585.7L744 585.5L743.5 585.5L743 585.4L742.5 585.5L742 585.6L741.5 585.5L741 585.8L740.5 585.3L740 585.9L739.5 585.7L739 585.6L738.5 585.2L738 585.6L737.5 585.5L737 585.6L736.5 585.2L736 585.3L735.5 585.5L735 585.4L734.5 585.5L734 585.4L733.5 585.6L733 585.4L732.5 585.3L732 585.4L731.5 585.1L731 585.1L730.5 585.3L730 585.3L729.5 585.2L729 584.9L728.5 585.3L728 585.1L727.5 585L727 585L726.5 585.2L726 585L725.5 584.8L725 584.6L724.5 584.6L724 584.7L723.5 584.6L723 584.6L722.5 584.6L722 584.7L721.5 584.6L721 584.6L720.5 584.6L720 584.6L719.5 584.7L719 584.6L718.5 584.6L718 584.6L717.5 584.7L717 584.6L716.5 584.6L716 584.6L715.5 584.6L715 584.6L714.5 584.7L714 584.6L713.5 584.6L713 584.6L712.5 584.7L712 584.7L711.5 584.6L711 584.7L710.5 584.6L710 584.7L709.5 584.7L709 584.7L708.5 584.6L708 584.6L707.5 584.6L707 584.7L706.5 584.6L706 584.6L705.5 584.7L705 584.6L704.5 584.6L704 584.7L703.5 584.6L703 584.6L702.5 584.6L702 584.6L701.5 584.7L701 584.6L700.5 584.6L700 584.6L699.5 584.6L699 584.6L698.5 584.7L698 584.7L697.5 584.7L697 584.6L696.5 584.6L696 584.6L695.5 584.6L695 584.7L694.5 584.6L694 584.7L693.5 584.6L693 584.6L692.5 584.6L692 584.7L691.5 584.6L691 584.6L690.5 584.7L690 584.6L689.5 584.6L689 584.6L688.5 584.6L688 584.6L687.5 584.6L687 584.6L686.5 584.6L686 584.6L685.5 584.7L685 584.7L684.5 584.6L684 584.6L683.5 584.6L683 584.6L682.5 584.7L682 584.7L681.5 584.6L681 584.6L680.5 584.6L680 584.6L679.5 584.6L679 584.6L678.5 584.7L678 584.6L677.5 584.6L677 584.6L676.5 584.7L676 584.6L675.5 584.7L675 584.6L674.5 584.6L674 584.6L673.5 584.6L673 584.6L672.5 584.7L672 584.6L671.5 584.7L671 584.6L670.5 584.6L670 584.6L669.5 584.6L669 584.6L668.5 584.6L668 584.7L667.5 584.6L667 584.6L666.5 584.7L666 584.6L665.5 584.6L665 584.6L664.5 584.6L664 584.6L663.5 584.6L663 584.6L662.5 584.7L662 584.7L661.5 584.6L661 584.6L660.5 584.6L660 584.6L659.5 584.9L659 585.1L658.5 585.1L658 585.1L657.5 585.1L657 585.2L656.5 585.2L656 585.5L655.5 585.2L655 585.4L654.5 585.1L654 585.4L653.5 585.5L653 585.4L652.5 585.3L652 585.1L651.5 585.4L651 585.3L650.5 585.2L650 585.1L649.5 585.6L649 585.5L648.5 585.4L648 585.3L647.5 585.4L647 585.2L646.5 585.2L646 585.2L645.5 585.5L645 585.5L644.5 585.2L644 585.5L643.5 585.4L643 585.4L642.5 585.5L642 585.1L641.5 585.2L641 585L640.5 585.2L640 585L639.5 585L639 585.1L638.5 585L638 585L637.5 584.9L637 585.1L636.5 584.9L636 585L635.5 584.9L635 584.9L634.5 585.1L634 585.1L633.5 584.8L633 585.1L632.5 585L632 584.9L631.5 584.9L631 584.8L630.5 584.7L630 584.8L629.5 585L629 585.5L628.5 585.5L628 585.8L627.5 586.2L627 586L626.5 585.9L626 586.1L625.5 586.6L625 586.4L624.5 586.3L624 586.1L623.5 585.9L623 586.3L622.5 586.6L622 586.7L621.5 586.5L621 586.1L620.5 586.4L620 586L619.5 586.2L619 586.5L618.5 586.4L618 586.1L617.5 586.1L617 586.3L616.5 586.4L616 586.7L615.5 586.4L615 585.9L614.5 586L614 586.2L613.5 585.9L613 586.3L612.5 586L612 586.4L611.5 586.1L611 586.1L610.5 586L610 585.9L609.5 586.1L609 586.6L608.5 585.6L608 585.4L607.5 585.2L607 584.9L606.5 584.8L606 584.8L605.5 584.9L605 584.8L604.5 584.8L604 584.7L603.5 584.9L603 584.6L602.5 584.9L602 584.7L601.5 584.7L601 585L600.5 584.8L600 584.8L599.5 585L599 584.7L598.5 584.7L598 584.7L597.5 584.8L597 584.8L596.5 584.9L596 584.9L595.5 584.6L595 584.9L594.5 584.7L594 584.7L593.5 584.9L593 585L592.5 584.7L592 584.8L591.5 584.7L591 585L590.5 584.9L590 584.8L589.5 585L589 584.9L588.5 584.7L588 584.9L587.5 584.8L587 584.8L586.5 584.7L586 584.8L585.5 584.9L585 584.9L584.5 584.7L584 584.6L583.5 584.9L583 584.6L582.5 584.8L582 584.7L581.5 584.8L581 584.9L580.5 584.9L580 584.9L579.5 585L579 584.9L578.5 584.9L578 584.9L577.5 585L577 584.9L576.5 584.8L576 584.7L575.5 584.7L575 585L574.5 584.8L574 584.8L573.5 585.2L573 585.8L572.5 586L572 586.3L571.5 586.5L571 586.4L570.5 586.5L570 586.2L569.5 585.9L569 586.3L568.5 586.1L568 586L567.5 586.7L567 586.1L566.5 586.1L566 586.4L565.5 586.5L565 586.7L564.5 586.7L564 586.3L563.5 586.2L563 586.3L562.5 586.2L562 585.9L561.5 586.6L561 586.2L560.5 586.3L560 586.2L559.5 586.6L559 586L558.5 586.2L558 586L557.5 586.4L557 586L556.5 586.4L556 586.2L555.5 586L555 586.1L554.5 585.7L554 585.7L553.5 585.1L553 584.8L552.5 585L552 584.9L551.5 584.7L551 584.9L550.5 585L550 584.8L549.5 584.9L549 585L548.5 584.8L548 584.8L547.5 585.1L547 584.9L546.5 585.1L546 585.1L545.5 584.8L545 585.1L544.5 584.9L544 585L543.5 585.1L543 585.2L542.5 585L542 585L541.5 585L541 584.9L540.5 585.3L540 585L539.5 585L539 585.3L538.5 584.9L538 584.9L537.5 585.2L537 585.1L536.5 585L536 585L535.5 585.4L535 585.4L534.5 585.2L534 585.2L533.5 585.2L533 585.4L532.5 585L532 585.4L531.5 585.2L531 585.2L530.5 585.3L530 585.1L529.5 585.2L529 585.1L528.5 585.4L528 585.3L527.5 585.1L527 585.1L526.5 585L526 585.4L525.5 585.4L525 585.3L524.5 585.4L524 585.1L523.5 585.2L523 585.6L522.5 585.4L522 585.4L521.5 585.2L521 585.3L520.5 585.1L520 585.4L519.5 585.2L519 585.3L518.5 585.1L518 585.4L517.5 585.4L517 585.5L516.5 585.4L516 585.2L515.5 585.6L515 585.4L514.5 585.2L514 585.6L513.5 585.6L513 585.5L512.5 585.4L512 585.5L511.5 585.3L511 585.6L510.5 585.6L510 585.5L509.5 585.5L509 585.7L508.5 585.6L508 585.6L507.5 585.8L507 585.8L506.5 585.5L506 585.6L505.5 585.5L505 585.5L504.5 585.9L504 585.4L503.5 585.6L503 585.8L502.5 585.6L502 585.5L501.5 585.8L501 585.5L500.5 585.9L500 585.8L499.5 585.5L499 586L498.5 586L498 585.5L497.5 585.9L497 585.5L496.5 585.4L496 585.7L495.5 586.1L495 585.8L494.5 586L494 585.7L493.5 586.1L493 586L492.5 585.8L492 585.5L491.5 586L491 586.1L490.5 585.5L490 586L489.5 585.8L489 585.7L488.5 586.1L488 585.6L487.5 585.6L487 586.2L486.5 585.8L486 585.7L485.5 585.7L485 586.3L484.5 585.9L484 585.9L483.5 585.6L483 586.3L482.5 586.1L482 585.8L481.5 586.2L481 585.9L480.5 586.2L480 586.5L479.5 585.8L479 586.4L478.5 586.5L478 585.9L477.5 585.9L477 586.3L476.5 586.2L476 586.4L475.5 586.1L475 586.5L474.5 586.1L474 586.6L473.5 586.2L473 586.6L472.5 586.3L472 586.4L471.5 586.1L471 586.3L470.5 586.6L470 586.2L469.5 586L469 586L468.5 586.9L468 586.8L467.5 586.9L467 586.4L466.5 586.5L466 586.5L465.5 586.1L465 586.1L464.5 586.4L464 586.2L463.5 586.2L463 586.5L462.5 586.4L462 586.1L461.5 586.5L461 586.8L460.5 586L460 586.5L459.5 586.4L459 586.4L458.5 586.4L458 586.3L457.5 586.5L457 586.6L456.5 586.7L456 586.6L455.5 586.1L455 586.6L454.5 586.7L454 586.7L453.5 586.6L453 586.5L452.5 586.5L452 586.6L451.5 586.5L451 586.4L450.5 586.1L450 586.6L449.5 586.1L449 586.4L448.5 586.6L448 585.8L447.5 585.8L447 586.3L446.5 586.5L446 586.4L445.5 586.3L445 585.8L444.5 586.5L444 586.4L443.5 586.4L443 586L442.5 586.3L442 585.7L441.5 586.1L441 586.2L440.5 585.9L440 585.9L439.5 585.8L439 586.2L438.5 586.3L438 586L437.5 586.6L437 586.3L436.5 586.5L436 586.1L435.5 586.8L435 586.2L434.5 586.5L434 586.6L433.5 586.1L433 586.5L432.5 586.5L432 586.3L431.5 586.5L431 586.4L430.5 587.2L430 586.7L429.5 586.3L429 586.5L428.5 586.5L428 587.4L427.5 587.2L427 587.2L426.5 587.2L426 587.2L425.5 587.1L425 587.1L424.5 587.4L424 587.6L423.5 587.4L423 588.1L422.5 587.7L422 588L421.5 587.6L421 587.8L420.5 588.2L420 587.7L419.5 588.8L419 589L418.5 588.2L418 589.5L417.5 588.6L417 589.1L416.5 589.7L416 589.3L415.5 589.6L415 588.6L414.5 590.3L414 588.6L413.5 590L413 590.5L412.5 590.4L412 589.5L411.5 590.6L411 589.6L410.5 590.6L410 589.3L409.5 588.8L409 589.1L408.5 589.8L408 589.4L407.5 590.2L407 590.3L406.5 590.6L406 591L405.5 591.2L405 589.6L404.5 589.7L404 589.9L403.5 591.2L403 591.3L402.5 590.5L402 590.7L401.5 590.2L401 591L400.5 591.6L400 591.6L399.5 590.9L399 591.7L398.5 592.5L398 593.7L397.5 592.6L397 594.8L396.5 595.2L396 594.4L395.5 595.5L395 593.2L394.5 593.2L394 593.8L393.5 594L393 596.1L392.5 594.6L392 594.2L391.5 594.6L391 594.6L390.5 595.3L390 597.6L389.5 595.7L389 596.5L388.5 597.8L388 598.1L387.5 596.8L387 597.2L386.5 598.1L386 595.5L385.5 596.9L385 595.6L384.5 596L384 597.3L383.5 596.6L383 596.9L382.5 595.9L382 596.4L381.5 593.7L381 595.2L380.5 595.9L380 595.2L379.5 594L379 593.2L378.5 592.7L378 591.9L377.5 592.9L377 593.4L376.5 593L376 591.8L375.5 592.3L375 591.6L374.5 593.5L374 591L373.5 593.5L373 592L372.5 592L372 593.9L371.5 593.1L371 595.2L370.5 595.5L370 595.5L369.5 598.1L369 597.7L368.5 597.5L368 600.1L367.5 598.8L367 600.8L366.5 600.3L366 601.3L365.5 599.1L365 599.6L364.5 599.7L364 584.6L363.5 584.6L363 584.6L362.5 584.6L362 584.6L361.5 584.6L361 584.7L360.5 584.6L360 584.7L359.5 584.7L359 584.7L358.5 584.6L358 584.7L357.5 584.6L357 584.6L356.5 584.6L356 584.7L355.5 584.6L355 584.7L354.5 584.6L354 584.6L353.5 584.7L353 584.7L352.5 584.6L352 584.7L351.5 584.7L351 584.7L350.5 584.7L350 584.7L349.5 584.6L349 584.6L348.5 584.6L348 584.6L347.5 584.7L347 584.6L346.5 584.6L346 584.7L345.5 584.7L345 584.6L344.5 584.7L344 584.6L343.5 584.6L343 584.7L342.5 584.6L342 584.6L341.5 584.7L341 584.6L340.5 584.7L340 584.6L339.5 584.7L339 584.7L338.5 584.7L338 584.6L337.5 584.6L337 584.6L336.5 584.6L336 584.6L335.5 584.7L335 584.7L334.5 584.7L334 584.7L333.5 584.7L333 584.6L332.5 584.6L332 584.7L331.5 584.6L331 584.7L330.5 584.6L330 584.7L329.5 584.7L329 584.6L328.5 584.7L328 584.7L327.5 584.6L327 584.6L326.5 584.7L326 584.7L325.5 584.7L325 584.6L324.5 584.6L324 584.6L323.5 584.6L323 584.6L322.5 584.7L322 584.6L321.5 584.6L321 584.7L320.5 584.7L320 584.6L319.5 584.7L319 584.6L318.5 584.7L318 584.7L317.5 584.6L317 584.6L316.5 584.6L316 584.6L315.5 584.6L315 584.6L314.5 584.6L314 584.7L313.5 584.7L313 584.6Z" fill="#d6e6fb"/>
<path d="M1029.3 583L1029.8 583L1030.3 582.9L1030.8 582.9L1031.3 583L1031.8 583L1032.3 583L1032.8 583L1033.3 583L1033.8 582.9L1034.3 582.9L1034.8 583L1035.3 582.9L1035.8 583L1036.3 582.9L1036.8 582.9L1037.3 583L1037.8 583L1038.3 582.9L1038.8 582.9L1039.3 582.9L1039.8 583L1040.3 583L1040.8 583L1041.3 583L1041.8 583L1042.3 583L1042.8 583L1043.3 583L1043.8 583L1044.3 582.9L1044.8 583L1045.3 582.9L1045.8 583L1046.3 583L1046.8 583L1047.3 582.9L1047.8 583L1048.3 582.9L1048.8 583L1049.3 583L1049.8 583L1050.3 583L1050.8 582.9L1051.3 583L1051.8 583L1052.3 582.9L1052.8 583L1053.3 582.9L1053.8 582.9L1054.3 583L1054.8 583L1055.3 583L1055.8 583L1056.3 583L1056.8 582.9L1057.3 583L1057.8 582.9L1058.3 583L1058.8 583L1059.3 582.9L1059.8 582.9L1060.3 583L1060.8 583L1061.3 582.9L1061.8 583L1062.3 582.9L1062.8 583L1063.3 583L1063.8 582.9L1064.3 583L1064.8 583L1065.3 583L1065.8 583L1066.3 583L1066.8 582.9L1067.3 583L1067.8 583L1068.3 583L1068.8 583L1069.3 583L1069.8 583L1070.3 582.9L1070.8 583L1071.3 583L1071.8 582.9L1072.3 583L1072.8 582.9L1073.3 583L1073.8 583L1074.3 582.9L1074.8 582.9L1075.3 583L1075.8 582.9L1076.3 583L1076.8 583L1077.3 583L1077.8 583L1078.3 583L1078.8 582.9L1079.3 582.9L1079.8 582.9L1080.3 583L1080.8 583L1081.3 580L1081.8 568.1L1082.3 567.6L1082.8 566.2L1083.3 567.6L1083.8 569L1084.3 566.5L1084.8 568.1L1085.3 569.9L1085.8 569.2L1086.3 571.1L1086.8 572.1L1087.3 571.3L1087.8 573.2L1088.3 571.9L1088.8 573.6L1089.3 574.8L1089.8 574.7L1090.3 575.8L1090.8 575.9L1091.3 574.9L1091.8 576.1L1092.3 576.9L1092.8 574.8L1093.3 577.2L1093.8 576.4L1094.3 574.4L1094.8 575.5L1095.3 573.8L1095.8 574.1L1096.3 573.6L1096.8 572.7L1097.3 572.9L1097.8 574.2L1098.3 574L1098.8 573.3L1099.3 571.7L1099.8 571.8L1100.3 572L1100.8 570.7L1101.3 571.9L1101.8 573L1102.3 570.8L1102.8 570.3L1103.3 571.1L1103.8 572L1104.3 569.2L1104.8 569.6L1105.3 572L1105.8 571.6L1106.3 570.2L1106.8 570.1L1107.3 572.3L1107.8 570.8L1108.3 572.1L1108.8 573.1L1109.3 571L1109.8 571.3L1110.3 574L1110.8 573.2L1111.3 571.8L1111.8 572L1112.3 572.2L1112.8 572.2L1113.3 574.6L1113.8 574.1L1114.3 573.3L1114.8 575.9L1115.3 575.2L1115.8 573.7L1116.3 574.9L1116.8 574.2L1117.3 574.6L1117.8 574.9L1118.3 575.2L1118.8 577.5L1119.3 576.3L1119.8 576.9L1120.3 577.5L1120.8 577.8L1121.3 578.4L1121.8 577.3L1122.3 576.9L1122.8 577.7L1123.3 577.2L1123.8 577.9L1124.3 577.1L1124.8 578L1125.3 577.8L1125.8 578.4L1126.3 576.8L1126.8 576.9L1127.3 578.1L1127.8 578.7L1128.3 577.9L1128.8 577.5L1129.3 578L1129.8 577.9L1130.3 577.4L1130.8 578.7L1131.3 577.7L1131.8 577.4L1132.3 577.7L1132.8 578.6L1133.3 578.6L1133.8 577.6L1134.3 578.5L1134.8 579L1135.3 578.7L1135.8 578.5L1136.3 578.5L1136.8 579.7L1137.3 579.7L1137.8 579.3L1138.3 579.8L1138.8 579.7L1139.3 579.5L1139.8 579.7L1140.3 579.5L1140.8 579.9L1141.3 579.9L1141.8 580L1142.3 580.5L1142.8 580.8L1143.3 580.3L1143.8 580.5L1144.3 581.1L1144.8 580.9L1145.3 580.7L1145.8 581L1146.3 580.6L1146.8 580.9L1147.3 580.9L1147.8 580.9L1148.3 580.8L1148.8 580.6L1149.3 581.1L1149.8 581.1L1150.3 580.7L1150.8 581.1L1151.3 581.1L1151.8 581.4L1152.3 581.2L1152.8 581.3L1153.3 581.3L1153.8 581.3L1154.3 581.2L1154.8 581.4L1155.3 581.7L1155.8 581.7L1156.3 581.8L1156.8 581.7L1157.3 581.3L1157.8 581.3L1158.3 581.7L1158.8 581.8L1159.3 581.1L1159.8 581.4L1160.3 581.3L1160.8 581.1L1161.3 581.8L1161.8 581.7L1162.3 581.4L1162.8 581.3L1163.3 581.7L1163.8 581.2L1164.3 581.2L1164.8 581.7L1165.3 581.5L1165.8 581L1166.3 581.2L1166.8 581.2L1167.3 581.7L1167.8 581.1L1168.3 581.6L1168.8 581.1L1169.3 581.4L1169.8 581.3L1170.3 581L1170.8 581.6L1171.3 581.2L1171.8 581.1L1172.3 581.1L1172.8 581.5L1173.3 581.3L1173.8 581.3L1174.3 581.5L1174.8 581L1175.3 580.9L1175.8 581.3L1176.3 581.3L1176.8 581L1177.3 581.5L1177.8 581.4L1178.3 581.1L1178.8 581.6L1179.3 581.5L1179.8 581.2L1180.3 581L1180.8 581.2L1181.3 581.5L1181.8 581L1182.3 581.1L1182.8 581.1L1183.3 580.9L1183.8 581L1184.3 581.4L1184.8 581.4L1185.3 581.1L1185.8 581.4L1186.3 581.1L1186.8 580.7L1187.3 581.3L1187.8 581.4L1188.3 581.4L1188.8 581.1L1189.3 580.8L1189.8 581L1190.3 580.9L1190.8 580.9L1191.3 581.3L1191.8 581.5L1192.3 580.9L1192.8 581L1193.3 581.7L1193.8 581.7L1194.3 581.3L1194.8 581L1195.3 581.2L1195.8 581.2L1196.3 581.4L1196.8 581.5L1197.3 581.1L1197.8 581.4L1198.3 581.3L1198.8 581.7L1199.3 581.4L1199.8 581.8L1200.3 581.9L1200.8 581.5L1201.3 581.8L1201.8 581.5L1202.3 581.5L1202.8 581.4L1203.3 581.6L1203.8 581.7L1204.3 581.6L1204.8 581.5L1205.3 582L1205.8 581.6L1206.3 581.9L1206.8 581.7L1207.3 581.5L1207.8 581.8L1207.8 585.5L1207.3 585.8L1206.8 586L1206.3 585.6L1205.8 585.9L1205.3 585.7L1204.8 585.6L1204.3 586.2L1203.8 586L1203.3 586.3L1202.8 586.1L1202.3 586.3L1201.8 586L1201.3 586.2L1200.8 585.9L1200.3 586L1199.8 585.7L1199.3 585.8L1198.8 585.9L1198.3 586.5L1197.8 586.2L1197.3 586L1196.8 586.5L1196.3 586.1L1195.8 586L1195.3 586.3L1194.8 585.9L1194.3 586.1L1193.8 586L1193.3 586.4L1192.8 586.2L1192.3 586.3L1191.8 585.9L1191.3 586.3L1190.8 586.4L1190.3 586.4L1189.8 586.1L1189.3 586.5L1188.8 586.2L1188.3 586L1187.8 586.2L1187.3 586.1L1186.8 586.5L1186.3 586.7L1185.8 586.2L1185.3 586.7L1184.8 586.1L1184.3 586.1L1183.8 586.2L1183.3 586.3L1182.8 586.4L1182.3 586.4L1181.8 586.2L1181.3 586.2L1180.8 586.7L1180.3 586.5L1179.8 586.6L1179.3 586.6L1178.8 586.8L1178.3 586.2L1177.8 586.7L1177.3 586.6L1176.8 586.1L1176.3 585.9L1175.8 586.4L1175.3 586.1L1174.8 586L1174.3 586.6L1173.8 586.5L1173.3 586.3L1172.8 586.6L1172.3 586.7L1171.8 586.2L1171.3 586.6L1170.8 586.7L1170.3 586.6L1169.8 586.1L1169.3 586.1L1168.8 586.1L1168.3 586.7L1167.8 586.3L1167.3 586.5L1166.8 586.3L1166.3 585.9L1165.8 586.1L1165.3 586.4L1164.8 585.8L1164.3 586.6L1163.8 585.9L1163.3 586.3L1162.8 586.4L1162.3 585.9L1161.8 586.3L1161.3 585.9L1160.8 585.9L1160.3 586.4L1159.8 586.4L1159.3 586L1158.8 586.2L1158.3 585.8L1157.8 586.4L1157.3 586L1156.8 586L1156.3 586.1L1155.8 586.2L1155.3 586.4L1154.8 586.3L1154.3 585.9L1153.8 586L1153.3 586.1L1152.8 586.6L1152.3 586L1151.8 586.2L1151.3 586.6L1150.8 586.8L1150.3 587L1149.8 586.8L1149.3 586.1L1148.8 586.9L1148.3 586.9L1147.8 587.2L1147.3 586.4L1146.8 586.8L1146.3 586.4L1145.8 587.1L1145.3 586.5L1144.8 586.7L1144.3 586.7L1143.8 586.7L1143.3 587.1L1142.8 587.2L1142.3 586.8L1141.8 587.5L1141.3 587.4L1140.8 587.5L1140.3 587.8L1139.8 588.4L1139.3 588.6L1138.8 588.5L1138.3 588.7L1137.8 587.5L1137.3 589.2L1136.8 588.4L1136.3 589.1L1135.8 587.9L1135.3 588.5L1134.8 589.4L1134.3 589.5L1133.8 588.5L1133.3 589.4L1132.8 588.5L1132.3 589L1131.8 590.1L1131.3 589.3L1130.8 589.7L1130.3 589L1129.8 590.6L1129.3 589.1L1128.8 589.7L1128.3 590L1127.8 589.4L1127.3 590L1126.8 590.1L1126.3 590.3L1125.8 589.8L1125.3 589.5L1124.8 589.8L1124.3 589.6L1123.8 590.9L1123.3 589.7L1122.8 589.2L1122.3 590.6L1121.8 590.7L1121.3 591.2L1120.8 590.7L1120.3 590.5L1119.8 590.5L1119.3 590.3L1118.8 590.9L1118.3 590.7L1117.8 590.7L1117.3 590.7L1116.8 592.2L1116.3 592L1115.8 591.9L1115.3 594L1114.8 592.2L1114.3 592.6L1113.8 593.1L1113.3 594.9L1112.8 595.3L1112.3 593.3L1111.8 593.9L1111.3 595.9L1110.8 596.2L1110.3 595.8L1109.8 596.4L1109.3 596.9L1108.8 596.9L1108.3 596.1L1107.8 597.1L1107.3 594.9L1106.8 595.4L1106.3 597.5L1105.8 597.8L1105.3 595.6L1104.8 597.2L1104.3 597.2L1103.8 598.1L1103.3 595.3L1102.8 596.7L1102.3 595.7L1101.8 597L1101.3 595.3L1100.8 594.6L1100.3 596.8L1099.8 594.7L1099.3 594.3L1098.8 595.3L1098.3 595L1097.8 593.4L1097.3 595.5L1096.8 593.2L1096.3 592L1095.8 594.6L1095.3 593.4L1094.8 591.5L1094.3 593.3L1093.8 593.1L1093.3 590.7L1092.8 593L1092.3 591.7L1091.8 592.7L1091.3 591.6L1090.8 592.1L1090.3 593.3L1089.8 594.1L1089.3 593.3L1088.8 594.1L1088.3 593.7L1087.8 594.1L1087.3 596.6L1086.8 595.9L1086.3 599L1085.8 599.4L1085.3 599.4L1084.8 600.2L1084.3 599.8L1083.8 599.1L1083.3 600.5L1082.8 601.5L1082.3 599.9L1081.8 601.1L1081.3 588.4L1080.8 584.6L1080.3 584.6L1079.8 584.6L1079.3 584.7L1078.8 584.7L1078.3 584.6L1077.8 584.7L1077.3 584.7L1076.8 584.6L1076.3 584.6L1075.8 584.6L1075.3 584.6L1074.8 584.6L1074.3 584.6L1073.8 584.6L1073.3 584.6L1072.8 584.6L1072.3 584.7L1071.8 584.6L1071.3 584.6L1070.8 584.6L1070.3 584.6L1069.8 584.7L1069.3 584.6L1068.8 584.6L1068.3 584.6L1067.8 584.6L1067.3 584.6L1066.8 584.6L1066.3 584.6L1065.8 584.7L1065.3 584.6L1064.8 584.7L1064.3 584.6L1063.8 584.6L1063.3 584.7L1062.8 584.6L1062.3 584.7L1061.8 584.6L1061.3 584.7L1060.8 584.7L1060.3 584.6L1059.8 584.6L1059.3 584.6L1058.8 584.6L1058.3 584.6L1057.8 584.7L1057.3 584.6L1056.8 584.6L1056.3 584.7L1055.8 584.6L1055.3 584.6L1054.8 584.6L1054.3 584.7L1053.8 584.7L1053.3 584.6L1052.8 584.6L1052.3 584.6L1051.8 584.6L1051.3 584.6L1050.8 584.6L1050.3 584.6L1049.8 584.7L1049.3 584.6L1048.8 584.6L1048.3 584.6L1047.8 584.6L1047.3 584.6L1046.8 584.7L1046.3 584.6L1045.8 584.6L1045.3 584.7L1044.8 584.7L1044.3 584.6L1043.8 584.6L1043.3 584.7L1042.8 584.6L1042.3 584.7L1041.8 584.6L1041.3 584.6L1040.8 584.6L1040.3 584.6L1039.8 584.6L1039.3 584.6L1038.8 584.6L1038.3 584.6L1037.8 584.6L1037.3 584.7L1036.8 584.7L1036.3 584.6L1035.8 584.6L1035.3 584.6L1034.8 584.6L1034.3 584.7L1033.8 584.6L1033.3 584.6L1032.8 584.6L1032.3 584.6L1031.8 584.6L1031.3 584.6L1030.8 584.6L1030.3 584.7L1029.8 584.6L1029.3 584.6Z" fill="#7fa8dc"/>
<path d="M1027.8 541L1031.8 541L1029.8 544Z M1027.8 613L1031.8 613L1029.8 610Z" fill="#151515"/>
<text x="316.7" y="551.6" font-size="8.8" font-weight="bold" fill="#e9f0fa">My Vocal</text>
<text x="1131" y="551.6" font-size="8.8" font-weight="bold" fill="#e9f0fa">My Vocal</text>
<rect x="573.3" y="614.5" width="727.2" height="73.0" rx="3.5" fill="#151515"/>
<rect x="573.8" y="615.0" width="726.2" height="72.0" rx="3" fill="#3770aa"/>
<clipPath id="tc"><rect x="573.8" y="628" width="634" height="58"/></clipPath>
<path clip-path="url(#tc)" d="M574 642.8L574.5 642.8L575 642.8L575.5 642.8L576 642.8L576.5 642.8L577 642.8L577.5 642.8L578 642.8L578.5 642.8L579 642.8L579.5 642.8L580 642.8L580.5 642.8L581 642.8L581.5 642.8L582 642.8L582.5 642.8L583 642.8L583.5 642.8L584 642.8L584.5 642.8L585 642.8L585.5 642.8L586 642.8L586.5 642.8L587 642.8L587.5 642.8L588 642.8L588.5 642.8L589 642.8L589.5 642.8L590 642.8L590.5 642.8L591 642.8L591.5 642.8L592 642.8L592.5 642.8L593 642.8L593.5 642.8L594 642.8L594.5 642.8L595 642.8L595.5 642.8L596 642.8L596.5 642.8L597 642.8L597.5 642.8L598 642.8L598.5 642.8L599 642.8L599.5 642.8L600 642.8L600.5 642.8L601 642.8L601.5 642.8L602 642.8L602.5 642.8L603 642.8L603.5 642.8L604 642.8L604.5 642.8L605 642.8L605.5 642.8L606 642.8L606.5 631.5L607 631.5L607.5 639.3L608 639.8L608.5 640.2L609 640.2L609.5 640.5L610 641L610.5 641.2L611 641.2L611.5 641.4L612 642.1L612.5 642L613 642.3L613.5 642.3L614 642.1L614.5 642.6L615 642.6L615.5 642.6L616 642.5L616.5 642.6L617 642.8L617.5 642.7L618 642.8L618.5 642.8L619 642.8L619.5 642.5L620 642.1L620.5 641.7L621 641.4L621.5 641.1L622 641.5L622.5 641.9L623 642.3L623.5 642.7L624 642.8L624.5 642.8L625 642.8L625.5 642.8L626 642.8L626.5 642.8L627 642.8L627.5 642.8L628 642.8L628.5 642.8L629 642.8L629.5 642.8L630 642.8L630.5 642.8L631 642.8L631.5 642.8L632 642.8L632.5 642.8L633 642.8L633.5 642.8L634 642.8L634.5 642.8L635 642.8L635.5 642.8L636 642.8L636.5 642.8L637 642.8L637.5 642.8L638 642.8L638.5 642.8L639 635.5L639.5 635.5L640 639.9L640.5 640.1L641 640.4L641.5 640.7L642 640.9L642.5 641.3L643 641.4L643.5 641.6L644 642.1L644.5 642.2L645 642.1L645.5 642.1L646 642.2L646.5 642.6L647 642.7L647.5 642.6L648 642.4L648.5 642.5L649 642.8L649.5 642.8L650 642.8L650.5 642.8L651 642.8L651.5 642.8L652 642.8L652.5 642.8L653 642.5L653.5 642.1L654 641.7L654.5 641.3L655 641L655.5 641.4L656 641.9L656.5 642.3L657 642.7L657.5 642.8L658 642.8L658.5 642.8L659 642.8L659.5 642.8L660 642.8L660.5 642.8L661 642.8L661.5 642.8L662 642.8L662.5 642.8L663 642.8L663.5 642.8L664 642.8L664.5 642.8L665 642.8L665.5 642.8L666 642.8L666.5 642.8L667 642.8L667.5 642.8L668 642.8L668.5 642.8L669 642.8L669.5 642.8L670 642.8L670.5 642.8L671 642.8L671.5 642.8L672 642.8L672.5 642.8L673 634.5L673.5 634.5L674 639.9L674.5 640.2L675 640.9L675.5 641L676 640.9L676.5 641.4L677 641.6L677.5 641.7L678 641.8L678.5 642.1L679 642.2L679.5 642.5L680 642.2L680.5 642.5L681 642.4L681.5 642.8L682 642.5L682.5 642.8L683 642.8L683.5 642.8L684 642.8L684.5 642.8L685 642.8L685.5 642.6L686 642.1L686.5 641.7L687 641.2L687.5 640.8L688 641.2L688.5 641.7L689 642.1L689.5 642.6L690 642.8L690.5 642.8L691 642.8L691.5 642.8L692 642.8L692.5 642.8L693 642.8L693.5 642.8L694 642.8L694.5 642.8L695 642.8L695.5 642.7L696 642.2L696.5 641.8L697 641.3L697.5 640.8L698 641.1L698.5 641.6L699 642L699.5 642.5L700 642.8L700.5 642.8L701 642.8L701.5 642.8L702 642.8L702.5 642.8L703 642.8L703.5 642.8L704 642.8L704.5 642.8L705 637L705.5 637L706 640.6L706.5 640.7L707 641.1L707.5 641.5L708 641.5L708.5 641.9L709 641.9L709.5 641.8L710 642.1L710.5 642L711 642.3L711.5 642.2L712 642.4L712.5 642.3L713 642.7L713.5 642.5L714 642.8L714.5 642.6L715 642.7L715.5 642.8L716 642.8L716.5 642.8L717 642.8L717.5 642.8L718 642.8L718.5 642.8L719 642.5L719.5 642L720 641.5L720.5 641L721 640.5L721.5 641L722 641.5L722.5 642L723 642.5L723.5 642.8L724 642.8L724.5 642.8L725 642.8L725.5 642.8L726 642.8L726.5 642.8L727 642.8L727.5 642.8L728 642.8L728.5 642.8L729 642.8L729.5 642.8L730 642.8L730.5 642.8L731 642.8L731.5 642.8L732 642.8L732.5 642.8L733 642.8L733.5 642.8L734 642.8L734.5 642.8L735 642.8L735.5 642.8L736 642.8L736.5 642.8L737 635.5L737.5 635.5L738 640.2L738.5 640.6L739 640.6L739.5 640.9L740 641.2L740.5 641.7L741 641.7L741.5 642L742 642.2L742.5 642.3L743 642.2L743.5 642.4L744 642.4L744.5 642.4L745 642.6L745.5 642.5L746 642.8L746.5 642.7L747 642.8L747.5 642.7L748 642.8L748.5 642.8L749 642.8L749.5 642.8L750 642.8L750.5 642.8L751 642.8L751.5 642.8L752 642.8L752.5 642.8L753 642.8L753.5 642.8L754 642.8L754.5 642.8L755 642.8L755.5 642.8L756 642.8L756.5 642.8L757 642.8L757.5 642.8L758 642.8L758.5 642.8L759 642.8L759.5 642.8L760 642.6L760.5 642.3L761 641.9L761.5 641.6L762 641.2L762.5 641.6L763 641.9L763.5 642.3L764 642.6L764.5 642.8L765 642.8L765.5 642.8L766 642.8L766.5 642.8L767 642.8L767.5 642.8L768 642.8L768.5 642.8L769 642.8L769.5 642.8L770 640L770.5 640L771 640.8L771.5 641.4L772 641.2L772.5 641.7L773 641.8L773.5 642L774 641.8L774.5 641.8L775 642.3L775.5 642.3L776 642.4L776.5 642.7L777 642.7L777.5 642.5L778 642.8L778.5 642.8L779 642.8L779.5 642.7L780 642.8L780.5 642.8L781 642.8L781.5 642.8L782 642.8L782.5 642.8L783 642.8L783.5 642.8L784 642.8L784.5 642.8L785 642.3L785.5 641.8L786 641.4L786.5 640.9L787 641L787.5 641.5L788 641.9L788.5 642.4L789 642.8L789.5 642.8L790 642.8L790.5 642.8L791 642.8L791.5 642.8L792 642.8L792.5 642.8L793 642.8L793.5 642.8L794 642.8L794.5 642.8L795 642.8L795.5 642.8L796 642.8L796.5 642.8L797 642.8L797.5 642.8L798 642.8L798.5 642.8L799 642.8L799.5 642.8L800 642.8L800.5 642.8L801 642.8L801.5 642.8L802 635.5L802.5 635.5L803 640.2L803.5 640.3L804 640.7L804.5 641.3L805 641.4L805.5 641.5L806 641.8L806.5 641.8L807 641.9L807.5 642.2L808 641.9L808.5 642.5L809 642.4L809.5 642.4L810 642.6L810.5 642.8L811 642.5L811.5 642.5L812 642.7L812.5 642.8L813 642.8L813.5 642.8L814 642.8L814.5 642.8L815 642.8L815.5 642.8L816 642.8L816.5 642.5L817 642.1L817.5 641.8L818 641.5L818.5 641.4L819 641.7L819.5 642.1L820 642.4L820.5 642.8L821 642.8L821.5 642.8L822 642.8L822.5 642.8L823 642.8L823.5 642.8L824 642.8L824.5 642.8L825 642.7L825.5 642.3L826 642L826.5 641.7L827 641.3L827.5 641.5L828 641.9L828.5 642.2L829 642.5L829.5 642.8L830 642.8L830.5 642.8L831 642.8L831.5 642.8L832 642.8L832.5 642.8L833 642.8L833.5 642.8L834 642.8L834 644.2L833.5 644.2L833 644.2L832.5 644.2L832 644.2L831.5 644.2L831 644.2L830.5 644.2L830 644.2L829.5 644.2L829 644.5L828.5 644.8L828 645.1L827.5 645.5L827 645.7L826.5 645.3L826 645L825.5 644.7L825 644.3L824.5 644.2L824 644.2L823.5 644.2L823 644.2L822.5 644.2L822 644.2L821.5 644.2L821 644.2L820.5 644.2L820 644.6L819.5 644.9L819 645.3L818.5 645.6L818 645.5L817.5 645.2L817 644.9L816.5 644.5L816 644.2L815.5 644.2L815 644.2L814.5 644.2L814 644.2L813.5 644.2L813 644.2L812.5 644.2L812 644.2L811.5 644.5L811 644.7L810.5 644.5L810 644.3L809.5 644.9L809 644.5L808.5 644.3L808 644.8L807.5 645.1L807 645.2L806.5 645.1L806 645.1L805.5 645.6L805 645.4L804.5 645.8L804 646.3L803.5 646.7L803 646.9L802.5 650.9L802 650.9L801.5 644.2L801 644.2L800.5 644.2L800 644.2L799.5 644.2L799 644.2L798.5 644.2L798 644.2L797.5 644.2L797 644.2L796.5 644.2L796 644.2L795.5 644.2L795 644.2L794.5 644.2L794 644.2L793.5 644.2L793 644.2L792.5 644.2L792 644.2L791.5 644.2L791 644.2L790.5 644.2L790 644.2L789.5 644.2L789 644.2L788.5 644.6L788 645.1L787.5 645.5L787 646L786.5 646.1L786 645.6L785.5 645.2L785 644.7L784.5 644.2L784 644.2L783.5 644.2L783 644.2L782.5 644.2L782 644.4L781.5 644.2L781 644.2L780.5 644.2L780 644.2L779.5 644.5L779 644.2L778.5 644.2L778 644.2L777.5 644.8L777 644.2L776.5 644.2L776 644.7L775.5 644.8L775 644.6L774.5 645.3L774 645.4L773.5 645.3L773 645.5L772.5 645L772 646L771.5 645.5L771 646.1L770.5 646.7L770 646.7L769.5 644.2L769 644.2L768.5 644.2L768 644.2L767.5 644.2L767 644.2L766.5 644.2L766 644.2L765.5 644.2L765 644.2L764.5 644.2L764 644.4L763.5 644.7L763 645.1L762.5 645.4L762 645.8L761.5 645.4L761 645.1L760.5 644.7L760 644.4L759.5 644.2L759 644.2L758.5 644.2L758 644.2L757.5 644.2L757 644.2L756.5 644.2L756 644.2L755.5 644.2L755 644.2L754.5 644.2L754 644.2L753.5 644.2L753 644.2L752.5 644.2L752 644.2L751.5 644.2L751 644.2L750.5 644.2L750 644.2L749.5 644.2L749 644.2L748.5 644.2L748 644.2L747.5 644.4L747 644.3L746.5 644.2L746 644.2L745.5 644.7L745 644.7L744.5 644.7L744 644.4L743.5 644.8L743 644.7L742.5 644.7L742 644.8L741.5 644.8L741 645.4L740.5 645.3L740 645.7L739.5 646.2L739 646.1L738.5 646.4L738 646.6L737.5 650.9L737 650.9L736.5 644.2L736 644.2L735.5 644.2L735 644.2L734.5 644.2L734 644.2L733.5 644.2L733 644.2L732.5 644.2L732 644.2L731.5 644.2L731 644.2L730.5 644.2L730 644.2L729.5 644.2L729 644.2L728.5 644.2L728 644.2L727.5 644.2L727 644.2L726.5 644.2L726 644.2L725.5 644.2L725 644.2L724.5 644.2L724 644.2L723.5 644.2L723 644.5L722.5 645L722 645.5L721.5 646L721 646.5L720.5 646L720 645.5L719.5 645L719 644.5L718.5 644.2L718 644.2L717.5 644.2L717 644.2L716.5 644.2L716 644.2L715.5 644.2L715 644.2L714.5 644.2L714 644.2L713.5 644.5L713 644.5L712.5 644.9L712 644.6L711.5 644.9L711 644.7L710.5 644.8L710 644.6L709.5 645.4L709 644.9L708.5 645.1L708 645.6L707.5 645.7L707 646.1L706.5 646.4L706 646.5L705.5 649.5L705 649.5L704.5 644.2L704 644.2L703.5 644.2L703 644.2L702.5 644.2L702 644.2L701.5 644.2L701 644.2L700.5 644.2L700 644.2L699.5 644.5L699 645L698.5 645.4L698 645.9L697.5 646.2L697 645.7L696.5 645.2L696 644.8L695.5 644.3L695 644.2L694.5 644.2L694 644.2L693.5 644.2L693 644.2L692.5 644.2L692 644.2L691.5 644.2L691 644.2L690.5 644.2L690 644.2L689.5 644.4L689 644.9L688.5 645.3L688 645.8L687.5 646.2L687 645.8L686.5 645.3L686 644.9L685.5 644.4L685 644.2L684.5 644.2L684 644.2L683.5 644.3L683 644.2L682.5 644.3L682 644.7L681.5 644.2L681 644.5L680.5 644.2L680 644.7L679.5 644.3L679 644.8L678.5 645.1L678 645.2L677.5 645.4L677 645.3L676.5 645.8L676 646.2L675.5 646.1L675 646.3L674.5 646.8L674 647.2L673.5 651.8L673 651.8L672.5 644.2L672 644.2L671.5 644.2L671 644.2L670.5 644.2L670 644.2L669.5 644.2L669 644.2L668.5 644.2L668 644.2L667.5 644.2L667 644.2L666.5 644.2L666 644.2L665.5 644.2L665 644.2L664.5 644.2L664 644.2L663.5 644.2L663 644.2L662.5 644.2L662 644.2L661.5 644.2L661 644.2L660.5 644.2L660 644.2L659.5 644.2L659 644.2L658.5 644.2L658 644.2L657.5 644.2L657 644.3L656.5 644.7L656 645.1L655.5 645.6L655 646L654.5 645.7L654 645.3L653.5 644.9L653 644.5L652.5 644.2L652 644.2L651.5 644.2L651 644.2L650.5 644.3L650 644.2L649.5 644.2L649 644.2L648.5 644.3L648 644.6L647.5 644.5L647 644.2L646.5 644.7L646 644.8L645.5 644.8L645 644.9L644.5 644.8L644 644.8L643.5 645.6L643 645.9L642.5 645.7L642 646.2L641.5 646.6L641 646.8L640.5 647L640 646.9L639.5 650.9L639 650.9L638.5 644.2L638 644.2L637.5 644.2L637 644.2L636.5 644.2L636 644.2L635.5 644.2L635 644.2L634.5 644.2L634 644.2L633.5 644.2L633 644.2L632.5 644.2L632 644.2L631.5 644.2L631 644.2L630.5 644.2L630 644.2L629.5 644.2L629 644.2L628.5 644.2L628 644.2L627.5 644.2L627 644.2L626.5 644.2L626 644.2L625.5 644.2L625 644.2L624.5 644.2L624 644.2L623.5 644.3L623 644.7L622.5 645.1L622 645.5L621.5 645.9L621 645.6L620.5 645.3L620 644.9L619.5 644.5L619 644.2L618.5 644.2L618 644.2L617.5 644.3L617 644.2L616.5 644.6L616 644.7L615.5 644.6L615 644.6L614.5 644.6L614 645L613.5 644.9L613 644.8L612.5 645.2L612 644.8L611.5 645.8L611 645.7L610.5 645.7L610 646.1L609.5 646.6L609 646.7L608.5 646.8L608 647.4L607.5 647.7L607 654.5L606.5 654.5L606 644.2L605.5 644.2L605 644.2L604.5 644.2L604 644.2L603.5 644.2L603 644.2L602.5 644.2L602 644.2L601.5 644.2L601 644.2L600.5 644.2L600 644.2L599.5 644.2L599 644.2L598.5 644.2L598 644.2L597.5 644.2L597 644.2L596.5 644.2L596 644.2L595.5 644.2L595 644.2L594.5 644.2L594 644.2L593.5 644.2L593 644.2L592.5 644.2L592 644.2L591.5 644.2L591 644.2L590.5 644.2L590 644.2L589.5 644.2L589 644.2L588.5 644.2L588 644.2L587.5 644.2L587 644.2L586.5 644.2L586 644.2L585.5 644.2L585 644.2L584.5 644.2L584 644.2L583.5 644.2L583 644.2L582.5 644.2L582 644.2L581.5 644.2L581 644.2L580.5 644.2L580 644.2L579.5 644.2L579 644.2L578.5 644.2L578 644.2L577.5 644.2L577 644.2L576.5 644.2L576 644.2L575.5 644.2L575 644.2L574.5 644.2L574 644.2Z" fill="#d6e6fb"/>
<path clip-path="url(#tc)" d="M834 642.8L834.5 642.8L835 642.8L835.5 642.8L836 642.8L836.5 642.8L837 642.8L837.5 642.8L838 642.8L838.5 642.8L839 642.8L839.5 642.8L840 642.8L840.5 642.8L841 642.8L841.5 642.8L842 642.8L842.5 642.8L843 642.8L843.5 642.8L844 642.8L844.5 642.8L845 642.8L845.5 642.8L846 642.8L846.5 642.8L847 642.8L847.5 642.8L848 642.8L848.5 642.8L849 642.8L849.5 642.8L850 642.8L850.5 642.8L851 642.8L851.5 642.8L852 642.8L852.5 642.8L853 642.8L853.5 642.8L854 642.8L854.5 642.8L855 642.8L855.5 642.8L856 642.8L856.5 642.8L857 642.8L857.5 642.8L858 642.8L858.5 642.8L859 642.8L859.5 642.8L860 642.8L860.5 642.8L861 642.8L861.5 642.8L862 642.8L862.5 642.8L863 642.8L863.5 642.8L864 642.8L864.5 642.8L865 642.8L865.5 642.8L866 642.8L866.5 642.8L867 642.8L867.5 631.5L868 631.5L868.5 639.2L869 639.5L869.5 640.1L870 640.4L870.5 640.8L871 641.2L871.5 641.1L872 641.4L872.5 641.7L873 641.7L873.5 642.1L874 642.2L874.5 642.2L875 642.3L875.5 642.3L876 642.6L876.5 642.8L877 642.8L877.5 642.6L878 642.8L878.5 642.8L879 642.8L879.5 642.8L880 642.8L880.5 642.5L881 642.1L881.5 641.7L882 641.4L882.5 641.1L883 641.5L883.5 641.9L884 642.3L884.5 642.7L885 642.8L885.5 642.8L886 642.8L886.5 642.8L887 642.8L887.5 642.8L888 642.8L888.5 642.8L889 642.8L889.5 642.8L890 642.8L890.5 642.8L891 642.8L891.5 642.8L892 642.8L892.5 642.8L893 642.8L893.5 642.8L894 642.8L894.5 642.8L895 642.8L895.5 642.8L896 642.8L896.5 642.8L897 642.8L897.5 642.8L898 642.8L898.5 642.8L899 642.8L899.5 642.8L900 635.5L900.5 635.5L901 639.8L901.5 640.2L902 640.4L902.5 641L903 640.9L903.5 641.2L904 641.4L904.5 641.7L905 641.8L905.5 642.2L906 642L906.5 642.4L907 642.3L907.5 642.4L908 642.6L908.5 642.6L909 642.5L909.5 642.7L910 642.7L910.5 642.8L911 642.8L911.5 642.8L912 642.8L912.5 642.8L913 642.8L913.5 642.8L914 642.5L914.5 642.1L915 641.7L915.5 641.3L916 641L916.5 641.4L917 641.9L917.5 642.3L918 642.7L918.5 642.8L919 642.8L919.5 642.8L920 642.8L920.5 642.8L921 642.8L921.5 642.8L922 642.8L922.5 642.8L923 642.8L923.5 642.8L924 642.8L924.5 642.8L925 642.8L925.5 642.8L926 642.8L926.5 642.8L927 642.8L927.5 642.8L928 642.8L928.5 642.8L929 642.8L929.5 642.8L930 642.8L930.5 642.8L931 642.8L931.5 642.8L932 642.8L932.5 642.8L933 642.8L933.5 642.8L934 634.5L934.5 634.5L935 640.2L935.5 640.4L936 640.8L936.5 640.9L937 641.4L937.5 641.4L938 641.4L938.5 641.7L939 641.9L939.5 642.2L940 642.1L940.5 642L941 642.5L941.5 642.2L942 642.3L942.5 642.8L943 642.5L943.5 642.8L944 642.8L944.5 642.8L945 642.8L945.5 642.8L946 642.8L946.5 642.6L947 642.1L947.5 641.7L948 641.2L948.5 640.8L949 641.2L949.5 641.7L950 642.1L950.5 642.6L951 642.8L951.5 642.8L952 642.8L952.5 642.8L953 642.8L953.5 642.8L954 642.8L954.5 642.8L955 642.8L955.5 642.8L956 642.8L956.5 642.7L957 642.2L957.5 641.8L958 641.3L958.5 640.8L959 641.1L959.5 641.6L960 642L960.5 642.5L961 642.8L961.5 642.8L962 642.8L962.5 642.8L963 642.8L963.5 642.8L964 642.8L964.5 642.8L965 642.8L965.5 642.8L966 637L966.5 637L967 640.9L967.5 640.9L968 641.1L968.5 641.4L969 641.6L969.5 641.7L970 641.8L970.5 641.9L971 642.1L971.5 642.1L972 642.3L972.5 642.4L973 642.3L973.5 642.8L974 642.8L974.5 642.6L975 642.5L975.5 642.6L976 642.8L976.5 642.8L977 642.8L977.5 642.8L978 642.8L978.5 642.8L979 642.8L979.5 642.8L980 642.5L980.5 642L981 641.5L981.5 641L982 640.5L982.5 641L983 641.5L983.5 642L984 642.5L984.5 642.8L985 642.8L985.5 642.8L986 642.8L986.5 642.8L987 642.8L987.5 642.8L988 642.8L988.5 642.8L989 642.8L989.5 642.8L990 642.8L990.5 642.8L991 642.8L991.5 642.8L992 642.8L992.5 642.8L993 642.8L993.5 642.8L994 642.8L994.5 642.8L995 642.8L995.5 642.8L996 642.8L996.5 642.8L997 642.8L997.5 642.8L998 635.5L998.5 635.5L999 640.2L999.5 640.3L1000 640.8L1000.5 640.8L1001 641.2L1001.5 641.3L1002 641.6L1002.5 642L1003 641.8L1003.5 641.9L1004 642.4L1004.5 642.4L1005 642.5L1005.5 642.3L1006 642.7L1006.5 642.8L1007 642.8L1007.5 642.7L1008 642.7L1008.5 642.8L1009 642.7L1009.5 642.8L1010 642.8L1010.5 642.8L1011 642.8L1011.5 642.8L1012 642.8L1012.5 642.8L1013 642.8L1013.5 642.8L1014 642.8L1014.5 642.8L1015 642.8L1015.5 642.8L1016 642.8L1016.5 642.8L1017 642.8L1017.5 642.8L1018 642.8L1018.5 642.8L1019 642.8L1019.5 642.8L1020 642.8L1020.5 642.8L1021 642.6L1021.5 642.3L1022 641.9L1022.5 641.6L1023 641.2L1023.5 641.6L1024 641.9L1024.5 642.3L1025 642.6L1025.5 642.8L1026 642.8L1026.5 642.8L1027 642.8L1027.5 642.8L1028 642.8L1028.5 642.8L1029 642.8L1029.5 642.8L1030 642.8L1030.5 642.8L1031 640L1031.5 640L1032 640.7L1032.5 641.1L1033 641.5L1033.5 641.4L1034 641.8L1034.5 641.8L1035 641.8L1035.5 641.9L1036 642L1036.5 642.5L1037 642.5L1037.5 642.4L1038 642.4L1038.5 642.7L1039 642.7L1039.5 642.6L1040 642.7L1040.5 642.8L1041 642.8L1041.5 642.8L1042 642.8L1042.5 642.8L1043 642.8L1043.5 642.8L1044 642.8L1044.5 642.8L1045 642.8L1045.5 642.8L1046 642.3L1046.5 641.8L1047 641.4L1047.5 640.9L1048 641L1048.5 641.5L1049 641.9L1049.5 642.4L1050 642.8L1050.5 642.8L1051 642.8L1051.5 642.8L1052 642.8L1052.5 642.8L1053 642.8L1053.5 642.8L1054 642.8L1054.5 642.8L1055 642.8L1055.5 642.8L1056 642.8L1056.5 642.8L1057 642.8L1057.5 642.8L1058 642.8L1058.5 642.8L1059 642.8L1059.5 642.8L1060 642.8L1060.5 642.8L1061 642.8L1061.5 642.8L1062 642.8L1062.5 642.8L1063 635.5L1063.5 635.5L1064 640.1L1064.5 640.2L1065 640.9L1065.5 641.1L1066 641L1066.5 641.6L1067 641.7L1067.5 641.9L1068 642.1L1068.5 642.1L1069 642.2L1069.5 642.4L1070 642.1L1070.5 642.6L1071 642.7L1071.5 642.8L1072 642.7L1072.5 642.7L1073 642.7L1073.5 642.8L1074 642.8L1074.5 642.8L1075 642.8L1075.5 642.8L1076 642.8L1076.5 642.8L1077 642.8L1077.5 642.5L1078 642.1L1078.5 641.8L1079 641.5L1079.5 641.4L1080 641.7L1080.5 642.1L1081 642.4L1081.5 642.8L1082 642.8L1082.5 642.8L1083 642.8L1083.5 642.8L1084 642.8L1084.5 642.8L1085 642.8L1085.5 642.8L1086 642.7L1086.5 642.3L1087 642L1087.5 641.7L1088 641.3L1088.5 641.5L1089 641.9L1089.5 642.2L1090 642.5L1090.5 642.8L1091 642.8L1091.5 642.8L1092 642.8L1092.5 642.8L1093 642.8L1093.5 642.8L1094 642.8L1094.5 642.8L1095 642.8L1095.5 642.8L1096 642.8L1096.5 642.8L1097 642.8L1097.5 642.8L1098 642.8L1098.5 642.8L1099 642.8L1099.5 642.8L1100 642.8L1100.5 642.8L1101 642.8L1101.5 642.8L1102 642.8L1102.5 642.8L1103 642.8L1103.5 642.8L1104 642.8L1104.5 642.8L1105 642.8L1105.5 642.8L1106 642.8L1106.5 642.8L1107 642.8L1107.5 642.8L1108 642.8L1108.5 642.8L1109 642.8L1109.5 642.8L1110 642.8L1110.5 642.8L1111 642.8L1111.5 642.8L1112 642.8L1112.5 642.8L1113 642.8L1113.5 642.8L1114 642.8L1114.5 642.8L1115 642.8L1115.5 642.8L1116 642.8L1116.5 642.8L1117 642.8L1117.5 642.8L1118 642.8L1118.5 642.8L1119 642.8L1119.5 642.8L1120 642.8L1120.5 642.8L1121 642.8L1121.5 642.8L1122 642.8L1122.5 642.8L1123 642.8L1123.5 642.8L1124 642.8L1124.5 642.8L1125 642.8L1125.5 642.8L1126 642.8L1126.5 642.8L1127 642.8L1127.5 642.8L1128 642.8L1128.5 631.5L1129 631.5L1129.5 639.4L1130 639.7L1130.5 640L1131 640.2L1131.5 640.7L1132 641.1L1132.5 641.1L1133 641.7L1133.5 641.7L1134 641.7L1134.5 642L1135 642.2L1135.5 642.4L1136 642.5L1136.5 642.6L1137 642.7L1137.5 642.8L1138 642.8L1138.5 642.7L1139 642.8L1139.5 642.7L1140 642.8L1140.5 642.8L1141 642.8L1141.5 642.5L1142 642.1L1142.5 641.7L1143 641.4L1143.5 641.1L1144 641.5L1144.5 641.9L1145 642.3L1145.5 642.7L1146 642.8L1146.5 642.8L1147 642.8L1147.5 642.8L1148 642.8L1148.5 642.8L1149 642.8L1149.5 642.8L1150 642.8L1150.5 642.8L1151 642.8L1151.5 642.8L1152 642.8L1152.5 642.8L1153 642.8L1153.5 642.8L1154 642.8L1154.5 642.8L1155 642.8L1155.5 642.8L1156 642.8L1156.5 642.8L1157 642.8L1157.5 642.8L1158 642.8L1158.5 642.8L1159 642.8L1159.5 642.8L1160 642.8L1160.5 642.8L1161 635.5L1161.5 635.5L1162 640.1L1162.5 640.2L1163 640.4L1163.5 641.1L1164 641.1L1164.5 641.1L1165 641.5L1165.5 641.5L1166 641.9L1166.5 642L1167 642.4L1167.5 642L1168 642.1L1168.5 642.7L1169 642.6L1169.5 642.8L1170 642.5L1170.5 642.6L1171 642.6L1171.5 642.8L1172 642.8L1172.5 642.8L1173 642.8L1173.5 642.8L1174 642.8L1174.5 642.8L1175 642.5L1175.5 642.1L1176 641.7L1176.5 641.3L1177 641L1177.5 641.4L1178 641.8L1178.5 642.3L1179 642.7L1179.5 642.8L1180 642.8L1180.5 642.8L1181 642.8L1181.5 642.8L1182 642.8L1182.5 642.8L1183 642.8L1183.5 642.8L1184 642.8L1184.5 642.8L1185 642.8L1185.5 642.8L1186 642.8L1186.5 642.8L1187 642.8L1187.5 642.8L1188 642.8L1188.5 642.8L1189 642.8L1189.5 642.8L1190 642.8L1190.5 642.8L1191 642.8L1191.5 642.8L1192 642.8L1192.5 642.8L1193 642.8L1193.5 642.8L1194 642.8L1194.5 642.8L1195 634.5L1195.5 634.5L1196 640.1L1196.5 640.2L1197 640.5L1197.5 641.1L1198 641.2L1198.5 641.4L1199 641.5L1199.5 641.6L1200 641.7L1200.5 641.9L1201 642.2L1201.5 642.3L1202 642.5L1202.5 642.4L1203 642.5L1203.5 642.4L1204 642.7L1204.5 642.8L1205 642.8L1205.5 642.7L1206 642.8L1206.5 642.8L1207 642.8L1207.5 642.6L1208 642.1L1208 644.9L1207.5 644.4L1207 644.2L1206.5 644.3L1206 644.2L1205.5 644.6L1205 644.4L1204.5 644.2L1204 644.6L1203.5 644.9L1203 644.4L1202.5 644.3L1202 644.4L1201.5 644.9L1201 644.7L1200.5 644.9L1200 645.1L1199.5 645.4L1199 645.5L1198.5 645.4L1198 645.6L1197.5 646.1L1197 646.2L1196.5 646.9L1196 646.9L1195.5 651.8L1195 651.8L1194.5 644.2L1194 644.2L1193.5 644.2L1193 644.2L1192.5 644.2L1192 644.2L1191.5 644.2L1191 644.2L1190.5 644.2L1190 644.2L1189.5 644.2L1189 644.2L1188.5 644.2L1188 644.2L1187.5 644.2L1187 644.2L1186.5 644.2L1186 644.2L1185.5 644.2L1185 644.2L1184.5 644.2L1184 644.2L1183.5 644.2L1183 644.2L1182.5 644.2L1182 644.2L1181.5 644.2L1181 644.2L1180.5 644.2L1180 644.2L1179.5 644.2L1179 644.3L1178.5 644.7L1178 645.2L1177.5 645.6L1177 646L1176.5 645.7L1176 645.3L1175.5 644.9L1175 644.5L1174.5 644.2L1174 644.2L1173.5 644.2L1173 644.2L1172.5 644.2L1172 644.2L1171.5 644.2L1171 644.3L1170.5 644.6L1170 644.4L1169.5 644.2L1169 644.6L1168.5 644.5L1168 644.6L1167.5 644.9L1167 644.4L1166.5 645L1166 645.2L1165.5 645.3L1165 645.6L1164.5 645.7L1164 646.2L1163.5 645.8L1163 646.6L1162.5 646.7L1162 646.7L1161.5 650.9L1161 650.9L1160.5 644.2L1160 644.2L1159.5 644.2L1159 644.2L1158.5 644.2L1158 644.2L1157.5 644.2L1157 644.2L1156.5 644.2L1156 644.2L1155.5 644.2L1155 644.2L1154.5 644.2L1154 644.2L1153.5 644.2L1153 644.2L1152.5 644.2L1152 644.2L1151.5 644.2L1151 644.2L1150.5 644.2L1150 644.2L1149.5 644.2L1149 644.2L1148.5 644.2L1148 644.2L1147.5 644.2L1147 644.2L1146.5 644.2L1146 644.2L1145.5 644.3L1145 644.7L1144.5 645.1L1144 645.5L1143.5 645.9L1143 645.6L1142.5 645.3L1142 644.9L1141.5 644.5L1141 644.2L1140.5 644.2L1140 644.2L1139.5 644.2L1139 644.2L1138.5 644.3L1138 644.2L1137.5 644.5L1137 644.3L1136.5 644.7L1136 644.8L1135.5 644.4L1135 645.1L1134.5 644.9L1134 645.6L1133.5 645.4L1133 645L1132.5 645.8L1132 646.1L1131.5 646.5L1131 647L1130.5 646.9L1130 647L1129.5 647.9L1129 654.5L1128.5 654.5L1128 644.2L1127.5 644.2L1127 644.2L1126.5 644.2L1126 644.2L1125.5 644.2L1125 644.2L1124.5 644.2L1124 644.2L1123.5 644.2L1123 644.2L1122.5 644.2L1122 644.2L1121.5 644.2L1121 644.2L1120.5 644.2L1120 644.2L1119.5 644.2L1119 644.2L1118.5 644.2L1118 644.2L1117.5 644.2L1117 644.2L1116.5 644.2L1116 644.2L1115.5 644.2L1115 644.2L1114.5 644.2L1114 644.2L1113.5 644.2L1113 644.2L1112.5 644.2L1112 644.2L1111.5 644.2L1111 644.2L1110.5 644.2L1110 644.2L1109.5 644.2L1109 644.2L1108.5 644.2L1108 644.2L1107.5 644.2L1107 644.2L1106.5 644.2L1106 644.2L1105.5 644.2L1105 644.2L1104.5 644.2L1104 644.2L1103.5 644.2L1103 644.2L1102.5 644.2L1102 644.2L1101.5 644.2L1101 644.2L1100.5 644.2L1100 644.2L1099.5 644.2L1099 644.2L1098.5 644.2L1098 644.2L1097.5 644.2L1097 644.2L1096.5 644.2L1096 644.2L1095.5 644.2L1095 644.2L1094.5 644.2L1094 644.2L1093.5 644.2L1093 644.2L1092.5 644.2L1092 644.2L1091.5 644.2L1091 644.2L1090.5 644.2L1090 644.5L1089.5 644.8L1089 645.1L1088.5 645.5L1088 645.7L1087.5 645.3L1087 645L1086.5 644.7L1086 644.3L1085.5 644.2L1085 644.2L1084.5 644.2L1084 644.2L1083.5 644.2L1083 644.2L1082.5 644.2L1082 644.2L1081.5 644.2L1081 644.6L1080.5 644.9L1080 645.3L1079.5 645.6L1079 645.5L1078.5 645.2L1078 644.9L1077.5 644.5L1077 644.2L1076.5 644.2L1076 644.2L1075.5 644.2L1075 644.2L1074.5 644.2L1074 644.2L1073.5 644.2L1073 644.2L1072.5 644.2L1072 644.2L1071.5 644.4L1071 644.2L1070.5 644.2L1070 644.7L1069.5 644.8L1069 645.1L1068.5 644.6L1068 645.2L1067.5 644.9L1067 645.6L1066.5 645.5L1066 646.1L1065.5 646.1L1065 646.4L1064.5 646.8L1064 646.9L1063.5 650.9L1063 650.9L1062.5 644.2L1062 644.2L1061.5 644.2L1061 644.2L1060.5 644.2L1060 644.2L1059.5 644.2L1059 644.2L1058.5 644.2L1058 644.2L1057.5 644.2L1057 644.2L1056.5 644.2L1056 644.2L1055.5 644.2L1055 644.2L1054.5 644.2L1054 644.2L1053.5 644.2L1053 644.2L1052.5 644.2L1052 644.2L1051.5 644.2L1051 644.2L1050.5 644.2L1050 644.2L1049.5 644.6L1049 645.1L1048.5 645.5L1048 646L1047.5 646.1L1047 645.6L1046.5 645.2L1046 644.7L1045.5 644.2L1045 644.2L1044.5 644.2L1044 644.3L1043.5 644.2L1043 644.2L1042.5 644.2L1042 644.3L1041.5 644.2L1041 644.2L1040.5 644.2L1040 644.3L1039.5 644.5L1039 644.3L1038.5 644.3L1038 644.8L1037.5 644.6L1037 644.4L1036.5 644.5L1036 644.7L1035.5 645.3L1035 645.3L1034.5 645.2L1034 645.1L1033.5 645.4L1033 645.4L1032.5 645.8L1032 646.1L1031.5 646.7L1031 646.7L1030.5 644.2L1030 644.2L1029.5 644.2L1029 644.2L1028.5 644.2L1028 644.2L1027.5 644.2L1027 644.2L1026.5 644.2L1026 644.2L1025.5 644.2L1025 644.4L1024.5 644.7L1024 645.1L1023.5 645.4L1023 645.8L1022.5 645.4L1022 645.1L1021.5 644.7L1021 644.4L1020.5 644.2L1020 644.2L1019.5 644.2L1019 644.2L1018.5 644.2L1018 644.2L1017.5 644.2L1017 644.2L1016.5 644.2L1016 644.2L1015.5 644.2L1015 644.2L1014.5 644.2L1014 644.2L1013.5 644.2L1013 644.2L1012.5 644.2L1012 644.2L1011.5 644.2L1011 644.2L1010.5 644.2L1010 644.3L1009.5 644.2L1009 644.4L1008.5 644.3L1008 644.2L1007.5 644.5L1007 644.2L1006.5 644.5L1006 644.3L1005.5 644.7L1005 644.3L1004.5 644.3L1004 644.3L1003.5 644.8L1003 645.2L1002.5 645.1L1002 645.2L1001.5 646L1001 645.5L1000.5 646.2L1000 646.5L999.5 646.6L999 647L998.5 650.9L998 650.9L997.5 644.2L997 644.2L996.5 644.2L996 644.2L995.5 644.2L995 644.2L994.5 644.2L994 644.2L993.5 644.2L993 644.2L992.5 644.2L992 644.2L991.5 644.2L991 644.2L990.5 644.2L990 644.2L989.5 644.2L989 644.2L988.5 644.2L988 644.2L987.5 644.2L987 644.2L986.5 644.2L986 644.2L985.5 644.2L985 644.2L984.5 644.2L984 644.5L983.5 645L983 645.5L982.5 646L982 646.5L981.5 646L981 645.5L980.5 645L980 644.5L979.5 644.2L979 644.2L978.5 644.2L978 644.2L977.5 644.2L977 644.2L976.5 644.2L976 644.3L975.5 644.7L975 644.4L974.5 644.3L974 644.2L973.5 644.2L973 644.5L972.5 644.4L972 644.7L971.5 645L971 644.7L970.5 644.8L970 645.4L969.5 645.2L969 645.4L968.5 645.4L968 645.7L967.5 646.1L967 646.3L966.5 649.5L966 649.5L965.5 644.2L965 644.2L964.5 644.2L964 644.2L963.5 644.2L963 644.2L962.5 644.2L962 644.2L961.5 644.2L961 644.2L960.5 644.5L960 645L959.5 645.4L959 645.9L958.5 646.2L958 645.7L957.5 645.2L957 644.8L956.5 644.3L956 644.2L955.5 644.2L955 644.2L954.5 644.2L954 644.2L953.5 644.2L953 644.2L952.5 644.2L952 644.2L951.5 644.2L951 644.2L950.5 644.4L950 644.9L949.5 645.3L949 645.8L948.5 646.2L948 645.8L947.5 645.3L947 644.9L946.5 644.4L946 644.2L945.5 644.2L945 644.2L944.5 644.2L944 644.2L943.5 644.3L943 644.5L942.5 644.2L942 644.6L941.5 644.6L941 644.7L940.5 645.1L940 645L939.5 645L939 645L938.5 645.5L938 645.8L937.5 645.8L937 645.5L936.5 646.2L936 646L935.5 646.8L935 646.9L934.5 651.8L934 651.8L933.5 644.2L933 644.2L932.5 644.2L932 644.2L931.5 644.2L931 644.2L930.5 644.2L930 644.2L929.5 644.2L929 644.2L928.5 644.2L928 644.2L927.5 644.2L927 644.2L926.5 644.2L926 644.2L925.5 644.2L925 644.2L924.5 644.2L924 644.2L923.5 644.2L923 644.2L922.5 644.2L922 644.2L921.5 644.2L921 644.2L920.5 644.2L920 644.2L919.5 644.2L919 644.2L918.5 644.2L918 644.3L917.5 644.7L917 645.1L916.5 645.6L916 646L915.5 645.7L915 645.3L914.5 644.9L914 644.5L913.5 644.2L913 644.2L912.5 644.2L912 644.2L911.5 644.2L911 644.2L910.5 644.2L910 644.2L909.5 644.2L909 644.8L908.5 644.2L908 644.2L907.5 644.4L907 644.6L906.5 644.8L906 644.8L905.5 644.9L905 645.4L904.5 645.5L904 645.6L903.5 646L903 645.9L902.5 645.9L902 646.6L901.5 646.7L901 647.3L900.5 650.9L900 650.9L899.5 644.2L899 644.2L898.5 644.2L898 644.2L897.5 644.2L897 644.2L896.5 644.2L896 644.2L895.5 644.2L895 644.2L894.5 644.2L894 644.2L893.5 644.2L893 644.2L892.5 644.2L892 644.2L891.5 644.2L891 644.2L890.5 644.2L890 644.2L889.5 644.2L889 644.2L888.5 644.2L888 644.2L887.5 644.2L887 644.2L886.5 644.2L886 644.2L885.5 644.2L885 644.2L884.5 644.3L884 644.7L883.5 645.1L883 645.5L882.5 645.9L882 645.6L881.5 645.3L881 644.9L880.5 644.5L880 644.2L879.5 644.2L879 644.2L878.5 644.2L878 644.2L877.5 644.7L877 644.2L876.5 644.2L876 644.2L875.5 644.5L875 644.5L874.5 645L874 645.1L873.5 645.2L873 645.2L872.5 645.1L872 645.5L871.5 646L871 645.9L870.5 646.1L870 646.5L869.5 647L869 647.4L868.5 647.9L868 654.5L867.5 654.5L867 644.2L866.5 644.2L866 644.2L865.5 644.2L865 644.2L864.5 644.2L864 644.2L863.5 644.2L863 644.2L862.5 644.2L862 644.2L861.5 644.2L861 644.2L860.5 644.2L860 644.2L859.5 644.2L859 644.2L858.5 644.2L858 644.2L857.5 644.2L857 644.2L856.5 644.2L856 644.2L855.5 644.2L855 644.2L854.5 644.2L854 644.2L853.5 644.2L853 644.2L852.5 644.2L852 644.2L851.5 644.2L851 644.2L850.5 644.2L850 644.2L849.5 644.2L849 644.2L848.5 644.2L848 644.2L847.5 644.2L847 644.2L846.5 644.2L846 644.2L845.5 644.2L845 644.2L844.5 644.2L844 644.2L843.5 644.2L843 644.2L842.5 644.2L842 644.2L841.5 644.2L841 644.2L840.5 644.2L840 644.2L839.5 644.2L839 644.2L838.5 644.2L838 644.2L837.5 644.2L837 644.2L836.5 644.2L836 644.2L835.5 644.2L835 644.2L834.5 644.2L834 644.2Z" fill="#7fa8dc"/>
<path clip-path="url(#tc)" d="M574 671L574.5 671L575 671L575.5 671L576 671L576.5 671L577 671L577.5 671L578 671L578.5 671L579 671L579.5 671L580 671L580.5 671L581 671L581.5 671L582 671L582.5 671L583 671L583.5 671L584 671L584.5 671L585 671L585.5 671L586 671L586.5 671L587 671L587.5 671L588 671L588.5 671L589 671L589.5 671L590 671L590.5 671L591 671L591.5 671L592 671L592.5 671L593 671L593.5 671L594 671L594.5 671L595 671L595.5 671L596 671L596.5 671L597 671L597.5 671L598 671L598.5 671L599 671L599.5 671L600 671L600.5 671L601 671L601.5 671L602 671L602.5 671L603 671L603.5 671L604 671L604.5 671L605 671L605.5 671L606 671L606.5 659.7L607 659.7L607.5 667.1L608 667.7L608.5 668L609 668.4L609.5 668.7L610 669.4L610.5 669.4L611 669.7L611.5 670.1L612 670.2L612.5 670L613 670.1L613.5 670.2L614 670.5L614.5 670.5L615 670.9L615.5 670.8L616 671L616.5 670.9L617 671L617.5 671L618 671L618.5 671L619 671L619.5 670.7L620 670.3L620.5 669.9L621 669.6L621.5 669.3L622 669.7L622.5 670.1L623 670.5L623.5 670.9L624 671L624.5 671L625 671L625.5 671L626 671L626.5 671L627 671L627.5 671L628 671L628.5 671L629 671L629.5 671L630 671L630.5 671L631 671L631.5 671L632 671L632.5 671L633 671L633.5 671L634 671L634.5 671L635 671L635.5 671L636 671L636.5 671L637 671L637.5 671L638 671L638.5 671L639 663.7L639.5 663.7L640 668.1L640.5 668.3L641 669L641.5 668.9L642 669.4L642.5 669.4L643 669.7L643.5 669.8L644 670.1L644.5 670.4L645 670.5L645.5 670.2L646 670.8L646.5 670.6L647 670.6L647.5 670.8L648 671L648.5 671L649 670.8L649.5 671L650 671L650.5 671L651 671L651.5 671L652 671L652.5 671L653 670.7L653.5 670.3L654 669.9L654.5 669.5L655 669.2L655.5 669.6L656 670.1L656.5 670.5L657 670.9L657.5 671L658 671L658.5 671L659 671L659.5 671L660 671L660.5 671L661 671L661.5 671L662 671L662.5 671L663 671L663.5 671L664 671L664.5 671L665 671L665.5 671L666 671L666.5 671L667 671L667.5 671L668 671L668.5 671L669 671L669.5 671L670 671L670.5 671L671 671L671.5 671L672 671L672.5 671L673 662.7L673.5 662.7L674 668.3L674.5 668.6L675 668.9L675.5 669.3L676 669.5L676.5 669.4L677 669.6L677.5 669.9L678 670.1L678.5 670.1L679 670.3L679.5 670.3L680 670.6L680.5 670.9L681 670.5L681.5 671L682 671L682.5 670.8L683 671L683.5 671L684 671L684.5 671L685 671L685.5 670.8L686 670.3L686.5 669.9L687 669.4L687.5 669L688 669.4L688.5 669.9L689 670.3L689.5 670.8L690 671L690.5 671L691 671L691.5 671L692 671L692.5 671L693 671L693.5 671L694 671L694.5 671L695 671L695.5 670.9L696 670.4L696.5 670L697 669.5L697.5 669L698 669.3L698.5 669.8L699 670.2L699.5 670.7L700 671L700.5 671L701 671L701.5 671L702 671L702.5 671L703 671L703.5 671L704 671L704.5 671L705 665.2L705.5 665.2L706 668.6L706.5 669.4L707 669.3L707.5 669.7L708 669.6L708.5 670.1L709 670.1L709.5 670L710 670.5L710.5 670.5L711 670.4L711.5 670.6L712 670.7L712.5 670.6L713 670.8L713.5 670.7L714 671L714.5 671L715 671L715.5 671L716 671L716.5 671L717 671L717.5 671L718 671L718.5 671L719 670.8L719.5 670.2L720 669.8L720.5 669.2L721 668.8L721.5 669.2L722 669.8L722.5 670.2L723 670.8L723.5 671L724 671L724.5 671L725 671L725.5 671L726 671L726.5 671L727 671L727.5 671L728 671L728.5 671L729 671L729.5 671L730 671L730.5 671L731 671L731.5 671L732 671L732.5 671L733 671L733.5 671L734 671L734.5 671L735 671L735.5 671L736 671L736.5 671L737 663.7L737.5 663.7L738 668.4L738.5 668.4L739 668.9L739.5 669.4L740 669.5L740.5 669.8L741 669.7L741.5 670.2L742 670.2L742.5 670.5L743 670.5L743.5 670.5L744 670.3L744.5 670.6L745 670.6L745.5 670.8L746 670.9L746.5 671L747 671L747.5 670.8L748 671L748.5 671L749 671L749.5 671L750 671L750.5 671L751 671L751.5 671L752 671L752.5 671L753 671L753.5 671L754 671L754.5 671L755 671L755.5 671L756 671L756.5 671L757 671L757.5 671L758 671L758.5 671L759 671L759.5 671L760 670.8L760.5 670.5L761 670.1L761.5 669.8L762 669.5L762.5 669.8L763 670.1L763.5 670.5L764 670.8L764.5 671L765 671L765.5 671L766 671L766.5 671L767 671L767.5 671L768 671L768.5 671L769 671L769.5 671L770 668.2L770.5 668.2L771 669.1L771.5 669.6L772 669.5L772.5 669.7L773 670L773.5 669.9L774 670.4L774.5 670.1L775 670.5L775.5 670.3L776 670.8L776.5 670.5L777 670.7L777.5 671L778 670.9L778.5 670.9L779 671L779.5 671L780 671L780.5 670.9L781 671L781.5 671L782 671L782.5 671L783 671L783.5 671L784 671L784.5 671L785 670.5L785.5 670L786 669.6L786.5 669.1L787 669.2L787.5 669.7L788 670.1L788.5 670.6L789 671L789.5 671L790 671L790.5 671L791 671L791.5 671L792 671L792.5 671L793 671L793.5 671L794 671L794.5 671L795 671L795.5 671L796 671L796.5 671L797 671L797.5 671L798 671L798.5 671L799 671L799.5 671L800 671L800.5 671L801 671L801.5 671L802 663.7L802.5 663.7L803 668.5L803.5 668.8L804 669L804.5 669.1L805 669.3L805.5 669.5L806 669.8L806.5 670.1L807 670.1L807.5 670.1L808 670.3L808.5 670.3L809 670.5L809.5 670.6L810 670.9L810.5 671L811 671L811.5 670.8L812 671L812.5 671L813 671L813.5 671L814 671L814.5 671L815 671L815.5 671L816 671L816.5 670.7L817 670.3L817.5 670L818 669.7L818.5 669.6L819 669.9L819.5 670.3L820 670.6L820.5 671L821 671L821.5 671L822 671L822.5 671L823 671L823.5 671L824 671L824.5 671L825 670.9L825.5 670.5L826 670.2L826.5 669.9L827 669.5L827.5 669.7L828 670.1L828.5 670.4L829 670.7L829.5 671L830 671L830.5 671L831 671L831.5 671L832 671L832.5 671L833 671L833.5 671L834 671L834 672.5L833.5 672.5L833 672.5L832.5 672.5L832 672.5L831.5 672.5L831 672.5L830.5 672.5L830 672.5L829.5 672.5L829 672.7L828.5 673L828 673.3L827.5 673.7L827 673.9L826.5 673.5L826 673.2L825.5 672.9L825 672.5L824.5 672.5L824 672.5L823.5 672.5L823 672.5L822.5 672.5L822 672.5L821.5 672.5L821 672.5L820.5 672.5L820 672.8L819.5 673.1L819 673.5L818.5 673.8L818 673.7L817.5 673.4L817 673.1L816.5 672.7L816 672.5L815.5 672.5L815 672.5L814.5 672.5L814 672.5L813.5 672.5L813 672.5L812.5 672.5L812 672.5L811.5 672.5L811 672.6L810.5 672.5L810 672.5L809.5 673L809 672.7L808.5 672.9L808 672.9L807.5 673.3L807 673.6L806.5 673.3L806 673.9L805.5 673.7L805 674.4L804.5 674.1L804 674.7L803.5 674.4L803 674.9L802.5 679.1L802 679.1L801.5 672.5L801 672.5L800.5 672.5L800 672.5L799.5 672.5L799 672.5L798.5 672.5L798 672.5L797.5 672.5L797 672.5L796.5 672.5L796 672.5L795.5 672.5L795 672.5L794.5 672.5L794 672.5L793.5 672.5L793 672.5L792.5 672.5L792 672.5L791.5 672.5L791 672.5L790.5 672.5L790 672.5L789.5 672.5L789 672.5L788.5 672.8L788 673.3L787.5 673.7L787 674.2L786.5 674.3L786 673.8L785.5 673.4L785 672.9L784.5 672.5L784 672.5L783.5 672.5L783 672.5L782.5 672.5L782 672.5L781.5 672.5L781 672.5L780.5 672.7L780 672.5L779.5 672.5L779 672.5L778.5 672.5L778 672.5L777.5 672.5L777 672.5L776.5 672.9L776 672.6L775.5 672.9L775 673.1L774.5 673.4L774 673.1L773.5 673.2L773 673.6L772.5 673.5L772 673.6L771.5 673.8L771 674.4L770.5 674.9L770 674.9L769.5 672.5L769 672.5L768.5 672.5L768 672.5L767.5 672.5L767 672.5L766.5 672.5L766 672.5L765.5 672.5L765 672.5L764.5 672.5L764 672.6L763.5 672.9L763 673.3L762.5 673.6L762 674L761.5 673.6L761 673.3L760.5 672.9L760 672.6L759.5 672.5L759 672.5L758.5 672.5L758 672.5L757.5 672.5L757 672.5L756.5 672.5L756 672.5L755.5 672.5L755 672.5L754.5 672.5L754 672.5L753.5 672.5L753 672.5L752.5 672.5L752 672.5L751.5 672.5L751 672.5L750.5 672.5L750 672.5L749.5 672.5L749 672.5L748.5 672.5L748 672.5L747.5 672.7L747 672.5L746.5 672.7L746 672.5L745.5 672.5L745 673.1L744.5 673.1L744 673.3L743.5 672.8L743 672.8L742.5 672.6L742 673.4L741.5 673.5L741 673.5L740.5 673.5L740 673.6L739.5 674.2L739 674.4L738.5 674.9L738 675.2L737.5 679.1L737 679.1L736.5 672.5L736 672.5L735.5 672.5L735 672.5L734.5 672.5L734 672.5L733.5 672.5L733 672.5L732.5 672.5L732 672.5L731.5 672.5L731 672.5L730.5 672.5L730 672.5L729.5 672.5L729 672.5L728.5 672.5L728 672.5L727.5 672.5L727 672.5L726.5 672.5L726 672.5L725.5 672.5L725 672.5L724.5 672.5L724 672.5L723.5 672.5L723 672.7L722.5 673.2L722 673.7L721.5 674.2L721 674.7L720.5 674.2L720 673.7L719.5 673.2L719 672.7L718.5 672.5L718 672.5L717.5 672.5L717 672.5L716.5 672.5L716 672.5L715.5 672.5L715 672.6L714.5 672.6L714 672.5L713.5 672.6L713 672.5L712.5 673L712 672.9L711.5 673L711 672.8L710.5 673L710 672.8L709.5 673.3L709 673.1L708.5 673.4L708 673.5L707.5 673.9L707 673.9L706.5 674.1L706 674.6L705.5 677.7L705 677.7L704.5 672.5L704 672.5L703.5 672.5L703 672.5L702.5 672.5L702 672.5L701.5 672.5L701 672.5L700.5 672.5L700 672.5L699.5 672.7L699 673.2L698.5 673.6L698 674.1L697.5 674.4L697 673.9L696.5 673.5L696 673L695.5 672.5L695 672.5L694.5 672.5L694 672.5L693.5 672.5L693 672.5L692.5 672.5L692 672.5L691.5 672.5L691 672.5L690.5 672.5L690 672.5L689.5 672.6L689 673.1L688.5 673.5L688 674L687.5 674.5L687 674L686.5 673.5L686 673.1L685.5 672.6L685 672.5L684.5 672.5L684 672.6L683.5 672.5L683 672.5L682.5 672.5L682 672.5L681.5 672.5L681 672.9L680.5 672.7L680 673.1L679.5 672.9L679 673.1L678.5 673.1L678 673.5L677.5 673.6L677 673.9L676.5 673.9L676 673.7L675.5 674.2L675 674.2L674.5 674.6L674 675.4L673.5 680L673 680L672.5 672.5L672 672.5L671.5 672.5L671 672.5L670.5 672.5L670 672.5L669.5 672.5L669 672.5L668.5 672.5L668 672.5L667.5 672.5L667 672.5L666.5 672.5L666 672.5L665.5 672.5L665 672.5L664.5 672.5L664 672.5L663.5 672.5L663 672.5L662.5 672.5L662 672.5L661.5 672.5L661 672.5L660.5 672.5L660 672.5L659.5 672.5L659 672.5L658.5 672.5L658 672.5L657.5 672.5L657 672.5L656.5 672.9L656 673.4L655.5 673.8L655 674.2L654.5 673.9L654 673.5L653.5 673.1L653 672.7L652.5 672.5L652 672.5L651.5 672.5L651 672.5L650.5 672.5L650 672.5L649.5 672.7L649 672.5L648.5 672.5L648 672.5L647.5 672.7L647 672.9L646.5 672.6L646 672.5L645.5 673.1L645 673L644.5 673.1L644 673.4L643.5 673.8L643 674L642.5 673.8L642 674.3L641.5 674.7L641 674.7L640.5 675.2L640 675.3L639.5 679.1L639 679.1L638.5 672.5L638 672.5L637.5 672.5L637 672.5L636.5 672.5L636 672.5L635.5 672.5L635 672.5L634.5 672.5L634 672.5L633.5 672.5L633 672.5L632.5 672.5L632 672.5L631.5 672.5L631 672.5L630.5 672.5L630 672.5L629.5 672.5L629 672.5L628.5 672.5L628 672.5L627.5 672.5L627 672.5L626.5 672.5L626 672.5L625.5 672.5L625 672.5L624.5 672.5L624 672.5L623.5 672.5L623 672.9L622.5 673.3L622 673.7L621.5 674.1L621 673.8L620.5 673.5L620 673.1L619.5 672.7L619 672.5L618.5 672.5L618 672.5L617.5 672.5L617 672.5L616.5 672.7L616 672.5L615.5 672.5L615 672.5L614.5 673L614 673L613.5 673.4L613 673.5L612.5 673.3L612 673.1L611.5 673.1L611 673.4L610.5 673.7L610 673.9L609.5 674.6L609 674.8L608.5 675.3L608 675.7L607.5 676L607 682.7L606.5 682.7L606 672.5L605.5 672.5L605 672.5L604.5 672.5L604 672.5L603.5 672.5L603 672.5L602.5 672.5L602 672.5L601.5 672.5L601 672.5L600.5 672.5L600 672.5L599.5 672.5L599 672.5L598.5 672.5L598 672.5L597.5 672.5L597 672.5L596.5 672.5L596 672.5L595.5 672.5L595 672.5L594.5 672.5L594 672.5L593.5 672.5L593 672.5L592.5 672.5L592 672.5L591.5 672.5L591 672.5L590.5 672.5L590 672.5L589.5 672.5L589 672.5L588.5 672.5L588 672.5L587.5 672.5L587 672.5L586.5 672.5L586 672.5L585.5 672.5L585 672.5L584.5 672.5L584 672.5L583.5 672.5L583 672.5L582.5 672.5L582 672.5L581.5 672.5L581 672.5L580.5 672.5L580 672.5L579.5 672.5L579 672.5L578.5 672.5L578 672.5L577.5 672.5L577 672.5L576.5 672.5L576 672.5L575.5 672.5L575 672.5L574.5 672.5L574 672.5Z" fill="#d6e6fb"/>
<path clip-path="url(#tc)" d="M834 671L834.5 671L835 671L835.5 671L836 671L836.5 671L837 671L837.5 671L838 671L838.5 671L839 671L839.5 671L840 671L840.5 671L841 671L841.5 671L842 671L842.5 671L843 671L843.5 671L844 671L844.5 671L845 671L845.5 671L846 671L846.5 671L847 671L847.5 671L848 671L848.5 671L849 671L849.5 671L850 671L850.5 671L851 671L851.5 671L852 671L852.5 671L853 671L853.5 671L854 671L854.5 671L855 671L855.5 671L856 671L856.5 671L857 671L857.5 671L858 671L858.5 671L859 671L859.5 671L860 671L860.5 671L861 671L861.5 671L862 671L862.5 671L863 671L863.5 671L864 671L864.5 671L865 671L865.5 671L866 671L866.5 671L867 671L867.5 659.7L868 659.7L868.5 667.1L869 667.6L869.5 668.3L870 668.7L870.5 669.1L871 669L871.5 669.7L872 669.7L872.5 670L873 670.2L873.5 670.4L874 670.3L874.5 670.2L875 670.6L875.5 670.4L876 670.8L876.5 670.7L877 671L877.5 670.9L878 671L878.5 671L879 671L879.5 671L880 671L880.5 670.7L881 670.3L881.5 669.9L882 669.6L882.5 669.3L883 669.7L883.5 670.1L884 670.5L884.5 670.9L885 671L885.5 671L886 671L886.5 671L887 671L887.5 671L888 671L888.5 671L889 671L889.5 671L890 671L890.5 671L891 671L891.5 671L892 671L892.5 671L893 671L893.5 671L894 671L894.5 671L895 671L895.5 671L896 671L896.5 671L897 671L897.5 671L898 671L898.5 671L899 671L899.5 671L900 663.7L900.5 663.7L901 668.1L901.5 668.3L902 669L902.5 669L903 669.2L903.5 669.5L904 669.7L904.5 670L905 670.2L905.5 670L906 670.1L906.5 670.4L907 670.6L907.5 670.4L908 670.8L908.5 670.9L909 671L909.5 671L910 670.9L910.5 671L911 671L911.5 671L912 671L912.5 671L913 671L913.5 671L914 670.7L914.5 670.3L915 669.9L915.5 669.5L916 669.2L916.5 669.6L917 670.1L917.5 670.5L918 670.9L918.5 671L919 671L919.5 671L920 671L920.5 671L921 671L921.5 671L922 671L922.5 671L923 671L923.5 671L924 671L924.5 671L925 671L925.5 671L926 671L926.5 671L927 671L927.5 671L928 671L928.5 671L929 671L929.5 671L930 671L930.5 671L931 671L931.5 671L932 671L932.5 671L933 671L933.5 671L934 662.7L934.5 662.7L935 668.2L935.5 668.3L936 668.8L936.5 669L937 669.4L937.5 669.7L938 669.8L938.5 669.8L939 670.3L939.5 670.1L940 670.5L940.5 670.2L941 670.5L941.5 670.6L942 670.5L942.5 670.6L943 670.7L943.5 670.8L944 670.9L944.5 671L945 671L945.5 671L946 671L946.5 670.8L947 670.3L947.5 669.9L948 669.4L948.5 669L949 669.4L949.5 669.9L950 670.3L950.5 670.8L951 671L951.5 671L952 671L952.5 671L953 671L953.5 671L954 671L954.5 671L955 671L955.5 671L956 671L956.5 670.9L957 670.4L957.5 670L958 669.5L958.5 669L959 669.3L959.5 669.8L960 670.2L960.5 670.7L961 671L961.5 671L962 671L962.5 671L963 671L963.5 671L964 671L964.5 671L965 671L965.5 671L966 665.2L966.5 665.2L967 668.8L967.5 668.9L968 669.3L968.5 669.6L969 670L969.5 669.9L970 669.9L970.5 670L971 670.1L971.5 670.4L972 670.6L972.5 670.7L973 670.7L973.5 670.6L974 671L974.5 671L975 671L975.5 671L976 670.9L976.5 671L977 671L977.5 671L978 671L978.5 671L979 671L979.5 671L980 670.8L980.5 670.2L981 669.8L981.5 669.2L982 668.8L982.5 669.2L983 669.8L983.5 670.2L984 670.8L984.5 671L985 671L985.5 671L986 671L986.5 671L987 671L987.5 671L988 671L988.5 671L989 671L989.5 671L990 671L990.5 671L991 671L991.5 671L992 671L992.5 671L993 671L993.5 671L994 671L994.5 671L995 671L995.5 671L996 671L996.5 671L997 671L997.5 671L998 663.7L998.5 663.7L999 668.1L999.5 668.8L1000 668.8L1000.5 669.5L1001 669.7L1001.5 669.6L1002 670L1002.5 669.8L1003 670.3L1003.5 670.1L1004 670.3L1004.5 670.3L1005 670.7L1005.5 670.7L1006 670.9L1006.5 670.7L1007 671L1007.5 670.8L1008 671L1008.5 671L1009 670.9L1009.5 671L1010 671L1010.5 671L1011 671L1011.5 671L1012 671L1012.5 671L1013 671L1013.5 671L1014 671L1014.5 671L1015 671L1015.5 671L1016 671L1016.5 671L1017 671L1017.5 671L1018 671L1018.5 671L1019 671L1019.5 671L1020 671L1020.5 671L1021 670.8L1021.5 670.5L1022 670.1L1022.5 669.8L1023 669.5L1023.5 669.8L1024 670.1L1024.5 670.5L1025 670.8L1025.5 671L1026 671L1026.5 671L1027 671L1027.5 671L1028 671L1028.5 671L1029 671L1029.5 671L1030 671L1030.5 671L1031 668.2L1031.5 668.2L1032 669.3L1032.5 669.5L1033 669.4L1033.5 669.7L1034 670.1L1034.5 669.9L1035 670L1035.5 670.4L1036 670.2L1036.5 670.7L1037 670.5L1037.5 670.6L1038 670.9L1038.5 670.7L1039 670.8L1039.5 670.9L1040 671L1040.5 670.9L1041 671L1041.5 671L1042 671L1042.5 671L1043 671L1043.5 671L1044 671L1044.5 671L1045 671L1045.5 671L1046 670.5L1046.5 670L1047 669.6L1047.5 669.1L1048 669.2L1048.5 669.7L1049 670.1L1049.5 670.6L1050 671L1050.5 671L1051 671L1051.5 671L1052 671L1052.5 671L1053 671L1053.5 671L1054 671L1054.5 671L1055 671L1055.5 671L1056 671L1056.5 671L1057 671L1057.5 671L1058 671L1058.5 671L1059 671L1059.5 671L1060 671L1060.5 671L1061 671L1061.5 671L1062 671L1062.5 671L1063 663.7L1063.5 663.7L1064 668.4L1064.5 668.6L1065 669L1065.5 669.4L1066 669.5L1066.5 669.6L1067 670L1067.5 670L1068 670.1L1068.5 670.4L1069 670.2L1069.5 670.6L1070 670.7L1070.5 670.8L1071 670.9L1071.5 670.7L1072 670.7L1072.5 671L1073 670.8L1073.5 671L1074 671L1074.5 671L1075 671L1075.5 671L1076 671L1076.5 671L1077 671L1077.5 670.7L1078 670.3L1078.5 670L1079 669.7L1079.5 669.6L1080 669.9L1080.5 670.3L1081 670.6L1081.5 671L1082 671L1082.5 671L1083 671L1083.5 671L1084 671L1084.5 671L1085 671L1085.5 671L1086 670.9L1086.5 670.5L1087 670.2L1087.5 669.9L1088 669.5L1088.5 669.7L1089 670.1L1089.5 670.4L1090 670.7L1090.5 671L1091 671L1091.5 671L1092 671L1092.5 671L1093 671L1093.5 671L1094 671L1094.5 671L1095 671L1095.5 671L1096 671L1096.5 671L1097 671L1097.5 671L1098 671L1098.5 671L1099 671L1099.5 671L1100 671L1100.5 671L1101 671L1101.5 671L1102 671L1102.5 671L1103 671L1103.5 671L1104 671L1104.5 671L1105 671L1105.5 671L1106 671L1106.5 671L1107 671L1107.5 671L1108 671L1108.5 671L1109 671L1109.5 671L1110 671L1110.5 671L1111 671L1111.5 671L1112 671L1112.5 671L1113 671L1113.5 671L1114 671L1114.5 671L1115 671L1115.5 671L1116 671L1116.5 671L1117 671L1117.5 671L1118 671L1118.5 671L1119 671L1119.5 671L1120 671L1120.5 671L1121 671L1121.5 671L1122 671L1122.5 671L1123 671L1123.5 671L1124 671L1124.5 671L1125 671L1125.5 671L1126 671L1126.5 671L1127 671L1127.5 671L1128 671L1128.5 659.7L1129 659.7L1129.5 667.5L1130 667.6L1130.5 668.1L1131 668.7L1131.5 669.2L1132 669L1132.5 669.3L1133 669.8L1133.5 670.1L1134 670.1L1134.5 670.2L1135 670.5L1135.5 670.6L1136 670.4L1136.5 670.6L1137 670.7L1137.5 670.9L1138 671L1138.5 671L1139 670.8L1139.5 671L1140 670.9L1140.5 671L1141 671L1141.5 670.7L1142 670.3L1142.5 669.9L1143 669.6L1143.5 669.3L1144 669.7L1144.5 670.1L1145 670.5L1145.5 670.9L1146 671L1146.5 671L1147 671L1147.5 671L1148 671L1148.5 671L1149 671L1149.5 671L1150 671L1150.5 671L1151 671L1151.5 671L1152 671L1152.5 671L1153 671L1153.5 671L1154 671L1154.5 671L1155 671L1155.5 671L1156 671L1156.5 671L1157 671L1157.5 671L1158 671L1158.5 671L1159 671L1159.5 671L1160 671L1160.5 671L1161 663.7L1161.5 663.7L1162 668.2L1162.5 668.5L1163 668.9L1163.5 669L1164 669.5L1164.5 669.8L1165 670L1165.5 669.8L1166 670.1L1166.5 670.3L1167 670.2L1167.5 670.5L1168 670.7L1168.5 670.5L1169 670.6L1169.5 670.6L1170 670.8L1170.5 670.7L1171 671L1171.5 671L1172 671L1172.5 671L1173 671L1173.5 671L1174 671L1174.5 671L1175 670.7L1175.5 670.3L1176 669.9L1176.5 669.5L1177 669.2L1177.5 669.6L1178 670L1178.5 670.5L1179 670.9L1179.5 671L1180 671L1180.5 671L1181 671L1181.5 671L1182 671L1182.5 671L1183 671L1183.5 671L1184 671L1184.5 671L1185 671L1185.5 671L1186 671L1186.5 671L1187 671L1187.5 671L1188 671L1188.5 671L1189 671L1189.5 671L1190 671L1190.5 671L1191 671L1191.5 671L1192 671L1192.5 671L1193 671L1193.5 671L1194 671L1194.5 671L1195 662.7L1195.5 662.7L1196 668.2L1196.5 668.8L1197 669.1L1197.5 669.1L1198 669.3L1198.5 669.6L1199 669.9L1199.5 669.7L1200 670L1200.5 670.1L1201 670.2L1201.5 670.4L1202 670.8L1202.5 670.7L1203 670.9L1203.5 670.6L1204 670.8L1204.5 671L1205 671L1205.5 671L1206 671L1206.5 671L1207 671L1207.5 670.8L1208 670.3L1208 673.1L1207.5 672.6L1207 672.5L1206.5 672.5L1206 672.5L1205.5 672.5L1205 672.6L1204.5 672.5L1204 672.5L1203.5 673.1L1203 672.6L1202.5 672.8L1202 672.7L1201.5 672.7L1201 673.1L1200.5 673.4L1200 673.5L1199.5 673.4L1199 673.6L1198.5 674.1L1198 674.4L1197.5 674.1L1197 674.2L1196.5 674.8L1196 675.1L1195.5 680L1195 680L1194.5 672.5L1194 672.5L1193.5 672.5L1193 672.5L1192.5 672.5L1192 672.5L1191.5 672.5L1191 672.5L1190.5 672.5L1190 672.5L1189.5 672.5L1189 672.5L1188.5 672.5L1188 672.5L1187.5 672.5L1187 672.5L1186.5 672.5L1186 672.5L1185.5 672.5L1185 672.5L1184.5 672.5L1184 672.5L1183.5 672.5L1183 672.5L1182.5 672.5L1182 672.5L1181.5 672.5L1181 672.5L1180.5 672.5L1180 672.5L1179.5 672.5L1179 672.5L1178.5 672.9L1178 673.4L1177.5 673.8L1177 674.2L1176.5 673.9L1176 673.5L1175.5 673.1L1175 672.7L1174.5 672.5L1174 672.5L1173.5 672.5L1173 672.5L1172.5 672.5L1172 672.7L1171.5 672.5L1171 672.6L1170.5 672.6L1170 672.5L1169.5 672.9L1169 672.6L1168.5 672.9L1168 672.9L1167.5 672.7L1167 673.2L1166.5 673.2L1166 673.6L1165.5 673.9L1165 673.2L1164.5 673.7L1164 673.7L1163.5 674.7L1163 674.4L1162.5 674.8L1162 674.9L1161.5 679.1L1161 679.1L1160.5 672.5L1160 672.5L1159.5 672.5L1159 672.5L1158.5 672.5L1158 672.5L1157.5 672.5L1157 672.5L1156.5 672.5L1156 672.5L1155.5 672.5L1155 672.5L1154.5 672.5L1154 672.5L1153.5 672.5L1153 672.5L1152.5 672.5L1152 672.5L1151.5 672.5L1151 672.5L1150.5 672.5L1150 672.5L1149.5 672.5L1149 672.5L1148.5 672.5L1148 672.5L1147.5 672.5L1147 672.5L1146.5 672.5L1146 672.5L1145.5 672.5L1145 672.9L1144.5 673.3L1144 673.7L1143.5 674.1L1143 673.8L1142.5 673.5L1142 673.1L1141.5 672.7L1141 672.5L1140.5 672.5L1140 672.7L1139.5 672.5L1139 672.5L1138.5 672.5L1138 672.5L1137.5 672.5L1137 672.9L1136.5 672.7L1136 673.2L1135.5 672.5L1135 672.7L1134.5 673.4L1134 673.5L1133.5 673L1133 673.9L1132.5 674.1L1132 674.6L1131.5 674.2L1131 674.9L1130.5 675.2L1130 675.5L1129.5 676.2L1129 682.7L1128.5 682.7L1128 672.5L1127.5 672.5L1127 672.5L1126.5 672.5L1126 672.5L1125.5 672.5L1125 672.5L1124.5 672.5L1124 672.5L1123.5 672.5L1123 672.5L1122.5 672.5L1122 672.5L1121.5 672.5L1121 672.5L1120.5 672.5L1120 672.5L1119.5 672.5L1119 672.5L1118.5 672.5L1118 672.5L1117.5 672.5L1117 672.5L1116.5 672.5L1116 672.5L1115.5 672.5L1115 672.5L1114.5 672.5L1114 672.5L1113.5 672.5L1113 672.5L1112.5 672.5L1112 672.5L1111.5 672.5L1111 672.5L1110.5 672.5L1110 672.5L1109.5 672.5L1109 672.5L1108.5 672.5L1108 672.5L1107.5 672.5L1107 672.5L1106.5 672.5L1106 672.5L1105.5 672.5L1105 672.5L1104.5 672.5L1104 672.5L1103.5 672.5L1103 672.5L1102.5 672.5L1102 672.5L1101.5 672.5L1101 672.5L1100.5 672.5L1100 672.5L1099.5 672.5L1099 672.5L1098.5 672.5L1098 672.5L1097.5 672.5L1097 672.5L1096.5 672.5L1096 672.5L1095.5 672.5L1095 672.5L1094.5 672.5L1094 672.5L1093.5 672.5L1093 672.5L1092.5 672.5L1092 672.5L1091.5 672.5L1091 672.5L1090.5 672.5L1090 672.7L1089.5 673L1089 673.3L1088.5 673.7L1088 673.9L1087.5 673.5L1087 673.2L1086.5 672.9L1086 672.5L1085.5 672.5L1085 672.5L1084.5 672.5L1084 672.5L1083.5 672.5L1083 672.5L1082.5 672.5L1082 672.5L1081.5 672.5L1081 672.8L1080.5 673.1L1080 673.5L1079.5 673.8L1079 673.7L1078.5 673.4L1078 673.1L1077.5 672.7L1077 672.5L1076.5 672.5L1076 672.5L1075.5 672.5L1075 672.5L1074.5 672.5L1074 672.5L1073.5 672.5L1073 672.8L1072.5 672.5L1072 672.5L1071.5 672.5L1071 672.5L1070.5 672.9L1070 672.5L1069.5 673L1069 672.9L1068.5 673.1L1068 673.3L1067.5 673.6L1067 673.4L1066.5 673.6L1066 673.8L1065.5 673.9L1065 674.6L1064.5 675.1L1064 675.1L1063.5 679.1L1063 679.1L1062.5 672.5L1062 672.5L1061.5 672.5L1061 672.5L1060.5 672.5L1060 672.5L1059.5 672.5L1059 672.5L1058.5 672.5L1058 672.5L1057.5 672.5L1057 672.5L1056.5 672.5L1056 672.5L1055.5 672.5L1055 672.5L1054.5 672.5L1054 672.5L1053.5 672.5L1053 672.5L1052.5 672.5L1052 672.5L1051.5 672.5L1051 672.5L1050.5 672.5L1050 672.5L1049.5 672.8L1049 673.3L1048.5 673.7L1048 674.2L1047.5 674.3L1047 673.8L1046.5 673.4L1046 672.9L1045.5 672.5L1045 672.5L1044.5 672.5L1044 672.5L1043.5 672.5L1043 672.5L1042.5 672.5L1042 672.5L1041.5 672.5L1041 672.5L1040.5 672.5L1040 672.5L1039.5 672.6L1039 672.7L1038.5 672.9L1038 672.7L1037.5 672.9L1037 673L1036.5 672.8L1036 673.2L1035.5 672.7L1035 673.6L1034.5 673.4L1034 673.4L1033.5 673.6L1033 674.1L1032.5 674L1032 673.9L1031.5 674.9L1031 674.9L1030.5 672.5L1030 672.5L1029.5 672.5L1029 672.5L1028.5 672.5L1028 672.5L1027.5 672.5L1027 672.5L1026.5 672.5L1026 672.5L1025.5 672.5L1025 672.6L1024.5 672.9L1024 673.3L1023.5 673.6L1023 674L1022.5 673.6L1022 673.3L1021.5 672.9L1021 672.6L1020.5 672.5L1020 672.5L1019.5 672.5L1019 672.5L1018.5 672.5L1018 672.5L1017.5 672.5L1017 672.5L1016.5 672.5L1016 672.5L1015.5 672.5L1015 672.5L1014.5 672.5L1014 672.5L1013.5 672.5L1013 672.5L1012.5 672.5L1012 672.5L1011.5 672.5L1011 672.5L1010.5 672.5L1010 672.5L1009.5 672.5L1009 672.5L1008.5 672.5L1008 672.5L1007.5 672.7L1007 672.5L1006.5 672.6L1006 672.5L1005.5 672.5L1005 673L1004.5 672.8L1004 673.2L1003.5 673.1L1003 672.9L1002.5 673.5L1002 673.4L1001.5 673.9L1001 673.8L1000.5 673.8L1000 674.8L999.5 674.5L999 675.4L998.5 679.1L998 679.1L997.5 672.5L997 672.5L996.5 672.5L996 672.5L995.5 672.5L995 672.5L994.5 672.5L994 672.5L993.5 672.5L993 672.5L992.5 672.5L992 672.5L991.5 672.5L991 672.5L990.5 672.5L990 672.5L989.5 672.5L989 672.5L988.5 672.5L988 672.5L987.5 672.5L987 672.5L986.5 672.5L986 672.5L985.5 672.5L985 672.5L984.5 672.5L984 672.7L983.5 673.2L983 673.7L982.5 674.2L982 674.7L981.5 674.2L981 673.7L980.5 673.2L980 672.7L979.5 672.5L979 672.5L978.5 672.5L978 672.5L977.5 672.5L977 672.5L976.5 672.5L976 672.7L975.5 672.5L975 672.5L974.5 672.5L974 672.5L973.5 672.7L973 672.7L972.5 672.6L972 672.7L971.5 673.1L971 673.2L970.5 673.4L970 673.2L969.5 673.8L969 673.6L968.5 673.7L968 673.8L967.5 674.6L967 674.5L966.5 677.7L966 677.7L965.5 672.5L965 672.5L964.5 672.5L964 672.5L963.5 672.5L963 672.5L962.5 672.5L962 672.5L961.5 672.5L961 672.5L960.5 672.7L960 673.2L959.5 673.6L959 674.1L958.5 674.4L958 673.9L957.5 673.5L957 673L956.5 672.5L956 672.5L955.5 672.5L955 672.5L954.5 672.5L954 672.5L953.5 672.5L953 672.5L952.5 672.5L952 672.5L951.5 672.5L951 672.5L950.5 672.6L950 673.1L949.5 673.5L949 674L948.5 674.5L948 674L947.5 673.5L947 673.1L946.5 672.6L946 672.5L945.5 672.5L945 672.5L944.5 672.5L944 672.5L943.5 672.7L943 672.8L942.5 672.9L942 673.1L941.5 672.8L941 672.9L940.5 673.1L940 673L939.5 673.2L939 672.8L938.5 673.7L938 673.3L937.5 673.7L937 674L936.5 674.6L936 674.4L935.5 675L935 675.1L934.5 680L934 680L933.5 672.5L933 672.5L932.5 672.5L932 672.5L931.5 672.5L931 672.5L930.5 672.5L930 672.5L929.5 672.5L929 672.5L928.5 672.5L928 672.5L927.5 672.5L927 672.5L926.5 672.5L926 672.5L925.5 672.5L925 672.5L924.5 672.5L924 672.5L923.5 672.5L923 672.5L922.5 672.5L922 672.5L921.5 672.5L921 672.5L920.5 672.5L920 672.5L919.5 672.5L919 672.5L918.5 672.5L918 672.5L917.5 672.9L917 673.4L916.5 673.8L916 674.2L915.5 673.9L915 673.5L914.5 673.1L914 672.7L913.5 672.5L913 672.5L912.5 672.5L912 672.5L911.5 672.5L911 672.5L910.5 672.5L910 672.5L909.5 672.5L909 672.6L908.5 672.6L908 672.5L907.5 673.2L907 672.6L906.5 673.2L906 673.5L905.5 673.7L905 673.5L904.5 673.5L904 673.5L903.5 673.8L903 674L902.5 674.2L902 674.1L901.5 675.1L901 675.2L900.5 679.1L900 679.1L899.5 672.5L899 672.5L898.5 672.5L898 672.5L897.5 672.5L897 672.5L896.5 672.5L896 672.5L895.5 672.5L895 672.5L894.5 672.5L894 672.5L893.5 672.5L893 672.5L892.5 672.5L892 672.5L891.5 672.5L891 672.5L890.5 672.5L890 672.5L889.5 672.5L889 672.5L888.5 672.5L888 672.5L887.5 672.5L887 672.5L886.5 672.5L886 672.5L885.5 672.5L885 672.5L884.5 672.5L884 672.9L883.5 673.3L883 673.7L882.5 674.1L882 673.8L881.5 673.5L881 673.1L880.5 672.7L880 672.5L879.5 672.5L879 672.7L878.5 672.5L878 672.5L877.5 672.5L877 672.5L876.5 672.5L876 672.5L875.5 672.9L875 672.7L874.5 673.1L874 673.2L873.5 673L873 673L872.5 673.5L872 673.9L871.5 673.7L871 674.2L870.5 674.6L870 674.7L869.5 675.4L869 675.6L868.5 676.1L868 682.7L867.5 682.7L867 672.5L866.5 672.5L866 672.5L865.5 672.5L865 672.5L864.5 672.5L864 672.5L863.5 672.5L863 672.5L862.5 672.5L862 672.5L861.5 672.5L861 672.5L860.5 672.5L860 672.5L859.5 672.5L859 672.5L858.5 672.5L858 672.5L857.5 672.5L857 672.5L856.5 672.5L856 672.5L855.5 672.5L855 672.5L854.5 672.5L854 672.5L853.5 672.5L853 672.5L852.5 672.5L852 672.5L851.5 672.5L851 672.5L850.5 672.5L850 672.5L849.5 672.5L849 672.5L848.5 672.5L848 672.5L847.5 672.5L847 672.5L846.5 672.5L846 672.5L845.5 672.5L845 672.5L844.5 672.5L844 672.5L843.5 672.5L843 672.5L842.5 672.5L842 672.5L841.5 672.5L841 672.5L840.5 672.5L840 672.5L839.5 672.5L839 672.5L838.5 672.5L838 672.5L837.5 672.5L837 672.5L836.5 672.5L836 672.5L835.5 672.5L835 672.5L834.5 672.5L834 672.5Z" fill="#7fa8dc"/>
<path d="M831.8 615L835.8 615L833.8 618Z M831.8 687L835.8 687L833.8 684Z" fill="#151515"/>
<path d="M1093.1 615L1097.1 615L1095.1 618Z M1093.1 687L1097.1 687L1095.1 684Z" fill="#151515"/>
<path d="M578 621.5L580.5 619L583 621.5M578 624.5L580.5 627L583 624.5" fill="none" stroke="#eaf5ea" stroke-width="1"/>
<text x="585" y="626" font-size="8.8" font-weight="bold" fill="#e9f0fa">铃鼓</text>
<g fill="none" stroke="#e8eef8" stroke-width="1"><circle cx="610.8" cy="623" r="3.6"/><circle cx="615.2" cy="623" r="3.6"/></g>
<rect x="571.8" y="97" width="2.6" height="623" fill="#4a5562" fill-opacity="0.75"/><rect x="572.6" y="97" width="1.1" height="623" fill="#a6b0bc"/>
<path d="M569 82H577.5Q580 82 580 84.5V88.6L573.2 96.2L566.4 88.6V84.5Q566.4 82 569 82Z" fill="#b4b4b4"/><rect x="572.7" y="83" width="1" height="13" fill="#d8d8d8"/>
<rect x="1146.5" y="72.2" width="53.3" height="15.2" rx="4" fill="#3d3d3d" fill-opacity="0.9"/>
<rect x="1151" y="79.5" width="45" height="2" rx="1" fill="#2e2e2e"/>
<circle cx="1164.8" cy="80.3" r="4.7" fill="#8e8e8e"/>
</g>
</svg>
</body></html>
